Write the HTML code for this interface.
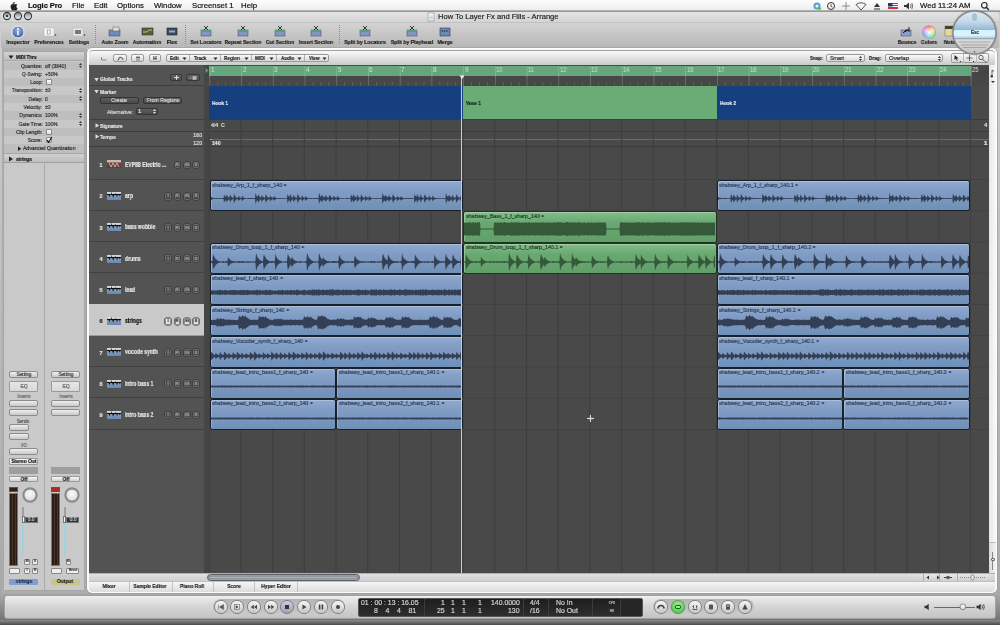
<!DOCTYPE html><html><head><meta charset="utf-8"><style>
*{margin:0;padding:0;box-sizing:border-box}
html,body{width:1000px;height:625px;overflow:hidden;background:#5e5e5e;font-family:"Liberation Sans",sans-serif}
.a{position:absolute}
.t{position:absolute;white-space:nowrap;line-height:1;-webkit-font-smoothing:antialiased;will-change:transform;-webkit-text-stroke-width:.18px}
.btn{position:absolute;border:1px solid #8a8a8a;border-radius:2px;background:linear-gradient(#f6f6f6,#d4d4d4)}
.dbtn{position:absolute;border:1px solid #2e2e2e;border-radius:2px;background:linear-gradient(#5c5c5c,#4a4a4a)}
</style></head><body>
<div class="a" style="left:0px;top:11px;width:1000px;height:614px;background:linear-gradient(#cfcfcf,#a8a8a8 95%,#6a6a6a);"></div>
<div class="a" style="left:0px;top:620px;width:1000px;height:5px;background:linear-gradient(#8a8a8a,#4a4a4a);"></div>
<div class="a" style="left:0px;top:0px;width:1000px;height:11px;background:linear-gradient(#fdfdfd,#ececec);"></div>
<div class="a" style="left:0px;top:10px;width:1000px;height:2px;background:linear-gradient(#bdbdbd,#8a8a8a);"></div>
<svg class="a" style="left:9px;top:1px;" width="10" height="10" viewBox="0 0 10 10"><path d="M5.2 2.6c.4-.5.7-1.1.6-1.7-.6 0-1.2.4-1.6.8-.3.4-.6 1-.5 1.6.6 0 1.1-.3 1.5-.7zM7.4 5.4c0-1.1.9-1.6.9-1.7-.5-.7-1.3-.8-1.5-.8-.6-.1-1.2.4-1.6.4-.3 0-.8-.3-1.4-.3-.7 0-1.4.4-1.8 1.1-.8 1.3-.2 3.3.5 4.4.4.5.8 1.1 1.4 1.1.5 0 .8-.4 1.4-.4s.8.4 1.4.3c.6 0 .9-.5 1.3-1.1.4-.6.5-1.100.6-1.200-.1 0-1.200-.5-1.200-1.800z" fill="#222"/></svg>
<div class="t" style="left:28px;top:1.95px;font-size:7.6px;color:#111;font-weight:bold;transform-origin:0 50%;letter-spacing:-0.1px">Logic Pro</div>
<div class="t" style="left:72px;top:1.86px;font-size:7.8px;color:#111;font-weight:normal;transform-origin:0 50%;">File</div>
<div class="t" style="left:94px;top:1.86px;font-size:7.8px;color:#111;font-weight:normal;transform-origin:0 50%;">Edit</div>
<div class="t" style="left:117px;top:1.86px;font-size:7.8px;color:#111;font-weight:normal;transform-origin:0 50%;">Options</div>
<div class="t" style="left:154px;top:1.86px;font-size:7.8px;color:#111;font-weight:normal;transform-origin:0 50%;">Window</div>
<div class="t" style="left:192px;top:1.86px;font-size:7.8px;color:#111;font-weight:normal;transform-origin:0 50%;">Screenset 1</div>
<div class="t" style="left:241px;top:1.86px;font-size:7.8px;color:#111;font-weight:normal;transform-origin:0 50%;">Help</div>
<div class="t" style="left:920px;top:1.86px;font-size:7.8px;color:#111;font-weight:normal;transform-origin:0 50%;">Wed 11:24 AM</div>
<svg class="a" style="left:812px;top:1px;" width="10" height="10" viewBox="0 0 10 10"><circle cx="5" cy="5" r="3.6" fill="#5aa0d8"/><circle cx="5" cy="5" r="1.5" fill="#dff"/><circle cx="7.5" cy="7.5" r="1.6" fill="#4c4"/></svg>
<svg class="a" style="left:826px;top:1px;" width="10" height="10" viewBox="0 0 10 10"><circle cx="5" cy="5" r="3.5" fill="none" stroke="#333" stroke-width="1"/><path d="M5 3v2.2l1.4 1" stroke="#333" stroke-width=".8" fill="none"/></svg>
<svg class="a" style="left:841px;top:1px;" width="10" height="10" viewBox="0 0 10 10"><path d="M1 5h8M5 1v8" stroke="#777" stroke-width=".8"/></svg>
<svg class="a" style="left:855px;top:1px;" width="12" height="10" viewBox="0 0 12 10"><path d="M1 3.5q5-3.5 10 0L6 9z" fill="none" stroke="#444" stroke-width=".9"/></svg>
<svg class="a" style="left:873px;top:1px;" width="8" height="10" viewBox="0 0 8 10"><path d="M1 6l3-4 3 4z M1 7.5h6v1H1z" fill="#333"/></svg>
<svg class="a" style="left:888px;top:2px;" width="10" height="8" viewBox="0 0 10 8"><rect x="0" y="1" width="10" height="6" fill="#c33"/><rect x="0" y="2" width="10" height="1" fill="#fff"/><rect x="0" y="4" width="10" height="1" fill="#fff"/><rect x="0" y="1" width="4.5" height="3.5" fill="#336"/></svg>
<svg class="a" style="left:903px;top:1px;" width="10" height="10" viewBox="0 0 10 10"><path d="M1 4h2l3-2.5v7L3 6H1z" fill="#333"/><path d="M7.5 3q1.3 2 0 4M8.8 2q2 3 0 6" stroke="#333" stroke-width=".7" fill="none"/></svg>
<svg class="a" style="left:980px;top:1px;" width="10" height="10" viewBox="0 0 10 10"><circle cx="4.3" cy="4.3" r="2.8" fill="none" stroke="#222" stroke-width="1.1"/><path d="M6.3 6.3l2.6 2.6" stroke="#222" stroke-width="1.4"/></svg>
<div class="a" style="left:1px;top:12px;width:998px;height:36px;background:linear-gradient(#e4e4e4 0%,#d6d6d6 25%,#c2c2c2 70%,#b6b6b6 100%);border-radius:4px 4px 0 0;"></div>
<div class="a" style="left:1px;top:22px;width:998px;height:1px;background:#b9b9b9;opacity:.7"></div>
<svg class="a" style="left:2.2px;top:11.4px;" width="10" height="10" viewBox="0 0 10 10"><defs><linearGradient id="tl" x1="0" y1="0" x2="0" y2="1"><stop offset="0" stop-color="#7a7e86"/><stop offset=".45" stop-color="#b4bcc6"/><stop offset="1" stop-color="#f4f8fc"/></linearGradient></defs><circle cx="5" cy="5" r="3.6" fill="url(#tl)" stroke="#3c3c3c" stroke-width="1.1"/><circle cx="5" cy="5" r="1.1" fill="#1a1a1a"/></svg>
<svg class="a" style="left:12.5px;top:11.4px;" width="10" height="10" viewBox="0 0 10 10"><defs><linearGradient id="tl" x1="0" y1="0" x2="0" y2="1"><stop offset="0" stop-color="#7a7e86"/><stop offset=".45" stop-color="#b4bcc6"/><stop offset="1" stop-color="#f4f8fc"/></linearGradient></defs><circle cx="5" cy="5" r="3.6" fill="url(#tl)" stroke="#3c3c3c" stroke-width="1.1"/></svg>
<svg class="a" style="left:23.0px;top:11.4px;" width="10" height="10" viewBox="0 0 10 10"><defs><linearGradient id="tl" x1="0" y1="0" x2="0" y2="1"><stop offset="0" stop-color="#7a7e86"/><stop offset=".45" stop-color="#b4bcc6"/><stop offset="1" stop-color="#f4f8fc"/></linearGradient></defs><circle cx="5" cy="5" r="3.6" fill="url(#tl)" stroke="#3c3c3c" stroke-width="1.1"/></svg>
<svg class="a" style="left:427px;top:12px;" width="8" height="10" viewBox="0 0 8 10"><rect x="1" y="1" width="6" height="8" fill="#fafafa" stroke="#888" stroke-width=".6"/><path d="M2 4h4M2 5.5h4M2 7h4" stroke="#999" stroke-width=".5"/></svg>
<div class="t" style="left:438px;top:13.15px;font-size:7.6px;color:#222;font-weight:normal;transform-origin:0 50%;">How To Layer Fx and Fills - Arrange</div>
<div class="t" style="left:-82px;width:200px;text-align:center;top:39.22px;font-size:6.2px;color:#1a1a1a;font-weight:bold;transform-origin:50% 50%;transform:scaleX(0.83);">Inspector</div>
<div class="t" style="left:-51px;width:200px;text-align:center;top:39.22px;font-size:6.2px;color:#1a1a1a;font-weight:bold;transform-origin:50% 50%;transform:scaleX(0.83);">Preferences</div>
<div class="t" style="left:-21.5px;width:200px;text-align:center;top:39.22px;font-size:6.2px;color:#1a1a1a;font-weight:bold;transform-origin:50% 50%;transform:scaleX(0.83);">Settings</div>
<div class="t" style="left:14.5px;width:200px;text-align:center;top:39.22px;font-size:6.2px;color:#1a1a1a;font-weight:bold;transform-origin:50% 50%;transform:scaleX(0.83);">Auto Zoom</div>
<div class="t" style="left:47px;width:200px;text-align:center;top:39.22px;font-size:6.2px;color:#1a1a1a;font-weight:bold;transform-origin:50% 50%;transform:scaleX(0.83);">Automation</div>
<div class="t" style="left:72px;width:200px;text-align:center;top:39.22px;font-size:6.2px;color:#1a1a1a;font-weight:bold;transform-origin:50% 50%;transform:scaleX(0.83);">Flex</div>
<div class="t" style="left:105.5px;width:200px;text-align:center;top:39.22px;font-size:6.2px;color:#1a1a1a;font-weight:bold;transform-origin:50% 50%;transform:scaleX(0.83);">Set Locators</div>
<div class="t" style="left:143px;width:200px;text-align:center;top:39.22px;font-size:6.2px;color:#1a1a1a;font-weight:bold;transform-origin:50% 50%;transform:scaleX(0.83);">Repeat Section</div>
<div class="t" style="left:179.5px;width:200px;text-align:center;top:39.22px;font-size:6.2px;color:#1a1a1a;font-weight:bold;transform-origin:50% 50%;transform:scaleX(0.83);">Cut Section</div>
<div class="t" style="left:215.5px;width:200px;text-align:center;top:39.22px;font-size:6.2px;color:#1a1a1a;font-weight:bold;transform-origin:50% 50%;transform:scaleX(0.83);">Insert Section</div>
<div class="t" style="left:265px;width:200px;text-align:center;top:39.22px;font-size:6.2px;color:#1a1a1a;font-weight:bold;transform-origin:50% 50%;transform:scaleX(0.83);">Split by Locators</div>
<div class="t" style="left:311.5px;width:200px;text-align:center;top:39.22px;font-size:6.2px;color:#1a1a1a;font-weight:bold;transform-origin:50% 50%;transform:scaleX(0.83);">Split by Playhead</div>
<div class="t" style="left:345px;width:200px;text-align:center;top:39.22px;font-size:6.2px;color:#1a1a1a;font-weight:bold;transform-origin:50% 50%;transform:scaleX(0.83);">Merge</div>
<div class="t" style="left:806.5px;width:200px;text-align:center;top:39.22px;font-size:6.2px;color:#1a1a1a;font-weight:bold;transform-origin:50% 50%;transform:scaleX(0.83);">Bounce</div>
<div class="t" style="left:828.5px;width:200px;text-align:center;top:39.22px;font-size:6.2px;color:#1a1a1a;font-weight:bold;transform-origin:50% 50%;transform:scaleX(0.83);">Colors</div>
<div class="t" style="left:851px;width:200px;text-align:center;top:39.22px;font-size:6.2px;color:#1a1a1a;font-weight:bold;transform-origin:50% 50%;transform:scaleX(0.83);">Notes</div>
<div class="a" style="left:95px;top:25px;width:1px;height:19px;background:repeating-linear-gradient(#8a8a8a 0 1px,transparent 1px 2px);"></div>
<div class="a" style="left:184.5px;top:25px;width:1px;height:19px;background:repeating-linear-gradient(#8a8a8a 0 1px,transparent 1px 2px);"></div>
<div class="a" style="left:338.5px;top:25px;width:1px;height:19px;background:repeating-linear-gradient(#8a8a8a 0 1px,transparent 1px 2px);"></div>
<svg class="a" style="left:11px;top:25px;" width="14" height="14" viewBox="0 0 14 14"><defs><radialGradient id="ib" cx=".5" cy=".35" r=".65"><stop offset="0" stop-color="#9ab6e6"/><stop offset="1" stop-color="#3a5aa0"/></radialGradient></defs><circle cx="7" cy="7" r="6" fill="url(#ib)" stroke="#eef" stroke-width="1"/><rect x="6.3" y="5.8" width="1.4" height="4.5" fill="#fff"/><circle cx="7" cy="4" r=".9" fill="#fff"/></svg>
<svg class="a" style="left:43px;top:27px;" width="14" height="10" viewBox="0 0 14 10"><rect x="1" y="1" width="10" height="8" fill="#f4f4f4" stroke="#bbb" stroke-width=".6"/><rect x="4.5" y="3" width="3" height="4" fill="none" stroke="#888" stroke-width=".6"/><circle cx="12.5" cy="8" r=".8" fill="#333"/></svg>
<svg class="a" style="left:72px;top:27px;" width="14" height="10" viewBox="0 0 14 10"><rect x="1" y="1" width="10" height="8" fill="#e8e8e8" stroke="#bbb" stroke-width=".6"/><rect x="3" y="3" width="6" height="4" fill="#777"/><circle cx="12.5" cy="8" r=".8" fill="#333"/></svg>
<svg class="a" style="left:108px;top:26px;" width="14" height="11" viewBox="0 0 14 11"><rect x="1" y="4" width="11" height="6" fill="#6a8ac0" stroke="#445" stroke-width=".5"/><rect x="5" y="1" width="6" height="4" fill="#ddd" stroke="#666" stroke-width=".5"/></svg>
<svg class="a" style="left:141px;top:27px;" width="13" height="9" viewBox="0 0 13 9"><rect x="1" y="1" width="11" height="7" fill="#58603a" stroke="#333" stroke-width=".6"/><path d="M2 5h4l2-2h3" stroke="#cde070" stroke-width=".8" fill="none"/></svg>
<svg class="a" style="left:166px;top:27px;" width="12" height="9" viewBox="0 0 12 9"><rect x="1" y="1" width="10" height="7" fill="#3c4a64" stroke="#222" stroke-width=".6"/><rect x="3" y="3.5" width="6" height="2" fill="#9ab"/></svg>
<svg class="a" style="left:199.5px;top:25px;" width="12" height="12" viewBox="0 0 12 12"><rect x="1" y="5" width="10" height="6" fill="#7d98c4" stroke="#445" stroke-width=".5"/><rect x="1" y="5" width="10" height="2" fill="#5aa070"/><path d="M4 1l4 4M8 1L4 5" stroke="#223" stroke-width=".9"/></svg>
<svg class="a" style="left:237px;top:25px;" width="12" height="12" viewBox="0 0 12 12"><rect x="1" y="5" width="10" height="6" fill="#7d98c4" stroke="#445" stroke-width=".5"/><rect x="1" y="5" width="10" height="2" fill="#5aa070"/><path d="M4 1l4 4M8 1L4 5" stroke="#223" stroke-width=".9"/></svg>
<svg class="a" style="left:273.5px;top:25px;" width="12" height="12" viewBox="0 0 12 12"><rect x="1" y="5" width="10" height="6" fill="#7d98c4" stroke="#445" stroke-width=".5"/><rect x="1" y="5" width="10" height="2" fill="#5aa070"/><path d="M4 1l4 4M8 1L4 5" stroke="#223" stroke-width=".9"/></svg>
<svg class="a" style="left:309.5px;top:25px;" width="12" height="12" viewBox="0 0 12 12"><rect x="1" y="5" width="10" height="6" fill="#7d98c4" stroke="#445" stroke-width=".5"/><rect x="1" y="5" width="10" height="2" fill="#5aa070"/><path d="M4 1l4 4M8 1L4 5" stroke="#223" stroke-width=".9"/></svg>
<svg class="a" style="left:359px;top:25px;" width="12" height="12" viewBox="0 0 12 12"><rect x="1" y="5" width="10" height="6" fill="#7d98c4" stroke="#445" stroke-width=".5"/><rect x="1" y="5" width="10" height="2" fill="#5aa070"/><path d="M4 1l4 4M8 1L4 5" stroke="#223" stroke-width=".9"/></svg>
<svg class="a" style="left:405.5px;top:25px;" width="12" height="12" viewBox="0 0 12 12"><rect x="1" y="5" width="10" height="6" fill="#7d98c4" stroke="#445" stroke-width=".5"/><rect x="1" y="5" width="10" height="2" fill="#5aa070"/><path d="M4 1l4 4M8 1L4 5" stroke="#223" stroke-width=".9"/></svg>
<svg class="a" style="left:439px;top:26px;" width="12" height="11" viewBox="0 0 12 11"><rect x="1" y="2" width="10" height="8" fill="#6a8ab8" stroke="#334" stroke-width=".6"/><path d="M2.5 5h7" stroke="#112" stroke-width="1.2" stroke-dasharray="1.4 .9"/></svg>
<svg class="a" style="left:900px;top:25px;" width="13" height="12" viewBox="0 0 13 12"><rect x="1" y="5" width="10" height="6" fill="#8aa0c8" stroke="#445" stroke-width=".5"/><path d="M3 8l3-3h3M9 2v5" stroke="#223" stroke-width="1"/></svg>
<div class="a" style="left:922.5px;top:25.5px;width:12px;height:12px;border-radius:50%;background:radial-gradient(circle,#fff 0,rgba(255,255,255,.6) 30%,rgba(255,255,255,0) 70%),conic-gradient(#f66,#fd6,#8e8,#6de,#89f,#e8e,#f66);box-shadow:0 0 0 .8px #999;"></div>
<svg class="a" style="left:944px;top:25px;" width="12" height="12" viewBox="0 0 12 12"><rect x="1" y="1" width="10" height="10" fill="#e8d890" stroke="#777" stroke-width=".6"/><rect x="1" y="1" width="10" height="3" fill="#443"/></svg>
<div class="a" style="left:2px;top:48px;width:85px;height:545px;background:#aeaeae;"></div>
<div class="a" style="left:3px;top:51px;width:82px;height:540px;background:#c8c8c8;border:1px solid #a6a6a6;border-radius:3px;"></div>
<div class="a" style="left:4px;top:52px;width:80px;height:9px;background:linear-gradient(#d4d4d4,#bdbdbd);border-bottom:1px solid #a8a8a8;"></div>
<svg class="a" style="left:8px;top:53.5px;" width="6" height="6" viewBox="0 0 6 6"><path d="M0.5 1.5h5L3 5z" fill="#222"/></svg>
<div class="t" style="left:15.5px;top:53.72px;font-size:6px;color:#111;font-weight:bold;transform-origin:0 50%;transform:scaleX(0.74);">MIDI Thru</div>
<div class="a" style="left:4px;top:61.6px;width:80px;height:8.3px;background:#bebebe;"></div>
<div class="t" style="right:957.7px;top:63.67px;font-size:5.9px;color:#2a2a2a;font-weight:normal;text-align:right;transform-origin:100% 50%;transform:scaleX(0.84);">Quantize:</div>
<div class="t" style="left:45px;top:63.67px;font-size:5.9px;color:#2a2a2a;font-weight:normal;transform-origin:0 50%;transform:scaleX(0.84);">off (3840)</div>
<svg class="a" style="left:78px;top:62.2px;" width="5" height="7" viewBox="0 0 5 7"><path d="M1 3l1.5-2L4 3zM1 4l1.5 2L4 4z" fill="#333"/></svg>
<div class="t" style="right:957.7px;top:71.94px;font-size:5.9px;color:#2a2a2a;font-weight:normal;text-align:right;transform-origin:100% 50%;transform:scaleX(0.84);">Q-Swing:</div>
<div class="t" style="left:45px;top:71.94px;font-size:5.9px;color:#2a2a2a;font-weight:normal;transform-origin:0 50%;transform:scaleX(0.84);">+50%</div>
<div class="a" style="left:4px;top:78.14000000000001px;width:80px;height:8.3px;background:#bebebe;"></div>
<div class="t" style="right:957.7px;top:80.21px;font-size:5.9px;color:#2a2a2a;font-weight:normal;text-align:right;transform-origin:100% 50%;transform:scaleX(0.84);">Loop:</div>
<div class="a" style="left:45.5px;top:79.24000000000001px;width:6px;height:6px;background:linear-gradient(#fff,#ddd);border:1px solid #888;border-radius:1px;"></div>
<div class="t" style="right:957.7px;top:88.48px;font-size:5.9px;color:#2a2a2a;font-weight:normal;text-align:right;transform-origin:100% 50%;transform:scaleX(0.84);">Transposition:</div>
<div class="t" style="left:45px;top:88.48px;font-size:5.9px;color:#2a2a2a;font-weight:normal;transform-origin:0 50%;transform:scaleX(0.84);">±0</div>
<svg class="a" style="left:78px;top:87.01px;" width="5" height="7" viewBox="0 0 5 7"><path d="M1 3l1.5-2L4 3zM1 4l1.5 2L4 4z" fill="#333"/></svg>
<div class="a" style="left:4px;top:94.68px;width:80px;height:8.3px;background:#bebebe;"></div>
<div class="t" style="right:957.7px;top:96.75px;font-size:5.9px;color:#2a2a2a;font-weight:normal;text-align:right;transform-origin:100% 50%;transform:scaleX(0.84);">Delay:</div>
<div class="t" style="left:45px;top:96.75px;font-size:5.9px;color:#2a2a2a;font-weight:normal;transform-origin:0 50%;transform:scaleX(0.84);">0</div>
<svg class="a" style="left:78px;top:95.28px;" width="5" height="7" viewBox="0 0 5 7"><path d="M1 3l1.5-2L4 3zM1 4l1.5 2L4 4z" fill="#333"/></svg>
<div class="t" style="right:957.7px;top:105.02px;font-size:5.9px;color:#2a2a2a;font-weight:normal;text-align:right;transform-origin:100% 50%;transform:scaleX(0.84);">Velocity:</div>
<div class="t" style="left:45px;top:105.02px;font-size:5.9px;color:#2a2a2a;font-weight:normal;transform-origin:0 50%;transform:scaleX(0.84);">±0</div>
<div class="a" style="left:4px;top:111.22px;width:80px;height:8.3px;background:#bebebe;"></div>
<div class="t" style="right:957.7px;top:113.29px;font-size:5.9px;color:#2a2a2a;font-weight:normal;text-align:right;transform-origin:100% 50%;transform:scaleX(0.84);">Dynamics:</div>
<div class="t" style="left:45px;top:113.29px;font-size:5.9px;color:#2a2a2a;font-weight:normal;transform-origin:0 50%;transform:scaleX(0.84);">100%</div>
<svg class="a" style="left:78px;top:111.82px;" width="5" height="7" viewBox="0 0 5 7"><path d="M1 3l1.5-2L4 3zM1 4l1.5 2L4 4z" fill="#333"/></svg>
<div class="t" style="right:957.7px;top:121.56px;font-size:5.9px;color:#2a2a2a;font-weight:normal;text-align:right;transform-origin:100% 50%;transform:scaleX(0.84);">Gate Time:</div>
<div class="t" style="left:45px;top:121.56px;font-size:5.9px;color:#2a2a2a;font-weight:normal;transform-origin:0 50%;transform:scaleX(0.84);">100%</div>
<svg class="a" style="left:78px;top:120.09px;" width="5" height="7" viewBox="0 0 5 7"><path d="M1 3l1.5-2L4 3zM1 4l1.5 2L4 4z" fill="#333"/></svg>
<div class="a" style="left:4px;top:127.76000000000002px;width:80px;height:8.3px;background:#bebebe;"></div>
<div class="t" style="right:957.7px;top:129.83px;font-size:5.9px;color:#2a2a2a;font-weight:normal;text-align:right;transform-origin:100% 50%;transform:scaleX(0.84);">Clip Length:</div>
<div class="a" style="left:45.5px;top:128.86px;width:6px;height:6px;background:linear-gradient(#fff,#ddd);border:1px solid #888;border-radius:1px;"></div>
<div class="t" style="right:957.7px;top:138.10px;font-size:5.9px;color:#2a2a2a;font-weight:normal;text-align:right;transform-origin:100% 50%;transform:scaleX(0.84);">Score:</div>
<div class="a" style="left:45.5px;top:137.13px;width:6px;height:6px;background:linear-gradient(#fff,#ddd);border:1px solid #888;border-radius:1px;"></div>
<svg class="a" style="left:45px;top:135.63px;" width="8" height="8" viewBox="0 0 8 8"><path d="M2 4.2l1.6 2L6.8 1" stroke="#111" stroke-width="1.1" fill="none"/></svg>
<div class="a" style="left:4px;top:144.29999999999998px;width:80px;height:8.3px;background:#bebebe;"></div>
<svg class="a" style="left:16.5px;top:146.2px;" width="5" height="6" viewBox="0 0 5 6"><path d="M1 0.5v4.6l3.3-2.3z" fill="#222"/></svg>
<div class="t" style="left:23px;top:146.37px;font-size:5.9px;color:#222;font-weight:normal;transform-origin:0 50%;transform:scaleX(0.86);">Advanced Quantization</div>
<div class="a" style="left:4px;top:153px;width:80px;height:1px;background:#a8a8a8;"></div>
<div class="a" style="left:4px;top:154px;width:80px;height:9px;background:linear-gradient(#d0d0d0,#bebebe);border-bottom:1px solid #a0a0a0;"></div>
<svg class="a" style="left:8px;top:155.5px;" width="6" height="6" viewBox="0 0 6 6"><path d="M1 0.5v5l4-2.5z" fill="#222"/></svg>
<div class="t" style="left:15.5px;top:156.32px;font-size:6px;color:#111;font-weight:bold;transform-origin:0 50%;transform:scaleX(0.8);">strings</div>
<div class="a" style="left:4px;top:164px;width:80px;height:426px;background:#c9c9c9;"></div>
<div class="a" style="left:44px;top:164px;width:1px;height:426px;background:#a9a9a9;"></div>
<div class="a" style="left:9.4px;top:370.6px;width:29px;height:7.6px;background:linear-gradient(#f0f0f0,#c8c8c8);border:1px solid #8c8c8c;border-radius:2px;"></div>
<div class="t" style="left:-76px;width:200px;text-align:center;top:371.71px;font-size:5.6px;color:#333;font-weight:normal;transform-origin:50% 50%;transform:scaleX(0.85);">Setting</div>
<div class="a" style="left:9.4px;top:381px;width:29px;height:11px;background:linear-gradient(#e6e6e6,#d8d8d8);border:1px solid #9a9a9a;border-radius:1px;"></div>
<div class="t" style="left:-76px;width:200px;text-align:center;top:383.91px;font-size:5.6px;color:#555;font-weight:normal;transform-origin:50% 50%;transform:scaleX(0.85);">EQ</div>
<div class="t" style="left:-76px;width:200px;text-align:center;top:393.70px;font-size:5.2px;color:#666;font-weight:normal;transform-origin:50% 50%;transform:scaleX(0.85);">Inserts</div>
<div class="a" style="left:9.4px;top:400px;width:29px;height:6.5px;background:linear-gradient(#eee,#c8c8c8);border:1px solid #8c8c8c;border-radius:2px;"></div>
<div class="a" style="left:9.4px;top:409px;width:29px;height:6.5px;background:linear-gradient(#eee,#c8c8c8);border:1px solid #8c8c8c;border-radius:2px;"></div>
<div class="a" style="left:9.4px;top:467px;width:29px;height:7px;background:#9e9e9e;"></div>
<div class="a" style="left:9.4px;top:475.8px;width:29px;height:6.5px;background:linear-gradient(#fafafa,#d0d0d0);border:1px solid #999;border-radius:1px;"></div>
<div class="t" style="left:-76px;width:200px;text-align:center;top:476.51px;font-size:5.6px;color:#111;font-weight:bold;transform-origin:50% 50%;transform:scaleX(0.85);">Off</div>
<div class="a" style="left:9.4px;top:487px;width:9px;height:5px;background:#3a1a14;border:1px solid #555;"></div>
<div class="a" style="left:9.4px;top:493px;width:9px;height:72.5px;background:repeating-linear-gradient(90deg,#2a1c16 0 2px,#4a3428 2px 3px);border:1px solid #777;"></div>
<svg class="a" style="left:22px;top:486.5px;" width="16" height="16" viewBox="0 0 16 16"><defs><radialGradient id="pk" cx=".5" cy=".4" r=".6"><stop offset="0" stop-color="#fafafa"/><stop offset="1" stop-color="#d8d8d8"/></radialGradient></defs><circle cx="8" cy="8" r="6.6" fill="url(#pk)" stroke="#8a8a8a" stroke-width="2.1"/></svg>
<div class="a" style="left:22.3px;top:507px;width:2.2px;height:16px;background:#a0a0a0;"></div>
<div class="a" style="left:22.3px;top:522px;width:2.2px;height:34px;background:#9cd4e4;"></div>
<div class="a" style="left:21.5px;top:515.5px;width:3px;height:7px;background:#f4f4f4;border:1px solid #777;"></div>
<div class="a" style="left:24.5px;top:516.5px;width:13px;height:6px;background:#2e3438;border:1px solid #777;"></div>
<div class="t" style="left:-69px;width:200px;text-align:center;top:517.30px;font-size:5.2px;color:#d0d0d0;font-weight:normal;transform-origin:50% 50%;transform:scaleX(0.9);">0.0</div>
<div class="a" style="left:24px;top:559px;width:5.5px;height:6px;background:#eee;border:1px solid #888;border-radius:1px;"></div>
<div class="t" style="left:-73.2px;width:200px;text-align:center;top:560.18px;font-size:3.8px;color:#333;font-weight:normal;transform-origin:50% 50%;">M</div>
<div class="a" style="left:9.4px;top:568px;width:11px;height:6px;background:#eee;border:1px solid #888;border-radius:1px;"></div>
<div class="a" style="left:50.9px;top:370.6px;width:29px;height:7.6px;background:linear-gradient(#f0f0f0,#c8c8c8);border:1px solid #8c8c8c;border-radius:2px;"></div>
<div class="t" style="left:-34.5px;width:200px;text-align:center;top:371.71px;font-size:5.6px;color:#333;font-weight:normal;transform-origin:50% 50%;transform:scaleX(0.85);">Setting</div>
<div class="a" style="left:50.9px;top:381px;width:29px;height:11px;background:linear-gradient(#e6e6e6,#d8d8d8);border:1px solid #9a9a9a;border-radius:1px;"></div>
<div class="t" style="left:-34.5px;width:200px;text-align:center;top:383.91px;font-size:5.6px;color:#555;font-weight:normal;transform-origin:50% 50%;transform:scaleX(0.85);">EQ</div>
<div class="t" style="left:-34.5px;width:200px;text-align:center;top:393.70px;font-size:5.2px;color:#666;font-weight:normal;transform-origin:50% 50%;transform:scaleX(0.85);">Inserts</div>
<div class="a" style="left:50.9px;top:400px;width:29px;height:6.5px;background:linear-gradient(#eee,#c8c8c8);border:1px solid #8c8c8c;border-radius:2px;"></div>
<div class="a" style="left:50.9px;top:409px;width:29px;height:6.5px;background:linear-gradient(#eee,#c8c8c8);border:1px solid #8c8c8c;border-radius:2px;"></div>
<div class="a" style="left:50.9px;top:467px;width:29px;height:7px;background:#9e9e9e;"></div>
<div class="a" style="left:50.9px;top:475.8px;width:29px;height:6.5px;background:linear-gradient(#fafafa,#d0d0d0);border:1px solid #999;border-radius:1px;"></div>
<div class="t" style="left:-34.5px;width:200px;text-align:center;top:476.51px;font-size:5.6px;color:#111;font-weight:bold;transform-origin:50% 50%;transform:scaleX(0.85);">Off</div>
<div class="a" style="left:50.9px;top:487px;width:9px;height:5px;background:#b02a20;border:1px solid #555;"></div>
<div class="a" style="left:50.9px;top:493px;width:9px;height:72.5px;background:repeating-linear-gradient(90deg,#2a1c16 0 2px,#4a3428 2px 3px);border:1px solid #777;"></div>
<svg class="a" style="left:63.5px;top:486.5px;" width="16" height="16" viewBox="0 0 16 16"><defs><radialGradient id="pk" cx=".5" cy=".4" r=".6"><stop offset="0" stop-color="#fafafa"/><stop offset="1" stop-color="#d8d8d8"/></radialGradient></defs><circle cx="8" cy="8" r="6.6" fill="url(#pk)" stroke="#8a8a8a" stroke-width="2.1"/></svg>
<div class="a" style="left:63.8px;top:507px;width:2.2px;height:16px;background:#a0a0a0;"></div>
<div class="a" style="left:63.8px;top:522px;width:2.2px;height:34px;background:#9cd4e4;"></div>
<div class="a" style="left:63.0px;top:515.5px;width:3px;height:7px;background:#f4f4f4;border:1px solid #777;"></div>
<div class="a" style="left:66.0px;top:516.5px;width:13px;height:6px;background:#2e3438;border:1px solid #777;"></div>
<div class="t" style="left:-27.5px;width:200px;text-align:center;top:517.30px;font-size:5.2px;color:#d0d0d0;font-weight:normal;transform-origin:50% 50%;transform:scaleX(0.9);">0.0</div>
<div class="a" style="left:65.5px;top:559px;width:5.5px;height:6px;background:#eee;border:1px solid #888;border-radius:1px;"></div>
<div class="t" style="left:-31.700000000000003px;width:200px;text-align:center;top:560.18px;font-size:3.8px;color:#333;font-weight:normal;transform-origin:50% 50%;">M</div>
<div class="a" style="left:50.9px;top:568px;width:11px;height:6px;background:#eee;border:1px solid #888;border-radius:1px;"></div>
<div class="a" style="left:9.4px;top:424px;width:20px;height:7px;background:linear-gradient(#eee,#c8c8c8);border:1px solid #8c8c8c;border-radius:2px;"></div>
<div class="a" style="left:9.4px;top:433px;width:20px;height:7px;background:linear-gradient(#eee,#c8c8c8);border:1px solid #8c8c8c;border-radius:2px;"></div>
<div class="t" style="left:-77px;width:200px;text-align:center;top:418.50px;font-size:5.2px;color:#555;font-weight:normal;transform-origin:50% 50%;transform:scaleX(0.85);">Sends</div>
<div class="t" style="left:-76px;width:200px;text-align:center;top:442.50px;font-size:5.2px;color:#666;font-weight:normal;transform-origin:50% 50%;transform:scaleX(0.85);">I/O</div>
<div class="a" style="left:9.4px;top:448px;width:29px;height:7px;background:linear-gradient(#eee,#c8c8c8);border:1px solid #8c8c8c;border-radius:2px;"></div>
<div class="a" style="left:9.4px;top:458px;width:29px;height:7px;background:linear-gradient(#fafafa,#dedede);border:1px solid #999;border-radius:1px;"></div>
<div class="t" style="left:-76px;width:200px;text-align:center;top:458.82px;font-size:5.8px;color:#111;font-weight:bold;transform-origin:50% 50%;transform:scaleX(0.85);">Stereo Out</div>
<div class="a" style="left:32px;top:559px;width:5.5px;height:6px;background:#eee;border:1px solid #888;border-radius:1px;"></div>
<div class="t" style="left:-65.2px;width:200px;text-align:center;top:560.18px;font-size:3.8px;color:#333;font-weight:normal;transform-origin:50% 50%;">S</div>
<div class="a" style="left:24px;top:568px;width:5.5px;height:6px;background:#eee;border:1px solid #888;border-radius:1px;"></div>
<div class="a" style="left:32px;top:568px;width:5.5px;height:6px;background:#eee;border:1px solid #888;border-radius:1px;"></div>
<div class="t" style="left:-73.2px;width:200px;text-align:center;top:569.18px;font-size:3.8px;color:#333;font-weight:normal;transform-origin:50% 50%;">I</div>
<div class="t" style="left:-65.2px;width:200px;text-align:center;top:569.18px;font-size:3.8px;color:#333;font-weight:normal;transform-origin:50% 50%;">R</div>
<div class="a" style="left:66px;top:568px;width:13px;height:6px;background:#eee;border:1px solid #888;border-radius:1px;"></div>
<div class="t" style="left:-27.5px;width:200px;text-align:center;top:569.18px;font-size:3.8px;color:#333;font-weight:normal;transform-origin:50% 50%;">Bnce</div>
<div class="a" style="left:9.4px;top:578.5px;width:29px;height:6px;background:#7ea0cc;border-radius:1px;"></div>
<div class="t" style="left:-76px;width:200px;text-align:center;top:578.82px;font-size:5.8px;color:#1a2a4a;font-weight:bold;transform-origin:50% 50%;transform:scaleX(0.85);">strings</div>
<div class="a" style="left:50.9px;top:578.5px;width:29px;height:6px;background:#c6c68a;border-radius:1px;"></div>
<div class="t" style="left:-34.599999999999994px;width:200px;text-align:center;top:578.82px;font-size:5.8px;color:#222;font-weight:bold;transform-origin:50% 50%;transform:scaleX(0.85);">Output</div>
<div class="a" style="left:87px;top:48px;width:910px;height:545px;background:#fbfbfb;border-radius:5px;box-shadow:0 0 0 .6px #9a9a9a;"></div>
<div class="a" style="left:89px;top:50.2px;width:906px;height:14.8px;background:linear-gradient(#fafafa,#ececec 30%,#cacaca);border-top:.8px solid #a0a0a0;border-radius:4px 4px 0 0;"></div>
<div class="a" style="left:98px;top:54.3px;width:11px;height:7.5px;background:linear-gradient(#fafafa,#d6d6d6);border:1px solid #9a9a9a;border-radius:2px;border-color:transparent;background:none;"></div>
<div class="a" style="left:113px;top:54.3px;width:14px;height:7.5px;background:linear-gradient(#fafafa,#d6d6d6);border:1px solid #9a9a9a;border-radius:2px;"></div>
<div class="a" style="left:131px;top:54.3px;width:13px;height:7.5px;background:linear-gradient(#fafafa,#d6d6d6);border:1px solid #9a9a9a;border-radius:2px;"></div>
<div class="a" style="left:148.5px;top:54.3px;width:12.0px;height:7.5px;background:linear-gradient(#fafafa,#d6d6d6);border:1px solid #9a9a9a;border-radius:2px;"></div>
<svg class="a" style="left:100px;top:54.5px;" width="8" height="7" viewBox="0 0 8 7"><path d="M1.5 2v3h5" stroke="#666" stroke-width=".7" fill="none"/></svg>
<svg class="a" style="left:116px;top:54.5px;" width="8" height="7" viewBox="0 0 8 7"><path d="M1.5 5.5l2-2M3 4.5a1.3 1.3 0 1 1 2-2l.8.8M4.5 3a1.3 1.3 0 1 1 2 2" stroke="#333" stroke-width=".7" fill="none"/></svg>
<svg class="a" style="left:134px;top:54.5px;" width="8" height="7" viewBox="0 0 8 7"><path d="M3 1v5M5 1v5M2 2.5h4" stroke="#333" stroke-width=".6"/></svg>
<div class="t" style="left:54.5px;width:200px;text-align:center;top:55.22px;font-size:6px;color:#222;font-weight:bold;transform-origin:50% 50%;transform:scaleX(0.8);">H</div>
<div class="a" style="left:165.5px;top:54.3px;width:163px;height:7.5px;background:linear-gradient(#fafafa,#d6d6d6);border:1px solid #9a9a9a;border-radius:2px;"></div>
<div class="t" style="left:170.0px;top:55.22px;font-size:6px;color:#222;font-weight:bold;transform-origin:0 50%;transform:scaleX(0.78);">Edit</div>
<svg class="a" style="left:182px;top:55.5px;" width="5" height="5" viewBox="0 0 5 5"><path d="M.5 1.5h4L2.5 4z" fill="#222"/></svg>
<div class="a" style="left:189px;top:54.8px;width:1px;height:6.5px;background:#b0b0b0;"></div>
<div class="t" style="left:193.5px;top:55.22px;font-size:6px;color:#222;font-weight:bold;transform-origin:0 50%;transform:scaleX(0.78);">Track</div>
<svg class="a" style="left:212.5px;top:55.5px;" width="5" height="5" viewBox="0 0 5 5"><path d="M.5 1.5h4L2.5 4z" fill="#222"/></svg>
<div class="a" style="left:219.5px;top:54.8px;width:1px;height:6.5px;background:#b0b0b0;"></div>
<div class="t" style="left:224.0px;top:55.22px;font-size:6px;color:#222;font-weight:bold;transform-origin:0 50%;transform:scaleX(0.78);">Region</div>
<svg class="a" style="left:243.5px;top:55.5px;" width="5" height="5" viewBox="0 0 5 5"><path d="M.5 1.5h4L2.5 4z" fill="#222"/></svg>
<div class="a" style="left:250.5px;top:54.8px;width:1px;height:6.5px;background:#b0b0b0;"></div>
<div class="t" style="left:255.0px;top:55.22px;font-size:6px;color:#222;font-weight:bold;transform-origin:0 50%;transform:scaleX(0.78);">MIDI</div>
<svg class="a" style="left:269px;top:55.5px;" width="5" height="5" viewBox="0 0 5 5"><path d="M.5 1.5h4L2.5 4z" fill="#222"/></svg>
<div class="a" style="left:276px;top:54.8px;width:1px;height:6.5px;background:#b0b0b0;"></div>
<div class="t" style="left:280.5px;top:55.22px;font-size:6px;color:#222;font-weight:bold;transform-origin:0 50%;transform:scaleX(0.78);">Audio</div>
<svg class="a" style="left:297px;top:55.5px;" width="5" height="5" viewBox="0 0 5 5"><path d="M.5 1.5h4L2.5 4z" fill="#222"/></svg>
<div class="a" style="left:304px;top:54.8px;width:1px;height:6.5px;background:#b0b0b0;"></div>
<div class="t" style="left:308.5px;top:55.22px;font-size:6px;color:#222;font-weight:bold;transform-origin:0 50%;transform:scaleX(0.78);">View</div>
<svg class="a" style="left:321.5px;top:55.5px;" width="5" height="5" viewBox="0 0 5 5"><path d="M.5 1.5h4L2.5 4z" fill="#222"/></svg>
<div class="t" style="left:810px;top:55.22px;font-size:6px;color:#222;font-weight:bold;transform-origin:0 50%;transform:scaleX(0.78);">Snap:</div>
<div class="a" style="left:826px;top:54.3px;width:38.6px;height:7.5px;background:linear-gradient(#fafafa,#dadada);border:1px solid #9a9a9a;border-radius:2px;"></div>
<div class="t" style="left:830px;top:55.22px;font-size:6px;color:#222;font-weight:normal;transform-origin:0 50%;transform:scaleX(0.88);">Smart</div>
<svg class="a" style="left:858px;top:54.8px;" width="5" height="7" viewBox="0 0 5 7"><path d="M1 3l1.5-2L4 3zM1 4l1.5 2L4 4z" fill="#333"/></svg>
<div class="t" style="left:869px;top:55.22px;font-size:6px;color:#222;font-weight:bold;transform-origin:0 50%;transform:scaleX(0.78);">Drag:</div>
<div class="a" style="left:884.5px;top:54.3px;width:58px;height:7.5px;background:linear-gradient(#fafafa,#dadada);border:1px solid #9a9a9a;border-radius:2px;"></div>
<div class="t" style="left:888.5px;top:55.22px;font-size:6px;color:#222;font-weight:normal;transform-origin:0 50%;transform:scaleX(0.95);">Overlap</div>
<svg class="a" style="left:937px;top:54.8px;" width="5" height="7" viewBox="0 0 5 7"><path d="M1 3l1.5-2L4 3zM1 4l1.5 2L4 4z" fill="#333"/></svg>
<div class="a" style="left:950.5px;top:53px;width:38px;height:10px;background:linear-gradient(#fafafa,#d8d8d8);border:1px solid #9a9a9a;border-radius:2px;"></div>
<div class="a" style="left:963px;top:53.5px;width:1px;height:9px;background:#bbb"></div>
<div class="a" style="left:975.5px;top:53.5px;width:1px;height:9px;background:#bbb"></div>
<svg class="a" style="left:952px;top:54px;" width="10" height="9" viewBox="0 0 10 9"><path d="M2.5 1l4 3.3-1.8.2 1 2.2-.8.3-1-2.2-1.4 1.2z" fill="#222"/><circle cx="8.5" cy="7.5" r=".6" fill="#222"/></svg>
<svg class="a" style="left:965px;top:54px;" width="10" height="9" viewBox="0 0 10 9"><path d="M4.5 1v6M1.5 4h6" stroke="#444" stroke-width=".8"/><circle cx="8.5" cy="7.5" r=".6" fill="#222"/></svg>
<svg class="a" style="left:977px;top:54px;" width="10" height="9" viewBox="0 0 10 9"><circle cx="4" cy="3.5" r="2.2" fill="none" stroke="#444" stroke-width=".8"/><path d="M5.6 5.2l2 2" stroke="#444" stroke-width="1"/><circle cx="8.8" cy="7.8" r=".6" fill="#222"/></svg>
<div class="a" style="left:89px;top:65px;width:900px;height:508px;background:#494949;"></div>
<div class="a" style="left:89px;top:65px;width:114.5px;height:508px;background:#535353;"></div>
<div class="a" style="left:203.5px;top:65px;width:5.5px;height:508px;background:#454545;"></div>
<div class="a" style="left:89px;top:85.3px;width:114.5px;height:0.8px;background:#3e3e3e;"></div>
<svg class="a" style="left:93.8px;top:76.6px;" width="5" height="5" viewBox="0 0 5 5"><path d="M.3 1h4.4L2.5 4.6z" fill="#ddd"/></svg>
<div class="t" style="left:100px;top:76.42px;font-size:6.2px;color:#e6e6e6;font-weight:bold;transform-origin:0 50%;transform:scaleX(0.8);">Global Tracks</div>
<div class="a" style="left:169.6px;top:74px;width:12.4px;height:6.8px;background:linear-gradient(#626262,#4e4e4e);border:1px solid #383838;border-radius:2px;"></div>
<svg class="a" style="left:172.5px;top:74px;" width="7" height="7" viewBox="0 0 7 7"><rect x="3" y="1.2" width="1.1" height="4.6" fill="#e0e0e0"/><rect x="1.2" y="3" width="4.6" height="1.1" fill="#e0e0e0"/></svg>
<div class="a" style="left:186px;top:74px;width:13.5px;height:6.8px;background:linear-gradient(#626262,#4e4e4e);border:1px solid #383838;border-radius:2px;"></div>
<svg class="a" style="left:189px;top:74.5px;" width="8" height="6" viewBox="0 0 8 6"><path d="M.5 3h2" stroke="#ccc" stroke-width=".8"/><rect x="3.5" y="1.2" width="4" height="3.6" fill="#bbb"/></svg>
<svg class="a" style="left:93.8px;top:88.8px;" width="5" height="5" viewBox="0 0 5 5"><path d="M.3 1h4.4L2.5 4.6z" fill="#ddd"/></svg>
<div class="t" style="left:100px;top:88.62px;font-size:6.2px;color:#e6e6e6;font-weight:bold;transform-origin:0 50%;transform:scaleX(0.8);">Marker</div>
<div class="a" style="left:99.5px;top:96.5px;width:39px;height:7px;background:linear-gradient(#5e5e5e,#4a4a4a);border:1px solid #333;border-radius:2px;"></div>
<div class="t" style="left:19px;width:200px;text-align:center;top:97.22px;font-size:6px;color:#dadada;font-weight:normal;transform-origin:50% 50%;transform:scaleX(0.87);">Create</div>
<div class="a" style="left:143px;top:96.5px;width:39px;height:7px;background:linear-gradient(#5e5e5e,#4a4a4a);border:1px solid #333;border-radius:2px;"></div>
<div class="t" style="left:62.5px;width:200px;text-align:center;top:97.22px;font-size:6px;color:#dadada;font-weight:normal;transform-origin:50% 50%;transform:scaleX(0.87);">From Regions</div>
<div class="t" style="right:867px;top:108.52px;font-size:6px;color:#dadada;font-weight:normal;text-align:right;transform-origin:100% 50%;transform:scaleX(0.87);">Alternative:</div>
<div class="a" style="left:135.5px;top:107.5px;width:22px;height:7px;background:linear-gradient(#5e5e5e,#4a4a4a);border:1px solid #333;border-radius:2px;"></div>
<div class="t" style="left:138px;top:108.32px;font-size:6px;color:#ddd;font-weight:normal;transform-origin:0 50%;">1</div>
<svg class="a" style="left:151.5px;top:108px;" width="5" height="7" viewBox="0 0 5 7"><path d="M1 3l1.5-2L4 3zM1 4l1.5 2L4 4z" fill="#ddd"/></svg>
<div class="a" style="left:89px;top:119px;width:114.5px;height:0.8px;background:#3e3e3e;"></div>
<svg class="a" style="left:94.5px;top:122.6px;" width="5" height="5" viewBox="0 0 5 5"><path d="M.5 .3v4.4L4.2 2.5z" fill="#ddd"/></svg>
<div class="t" style="left:100px;top:122.62px;font-size:6.2px;color:#e6e6e6;font-weight:bold;transform-origin:0 50%;transform:scaleX(0.8);">Signature</div>
<div class="a" style="left:89px;top:131px;width:114.5px;height:0.8px;background:#3e3e3e;"></div>
<svg class="a" style="left:94.5px;top:134.4px;" width="5" height="5" viewBox="0 0 5 5"><path d="M.5 .3v4.4L4.2 2.5z" fill="#ddd"/></svg>
<div class="t" style="left:100px;top:134.42px;font-size:6.2px;color:#e6e6e6;font-weight:bold;transform-origin:0 50%;transform:scaleX(0.8);">Tempo</div>
<div class="t" style="right:798px;top:132.12px;font-size:6px;color:#e0e0e0;font-weight:normal;text-align:right;transform-origin:100% 50%;transform:scaleX(0.87);">160</div>
<div class="t" style="right:798px;top:139.92px;font-size:6px;color:#e0e0e0;font-weight:normal;text-align:right;transform-origin:100% 50%;transform:scaleX(0.87);">120</div>
<div class="a" style="left:89px;top:145.5px;width:114.5px;height:0.8px;background:#3e3e3e;"></div>
<div class="a" style="left:209px;top:65.5px;width:762px;height:10.5px;background:#66a67e;"></div>
<div class="a" style="left:203.5px;top:65.5px;width:5.5px;height:10.5px;background:#3c4a40;"></div>
<svg class="a" style="left:204.5px;top:67px;" width="4" height="7" viewBox="0 0 4 7"><path d="M.5 .8v5.4l3-2.7z" fill="#7e8a82"/></svg>
<div class="a" style="left:971px;top:65.5px;width:18px;height:10.5px;background:#454545;"></div>
<div class="a" style="left:203.5px;top:76px;width:785.5px;height:10px;background:#474747;"></div>
<svg class="a" style="left:203.5px;top:76px;" width="786" height="10" viewBox="0 0 786 10"><rect x="5.50" y="0" width=".7" height="10" fill="#767676"/><rect x="13.43" y="6.5" width=".7" height="2.2" fill="#7a7a7a"/><rect x="21.36" y="6.5" width=".7" height="2.2" fill="#7a7a7a"/><rect x="29.29" y="6.5" width=".7" height="2.2" fill="#7a7a7a"/><rect x="37.22" y="0" width=".7" height="10" fill="#767676"/><rect x="45.15" y="6.5" width=".7" height="2.2" fill="#7a7a7a"/><rect x="53.08" y="6.5" width=".7" height="2.2" fill="#7a7a7a"/><rect x="61.01" y="6.5" width=".7" height="2.2" fill="#7a7a7a"/><rect x="68.94" y="0" width=".7" height="10" fill="#767676"/><rect x="76.87" y="6.5" width=".7" height="2.2" fill="#7a7a7a"/><rect x="84.80" y="6.5" width=".7" height="2.2" fill="#7a7a7a"/><rect x="92.73" y="6.5" width=".7" height="2.2" fill="#7a7a7a"/><rect x="100.66" y="0" width=".7" height="10" fill="#767676"/><rect x="108.59" y="6.5" width=".7" height="2.2" fill="#7a7a7a"/><rect x="116.52" y="6.5" width=".7" height="2.2" fill="#7a7a7a"/><rect x="124.45" y="6.5" width=".7" height="2.2" fill="#7a7a7a"/><rect x="132.38" y="0" width=".7" height="10" fill="#767676"/><rect x="140.31" y="6.5" width=".7" height="2.2" fill="#7a7a7a"/><rect x="148.24" y="6.5" width=".7" height="2.2" fill="#7a7a7a"/><rect x="156.17" y="6.5" width=".7" height="2.2" fill="#7a7a7a"/><rect x="164.10" y="0" width=".7" height="10" fill="#767676"/><rect x="172.03" y="6.5" width=".7" height="2.2" fill="#7a7a7a"/><rect x="179.96" y="6.5" width=".7" height="2.2" fill="#7a7a7a"/><rect x="187.89" y="6.5" width=".7" height="2.2" fill="#7a7a7a"/><rect x="195.82" y="0" width=".7" height="10" fill="#767676"/><rect x="203.75" y="6.5" width=".7" height="2.2" fill="#7a7a7a"/><rect x="211.68" y="6.5" width=".7" height="2.2" fill="#7a7a7a"/><rect x="219.61" y="6.5" width=".7" height="2.2" fill="#7a7a7a"/><rect x="227.54" y="0" width=".7" height="10" fill="#767676"/><rect x="235.47" y="6.5" width=".7" height="2.2" fill="#7a7a7a"/><rect x="243.40" y="6.5" width=".7" height="2.2" fill="#7a7a7a"/><rect x="251.33" y="6.5" width=".7" height="2.2" fill="#7a7a7a"/><rect x="259.26" y="0" width=".7" height="10" fill="#767676"/><rect x="267.19" y="6.5" width=".7" height="2.2" fill="#7a7a7a"/><rect x="275.12" y="6.5" width=".7" height="2.2" fill="#7a7a7a"/><rect x="283.05" y="6.5" width=".7" height="2.2" fill="#7a7a7a"/><rect x="290.98" y="0" width=".7" height="10" fill="#767676"/><rect x="298.91" y="6.5" width=".7" height="2.2" fill="#7a7a7a"/><rect x="306.84" y="6.5" width=".7" height="2.2" fill="#7a7a7a"/><rect x="314.77" y="6.5" width=".7" height="2.2" fill="#7a7a7a"/><rect x="322.70" y="0" width=".7" height="10" fill="#767676"/><rect x="330.63" y="6.5" width=".7" height="2.2" fill="#7a7a7a"/><rect x="338.56" y="6.5" width=".7" height="2.2" fill="#7a7a7a"/><rect x="346.49" y="6.5" width=".7" height="2.2" fill="#7a7a7a"/><rect x="354.42" y="0" width=".7" height="10" fill="#767676"/><rect x="362.35" y="6.5" width=".7" height="2.2" fill="#7a7a7a"/><rect x="370.28" y="6.5" width=".7" height="2.2" fill="#7a7a7a"/><rect x="378.21" y="6.5" width=".7" height="2.2" fill="#7a7a7a"/><rect x="386.14" y="0" width=".7" height="10" fill="#767676"/><rect x="394.07" y="6.5" width=".7" height="2.2" fill="#7a7a7a"/><rect x="402.00" y="6.5" width=".7" height="2.2" fill="#7a7a7a"/><rect x="409.93" y="6.5" width=".7" height="2.2" fill="#7a7a7a"/><rect x="417.86" y="0" width=".7" height="10" fill="#767676"/><rect x="425.79" y="6.5" width=".7" height="2.2" fill="#7a7a7a"/><rect x="433.72" y="6.5" width=".7" height="2.2" fill="#7a7a7a"/><rect x="441.65" y="6.5" width=".7" height="2.2" fill="#7a7a7a"/><rect x="449.58" y="0" width=".7" height="10" fill="#767676"/><rect x="457.51" y="6.5" width=".7" height="2.2" fill="#7a7a7a"/><rect x="465.44" y="6.5" width=".7" height="2.2" fill="#7a7a7a"/><rect x="473.37" y="6.5" width=".7" height="2.2" fill="#7a7a7a"/><rect x="481.30" y="0" width=".7" height="10" fill="#767676"/><rect x="489.23" y="6.5" width=".7" height="2.2" fill="#7a7a7a"/><rect x="497.16" y="6.5" width=".7" height="2.2" fill="#7a7a7a"/><rect x="505.09" y="6.5" width=".7" height="2.2" fill="#7a7a7a"/><rect x="513.02" y="0" width=".7" height="10" fill="#767676"/><rect x="520.95" y="6.5" width=".7" height="2.2" fill="#7a7a7a"/><rect x="528.88" y="6.5" width=".7" height="2.2" fill="#7a7a7a"/><rect x="536.81" y="6.5" width=".7" height="2.2" fill="#7a7a7a"/><rect x="544.74" y="0" width=".7" height="10" fill="#767676"/><rect x="552.67" y="6.5" width=".7" height="2.2" fill="#7a7a7a"/><rect x="560.60" y="6.5" width=".7" height="2.2" fill="#7a7a7a"/><rect x="568.53" y="6.5" width=".7" height="2.2" fill="#7a7a7a"/><rect x="576.46" y="0" width=".7" height="10" fill="#767676"/><rect x="584.39" y="6.5" width=".7" height="2.2" fill="#7a7a7a"/><rect x="592.32" y="6.5" width=".7" height="2.2" fill="#7a7a7a"/><rect x="600.25" y="6.5" width=".7" height="2.2" fill="#7a7a7a"/><rect x="608.18" y="0" width=".7" height="10" fill="#767676"/><rect x="616.11" y="6.5" width=".7" height="2.2" fill="#7a7a7a"/><rect x="624.04" y="6.5" width=".7" height="2.2" fill="#7a7a7a"/><rect x="631.97" y="6.5" width=".7" height="2.2" fill="#7a7a7a"/><rect x="639.90" y="0" width=".7" height="10" fill="#767676"/><rect x="647.83" y="6.5" width=".7" height="2.2" fill="#7a7a7a"/><rect x="655.76" y="6.5" width=".7" height="2.2" fill="#7a7a7a"/><rect x="663.69" y="6.5" width=".7" height="2.2" fill="#7a7a7a"/><rect x="671.62" y="0" width=".7" height="10" fill="#767676"/><rect x="679.55" y="6.5" width=".7" height="2.2" fill="#7a7a7a"/><rect x="687.48" y="6.5" width=".7" height="2.2" fill="#7a7a7a"/><rect x="695.41" y="6.5" width=".7" height="2.2" fill="#7a7a7a"/><rect x="703.34" y="0" width=".7" height="10" fill="#767676"/><rect x="711.27" y="6.5" width=".7" height="2.2" fill="#7a7a7a"/><rect x="719.20" y="6.5" width=".7" height="2.2" fill="#7a7a7a"/><rect x="727.13" y="6.5" width=".7" height="2.2" fill="#7a7a7a"/><rect x="735.06" y="0" width=".7" height="10" fill="#767676"/><rect x="742.99" y="6.5" width=".7" height="2.2" fill="#7a7a7a"/><rect x="750.92" y="6.5" width=".7" height="2.2" fill="#7a7a7a"/><rect x="758.85" y="6.5" width=".7" height="2.2" fill="#7a7a7a"/><rect x="766.78" y="0" width=".7" height="10" fill="#767676"/></svg>
<svg class="a" style="left:203.5px;top:65.5px;" width="786" height="11" viewBox="0 0 786 11"><rect x="5.50" y="0" width=".7" height="10.5" fill="#86bc98"/><rect x="37.22" y="0" width=".7" height="10.5" fill="#86bc98"/><rect x="68.94" y="0" width=".7" height="10.5" fill="#86bc98"/><rect x="100.66" y="0" width=".7" height="10.5" fill="#86bc98"/><rect x="132.38" y="0" width=".7" height="10.5" fill="#86bc98"/><rect x="164.10" y="0" width=".7" height="10.5" fill="#86bc98"/><rect x="195.82" y="0" width=".7" height="10.5" fill="#86bc98"/><rect x="227.54" y="0" width=".7" height="10.5" fill="#86bc98"/><rect x="259.26" y="0" width=".7" height="10.5" fill="#86bc98"/><rect x="290.98" y="0" width=".7" height="10.5" fill="#86bc98"/><rect x="322.70" y="0" width=".7" height="10.5" fill="#86bc98"/><rect x="354.42" y="0" width=".7" height="10.5" fill="#86bc98"/><rect x="386.14" y="0" width=".7" height="10.5" fill="#86bc98"/><rect x="417.86" y="0" width=".7" height="10.5" fill="#86bc98"/><rect x="449.58" y="0" width=".7" height="10.5" fill="#86bc98"/><rect x="481.30" y="0" width=".7" height="10.5" fill="#86bc98"/><rect x="513.02" y="0" width=".7" height="10.5" fill="#86bc98"/><rect x="544.74" y="0" width=".7" height="10.5" fill="#86bc98"/><rect x="576.46" y="0" width=".7" height="10.5" fill="#86bc98"/><rect x="608.18" y="0" width=".7" height="10.5" fill="#86bc98"/><rect x="639.90" y="0" width=".7" height="10.5" fill="#86bc98"/><rect x="671.62" y="0" width=".7" height="10.5" fill="#86bc98"/><rect x="703.34" y="0" width=".7" height="10.5" fill="#86bc98"/><rect x="735.06" y="0" width=".7" height="10.5" fill="#86bc98"/><rect x="766.78" y="0" width=".7" height="10.5" fill="#86bc98"/></svg>
<div class="t" style="left:210.8px;top:66.73px;font-size:6.4px;color:#c8e8d0;font-weight:normal;transform-origin:0 50%;transform:scaleX(0.9);-webkit-text-stroke-width:0">1</div>
<div class="t" style="left:242.52px;top:66.73px;font-size:6.4px;color:#c8e8d0;font-weight:normal;transform-origin:0 50%;transform:scaleX(0.9);-webkit-text-stroke-width:0">2</div>
<div class="t" style="left:274.24px;top:66.73px;font-size:6.4px;color:#c8e8d0;font-weight:normal;transform-origin:0 50%;transform:scaleX(0.9);-webkit-text-stroke-width:0">3</div>
<div class="t" style="left:305.96px;top:66.73px;font-size:6.4px;color:#c8e8d0;font-weight:normal;transform-origin:0 50%;transform:scaleX(0.9);-webkit-text-stroke-width:0">4</div>
<div class="t" style="left:337.68px;top:66.73px;font-size:6.4px;color:#c8e8d0;font-weight:normal;transform-origin:0 50%;transform:scaleX(0.9);-webkit-text-stroke-width:0">5</div>
<div class="t" style="left:369.40000000000003px;top:66.73px;font-size:6.4px;color:#c8e8d0;font-weight:normal;transform-origin:0 50%;transform:scaleX(0.9);-webkit-text-stroke-width:0">6</div>
<div class="t" style="left:401.12px;top:66.73px;font-size:6.4px;color:#c8e8d0;font-weight:normal;transform-origin:0 50%;transform:scaleX(0.9);-webkit-text-stroke-width:0">7</div>
<div class="t" style="left:432.84px;top:66.73px;font-size:6.4px;color:#c8e8d0;font-weight:normal;transform-origin:0 50%;transform:scaleX(0.9);-webkit-text-stroke-width:0">8</div>
<div class="t" style="left:464.56px;top:66.73px;font-size:6.4px;color:#c8e8d0;font-weight:normal;transform-origin:0 50%;transform:scaleX(0.9);-webkit-text-stroke-width:0">9</div>
<div class="t" style="left:496.28000000000003px;top:66.73px;font-size:6.4px;color:#c8e8d0;font-weight:normal;transform-origin:0 50%;transform:scaleX(0.9);-webkit-text-stroke-width:0">10</div>
<div class="t" style="left:528.0px;top:66.73px;font-size:6.4px;color:#c8e8d0;font-weight:normal;transform-origin:0 50%;transform:scaleX(0.9);-webkit-text-stroke-width:0">11</div>
<div class="t" style="left:559.7199999999999px;top:66.73px;font-size:6.4px;color:#c8e8d0;font-weight:normal;transform-origin:0 50%;transform:scaleX(0.9);-webkit-text-stroke-width:0">12</div>
<div class="t" style="left:591.4399999999999px;top:66.73px;font-size:6.4px;color:#c8e8d0;font-weight:normal;transform-origin:0 50%;transform:scaleX(0.9);-webkit-text-stroke-width:0">13</div>
<div class="t" style="left:623.16px;top:66.73px;font-size:6.4px;color:#c8e8d0;font-weight:normal;transform-origin:0 50%;transform:scaleX(0.9);-webkit-text-stroke-width:0">14</div>
<div class="t" style="left:654.8799999999999px;top:66.73px;font-size:6.4px;color:#c8e8d0;font-weight:normal;transform-origin:0 50%;transform:scaleX(0.9);-webkit-text-stroke-width:0">15</div>
<div class="t" style="left:686.5999999999999px;top:66.73px;font-size:6.4px;color:#c8e8d0;font-weight:normal;transform-origin:0 50%;transform:scaleX(0.9);-webkit-text-stroke-width:0">16</div>
<div class="t" style="left:718.3199999999999px;top:66.73px;font-size:6.4px;color:#c8e8d0;font-weight:normal;transform-origin:0 50%;transform:scaleX(0.9);-webkit-text-stroke-width:0">17</div>
<div class="t" style="left:750.04px;top:66.73px;font-size:6.4px;color:#c8e8d0;font-weight:normal;transform-origin:0 50%;transform:scaleX(0.9);-webkit-text-stroke-width:0">18</div>
<div class="t" style="left:781.76px;top:66.73px;font-size:6.4px;color:#c8e8d0;font-weight:normal;transform-origin:0 50%;transform:scaleX(0.9);-webkit-text-stroke-width:0">19</div>
<div class="t" style="left:813.4799999999999px;top:66.73px;font-size:6.4px;color:#c8e8d0;font-weight:normal;transform-origin:0 50%;transform:scaleX(0.9);-webkit-text-stroke-width:0">20</div>
<div class="t" style="left:845.1999999999999px;top:66.73px;font-size:6.4px;color:#c8e8d0;font-weight:normal;transform-origin:0 50%;transform:scaleX(0.9);-webkit-text-stroke-width:0">21</div>
<div class="t" style="left:876.92px;top:66.73px;font-size:6.4px;color:#c8e8d0;font-weight:normal;transform-origin:0 50%;transform:scaleX(0.9);-webkit-text-stroke-width:0">22</div>
<div class="t" style="left:908.6399999999999px;top:66.73px;font-size:6.4px;color:#c8e8d0;font-weight:normal;transform-origin:0 50%;transform:scaleX(0.9);-webkit-text-stroke-width:0">23</div>
<div class="t" style="left:940.3599999999999px;top:66.73px;font-size:6.4px;color:#c8e8d0;font-weight:normal;transform-origin:0 50%;transform:scaleX(0.9);-webkit-text-stroke-width:0">24</div>
<div class="t" style="left:972.0799999999999px;top:66.73px;font-size:6.4px;color:#e0e0e0;font-weight:normal;transform-origin:0 50%;transform:scaleX(0.9);-webkit-text-stroke-width:0">25</div>
<div class="a" style="left:209px;top:86px;width:254px;height:33px;background:#163f80;"></div>
<div class="a" style="left:463px;top:86px;width:254px;height:33px;background:#6aac76;"></div>
<div class="a" style="left:717px;top:86px;width:254px;height:33px;background:#163f80;"></div>
<div class="t" style="left:212px;top:99.72px;font-size:6px;color:#e8eef8;font-weight:bold;transform-origin:0 50%;transform:scaleX(0.8);">Hook 1</div>
<div class="t" style="left:466px;top:99.72px;font-size:6px;color:#102010;font-weight:bold;transform-origin:0 50%;transform:scaleX(0.8);">Vese 1</div>
<div class="t" style="left:720px;top:99.72px;font-size:6px;color:#e8eef8;font-weight:bold;transform-origin:0 50%;transform:scaleX(0.8);">Hook 2</div>
<div class="a" style="left:209px;top:119px;width:780px;height:1px;background:#3c3c3c;"></div>
<div class="t" style="left:211px;top:122.22px;font-size:6px;color:#d8d8d8;font-weight:bold;transform-origin:0 50%;transform:scaleX(0.85);">4/4&nbsp;&nbsp;C</div>
<div class="t" style="right:13px;top:122.22px;font-size:6px;color:#d8d8d8;font-weight:bold;text-align:right;transform-origin:100% 50%;">4</div>
<div class="a" style="left:209px;top:131px;width:780px;height:0.8px;background:#3c3c3c;"></div>
<div class="a" style="left:209px;top:139.2px;width:780px;height:0.9px;background:#5a6e92;"></div>
<div class="a" style="left:209px;top:138.7px;width:3px;height:1.8px;background:#7fa0e0;"></div>
<div class="t" style="left:212px;top:139.92px;font-size:6px;color:#f0f0f0;font-weight:bold;transform-origin:0 50%;transform:scaleX(0.85);">140</div>
<div class="t" style="right:13px;top:139.92px;font-size:6px;color:#f0f0f0;font-weight:bold;text-align:right;transform-origin:100% 50%;">1</div>
<div class="a" style="left:209px;top:145.5px;width:780px;height:0.8px;background:#3c3c3c;"></div>
<svg class="a" style="left:209px;top:120px;" width="780" height="453" viewBox="0 0 780 453"><rect x="-0.30" y="0" width="1" height="453" fill="#3e3e3e"/><rect x="31.42" y="0" width="1" height="453" fill="#3e3e3e"/><rect x="63.14" y="0" width="1" height="453" fill="#3e3e3e"/><rect x="94.86" y="0" width="1" height="453" fill="#3e3e3e"/><rect x="126.58" y="0" width="1" height="453" fill="#3e3e3e"/><rect x="158.30" y="0" width="1" height="453" fill="#3e3e3e"/><rect x="190.02" y="0" width="1" height="453" fill="#3e3e3e"/><rect x="221.74" y="0" width="1" height="453" fill="#3e3e3e"/><rect x="253.46" y="0" width="1" height="453" fill="#3e3e3e"/><rect x="285.18" y="0" width="1" height="453" fill="#3e3e3e"/><rect x="316.90" y="0" width="1" height="453" fill="#3e3e3e"/><rect x="348.62" y="0" width="1" height="453" fill="#3e3e3e"/><rect x="380.34" y="0" width="1" height="453" fill="#3e3e3e"/><rect x="412.06" y="0" width="1" height="453" fill="#3e3e3e"/><rect x="443.78" y="0" width="1" height="453" fill="#3e3e3e"/><rect x="475.50" y="0" width="1" height="453" fill="#3e3e3e"/><rect x="507.22" y="0" width="1" height="453" fill="#3e3e3e"/><rect x="538.94" y="0" width="1" height="453" fill="#3e3e3e"/><rect x="570.66" y="0" width="1" height="453" fill="#3e3e3e"/><rect x="602.38" y="0" width="1" height="453" fill="#3e3e3e"/><rect x="634.10" y="0" width="1" height="453" fill="#3e3e3e"/><rect x="665.82" y="0" width="1" height="453" fill="#3e3e3e"/><rect x="697.54" y="0" width="1" height="453" fill="#3e3e3e"/><rect x="729.26" y="0" width="1" height="453" fill="#3e3e3e"/><rect x="760.98" y="0" width="1" height="453" fill="#3e3e3e"/></svg>
<div class="a" style="left:89px;top:178.64999999999998px;width:114.5px;height:0.8px;background:#404040;"></div>
<div class="t" style="left:0.7999999999999972px;width:200px;text-align:center;top:162.02px;font-size:6.2px;color:#e8e8e8;font-weight:bold;transform-origin:50% 50%;transform:scaleX(0.85);">1</div>
<svg class="a" style="left:106.8px;top:160.39999999999998px;" width="14" height="8" viewBox="0 0 14 8"><rect x="0" y="0" width="14" height="8" fill="#6a3a34"/><rect x="0" y="0" width="14" height="2.5" fill="#c8b8b0"/><path d="M2 3l2 4 2-4 2 4 2-4 2 4" stroke="#f0e0d8" stroke-width=".7" fill="none"/></svg>
<div class="t" style="left:125px;top:161.98px;font-size:6.5px;color:#e8e8e8;font-weight:bold;transform-origin:0 50%;transform:scaleX(0.78);">EVP88 Electric ...</div>
<div class="a" style="left:174.5px;top:161.49999999999997px;width:5.8px;height:6.8px;background:linear-gradient(#4e4e4e,#464646);border:1px solid #6c6c6c;border-radius:1.5px;box-shadow:0 0 0 .6px #333;"></div>
<div class="t" style="left:77.4px;width:200px;text-align:center;top:163.19px;font-size:4.4px;color:#9c9c9c;font-weight:bold;transform-origin:50% 50%;">R</div>
<div class="a" style="left:184.2px;top:161.49999999999997px;width:5.8px;height:6.8px;background:linear-gradient(#4e4e4e,#464646);border:1px solid #6c6c6c;border-radius:1.5px;box-shadow:0 0 0 .6px #333;"></div>
<div class="t" style="left:87.1px;width:200px;text-align:center;top:163.19px;font-size:4.4px;color:#9c9c9c;font-weight:bold;transform-origin:50% 50%;">M</div>
<div class="a" style="left:193.3px;top:161.49999999999997px;width:5.8px;height:6.8px;background:linear-gradient(#4e4e4e,#464646);border:1px solid #6c6c6c;border-radius:1.5px;box-shadow:0 0 0 .6px #333;"></div>
<div class="t" style="left:96.20000000000002px;width:200px;text-align:center;top:163.19px;font-size:4.4px;color:#9c9c9c;font-weight:bold;transform-origin:50% 50%;">S</div>
<div class="a" style="left:89px;top:209.89999999999998px;width:114.5px;height:0.8px;background:#404040;"></div>
<div class="t" style="left:0.7999999999999972px;width:200px;text-align:center;top:193.27px;font-size:6.2px;color:#e8e8e8;font-weight:bold;transform-origin:50% 50%;transform:scaleX(0.85);">2</div>
<svg class="a" style="left:106.8px;top:191.04999999999998px;" width="14" height="9" viewBox="0 0 14 9"><defs><linearGradient id="ti" x1="0" y1="0" x2="0" y2="1"><stop offset="0" stop-color="#d8dde2"/><stop offset=".4" stop-color="#aab8c8"/><stop offset=".55" stop-color="#7a98bc"/><stop offset="1" stop-color="#6a88ae"/></linearGradient></defs><rect x="0" y="1" width="14" height="8" fill="url(#ti)"/><path d="M0 3.6h14" stroke="#101010" stroke-width="1.2"/><path d="M1.5 3.2l1 3 1-3M5 3.2l1.2 3.5 1.2-3.5M9 3.2l1 3 1-3M12 3.2l.8 2.4.8-2.4M4 3.5l.5-3 .5 3M8 3.5l.4-2 .4 2" fill="#101010"/></svg>
<div class="t" style="left:125px;top:193.23px;font-size:6.5px;color:#e8e8e8;font-weight:bold;transform-origin:0 50%;transform:scaleX(0.78);">arp</div>
<div class="a" style="left:165px;top:192.74999999999997px;width:5.8px;height:6.8px;background:linear-gradient(#4e4e4e,#464646);border:1px solid #6c6c6c;border-radius:1.5px;box-shadow:0 0 0 .6px #333;"></div>
<div class="t" style="left:67.9px;width:200px;text-align:center;top:194.44px;font-size:4.4px;color:#9c9c9c;font-weight:bold;transform-origin:50% 50%;">I</div>
<div class="a" style="left:174.5px;top:192.74999999999997px;width:5.8px;height:6.8px;background:linear-gradient(#4e4e4e,#464646);border:1px solid #6c6c6c;border-radius:1.5px;box-shadow:0 0 0 .6px #333;"></div>
<div class="t" style="left:77.4px;width:200px;text-align:center;top:194.44px;font-size:4.4px;color:#9c9c9c;font-weight:bold;transform-origin:50% 50%;">R</div>
<div class="a" style="left:184.2px;top:192.74999999999997px;width:5.8px;height:6.8px;background:linear-gradient(#4e4e4e,#464646);border:1px solid #6c6c6c;border-radius:1.5px;box-shadow:0 0 0 .6px #333;"></div>
<div class="t" style="left:87.1px;width:200px;text-align:center;top:194.44px;font-size:4.4px;color:#9c9c9c;font-weight:bold;transform-origin:50% 50%;">M</div>
<div class="a" style="left:193.3px;top:192.74999999999997px;width:5.8px;height:6.8px;background:linear-gradient(#4e4e4e,#464646);border:1px solid #6c6c6c;border-radius:1.5px;box-shadow:0 0 0 .6px #333;"></div>
<div class="t" style="left:96.20000000000002px;width:200px;text-align:center;top:194.44px;font-size:4.4px;color:#9c9c9c;font-weight:bold;transform-origin:50% 50%;">S</div>
<div class="a" style="left:89px;top:241.14999999999998px;width:114.5px;height:0.8px;background:#404040;"></div>
<div class="t" style="left:0.7999999999999972px;width:200px;text-align:center;top:224.52px;font-size:6.2px;color:#e8e8e8;font-weight:bold;transform-origin:50% 50%;transform:scaleX(0.85);">3</div>
<svg class="a" style="left:106.8px;top:222.29999999999998px;" width="14" height="9" viewBox="0 0 14 9"><defs><linearGradient id="ti" x1="0" y1="0" x2="0" y2="1"><stop offset="0" stop-color="#d8dde2"/><stop offset=".4" stop-color="#aab8c8"/><stop offset=".55" stop-color="#7a98bc"/><stop offset="1" stop-color="#6a88ae"/></linearGradient></defs><rect x="0" y="1" width="14" height="8" fill="url(#ti)"/><path d="M0 3.6h14" stroke="#101010" stroke-width="1.2"/><path d="M1.5 3.2l1 3 1-3M5 3.2l1.2 3.5 1.2-3.5M9 3.2l1 3 1-3M12 3.2l.8 2.4.8-2.4M4 3.5l.5-3 .5 3M8 3.5l.4-2 .4 2" fill="#101010"/></svg>
<div class="t" style="left:125px;top:224.48px;font-size:6.5px;color:#e8e8e8;font-weight:bold;transform-origin:0 50%;transform:scaleX(0.78);">bass wobble</div>
<div class="a" style="left:165px;top:223.99999999999997px;width:5.8px;height:6.8px;background:linear-gradient(#4e4e4e,#464646);border:1px solid #6c6c6c;border-radius:1.5px;box-shadow:0 0 0 .6px #333;"></div>
<div class="t" style="left:67.9px;width:200px;text-align:center;top:225.69px;font-size:4.4px;color:#9c9c9c;font-weight:bold;transform-origin:50% 50%;">I</div>
<div class="a" style="left:174.5px;top:223.99999999999997px;width:5.8px;height:6.8px;background:linear-gradient(#4e4e4e,#464646);border:1px solid #6c6c6c;border-radius:1.5px;box-shadow:0 0 0 .6px #333;"></div>
<div class="t" style="left:77.4px;width:200px;text-align:center;top:225.69px;font-size:4.4px;color:#9c9c9c;font-weight:bold;transform-origin:50% 50%;">R</div>
<div class="a" style="left:184.2px;top:223.99999999999997px;width:5.8px;height:6.8px;background:linear-gradient(#4e4e4e,#464646);border:1px solid #6c6c6c;border-radius:1.5px;box-shadow:0 0 0 .6px #333;"></div>
<div class="t" style="left:87.1px;width:200px;text-align:center;top:225.69px;font-size:4.4px;color:#9c9c9c;font-weight:bold;transform-origin:50% 50%;">M</div>
<div class="a" style="left:193.3px;top:223.99999999999997px;width:5.8px;height:6.8px;background:linear-gradient(#4e4e4e,#464646);border:1px solid #6c6c6c;border-radius:1.5px;box-shadow:0 0 0 .6px #333;"></div>
<div class="t" style="left:96.20000000000002px;width:200px;text-align:center;top:225.69px;font-size:4.4px;color:#9c9c9c;font-weight:bold;transform-origin:50% 50%;">S</div>
<div class="a" style="left:89px;top:272.4px;width:114.5px;height:0.8px;background:#404040;"></div>
<div class="t" style="left:0.7999999999999972px;width:200px;text-align:center;top:255.77px;font-size:6.2px;color:#e8e8e8;font-weight:bold;transform-origin:50% 50%;transform:scaleX(0.85);">4</div>
<svg class="a" style="left:106.8px;top:253.55px;" width="14" height="9" viewBox="0 0 14 9"><defs><linearGradient id="ti" x1="0" y1="0" x2="0" y2="1"><stop offset="0" stop-color="#d8dde2"/><stop offset=".4" stop-color="#aab8c8"/><stop offset=".55" stop-color="#7a98bc"/><stop offset="1" stop-color="#6a88ae"/></linearGradient></defs><rect x="0" y="1" width="14" height="8" fill="url(#ti)"/><path d="M0 3.6h14" stroke="#101010" stroke-width="1.2"/><path d="M1.5 3.2l1 3 1-3M5 3.2l1.2 3.5 1.2-3.5M9 3.2l1 3 1-3M12 3.2l.8 2.4.8-2.4M4 3.5l.5-3 .5 3M8 3.5l.4-2 .4 2" fill="#101010"/></svg>
<div class="t" style="left:125px;top:255.73px;font-size:6.5px;color:#e8e8e8;font-weight:bold;transform-origin:0 50%;transform:scaleX(0.78);">drums</div>
<div class="a" style="left:165px;top:255.25px;width:5.8px;height:6.8px;background:linear-gradient(#4e4e4e,#464646);border:1px solid #6c6c6c;border-radius:1.5px;box-shadow:0 0 0 .6px #333;"></div>
<div class="t" style="left:67.9px;width:200px;text-align:center;top:256.94px;font-size:4.4px;color:#9c9c9c;font-weight:bold;transform-origin:50% 50%;">I</div>
<div class="a" style="left:174.5px;top:255.25px;width:5.8px;height:6.8px;background:linear-gradient(#4e4e4e,#464646);border:1px solid #6c6c6c;border-radius:1.5px;box-shadow:0 0 0 .6px #333;"></div>
<div class="t" style="left:77.4px;width:200px;text-align:center;top:256.94px;font-size:4.4px;color:#9c9c9c;font-weight:bold;transform-origin:50% 50%;">R</div>
<div class="a" style="left:184.2px;top:255.25px;width:5.8px;height:6.8px;background:linear-gradient(#4e4e4e,#464646);border:1px solid #6c6c6c;border-radius:1.5px;box-shadow:0 0 0 .6px #333;"></div>
<div class="t" style="left:87.1px;width:200px;text-align:center;top:256.94px;font-size:4.4px;color:#9c9c9c;font-weight:bold;transform-origin:50% 50%;">M</div>
<div class="a" style="left:193.3px;top:255.25px;width:5.8px;height:6.8px;background:linear-gradient(#4e4e4e,#464646);border:1px solid #6c6c6c;border-radius:1.5px;box-shadow:0 0 0 .6px #333;"></div>
<div class="t" style="left:96.20000000000002px;width:200px;text-align:center;top:256.94px;font-size:4.4px;color:#9c9c9c;font-weight:bold;transform-origin:50% 50%;">S</div>
<div class="a" style="left:89px;top:303.65px;width:114.5px;height:0.8px;background:#404040;"></div>
<div class="t" style="left:0.7999999999999972px;width:200px;text-align:center;top:287.02px;font-size:6.2px;color:#e8e8e8;font-weight:bold;transform-origin:50% 50%;transform:scaleX(0.85);">5</div>
<svg class="a" style="left:106.8px;top:284.8px;" width="14" height="9" viewBox="0 0 14 9"><defs><linearGradient id="ti" x1="0" y1="0" x2="0" y2="1"><stop offset="0" stop-color="#d8dde2"/><stop offset=".4" stop-color="#aab8c8"/><stop offset=".55" stop-color="#7a98bc"/><stop offset="1" stop-color="#6a88ae"/></linearGradient></defs><rect x="0" y="1" width="14" height="8" fill="url(#ti)"/><path d="M0 3.6h14" stroke="#101010" stroke-width="1.2"/><path d="M1.5 3.2l1 3 1-3M5 3.2l1.2 3.5 1.2-3.5M9 3.2l1 3 1-3M12 3.2l.8 2.4.8-2.4M4 3.5l.5-3 .5 3M8 3.5l.4-2 .4 2" fill="#101010"/></svg>
<div class="t" style="left:125px;top:286.98px;font-size:6.5px;color:#e8e8e8;font-weight:bold;transform-origin:0 50%;transform:scaleX(0.78);">lead</div>
<div class="a" style="left:165px;top:286.5px;width:5.8px;height:6.8px;background:linear-gradient(#4e4e4e,#464646);border:1px solid #6c6c6c;border-radius:1.5px;box-shadow:0 0 0 .6px #333;"></div>
<div class="t" style="left:67.9px;width:200px;text-align:center;top:288.19px;font-size:4.4px;color:#9c9c9c;font-weight:bold;transform-origin:50% 50%;">I</div>
<div class="a" style="left:174.5px;top:286.5px;width:5.8px;height:6.8px;background:linear-gradient(#4e4e4e,#464646);border:1px solid #6c6c6c;border-radius:1.5px;box-shadow:0 0 0 .6px #333;"></div>
<div class="t" style="left:77.4px;width:200px;text-align:center;top:288.19px;font-size:4.4px;color:#9c9c9c;font-weight:bold;transform-origin:50% 50%;">R</div>
<div class="a" style="left:184.2px;top:286.5px;width:5.8px;height:6.8px;background:linear-gradient(#4e4e4e,#464646);border:1px solid #6c6c6c;border-radius:1.5px;box-shadow:0 0 0 .6px #333;"></div>
<div class="t" style="left:87.1px;width:200px;text-align:center;top:288.19px;font-size:4.4px;color:#9c9c9c;font-weight:bold;transform-origin:50% 50%;">M</div>
<div class="a" style="left:193.3px;top:286.5px;width:5.8px;height:6.8px;background:linear-gradient(#4e4e4e,#464646);border:1px solid #6c6c6c;border-radius:1.5px;box-shadow:0 0 0 .6px #333;"></div>
<div class="t" style="left:96.20000000000002px;width:200px;text-align:center;top:288.19px;font-size:4.4px;color:#9c9c9c;font-weight:bold;transform-origin:50% 50%;">S</div>
<div class="a" style="left:89px;top:304.45px;width:114.5px;height:31.25px;background:#c9c9c9;"></div>
<div class="a" style="left:89px;top:334.9px;width:114.5px;height:0.8px;background:#9a9a9a;"></div>
<div class="t" style="left:0.7999999999999972px;width:200px;text-align:center;top:318.27px;font-size:6.2px;color:#111;font-weight:bold;transform-origin:50% 50%;transform:scaleX(0.85);">6</div>
<svg class="a" style="left:106.8px;top:316.05px;" width="14" height="9" viewBox="0 0 14 9"><defs><linearGradient id="ti" x1="0" y1="0" x2="0" y2="1"><stop offset="0" stop-color="#d8dde2"/><stop offset=".4" stop-color="#aab8c8"/><stop offset=".55" stop-color="#7a98bc"/><stop offset="1" stop-color="#6a88ae"/></linearGradient></defs><rect x="0" y="1" width="14" height="8" fill="url(#ti)"/><path d="M0 3.6h14" stroke="#101010" stroke-width="1.2"/><path d="M1.5 3.2l1 3 1-3M5 3.2l1.2 3.5 1.2-3.5M9 3.2l1 3 1-3M12 3.2l.8 2.4.8-2.4M4 3.5l.5-3 .5 3M8 3.5l.4-2 .4 2" fill="#101010"/></svg>
<div class="t" style="left:125px;top:318.23px;font-size:6.5px;color:#111;font-weight:bold;transform-origin:0 50%;transform:scaleX(0.78);">strings</div>
<div class="a" style="left:165px;top:317.75px;width:5.8px;height:6.8px;background:linear-gradient(#fafafa,#d8d8d8);border:1px solid #8a8a8a;border-radius:1.5px;box-shadow:0 0 0 .6px #333;"></div>
<div class="t" style="left:67.9px;width:200px;text-align:center;top:319.44px;font-size:4.4px;color:#333;font-weight:bold;transform-origin:50% 50%;">I</div>
<div class="a" style="left:174.5px;top:317.75px;width:5.8px;height:6.8px;background:linear-gradient(#fafafa,#d8d8d8);border:1px solid #8a8a8a;border-radius:1.5px;box-shadow:0 0 0 .6px #333;"></div>
<div class="t" style="left:77.4px;width:200px;text-align:center;top:319.44px;font-size:4.4px;color:#333;font-weight:bold;transform-origin:50% 50%;">R</div>
<div class="a" style="left:184.2px;top:317.75px;width:5.8px;height:6.8px;background:linear-gradient(#fafafa,#d8d8d8);border:1px solid #8a8a8a;border-radius:1.5px;box-shadow:0 0 0 .6px #333;"></div>
<div class="t" style="left:87.1px;width:200px;text-align:center;top:319.44px;font-size:4.4px;color:#333;font-weight:bold;transform-origin:50% 50%;">M</div>
<div class="a" style="left:193.3px;top:317.75px;width:5.8px;height:6.8px;background:linear-gradient(#fafafa,#d8d8d8);border:1px solid #8a8a8a;border-radius:1.5px;box-shadow:0 0 0 .6px #333;"></div>
<div class="t" style="left:96.20000000000002px;width:200px;text-align:center;top:319.44px;font-size:4.4px;color:#333;font-weight:bold;transform-origin:50% 50%;">S</div>
<div class="a" style="left:89px;top:366.15px;width:114.5px;height:0.8px;background:#404040;"></div>
<div class="t" style="left:0.7999999999999972px;width:200px;text-align:center;top:349.52px;font-size:6.2px;color:#e8e8e8;font-weight:bold;transform-origin:50% 50%;transform:scaleX(0.85);">7</div>
<svg class="a" style="left:106.8px;top:347.3px;" width="14" height="9" viewBox="0 0 14 9"><defs><linearGradient id="ti" x1="0" y1="0" x2="0" y2="1"><stop offset="0" stop-color="#d8dde2"/><stop offset=".4" stop-color="#aab8c8"/><stop offset=".55" stop-color="#7a98bc"/><stop offset="1" stop-color="#6a88ae"/></linearGradient></defs><rect x="0" y="1" width="14" height="8" fill="url(#ti)"/><path d="M0 3.6h14" stroke="#101010" stroke-width="1.2"/><path d="M1.5 3.2l1 3 1-3M5 3.2l1.2 3.5 1.2-3.5M9 3.2l1 3 1-3M12 3.2l.8 2.4.8-2.4M4 3.5l.5-3 .5 3M8 3.5l.4-2 .4 2" fill="#101010"/></svg>
<div class="t" style="left:125px;top:349.48px;font-size:6.5px;color:#e8e8e8;font-weight:bold;transform-origin:0 50%;transform:scaleX(0.78);">vocode synth</div>
<div class="a" style="left:165px;top:349.0px;width:5.8px;height:6.8px;background:linear-gradient(#4e4e4e,#464646);border:1px solid #6c6c6c;border-radius:1.5px;box-shadow:0 0 0 .6px #333;"></div>
<div class="t" style="left:67.9px;width:200px;text-align:center;top:350.69px;font-size:4.4px;color:#9c9c9c;font-weight:bold;transform-origin:50% 50%;">I</div>
<div class="a" style="left:174.5px;top:349.0px;width:5.8px;height:6.8px;background:linear-gradient(#4e4e4e,#464646);border:1px solid #6c6c6c;border-radius:1.5px;box-shadow:0 0 0 .6px #333;"></div>
<div class="t" style="left:77.4px;width:200px;text-align:center;top:350.69px;font-size:4.4px;color:#9c9c9c;font-weight:bold;transform-origin:50% 50%;">R</div>
<div class="a" style="left:184.2px;top:349.0px;width:5.8px;height:6.8px;background:linear-gradient(#4e4e4e,#464646);border:1px solid #6c6c6c;border-radius:1.5px;box-shadow:0 0 0 .6px #333;"></div>
<div class="t" style="left:87.1px;width:200px;text-align:center;top:350.69px;font-size:4.4px;color:#9c9c9c;font-weight:bold;transform-origin:50% 50%;">M</div>
<div class="a" style="left:193.3px;top:349.0px;width:5.8px;height:6.8px;background:linear-gradient(#4e4e4e,#464646);border:1px solid #6c6c6c;border-radius:1.5px;box-shadow:0 0 0 .6px #333;"></div>
<div class="t" style="left:96.20000000000002px;width:200px;text-align:center;top:350.69px;font-size:4.4px;color:#9c9c9c;font-weight:bold;transform-origin:50% 50%;">S</div>
<div class="a" style="left:89px;top:397.4px;width:114.5px;height:0.8px;background:#404040;"></div>
<div class="t" style="left:0.7999999999999972px;width:200px;text-align:center;top:380.77px;font-size:6.2px;color:#e8e8e8;font-weight:bold;transform-origin:50% 50%;transform:scaleX(0.85);">8</div>
<svg class="a" style="left:106.8px;top:378.55px;" width="14" height="9" viewBox="0 0 14 9"><defs><linearGradient id="ti" x1="0" y1="0" x2="0" y2="1"><stop offset="0" stop-color="#d8dde2"/><stop offset=".4" stop-color="#aab8c8"/><stop offset=".55" stop-color="#7a98bc"/><stop offset="1" stop-color="#6a88ae"/></linearGradient></defs><rect x="0" y="1" width="14" height="8" fill="url(#ti)"/><path d="M0 3.6h14" stroke="#101010" stroke-width="1.2"/><path d="M1.5 3.2l1 3 1-3M5 3.2l1.2 3.5 1.2-3.5M9 3.2l1 3 1-3M12 3.2l.8 2.4.8-2.4M4 3.5l.5-3 .5 3M8 3.5l.4-2 .4 2" fill="#101010"/></svg>
<div class="t" style="left:125px;top:380.73px;font-size:6.5px;color:#e8e8e8;font-weight:bold;transform-origin:0 50%;transform:scaleX(0.78);">intro bass 1</div>
<div class="a" style="left:165px;top:380.25px;width:5.8px;height:6.8px;background:linear-gradient(#4e4e4e,#464646);border:1px solid #6c6c6c;border-radius:1.5px;box-shadow:0 0 0 .6px #333;"></div>
<div class="t" style="left:67.9px;width:200px;text-align:center;top:381.94px;font-size:4.4px;color:#9c9c9c;font-weight:bold;transform-origin:50% 50%;">I</div>
<div class="a" style="left:174.5px;top:380.25px;width:5.8px;height:6.8px;background:linear-gradient(#4e4e4e,#464646);border:1px solid #6c6c6c;border-radius:1.5px;box-shadow:0 0 0 .6px #333;"></div>
<div class="t" style="left:77.4px;width:200px;text-align:center;top:381.94px;font-size:4.4px;color:#9c9c9c;font-weight:bold;transform-origin:50% 50%;">R</div>
<div class="a" style="left:184.2px;top:380.25px;width:5.8px;height:6.8px;background:linear-gradient(#4e4e4e,#464646);border:1px solid #6c6c6c;border-radius:1.5px;box-shadow:0 0 0 .6px #333;"></div>
<div class="t" style="left:87.1px;width:200px;text-align:center;top:381.94px;font-size:4.4px;color:#9c9c9c;font-weight:bold;transform-origin:50% 50%;">M</div>
<div class="a" style="left:193.3px;top:380.25px;width:5.8px;height:6.8px;background:linear-gradient(#4e4e4e,#464646);border:1px solid #6c6c6c;border-radius:1.5px;box-shadow:0 0 0 .6px #333;"></div>
<div class="t" style="left:96.20000000000002px;width:200px;text-align:center;top:381.94px;font-size:4.4px;color:#9c9c9c;font-weight:bold;transform-origin:50% 50%;">S</div>
<div class="a" style="left:89px;top:428.65px;width:114.5px;height:0.8px;background:#404040;"></div>
<div class="t" style="left:0.7999999999999972px;width:200px;text-align:center;top:412.02px;font-size:6.2px;color:#e8e8e8;font-weight:bold;transform-origin:50% 50%;transform:scaleX(0.85);">9</div>
<svg class="a" style="left:106.8px;top:409.8px;" width="14" height="9" viewBox="0 0 14 9"><defs><linearGradient id="ti" x1="0" y1="0" x2="0" y2="1"><stop offset="0" stop-color="#d8dde2"/><stop offset=".4" stop-color="#aab8c8"/><stop offset=".55" stop-color="#7a98bc"/><stop offset="1" stop-color="#6a88ae"/></linearGradient></defs><rect x="0" y="1" width="14" height="8" fill="url(#ti)"/><path d="M0 3.6h14" stroke="#101010" stroke-width="1.2"/><path d="M1.5 3.2l1 3 1-3M5 3.2l1.2 3.5 1.2-3.5M9 3.2l1 3 1-3M12 3.2l.8 2.4.8-2.4M4 3.5l.5-3 .5 3M8 3.5l.4-2 .4 2" fill="#101010"/></svg>
<div class="t" style="left:125px;top:411.98px;font-size:6.5px;color:#e8e8e8;font-weight:bold;transform-origin:0 50%;transform:scaleX(0.78);">intro bass 2</div>
<div class="a" style="left:165px;top:411.5px;width:5.8px;height:6.8px;background:linear-gradient(#4e4e4e,#464646);border:1px solid #6c6c6c;border-radius:1.5px;box-shadow:0 0 0 .6px #333;"></div>
<div class="t" style="left:67.9px;width:200px;text-align:center;top:413.19px;font-size:4.4px;color:#9c9c9c;font-weight:bold;transform-origin:50% 50%;">I</div>
<div class="a" style="left:174.5px;top:411.5px;width:5.8px;height:6.8px;background:linear-gradient(#4e4e4e,#464646);border:1px solid #6c6c6c;border-radius:1.5px;box-shadow:0 0 0 .6px #333;"></div>
<div class="t" style="left:77.4px;width:200px;text-align:center;top:413.19px;font-size:4.4px;color:#9c9c9c;font-weight:bold;transform-origin:50% 50%;">R</div>
<div class="a" style="left:184.2px;top:411.5px;width:5.8px;height:6.8px;background:linear-gradient(#4e4e4e,#464646);border:1px solid #6c6c6c;border-radius:1.5px;box-shadow:0 0 0 .6px #333;"></div>
<div class="t" style="left:87.1px;width:200px;text-align:center;top:413.19px;font-size:4.4px;color:#9c9c9c;font-weight:bold;transform-origin:50% 50%;">M</div>
<div class="a" style="left:193.3px;top:411.5px;width:5.8px;height:6.8px;background:linear-gradient(#4e4e4e,#464646);border:1px solid #6c6c6c;border-radius:1.5px;box-shadow:0 0 0 .6px #333;"></div>
<div class="t" style="left:96.20000000000002px;width:200px;text-align:center;top:413.19px;font-size:4.4px;color:#9c9c9c;font-weight:bold;transform-origin:50% 50%;">S</div>
<svg class="a" style="left:209px;top:148px;" width="780" height="290" viewBox="0 0 780 290"><rect x="0" y="31.05" width="780" height=".8" fill="#404040"/><rect x="0" y="62.30" width="780" height=".8" fill="#404040"/><rect x="0" y="93.55" width="780" height=".8" fill="#404040"/><rect x="0" y="124.80" width="780" height=".8" fill="#404040"/><rect x="0" y="156.05" width="780" height=".8" fill="#404040"/><rect x="0" y="187.30" width="780" height=".8" fill="#404040"/><rect x="0" y="218.55" width="780" height=".8" fill="#404040"/><rect x="0" y="249.80" width="780" height=".8" fill="#404040"/><rect x="0" y="281.05" width="780" height=".8" fill="#404040"/></svg>
<div class="a" style="left:209.5px;top:180.04999999999998px;width:253.26px;height:31.45px;background:linear-gradient(#90aad0,#809cc4 35%,#7090b8);border:1px solid #18202c;border-radius:2.5px;box-shadow:inset 1px 1px 0 rgba(255,255,255,.25);"></div>
<div class="t" style="left:212.3px;top:181.65px;font-size:6px;color:#2e3c54;transform:scaleX(.88);transform-origin:0 0">shabwey_Arp_1_f_sharp_140 <span style="font-size:5px">&#9901;</span></div>
<svg class="a" style="left:210.5px;top:192.45px;" width="251.26" height="13" viewBox="0 0 251.26 13"><g fill="#323f54"><polygon points="0.0,4.91 0.5,5.07 1.0,5.48 1.5,5.85 2.0,5.99 2.5,6.11 3.0,6.08 3.5,6.07 4.0,6.15 4.5,6.16 5.0,6.06 5.5,6.11 6.0,6.07 6.5,6.16 7.0,6.11 7.5,6.08 8.0,6.13 8.5,6.05 9.0,6.06 9.5,6.16 10.0,6.16 10.5,6.10 11.0,6.05 11.5,6.12 12.0,6.13 12.5,6.11 13.0,2.42 13.5,3.32 14.0,4.02 14.5,4.66 15.0,5.25 15.5,2.30 16.0,3.44 16.5,4.09 17.0,4.83 17.5,5.37 18.0,5.45 18.5,5.79 19.0,2.36 19.5,3.85 20.0,4.07 20.5,4.78 21.0,5.48 21.5,5.71 22.0,5.85 22.5,5.65 23.0,1.06 23.5,3.04 24.0,3.67 24.5,4.51 25.0,5.19 25.5,5.46 26.0,5.68 26.5,5.90 27.0,5.46 27.5,3.49 28.0,4.64 28.5,5.04 29.0,5.25 29.5,5.68 30.0,5.94 30.5,6.02 31.0,3.49 31.5,4.32 32.0,5.03 32.5,5.41 33.0,5.68 33.5,5.86 34.0,6.06 34.5,6.11 35.0,6.10 35.5,6.16 36.0,6.15 36.5,6.08 37.0,6.05 37.5,6.09 38.0,6.11 38.5,6.14 39.0,6.10 39.5,6.05 40.0,6.07 40.5,6.10 41.0,6.06 41.5,6.13 42.0,6.10 42.5,6.05 43.0,6.09 43.5,6.11 44.0,6.13 44.5,0.91 45.0,1.94 45.5,3.97 46.0,4.17 46.5,4.78 47.0,3.55 47.5,2.34 48.0,3.40 48.5,4.41 49.0,4.95 49.5,5.41 50.0,5.79 50.5,3.93 51.0,3.03 51.5,4.22 52.0,4.67 52.5,5.17 53.0,5.56 53.5,5.82 54.0,5.97 54.5,3.58 55.0,2.23 55.5,3.51 56.0,4.59 56.5,5.01 57.0,5.42 57.5,5.61 58.0,5.80 58.5,6.00 59.0,3.95 59.5,3.76 60.0,4.79 60.5,5.02 61.0,5.47 61.5,5.87 62.0,6.05 62.5,5.07 63.0,3.89 63.5,4.85 64.0,5.34 64.5,5.51 65.0,5.83 65.5,6.05 66.0,6.14 66.5,6.10 67.0,6.14 67.5,6.13 68.0,6.08 68.5,6.11 69.0,6.12 69.5,6.10 70.0,6.16 70.5,6.11 71.0,6.11 71.5,6.14 72.0,6.15 72.5,6.06 73.0,6.10 73.5,6.13 74.0,6.09 74.5,6.07 75.0,6.16 75.5,6.16 76.0,6.14 76.5,1.49 77.0,3.39 77.5,3.83 78.0,4.56 78.5,5.13 79.0,2.31 79.5,2.72 80.0,3.86 80.5,4.71 81.0,5.30 81.5,5.51 82.0,5.82 82.5,2.43 83.0,3.74 83.5,4.29 84.0,5.14 84.5,5.42 85.0,5.55 85.5,5.82 86.0,5.74 86.5,1.17 87.0,3.15 87.5,3.59 88.0,4.47 88.5,5.15 89.0,5.56 89.5,5.86 90.0,5.90 90.5,5.59 91.0,3.29 91.5,4.07 92.0,4.90 92.5,5.46 93.0,5.57 93.5,5.80 94.0,6.00 94.5,3.65 95.0,4.49 95.5,5.04 96.0,5.48 96.5,5.64 97.0,5.92 97.5,6.10 98.0,6.15 98.5,6.08 99.0,6.13 99.5,6.10 100.0,6.12 100.5,6.06 101.0,6.06 101.5,6.16 102.0,6.14 102.5,6.12 103.0,6.05 103.5,6.07 104.0,6.12 104.5,6.13 105.0,6.08 105.5,6.06 106.0,6.05 106.5,6.12 107.0,6.06 107.5,6.08 108.0,1.01 108.5,1.91 109.0,3.77 109.5,4.20 110.0,5.11 110.5,4.10 111.0,2.15 111.5,3.89 112.0,4.26 112.5,4.93 113.0,5.28 113.5,5.71 114.0,4.28 114.5,3.30 115.0,3.75 115.5,4.62 116.0,4.99 116.5,5.42 117.0,5.86 117.5,5.97 118.0,4.00 118.5,2.91 119.0,3.84 119.5,4.06 120.0,4.75 120.5,5.20 121.0,5.67 121.5,5.84 122.0,6.00 122.5,4.24 123.0,3.94 123.5,4.81 124.0,5.32 124.5,5.58 125.0,5.70 125.5,5.96 126.0,4.64 126.5,4.10 127.0,4.83 127.5,5.09 128.0,5.46 128.5,5.90 129.0,5.97 129.5,6.15 130.0,6.15 130.5,6.06 131.0,6.15 131.5,6.13 132.0,6.05 132.5,6.11 133.0,6.15 133.5,6.14 134.0,6.13 134.5,6.07 135.0,6.15 135.5,6.06 136.0,6.12 136.5,6.05 137.0,6.06 137.5,6.13 138.0,6.13 138.5,6.10 139.0,6.15 139.5,6.08 140.0,2.41 140.5,3.53 141.0,3.63 141.5,4.76 142.0,5.11 142.5,2.02 143.0,3.35 143.5,4.37 144.0,4.51 144.5,5.02 145.0,5.42 145.5,5.88 146.0,2.84 146.5,3.49 147.0,4.08 147.5,4.92 148.0,5.30 148.5,5.63 149.0,5.93 149.5,5.68 150.0,1.93 150.5,3.22 151.0,4.22 151.5,4.73 152.0,4.92 152.5,5.50 153.0,5.73 153.5,5.94 154.0,5.33 154.5,3.65 155.0,4.47 155.5,5.00 156.0,5.41 156.5,5.57 157.0,5.81 157.5,6.05 158.0,3.79 158.5,4.39 159.0,4.94 159.5,5.36 160.0,5.74 160.5,5.99 161.0,6.10 161.5,6.15 162.0,6.10 162.5,6.15 163.0,6.15 163.5,6.09 164.0,6.13 164.5,6.07 165.0,6.10 165.5,6.06 166.0,6.14 166.5,6.10 167.0,6.07 167.5,6.15 168.0,6.05 168.5,6.14 169.0,6.07 169.5,6.05 170.0,6.07 170.5,6.12 171.0,6.15 171.5,0.96 172.0,1.98 172.5,3.72 173.0,4.10 173.5,5.08 174.0,3.53 174.5,3.13 175.0,3.80 175.5,4.18 176.0,4.84 176.5,5.26 177.0,5.60 177.5,4.01 178.0,2.91 178.5,4.24 179.0,4.71 179.5,5.30 180.0,5.46 180.5,5.75 181.0,6.01 181.5,4.03 182.0,1.82 182.5,3.21 183.0,4.26 183.5,4.86 184.0,5.20 184.5,5.64 185.0,5.88 185.5,6.06 186.0,4.32 186.5,4.33 187.0,4.58 187.5,5.19 188.0,5.50 188.5,5.87 189.0,5.99 189.5,5.01 190.0,4.33 190.5,4.84 191.0,5.08 191.5,5.58 192.0,5.82 192.5,5.97 193.0,6.13 193.5,6.16 194.0,6.10 194.5,6.10 195.0,6.08 195.5,6.11 196.0,6.08 196.5,6.08 197.0,6.13 197.5,6.10 198.0,6.10 198.5,6.13 199.0,6.11 199.5,6.10 200.0,6.06 200.5,6.05 201.0,6.13 201.5,6.09 202.0,6.15 202.5,6.15 203.0,6.10 203.5,1.28 204.0,3.39 204.5,3.78 205.0,4.45 205.5,5.22 206.0,1.70 206.5,2.84 207.0,4.15 207.5,4.62 208.0,5.11 208.5,5.52 209.0,5.73 209.5,2.07 210.0,3.20 210.5,4.33 211.0,5.09 211.5,5.44 212.0,5.73 212.5,5.88 213.0,5.63 213.5,2.28 214.0,2.78 214.5,3.75 215.0,4.69 215.5,5.11 216.0,5.58 216.5,5.71 217.0,6.03 217.5,5.31 218.0,3.30 218.5,4.27 219.0,5.03 219.5,5.21 220.0,5.55 220.5,5.95 221.0,5.99 221.5,3.38 222.0,4.32 222.5,4.89 223.0,5.40 223.5,5.59 224.0,5.82 224.5,6.08 225.0,6.07 225.5,6.11 226.0,6.14 226.5,6.12 227.0,6.14 227.5,6.06 228.0,6.05 228.5,6.15 229.0,6.09 229.5,6.11 230.0,6.15 230.5,6.13 231.0,6.13 231.5,6.07 232.0,6.16 232.5,6.14 233.0,6.11 233.5,6.16 234.0,6.09 234.5,6.09 235.0,0.46 235.5,2.81 236.0,3.73 236.5,4.32 237.0,5.02 237.5,3.78 238.0,2.89 238.5,3.50 239.0,4.24 239.5,4.84 240.0,5.23 240.5,5.67 241.0,4.18 241.5,2.75 242.0,3.82 242.5,4.64 243.0,5.21 243.5,5.58 244.0,5.87 244.5,5.93 245.0,3.99 245.5,2.07 246.0,3.44 246.5,3.99 247.0,4.76 247.5,5.16 248.0,5.72 248.5,5.87 249.0,6.03 249.5,4.28 250.0,3.98 250.5,4.74 251.0,5.14 251.0,7.86 250.5,8.26 250.0,9.02 249.5,8.72 249.0,6.97 248.5,7.13 248.0,7.28 247.5,7.84 247.0,8.24 246.5,9.01 246.0,9.56 245.5,10.93 245.0,9.01 244.5,7.07 244.0,7.13 243.5,7.42 243.0,7.79 242.5,8.36 242.0,9.18 241.5,10.25 241.0,8.82 240.5,7.33 240.0,7.77 239.5,8.16 239.0,8.76 238.5,9.50 238.0,10.11 237.5,9.22 237.0,7.98 236.5,8.68 236.0,9.27 235.5,10.19 235.0,12.54 234.5,6.91 234.0,6.91 233.5,6.84 233.0,6.89 232.5,6.86 232.0,6.84 231.5,6.93 231.0,6.87 230.5,6.87 230.0,6.85 229.5,6.89 229.0,6.91 228.5,6.85 228.0,6.95 227.5,6.94 227.0,6.86 226.5,6.88 226.0,6.86 225.5,6.89 225.0,6.93 224.5,6.92 224.0,7.18 223.5,7.41 223.0,7.60 222.5,8.11 222.0,8.68 221.5,9.62 221.0,7.01 220.5,7.05 220.0,7.45 219.5,7.79 219.0,7.97 218.5,8.73 218.0,9.70 217.5,7.69 217.0,6.97 216.5,7.29 216.0,7.42 215.5,7.89 215.0,8.31 214.5,9.25 214.0,10.22 213.5,10.72 213.0,7.37 212.5,7.12 212.0,7.27 211.5,7.56 211.0,7.91 210.5,8.67 210.0,9.80 209.5,10.93 209.0,7.27 208.5,7.48 208.0,7.89 207.5,8.38 207.0,8.85 206.5,10.16 206.0,11.30 205.5,7.78 205.0,8.55 204.5,9.22 204.0,9.61 203.5,11.72 203.0,6.90 202.5,6.85 202.0,6.85 201.5,6.91 201.0,6.87 200.5,6.95 200.0,6.94 199.5,6.90 199.0,6.89 198.5,6.87 198.0,6.90 197.5,6.90 197.0,6.87 196.5,6.92 196.0,6.92 195.5,6.89 195.0,6.92 194.5,6.90 194.0,6.90 193.5,6.84 193.0,6.87 192.5,7.03 192.0,7.18 191.5,7.42 191.0,7.92 190.5,8.16 190.0,8.67 189.5,7.99 189.0,7.01 188.5,7.13 188.0,7.50 187.5,7.81 187.0,8.42 186.5,8.67 186.0,8.68 185.5,6.94 185.0,7.12 184.5,7.36 184.0,7.80 183.5,8.14 183.0,8.74 182.5,9.79 182.0,11.18 181.5,8.97 181.0,6.99 180.5,7.25 180.0,7.54 179.5,7.70 179.0,8.29 178.5,8.76 178.0,10.09 177.5,8.99 177.0,7.40 176.5,7.74 176.0,8.16 175.5,8.82 175.0,9.20 174.5,9.87 174.0,9.47 173.5,7.92 173.0,8.90 172.5,9.28 172.0,11.02 171.5,12.04 171.0,6.85 170.5,6.88 170.0,6.93 169.5,6.95 169.0,6.93 168.5,6.86 168.0,6.95 167.5,6.85 167.0,6.93 166.5,6.90 166.0,6.86 165.5,6.94 165.0,6.90 164.5,6.93 164.0,6.87 163.5,6.91 163.0,6.85 162.5,6.85 162.0,6.90 161.5,6.85 161.0,6.90 160.5,7.01 160.0,7.26 159.5,7.64 159.0,8.06 158.5,8.61 158.0,9.21 157.5,6.95 157.0,7.19 156.5,7.43 156.0,7.59 155.5,8.00 155.0,8.53 154.5,9.35 154.0,7.67 153.5,7.06 153.0,7.27 152.5,7.50 152.0,8.08 151.5,8.27 151.0,8.78 150.5,9.78 150.0,11.07 149.5,7.32 149.0,7.07 148.5,7.37 148.0,7.70 147.5,8.08 147.0,8.92 146.5,9.51 146.0,10.16 145.5,7.12 145.0,7.58 144.5,7.98 144.0,8.49 143.5,8.63 143.0,9.65 142.5,10.98 142.0,7.89 141.5,8.24 141.0,9.37 140.5,9.47 140.0,10.59 139.5,6.92 139.0,6.85 138.5,6.90 138.0,6.87 137.5,6.87 137.0,6.94 136.5,6.95 136.0,6.88 135.5,6.94 135.0,6.85 134.5,6.93 134.0,6.87 133.5,6.86 133.0,6.85 132.5,6.89 132.0,6.95 131.5,6.87 131.0,6.85 130.5,6.94 130.0,6.85 129.5,6.85 129.0,7.03 128.5,7.10 128.0,7.54 127.5,7.91 127.0,8.17 126.5,8.90 126.0,8.36 125.5,7.04 125.0,7.30 124.5,7.42 124.0,7.68 123.5,8.19 123.0,9.06 122.5,8.76 122.0,7.00 121.5,7.16 121.0,7.33 120.5,7.80 120.0,8.25 119.5,8.94 119.0,9.16 118.5,10.09 118.0,9.00 117.5,7.03 117.0,7.14 116.5,7.58 116.0,8.01 115.5,8.38 115.0,9.25 114.5,9.70 114.0,8.72 113.5,7.29 113.0,7.72 112.5,8.07 112.0,8.74 111.5,9.11 111.0,10.85 110.5,8.90 110.0,7.89 109.5,8.80 109.0,9.23 108.5,11.09 108.0,11.99 107.5,6.92 107.0,6.94 106.5,6.88 106.0,6.95 105.5,6.94 105.0,6.92 104.5,6.87 104.0,6.88 103.5,6.93 103.0,6.95 102.5,6.88 102.0,6.86 101.5,6.84 101.0,6.94 100.5,6.94 100.0,6.88 99.5,6.90 99.0,6.87 98.5,6.92 98.0,6.85 97.5,6.90 97.0,7.08 96.5,7.36 96.0,7.52 95.5,7.96 95.0,8.51 94.5,9.35 94.0,7.00 93.5,7.20 93.0,7.43 92.5,7.54 92.0,8.10 91.5,8.93 91.0,9.71 90.5,7.41 90.0,7.10 89.5,7.14 89.0,7.44 88.5,7.85 88.0,8.53 87.5,9.41 87.0,9.85 86.5,11.83 86.0,7.26 85.5,7.18 85.0,7.45 84.5,7.58 84.0,7.86 83.5,8.71 83.0,9.26 82.5,10.57 82.0,7.18 81.5,7.49 81.0,7.70 80.5,8.29 80.0,9.14 79.5,10.28 79.0,10.69 78.5,7.87 78.0,8.44 77.5,9.17 77.0,9.61 76.5,11.51 76.0,6.86 75.5,6.84 75.0,6.84 74.5,6.93 74.0,6.91 73.5,6.87 73.0,6.90 72.5,6.94 72.0,6.85 71.5,6.86 71.0,6.89 70.5,6.89 70.0,6.84 69.5,6.90 69.0,6.88 68.5,6.89 68.0,6.92 67.5,6.87 67.0,6.86 66.5,6.90 66.0,6.86 65.5,6.95 65.0,7.17 64.5,7.49 64.0,7.66 63.5,8.15 63.0,9.11 62.5,7.93 62.0,6.95 61.5,7.13 61.0,7.53 60.5,7.98 60.0,8.21 59.5,9.24 59.0,9.05 58.5,7.00 58.0,7.20 57.5,7.39 57.0,7.58 56.5,7.99 56.0,8.41 55.5,9.49 55.0,10.77 54.5,9.42 54.0,7.03 53.5,7.18 53.0,7.44 52.5,7.83 52.0,8.33 51.5,8.78 51.0,9.97 50.5,9.07 50.0,7.21 49.5,7.59 49.0,8.05 48.5,8.59 48.0,9.60 47.5,10.66 47.0,9.45 46.5,8.22 46.0,8.83 45.5,9.03 45.0,11.06 44.5,12.09 44.0,6.87 43.5,6.89 43.0,6.91 42.5,6.95 42.0,6.90 41.5,6.87 41.0,6.94 40.5,6.90 40.0,6.93 39.5,6.95 39.0,6.90 38.5,6.86 38.0,6.89 37.5,6.91 37.0,6.95 36.5,6.92 36.0,6.85 35.5,6.84 35.0,6.90 34.5,6.89 34.0,6.94 33.5,7.14 33.0,7.32 32.5,7.59 32.0,7.97 31.5,8.68 31.0,9.51 30.5,6.98 30.0,7.06 29.5,7.32 29.0,7.75 28.5,7.96 28.0,8.36 27.5,9.51 27.0,7.54 26.5,7.10 26.0,7.32 25.5,7.54 25.0,7.81 24.5,8.49 24.0,9.33 23.5,9.96 23.0,11.94 22.5,7.35 22.0,7.15 21.5,7.29 21.0,7.52 20.5,8.22 20.0,8.93 19.5,9.15 19.0,10.64 18.5,7.21 18.0,7.55 17.5,7.63 17.0,8.17 16.5,8.91 16.0,9.56 15.5,10.70 15.0,7.75 14.5,8.34 14.0,8.98 13.5,9.68 13.0,10.58 12.5,6.89 12.0,6.87 11.5,6.88 11.0,6.95 10.5,6.90 10.0,6.84 9.5,6.84 9.0,6.94 8.5,6.95 8.0,6.87 7.5,6.92 7.0,6.89 6.5,6.84 6.0,6.93 5.5,6.89 5.0,6.94 4.5,6.84 4.0,6.85 3.5,6.93 3.0,6.92 2.5,6.89 2.0,7.01 1.5,7.15 1.0,7.52 0.5,7.93 0.0,8.09"/></g></svg>
<div class="a" style="left:716.52px;top:180.04999999999998px;width:253.76px;height:31.45px;background:linear-gradient(#90aad0,#809cc4 35%,#7090b8);border:1px solid #18202c;border-radius:2.5px;box-shadow:inset 1px 1px 0 rgba(255,255,255,.25);"></div>
<div class="t" style="left:719.3199999999999px;top:181.65px;font-size:6px;color:#2e3c54;transform:scaleX(.88);transform-origin:0 0">shabwey_Arp_1_f_sharp_140.1 <span style="font-size:5px">&#9901;</span></div>
<svg class="a" style="left:717.52px;top:192.45px;" width="251.76" height="13" viewBox="0 0 251.76 13"><g fill="#323f54"><polygon points="0.0,4.49 0.5,5.03 1.0,5.67 1.5,5.89 2.0,5.94 2.5,6.08 3.0,6.08 3.5,6.12 4.0,6.09 4.5,6.09 5.0,6.09 5.5,6.14 6.0,6.11 6.5,6.11 7.0,6.08 7.5,6.05 8.0,6.05 8.5,6.10 9.0,6.11 9.5,6.13 10.0,6.15 10.5,6.16 11.0,6.11 11.5,6.12 12.0,6.12 12.5,6.06 13.0,1.75 13.5,2.99 14.0,4.17 14.5,4.90 15.0,5.22 15.5,2.42 16.0,3.16 16.5,3.72 17.0,4.63 17.5,5.31 18.0,5.44 18.5,5.74 19.0,2.25 19.5,3.25 20.0,4.21 20.5,4.81 21.0,5.41 21.5,5.55 22.0,5.81 22.5,5.77 23.0,1.31 23.5,2.75 24.0,3.94 24.5,4.59 25.0,5.12 25.5,5.36 26.0,5.76 26.5,5.91 27.0,5.50 27.5,3.24 28.0,4.10 28.5,4.94 29.0,5.33 29.5,5.56 30.0,5.84 30.5,6.03 31.0,3.88 31.5,4.52 32.0,4.89 32.5,5.49 33.0,5.59 33.5,5.94 34.0,6.01 34.5,6.12 35.0,6.05 35.5,6.08 36.0,6.10 36.5,6.10 37.0,6.08 37.5,6.09 38.0,6.12 38.5,6.14 39.0,6.10 39.5,6.05 40.0,6.09 40.5,6.15 41.0,6.07 41.5,6.08 42.0,6.06 42.5,6.14 43.0,6.07 43.5,6.15 44.0,6.08 44.5,1.34 45.0,2.78 45.5,3.23 46.0,4.58 46.5,4.91 47.0,3.58 47.5,2.89 48.0,3.89 48.5,4.19 49.0,5.01 49.5,5.32 50.0,5.79 50.5,4.27 51.0,3.41 51.5,3.89 52.0,4.89 52.5,4.99 53.0,5.66 53.5,5.74 54.0,6.05 54.5,3.88 55.0,1.99 55.5,3.77 56.0,4.49 56.5,4.79 57.0,5.35 57.5,5.75 58.0,5.78 58.5,6.08 59.0,4.46 59.5,4.10 60.0,4.60 60.5,5.06 61.0,5.62 61.5,5.81 62.0,6.04 62.5,4.87 63.0,3.88 63.5,4.60 64.0,5.05 64.5,5.48 65.0,5.73 65.5,5.96 66.0,6.10 66.5,6.13 67.0,6.08 67.5,6.12 68.0,6.15 68.5,6.11 69.0,6.06 69.5,6.14 70.0,6.09 70.5,6.11 71.0,6.10 71.5,6.14 72.0,6.05 72.5,6.13 73.0,6.09 73.5,6.11 74.0,6.16 74.5,6.10 75.0,6.14 75.5,6.15 76.0,6.15 76.5,2.24 77.0,3.45 77.5,3.88 78.0,4.65 78.5,4.96 79.0,1.39 79.5,2.70 80.0,4.25 80.5,4.75 81.0,5.29 81.5,5.52 82.0,5.78 82.5,2.18 83.0,3.41 83.5,4.52 84.0,4.98 84.5,5.35 85.0,5.78 85.5,5.97 86.0,5.72 86.5,2.20 87.0,2.74 87.5,4.10 88.0,4.82 88.5,5.24 89.0,5.56 89.5,5.82 90.0,5.95 90.5,5.47 91.0,3.72 91.5,4.26 92.0,5.06 92.5,5.22 93.0,5.55 93.5,5.84 94.0,6.04 94.5,3.65 95.0,4.37 95.5,5.17 96.0,5.41 96.5,5.68 97.0,5.96 97.5,6.11 98.0,6.07 98.5,6.12 99.0,6.10 99.5,6.05 100.0,6.09 100.5,6.13 101.0,6.05 101.5,6.12 102.0,6.16 102.5,6.08 103.0,6.15 103.5,6.12 104.0,6.06 104.5,6.08 105.0,6.16 105.5,6.11 106.0,6.11 106.5,6.10 107.0,6.14 107.5,6.09 108.0,1.66 108.5,2.72 109.0,3.66 109.5,4.07 110.0,5.11 110.5,3.65 111.0,2.95 111.5,3.59 112.0,4.48 112.5,4.99 113.0,5.30 113.5,5.71 114.0,4.43 114.5,3.46 115.0,4.31 115.5,4.49 116.0,5.11 116.5,5.40 117.0,5.75 117.5,6.05 118.0,3.55 118.5,2.04 119.0,3.28 119.5,4.29 120.0,4.95 120.5,5.33 121.0,5.56 121.5,5.91 122.0,6.03 122.5,4.17 123.0,3.66 123.5,4.50 124.0,4.99 124.5,5.42 125.0,5.82 125.5,6.01 126.0,4.85 126.5,4.23 127.0,4.76 127.5,5.13 128.0,5.43 128.5,5.79 129.0,5.94 129.5,6.15 130.0,6.12 130.5,6.05 131.0,6.14 131.5,6.11 132.0,6.15 132.5,6.15 133.0,6.06 133.5,6.05 134.0,6.09 134.5,6.14 135.0,6.13 135.5,6.13 136.0,6.08 136.5,6.08 137.0,6.11 137.5,6.10 138.0,6.15 138.5,6.10 139.0,6.05 139.5,6.07 140.0,2.33 140.5,3.03 141.0,3.82 141.5,4.78 142.0,5.00 142.5,2.00 143.0,2.98 143.5,4.13 144.0,4.47 144.5,5.09 145.0,5.53 145.5,5.87 146.0,2.59 146.5,3.98 147.0,4.31 147.5,4.77 148.0,5.46 148.5,5.66 149.0,5.89 149.5,5.72 150.0,1.37 150.5,2.52 151.0,3.76 151.5,4.62 152.0,4.93 152.5,5.54 153.0,5.71 153.5,5.93 154.0,5.38 154.5,3.27 155.0,4.52 155.5,4.87 156.0,5.38 156.5,5.62 157.0,5.80 157.5,6.01 158.0,4.05 158.5,4.44 159.0,4.89 159.5,5.26 160.0,5.65 160.5,5.85 161.0,6.12 161.5,6.05 162.0,6.08 162.5,6.09 163.0,6.06 163.5,6.06 164.0,6.15 164.5,6.07 165.0,6.07 165.5,6.14 166.0,6.07 166.5,6.09 167.0,6.14 167.5,6.07 168.0,6.14 168.5,6.09 169.0,6.11 169.5,6.13 170.0,6.09 170.5,6.11 171.0,6.14 171.5,0.25 172.0,2.96 172.5,3.97 173.0,4.35 173.5,4.77 174.0,3.73 174.5,2.32 175.0,3.66 175.5,4.31 176.0,5.05 176.5,5.46 177.0,5.68 177.5,4.49 178.0,3.50 178.5,3.83 179.0,4.85 179.5,5.07 180.0,5.45 180.5,5.81 181.0,5.95 181.5,3.45 182.0,1.93 182.5,3.79 183.0,4.50 183.5,4.94 184.0,5.33 184.5,5.68 185.0,5.95 185.5,6.03 186.0,3.84 186.5,4.08 187.0,4.64 187.5,5.20 188.0,5.53 188.5,5.70 189.0,6.00 189.5,4.77 190.0,4.08 190.5,4.70 191.0,5.04 191.5,5.66 192.0,5.74 192.5,6.02 193.0,6.09 193.5,6.07 194.0,6.08 194.5,6.11 195.0,6.06 195.5,6.15 196.0,6.09 196.5,6.11 197.0,6.10 197.5,6.06 198.0,6.07 198.5,6.09 199.0,6.12 199.5,6.13 200.0,6.11 200.5,6.13 201.0,6.13 201.5,6.05 202.0,6.15 202.5,6.07 203.0,6.12 203.5,1.97 204.0,3.23 204.5,4.28 205.0,4.68 205.5,5.28 206.0,2.03 206.5,3.37 207.0,3.79 207.5,4.50 208.0,5.22 208.5,5.51 209.0,5.72 209.5,2.72 210.0,3.92 210.5,4.53 211.0,5.08 211.5,5.30 212.0,5.70 212.5,5.91 213.0,5.63 213.5,2.03 214.0,2.65 214.5,3.81 215.0,4.66 215.5,4.99 216.0,5.53 216.5,5.68 217.0,5.89 217.5,5.46 218.0,3.40 218.5,4.07 219.0,4.82 219.5,5.27 220.0,5.57 220.5,5.81 221.0,5.99 221.5,3.27 222.0,4.54 222.5,4.92 223.0,5.33 223.5,5.72 224.0,5.92 224.5,6.10 225.0,6.05 225.5,6.12 226.0,6.10 226.5,6.06 227.0,6.14 227.5,6.05 228.0,6.14 228.5,6.16 229.0,6.12 229.5,6.12 230.0,6.05 230.5,6.06 231.0,6.07 231.5,6.11 232.0,6.10 232.5,6.13 233.0,6.06 233.5,6.11 234.0,6.13 234.5,6.09 235.0,1.54 235.5,2.68 236.0,3.19 236.5,4.59 237.0,5.08 237.5,4.07 238.0,2.89 238.5,3.72 239.0,4.57 239.5,5.04 240.0,5.47 240.5,5.74 241.0,4.10 241.5,3.25 242.0,4.10 242.5,4.54 243.0,5.33 243.5,5.62 244.0,5.71 244.5,5.99 245.0,3.46 245.5,2.80 246.0,3.45 246.5,4.07 247.0,4.96 247.5,5.22 248.0,5.61 248.5,5.88 249.0,5.97 249.5,4.23 250.0,4.01 250.5,4.60 251.0,5.23 251.5,5.42 251.5,7.58 251.0,7.77 250.5,8.40 250.0,8.99 249.5,8.77 249.0,7.03 248.5,7.12 248.0,7.39 247.5,7.78 247.0,8.04 246.5,8.93 246.0,9.55 245.5,10.20 245.0,9.54 244.5,7.01 244.0,7.29 243.5,7.38 243.0,7.67 242.5,8.46 242.0,8.90 241.5,9.75 241.0,8.90 240.5,7.26 240.0,7.53 239.5,7.96 239.0,8.43 238.5,9.28 238.0,10.11 237.5,8.93 237.0,7.92 236.5,8.41 236.0,9.81 235.5,10.32 235.0,11.46 234.5,6.91 234.0,6.87 233.5,6.89 233.0,6.94 232.5,6.87 232.0,6.90 231.5,6.89 231.0,6.93 230.5,6.94 230.0,6.95 229.5,6.88 229.0,6.88 228.5,6.84 228.0,6.86 227.5,6.95 227.0,6.86 226.5,6.94 226.0,6.90 225.5,6.88 225.0,6.95 224.5,6.90 224.0,7.08 223.5,7.28 223.0,7.67 222.5,8.08 222.0,8.46 221.5,9.73 221.0,7.01 220.5,7.19 220.0,7.43 219.5,7.73 219.0,8.18 218.5,8.93 218.0,9.60 217.5,7.54 217.0,7.11 216.5,7.32 216.0,7.47 215.5,8.01 215.0,8.34 214.5,9.19 214.0,10.35 213.5,10.97 213.0,7.37 212.5,7.09 212.0,7.30 211.5,7.70 211.0,7.92 210.5,8.47 210.0,9.08 209.5,10.28 209.0,7.28 208.5,7.49 208.0,7.78 207.5,8.50 207.0,9.21 206.5,9.63 206.0,10.97 205.5,7.72 205.0,8.32 204.5,8.72 204.0,9.77 203.5,11.03 203.0,6.88 202.5,6.93 202.0,6.85 201.5,6.95 201.0,6.87 200.5,6.87 200.0,6.89 199.5,6.87 199.0,6.88 198.5,6.91 198.0,6.93 197.5,6.94 197.0,6.90 196.5,6.89 196.0,6.91 195.5,6.85 195.0,6.94 194.5,6.89 194.0,6.92 193.5,6.93 193.0,6.91 192.5,6.98 192.0,7.26 191.5,7.34 191.0,7.96 190.5,8.30 190.0,8.92 189.5,8.23 189.0,7.00 188.5,7.30 188.0,7.47 187.5,7.80 187.0,8.36 186.5,8.92 186.0,9.16 185.5,6.97 185.0,7.05 184.5,7.32 184.0,7.67 183.5,8.06 183.0,8.50 182.5,9.21 182.0,11.07 181.5,9.55 181.0,7.05 180.5,7.19 180.0,7.55 179.5,7.93 179.0,8.15 178.5,9.17 178.0,9.50 177.5,8.51 177.0,7.32 176.5,7.54 176.0,7.95 175.5,8.69 175.0,9.34 174.5,10.68 174.0,9.27 173.5,8.23 173.0,8.65 172.5,9.03 172.0,10.04 171.5,12.75 171.0,6.86 170.5,6.89 170.0,6.91 169.5,6.87 169.0,6.89 168.5,6.91 168.0,6.86 167.5,6.93 167.0,6.86 166.5,6.91 166.0,6.93 165.5,6.86 165.0,6.93 164.5,6.93 164.0,6.85 163.5,6.94 163.0,6.94 162.5,6.91 162.0,6.92 161.5,6.95 161.0,6.88 160.5,7.15 160.0,7.35 159.5,7.74 159.0,8.11 158.5,8.56 158.0,8.95 157.5,6.99 157.0,7.20 156.5,7.38 156.0,7.62 155.5,8.13 155.0,8.48 154.5,9.73 154.0,7.62 153.5,7.07 153.0,7.29 152.5,7.46 152.0,8.07 151.5,8.38 151.0,9.24 150.5,10.48 150.0,11.63 149.5,7.28 149.0,7.11 148.5,7.34 148.0,7.54 147.5,8.23 147.0,8.69 146.5,9.02 146.0,10.41 145.5,7.13 145.0,7.47 144.5,7.91 144.0,8.53 143.5,8.87 143.0,10.02 142.5,11.00 142.0,8.00 141.5,8.22 141.0,9.18 140.5,9.97 140.0,10.67 139.5,6.93 139.0,6.95 138.5,6.90 138.0,6.85 137.5,6.90 137.0,6.89 136.5,6.92 136.0,6.92 135.5,6.87 135.0,6.87 134.5,6.86 134.0,6.91 133.5,6.95 133.0,6.94 132.5,6.85 132.0,6.85 131.5,6.89 131.0,6.86 130.5,6.95 130.0,6.88 129.5,6.85 129.0,7.06 128.5,7.21 128.0,7.57 127.5,7.87 127.0,8.24 126.5,8.77 126.0,8.15 125.5,6.99 125.0,7.18 124.5,7.58 124.0,8.01 123.5,8.50 123.0,9.34 122.5,8.83 122.0,6.97 121.5,7.09 121.0,7.44 120.5,7.67 120.0,8.05 119.5,8.71 119.0,9.72 118.5,10.96 118.0,9.45 117.5,6.95 117.0,7.25 116.5,7.60 116.0,7.89 115.5,8.51 115.0,8.69 114.5,9.54 114.0,8.57 113.5,7.29 113.0,7.70 112.5,8.01 112.0,8.52 111.5,9.41 111.0,10.05 110.5,9.35 110.0,7.89 109.5,8.93 109.0,9.34 108.5,10.28 108.0,11.34 107.5,6.91 107.0,6.86 106.5,6.90 106.0,6.89 105.5,6.89 105.0,6.84 104.5,6.92 104.0,6.94 103.5,6.88 103.0,6.85 102.5,6.92 102.0,6.84 101.5,6.88 101.0,6.95 100.5,6.87 100.0,6.91 99.5,6.95 99.0,6.90 98.5,6.88 98.0,6.93 97.5,6.89 97.0,7.04 96.5,7.32 96.0,7.59 95.5,7.83 95.0,8.63 94.5,9.35 94.0,6.96 93.5,7.16 93.0,7.45 92.5,7.78 92.0,7.94 91.5,8.74 91.0,9.28 90.5,7.53 90.0,7.05 89.5,7.18 89.0,7.44 88.5,7.76 88.0,8.18 87.5,8.90 87.0,10.26 86.5,10.80 86.0,7.28 85.5,7.03 85.0,7.22 84.5,7.65 84.0,8.02 83.5,8.48 83.0,9.59 82.5,10.82 82.0,7.22 81.5,7.48 81.0,7.71 80.5,8.25 80.0,8.75 79.5,10.30 79.0,11.61 78.5,8.04 78.0,8.35 77.5,9.12 77.0,9.55 76.5,10.76 76.0,6.85 75.5,6.85 75.0,6.86 74.5,6.90 74.0,6.84 73.5,6.89 73.0,6.91 72.5,6.87 72.0,6.95 71.5,6.86 71.0,6.90 70.5,6.89 70.0,6.91 69.5,6.86 69.0,6.94 68.5,6.89 68.0,6.85 67.5,6.88 67.0,6.92 66.5,6.87 66.0,6.90 65.5,7.04 65.0,7.27 64.5,7.52 64.0,7.95 63.5,8.40 63.0,9.12 62.5,8.13 62.0,6.96 61.5,7.19 61.0,7.38 60.5,7.94 60.0,8.40 59.5,8.90 59.0,8.54 58.5,6.92 58.0,7.22 57.5,7.25 57.0,7.65 56.5,8.21 56.0,8.51 55.5,9.23 55.0,11.01 54.5,9.12 54.0,6.95 53.5,7.26 53.0,7.34 52.5,8.01 52.0,8.11 51.5,9.11 51.0,9.59 50.5,8.73 50.0,7.21 49.5,7.68 49.0,7.99 48.5,8.81 48.0,9.11 47.5,10.11 47.0,9.42 46.5,8.09 46.0,8.42 45.5,9.77 45.0,10.22 44.5,11.66 44.0,6.92 43.5,6.85 43.0,6.93 42.5,6.86 42.0,6.94 41.5,6.92 41.0,6.93 40.5,6.85 40.0,6.91 39.5,6.95 39.0,6.90 38.5,6.86 38.0,6.88 37.5,6.91 37.0,6.92 36.5,6.90 36.0,6.90 35.5,6.92 35.0,6.95 34.5,6.88 34.0,6.99 33.5,7.06 33.0,7.41 32.5,7.51 32.0,8.11 31.5,8.48 31.0,9.12 30.5,6.97 30.0,7.16 29.5,7.44 29.0,7.67 28.5,8.06 28.0,8.90 27.5,9.76 27.0,7.50 26.5,7.09 26.0,7.24 25.5,7.64 25.0,7.88 24.5,8.41 24.0,9.06 23.5,10.25 23.0,11.69 22.5,7.23 22.0,7.19 21.5,7.45 21.0,7.59 20.5,8.19 20.0,8.79 19.5,9.75 19.0,10.75 18.5,7.26 18.0,7.56 17.5,7.69 17.0,8.37 16.5,9.28 16.0,9.84 15.5,10.58 15.0,7.78 14.5,8.10 14.0,8.83 13.5,10.01 13.0,11.25 12.5,6.94 12.0,6.88 11.5,6.88 11.0,6.89 10.5,6.84 10.0,6.85 9.5,6.87 9.0,6.89 8.5,6.90 8.0,6.95 7.5,6.95 7.0,6.92 6.5,6.89 6.0,6.89 5.5,6.86 5.0,6.91 4.5,6.91 4.0,6.91 3.5,6.88 3.0,6.92 2.5,6.92 2.0,7.06 1.5,7.11 1.0,7.33 0.5,7.97 0.0,8.51"/></g></svg>
<div class="a" style="left:463.26px;top:211.29999999999998px;width:253.26px;height:31.45px;background:linear-gradient(#82be8a,#6aa872 35%,#60a068);border:1px solid #1e3422;border-radius:2.5px;box-shadow:inset 1px 1px 0 rgba(255,255,255,.25);"></div>
<div class="t" style="left:466.06px;top:212.90px;font-size:6px;color:#1e3a22;transform:scaleX(.88);transform-origin:0 0">shabwey_Bass_1_f_sharp_140 <span style="font-size:5px">&#9901;</span></div>
<svg class="a" style="left:464.26px;top:221.89999999999998px;" width="251.26" height="14" viewBox="0 0 251.26 14"><g fill="#345a3a"><polygon points="0.0,0.80 0.5,0.48 1.0,0.66 1.5,0.42 2.0,0.39 2.5,0.98 3.0,1.04 3.5,0.17 4.0,0.78 4.5,0.80 5.0,0.00 5.5,0.56 6.0,0.17 6.5,0.55 7.0,0.38 7.5,0.89 8.0,0.38 8.5,0.14 9.0,0.50 9.5,0.27 10.0,0.35 10.5,0.98 11.0,0.25 11.5,0.43 12.0,0.73 12.5,1.02 13.0,0.14 13.5,0.55 14.0,0.30 14.5,0.13 15.0,0.30 15.5,0.08 16.0,0.64 16.5,6.58 17.0,6.58 17.5,6.58 18.0,6.58 18.5,6.58 19.0,6.58 19.5,6.58 20.0,6.58 20.5,6.58 21.0,6.58 21.5,6.58 22.0,6.58 22.5,6.58 23.0,6.58 23.5,6.58 24.0,6.58 24.5,6.58 25.0,6.58 25.5,6.58 26.0,6.58 26.5,6.58 27.0,6.58 27.5,6.58 28.0,6.58 28.5,6.58 29.0,6.58 29.5,6.58 30.0,0.30 30.5,0.83 31.0,0.18 31.5,0.45 32.0,0.75 32.5,0.98 33.0,0.15 33.5,0.01 34.0,0.96 34.5,0.21 35.0,0.62 35.5,0.89 36.0,0.74 36.5,0.24 37.0,0.13 37.5,1.00 38.0,0.40 38.5,1.00 39.0,0.30 39.5,0.70 40.0,0.13 40.5,0.02 41.0,0.52 41.5,0.00 42.0,0.72 42.5,0.97 43.0,0.42 43.5,1.02 44.0,0.84 44.5,0.62 45.0,0.41 45.5,0.89 46.0,1.01 46.5,0.14 47.0,0.72 47.5,0.04 48.0,0.11 48.5,0.65 49.0,0.57 49.5,0.50 50.0,0.37 50.5,0.42 51.0,0.46 51.5,0.40 52.0,0.06 52.5,0.52 53.0,0.60 53.5,0.29 54.0,0.80 54.5,0.73 55.0,0.02 55.5,0.50 56.0,0.47 56.5,1.04 57.0,0.61 57.5,0.44 58.0,1.03 58.5,0.40 59.0,0.39 59.5,0.99 60.0,0.39 60.5,0.56 61.0,0.34 61.5,0.68 62.0,0.31 62.5,0.28 63.0,1.03 63.5,0.99 64.0,0.34 64.5,0.04 65.0,0.79 65.5,0.57 66.0,0.43 66.5,0.71 67.0,0.67 67.5,0.72 68.0,0.66 68.5,0.42 69.0,0.73 69.5,0.65 70.0,0.24 70.5,1.02 71.0,0.45 71.5,0.28 72.0,0.72 72.5,0.82 73.0,0.21 73.5,0.80 74.0,0.85 74.5,0.59 75.0,0.32 75.5,0.94 76.0,0.71 76.5,0.70 77.0,0.17 77.5,0.59 78.0,0.15 78.5,0.87 79.0,0.70 79.5,0.37 80.0,0.12 80.5,0.58 81.0,0.81 81.5,0.92 82.0,0.49 82.5,0.85 83.0,0.20 83.5,0.17 84.0,0.86 84.5,0.76 85.0,0.20 85.5,0.38 86.0,0.20 86.5,0.69 87.0,0.91 87.5,0.74 88.0,0.22 88.5,0.77 89.0,0.69 89.5,0.61 90.0,0.61 90.5,0.62 91.0,0.08 91.5,0.89 92.0,1.05 92.5,0.06 93.0,0.13 93.5,0.01 94.0,0.59 94.5,0.05 95.0,0.08 95.5,0.82 96.0,0.27 96.5,0.17 97.0,0.35 97.5,0.51 98.0,0.75 98.5,0.69 99.0,0.81 99.5,0.98 100.0,0.43 100.5,0.75 101.0,0.20 101.5,1.00 102.0,0.10 102.5,0.32 103.0,0.08 103.5,0.11 104.0,0.11 104.5,0.44 105.0,1.04 105.5,0.27 106.0,0.87 106.5,0.74 107.0,0.35 107.5,0.50 108.0,0.62 108.5,0.06 109.0,0.41 109.5,0.69 110.0,0.78 110.5,0.15 111.0,0.55 111.5,0.23 112.0,0.68 112.5,0.84 113.0,0.49 113.5,0.19 114.0,0.87 114.5,0.22 115.0,0.08 115.5,0.20 116.0,0.19 116.5,1.04 117.0,0.39 117.5,0.14 118.0,1.00 118.5,0.77 119.0,0.77 119.5,0.50 120.0,0.61 120.5,0.55 121.0,0.23 121.5,1.05 122.0,0.99 122.5,0.92 123.0,0.92 123.5,0.98 124.0,0.03 124.5,0.15 125.0,0.96 125.5,0.52 126.0,0.72 126.5,0.72 127.0,0.68 127.5,0.37 128.0,0.43 128.5,0.67 129.0,0.85 129.5,0.70 130.0,0.92 130.5,0.47 131.0,0.30 131.5,0.65 132.0,0.97 132.5,0.86 133.0,0.66 133.5,0.42 134.0,0.23 134.5,0.65 135.0,0.21 135.5,0.40 136.0,0.60 136.5,0.66 137.0,0.53 137.5,0.31 138.0,0.61 138.5,0.32 139.0,0.57 139.5,0.79 140.0,0.49 140.5,0.32 141.0,0.97 141.5,0.60 142.0,0.60 142.5,6.58 143.0,6.58 143.5,6.58 144.0,6.58 144.5,6.58 145.0,6.58 145.5,6.58 146.0,6.58 146.5,6.58 147.0,6.58 147.5,6.58 148.0,6.58 148.5,6.58 149.0,6.58 149.5,6.58 150.0,6.58 150.5,6.58 151.0,6.58 151.5,6.58 152.0,6.58 152.5,6.58 153.0,6.58 153.5,6.58 154.0,6.58 154.5,6.58 155.0,6.58 155.5,6.58 156.0,0.92 156.5,0.16 157.0,0.34 157.5,0.17 158.0,0.05 158.5,0.44 159.0,0.21 159.5,1.01 160.0,0.24 160.5,0.51 161.0,0.30 161.5,0.94 162.0,0.26 162.5,0.07 163.0,0.99 163.5,0.71 164.0,0.46 164.5,0.18 165.0,0.80 165.5,0.86 166.0,0.79 166.5,0.40 167.0,0.26 167.5,0.64 168.0,0.66 168.5,0.63 169.0,0.68 169.5,0.61 170.0,0.96 170.5,0.52 171.0,0.03 171.5,0.62 172.0,0.27 172.5,0.88 173.0,0.32 173.5,0.26 174.0,0.34 174.5,0.51 175.0,0.54 175.5,0.37 176.0,0.11 176.5,0.89 177.0,0.95 177.5,0.26 178.0,0.09 178.5,0.51 179.0,0.58 179.5,0.30 180.0,0.85 180.5,0.77 181.0,0.84 181.5,0.44 182.0,0.72 182.5,0.81 183.0,0.32 183.5,0.05 184.0,0.74 184.5,0.31 185.0,0.62 185.5,0.15 186.0,0.44 186.5,0.77 187.0,0.82 187.5,1.03 188.0,0.55 188.5,0.65 189.0,0.87 189.5,0.67 190.0,0.71 190.5,0.24 191.0,0.90 191.5,0.01 192.0,0.55 192.5,0.42 193.0,0.56 193.5,0.17 194.0,0.19 194.5,0.47 195.0,0.54 195.5,0.29 196.0,0.15 196.5,0.63 197.0,0.28 197.5,0.04 198.0,0.56 198.5,0.81 199.0,0.80 199.5,0.30 200.0,0.34 200.5,0.04 201.0,0.15 201.5,0.80 202.0,0.85 202.5,0.78 203.0,0.85 203.5,0.31 204.0,0.15 204.5,0.11 205.0,0.78 205.5,0.14 206.0,0.72 206.5,0.61 207.0,0.28 207.5,0.96 208.0,0.95 208.5,0.17 209.0,0.74 209.5,0.68 210.0,0.44 210.5,0.34 211.0,1.04 211.5,0.70 212.0,0.59 212.5,0.54 213.0,0.83 213.5,0.44 214.0,0.05 214.5,0.64 215.0,0.48 215.5,0.92 216.0,0.76 216.5,0.35 217.0,0.93 217.5,0.12 218.0,0.10 218.5,0.95 219.0,0.06 219.5,0.66 220.0,0.24 220.5,0.25 221.0,0.74 221.5,0.34 222.0,0.36 222.5,0.20 223.0,0.77 223.5,0.26 224.0,0.04 224.5,0.34 225.0,0.49 225.5,0.93 226.0,0.53 226.5,0.68 227.0,0.30 227.5,0.34 228.0,0.46 228.5,0.86 229.0,0.37 229.5,0.39 230.0,0.86 230.5,0.12 231.0,0.36 231.5,0.92 232.0,0.07 232.5,0.90 233.0,0.70 233.5,0.29 234.0,0.42 234.5,0.47 235.0,0.37 235.5,0.57 236.0,0.72 236.5,0.86 237.0,0.98 237.5,0.30 238.0,0.26 238.5,0.48 239.0,0.27 239.5,0.67 240.0,0.77 240.5,0.65 241.0,0.13 241.5,1.01 242.0,0.52 242.5,0.79 243.0,0.24 243.5,0.68 244.0,0.70 244.5,0.63 245.0,0.48 245.5,0.24 246.0,0.68 246.5,0.16 247.0,0.93 247.5,0.77 248.0,0.95 248.5,0.93 249.0,0.23 249.5,0.29 250.0,0.86 250.5,0.85 251.0,0.61 251.0,13.39 250.5,13.15 250.0,13.14 249.5,13.71 249.0,13.77 248.5,13.07 248.0,13.05 247.5,13.23 247.0,13.07 246.5,13.84 246.0,13.32 245.5,13.76 245.0,13.52 244.5,13.37 244.0,13.30 243.5,13.32 243.0,13.76 242.5,13.21 242.0,13.48 241.5,12.99 241.0,13.87 240.5,13.35 240.0,13.23 239.5,13.33 239.0,13.73 238.5,13.52 238.0,13.74 237.5,13.70 237.0,13.02 236.5,13.14 236.0,13.28 235.5,13.43 235.0,13.63 234.5,13.53 234.0,13.58 233.5,13.71 233.0,13.30 232.5,13.10 232.0,13.93 231.5,13.08 231.0,13.64 230.5,13.88 230.0,13.14 229.5,13.61 229.0,13.63 228.5,13.14 228.0,13.54 227.5,13.66 227.0,13.70 226.5,13.32 226.0,13.47 225.5,13.07 225.0,13.51 224.5,13.66 224.0,13.96 223.5,13.74 223.0,13.23 222.5,13.80 222.0,13.64 221.5,13.66 221.0,13.26 220.5,13.75 220.0,13.76 219.5,13.34 219.0,13.94 218.5,13.05 218.0,13.90 217.5,13.88 217.0,13.07 216.5,13.65 216.0,13.24 215.5,13.08 215.0,13.52 214.5,13.36 214.0,13.95 213.5,13.56 213.0,13.17 212.5,13.46 212.0,13.41 211.5,13.30 211.0,12.96 210.5,13.66 210.0,13.56 209.5,13.32 209.0,13.26 208.5,13.83 208.0,13.05 207.5,13.04 207.0,13.72 206.5,13.39 206.0,13.28 205.5,13.86 205.0,13.22 204.5,13.89 204.0,13.85 203.5,13.69 203.0,13.15 202.5,13.22 202.0,13.15 201.5,13.20 201.0,13.85 200.5,13.96 200.0,13.66 199.5,13.70 199.0,13.20 198.5,13.19 198.0,13.44 197.5,13.96 197.0,13.72 196.5,13.37 196.0,13.85 195.5,13.71 195.0,13.46 194.5,13.53 194.0,13.81 193.5,13.83 193.0,13.44 192.5,13.58 192.0,13.45 191.5,13.99 191.0,13.10 190.5,13.76 190.0,13.29 189.5,13.33 189.0,13.13 188.5,13.35 188.0,13.45 187.5,12.97 187.0,13.18 186.5,13.23 186.0,13.56 185.5,13.85 185.0,13.38 184.5,13.69 184.0,13.26 183.5,13.95 183.0,13.68 182.5,13.19 182.0,13.28 181.5,13.56 181.0,13.16 180.5,13.23 180.0,13.15 179.5,13.70 179.0,13.42 178.5,13.49 178.0,13.91 177.5,13.74 177.0,13.05 176.5,13.11 176.0,13.89 175.5,13.63 175.0,13.46 174.5,13.49 174.0,13.66 173.5,13.74 173.0,13.68 172.5,13.12 172.0,13.73 171.5,13.38 171.0,13.97 170.5,13.48 170.0,13.04 169.5,13.39 169.0,13.32 168.5,13.37 168.0,13.34 167.5,13.36 167.0,13.74 166.5,13.60 166.0,13.21 165.5,13.14 165.0,13.20 164.5,13.82 164.0,13.54 163.5,13.29 163.0,13.01 162.5,13.93 162.0,13.74 161.5,13.06 161.0,13.70 160.5,13.49 160.0,13.76 159.5,12.99 159.0,13.79 158.5,13.56 158.0,13.95 157.5,13.83 157.0,13.66 156.5,13.84 156.0,13.08 155.5,7.42 155.0,7.42 154.5,7.42 154.0,7.42 153.5,7.42 153.0,7.42 152.5,7.42 152.0,7.42 151.5,7.42 151.0,7.42 150.5,7.42 150.0,7.42 149.5,7.42 149.0,7.42 148.5,7.42 148.0,7.42 147.5,7.42 147.0,7.42 146.5,7.42 146.0,7.42 145.5,7.42 145.0,7.42 144.5,7.42 144.0,7.42 143.5,7.42 143.0,7.42 142.5,7.42 142.0,13.40 141.5,13.40 141.0,13.03 140.5,13.68 140.0,13.51 139.5,13.21 139.0,13.43 138.5,13.68 138.0,13.39 137.5,13.69 137.0,13.47 136.5,13.34 136.0,13.40 135.5,13.60 135.0,13.79 134.5,13.35 134.0,13.77 133.5,13.58 133.0,13.34 132.5,13.14 132.0,13.03 131.5,13.35 131.0,13.70 130.5,13.53 130.0,13.08 129.5,13.30 129.0,13.15 128.5,13.33 128.0,13.57 127.5,13.63 127.0,13.32 126.5,13.28 126.0,13.28 125.5,13.48 125.0,13.04 124.5,13.85 124.0,13.97 123.5,13.02 123.0,13.08 122.5,13.08 122.0,13.01 121.5,12.95 121.0,13.77 120.5,13.45 120.0,13.39 119.5,13.50 119.0,13.23 118.5,13.23 118.0,13.00 117.5,13.86 117.0,13.61 116.5,12.96 116.0,13.81 115.5,13.80 115.0,13.92 114.5,13.78 114.0,13.13 113.5,13.81 113.0,13.51 112.5,13.16 112.0,13.32 111.5,13.77 111.0,13.45 110.5,13.85 110.0,13.22 109.5,13.31 109.0,13.59 108.5,13.94 108.0,13.38 107.5,13.50 107.0,13.65 106.5,13.26 106.0,13.13 105.5,13.73 105.0,12.96 104.5,13.56 104.0,13.89 103.5,13.89 103.0,13.92 102.5,13.68 102.0,13.90 101.5,13.00 101.0,13.80 100.5,13.25 100.0,13.57 99.5,13.02 99.0,13.19 98.5,13.31 98.0,13.25 97.5,13.49 97.0,13.65 96.5,13.83 96.0,13.73 95.5,13.18 95.0,13.92 94.5,13.95 94.0,13.41 93.5,13.99 93.0,13.87 92.5,13.94 92.0,12.95 91.5,13.11 91.0,13.92 90.5,13.38 90.0,13.39 89.5,13.39 89.0,13.31 88.5,13.23 88.0,13.78 87.5,13.26 87.0,13.09 86.5,13.31 86.0,13.80 85.5,13.62 85.0,13.80 84.5,13.24 84.0,13.14 83.5,13.83 83.0,13.80 82.5,13.15 82.0,13.51 81.5,13.08 81.0,13.19 80.5,13.42 80.0,13.88 79.5,13.63 79.0,13.30 78.5,13.13 78.0,13.85 77.5,13.41 77.0,13.83 76.5,13.30 76.0,13.29 75.5,13.06 75.0,13.68 74.5,13.41 74.0,13.15 73.5,13.20 73.0,13.79 72.5,13.18 72.0,13.28 71.5,13.72 71.0,13.55 70.5,12.98 70.0,13.76 69.5,13.35 69.0,13.27 68.5,13.58 68.0,13.34 67.5,13.28 67.0,13.33 66.5,13.29 66.0,13.57 65.5,13.43 65.0,13.21 64.5,13.96 64.0,13.66 63.5,13.01 63.0,12.97 62.5,13.72 62.0,13.69 61.5,13.32 61.0,13.66 60.5,13.44 60.0,13.61 59.5,13.01 59.0,13.61 58.5,13.60 58.0,12.97 57.5,13.56 57.0,13.39 56.5,12.96 56.0,13.53 55.5,13.50 55.0,13.98 54.5,13.27 54.0,13.20 53.5,13.71 53.0,13.40 52.5,13.48 52.0,13.94 51.5,13.60 51.0,13.54 50.5,13.58 50.0,13.63 49.5,13.50 49.0,13.43 48.5,13.35 48.0,13.89 47.5,13.96 47.0,13.28 46.5,13.86 46.0,12.99 45.5,13.11 45.0,13.59 44.5,13.38 44.0,13.16 43.5,12.98 43.0,13.58 42.5,13.03 42.0,13.28 41.5,14.00 41.0,13.48 40.5,13.98 40.0,13.87 39.5,13.30 39.0,13.70 38.5,13.00 38.0,13.60 37.5,13.00 37.0,13.87 36.5,13.76 36.0,13.26 35.5,13.11 35.0,13.38 34.5,13.79 34.0,13.04 33.5,13.99 33.0,13.85 32.5,13.02 32.0,13.25 31.5,13.55 31.0,13.82 30.5,13.17 30.0,13.70 29.5,7.42 29.0,7.42 28.5,7.42 28.0,7.42 27.5,7.42 27.0,7.42 26.5,7.42 26.0,7.42 25.5,7.42 25.0,7.42 24.5,7.42 24.0,7.42 23.5,7.42 23.0,7.42 22.5,7.42 22.0,7.42 21.5,7.42 21.0,7.42 20.5,7.42 20.0,7.42 19.5,7.42 19.0,7.42 18.5,7.42 18.0,7.42 17.5,7.42 17.0,7.42 16.5,7.42 16.0,13.36 15.5,13.92 15.0,13.70 14.5,13.87 14.0,13.70 13.5,13.45 13.0,13.86 12.5,12.98 12.0,13.27 11.5,13.57 11.0,13.75 10.5,13.02 10.0,13.65 9.5,13.73 9.0,13.50 8.5,13.86 8.0,13.62 7.5,13.11 7.0,13.62 6.5,13.45 6.0,13.83 5.5,13.44 5.0,14.00 4.5,13.20 4.0,13.22 3.5,13.83 3.0,12.96 2.5,13.02 2.0,13.61 1.5,13.58 1.0,13.34 0.5,13.52 0.0,13.20"/></g></svg>
<div class="a" style="left:209.5px;top:242.54999999999998px;width:253.26px;height:31.45px;background:linear-gradient(#90aad0,#809cc4 35%,#7090b8);border:1px solid #18202c;border-radius:2.5px;box-shadow:inset 1px 1px 0 rgba(255,255,255,.25);"></div>
<div class="t" style="left:212.3px;top:244.15px;font-size:6px;color:#2e3c54;transform:scaleX(.88);transform-origin:0 0">shabwey_Drum_loop_1_f_sharp_140 <span style="font-size:5px">&#9901;</span></div>
<svg class="a" style="left:210.5px;top:252.34999999999997px;" width="251.26" height="20" viewBox="0 0 251.26 20"><g fill="#323f54"><polygon points="0.0,9.18 0.5,9.17 1.0,9.12 1.5,8.48 2.0,1.98 2.5,3.30 3.0,4.69 3.5,4.74 4.0,5.77 4.5,6.95 5.0,7.23 5.5,7.60 6.0,8.33 6.5,8.43 7.0,8.84 7.5,9.06 8.0,9.08 8.5,9.33 9.0,9.41 9.5,9.49 10.0,9.56 10.5,9.56 11.0,9.14 11.5,9.60 12.0,9.07 12.5,9.09 13.0,9.13 13.5,9.58 14.0,9.16 14.5,9.57 15.0,9.05 15.5,9.09 16.0,9.59 16.5,9.15 17.0,4.92 17.5,6.07 18.0,6.66 18.5,7.10 19.0,7.47 19.5,7.91 20.0,8.51 20.5,8.63 21.0,8.83 21.5,9.06 22.0,9.16 22.5,9.17 23.0,9.01 23.5,9.20 24.0,9.17 24.5,9.56 25.0,9.18 25.5,9.56 26.0,9.19 26.5,9.17 27.0,9.59 27.5,9.10 28.0,9.00 28.5,9.09 29.0,9.56 29.5,9.55 30.0,9.12 30.5,9.12 31.0,9.02 31.5,9.55 32.0,9.15 32.5,9.16 33.0,9.03 33.5,9.19 34.0,9.54 34.5,9.56 35.0,9.53 35.5,9.53 36.0,9.18 36.5,9.03 37.0,9.51 37.5,9.07 38.0,9.54 38.5,9.55 39.0,9.53 39.5,9.02 40.0,9.59 40.5,9.50 41.0,9.60 41.5,9.59 42.0,9.53 42.5,9.17 43.0,9.54 43.5,9.51 44.0,9.20 44.5,8.66 45.0,1.77 45.5,2.11 46.0,3.80 46.5,5.28 47.0,5.99 47.5,6.35 48.0,7.14 48.5,7.90 49.0,8.07 49.5,8.37 50.0,8.72 50.5,8.91 51.0,9.03 51.5,9.33 52.0,9.41 52.5,4.25 53.0,2.00 53.5,3.98 54.0,4.39 54.5,5.48 55.0,5.99 55.5,7.23 56.0,7.64 56.5,7.76 57.0,8.16 57.5,8.46 58.0,8.92 58.5,9.07 59.0,9.13 59.5,9.41 60.0,9.09 60.5,9.06 61.0,9.18 61.5,9.03 62.0,9.05 62.5,9.54 63.0,9.54 63.5,9.02 64.0,7.05 64.5,1.57 65.0,3.41 65.5,5.12 66.0,5.76 66.5,6.68 67.0,7.26 67.5,7.72 68.0,8.03 68.5,8.38 69.0,8.74 69.5,8.75 70.0,9.03 70.5,9.14 71.0,9.20 71.5,9.43 72.0,9.52 72.5,9.58 73.0,9.55 73.5,9.51 74.0,9.50 74.5,9.07 75.0,9.53 75.5,9.52 76.0,9.01 76.5,3.87 77.0,1.62 77.5,3.78 78.0,4.39 78.5,5.10 79.0,6.37 79.5,7.08 80.0,7.74 80.5,5.46 81.0,5.25 81.5,5.80 82.0,7.09 82.5,7.13 83.0,7.65 83.5,8.30 84.0,8.62 84.5,8.68 85.0,8.94 85.5,9.15 86.0,9.01 86.5,9.04 87.0,9.53 87.5,9.57 88.0,9.58 88.5,9.19 89.0,9.18 89.5,9.00 90.0,9.02 90.5,9.53 91.0,9.50 91.5,9.53 92.0,9.53 92.5,9.54 93.0,9.58 93.5,9.55 94.0,9.17 94.5,9.57 95.0,9.06 95.5,8.56 96.0,1.15 96.5,1.95 97.0,3.25 97.5,5.33 98.0,5.53 98.5,6.52 99.0,7.02 99.5,7.49 100.0,7.98 100.5,8.25 101.0,8.58 101.5,8.89 102.0,9.08 102.5,9.29 103.0,9.34 103.5,9.55 104.0,9.57 104.5,9.53 105.0,9.02 105.5,9.57 106.0,9.51 106.5,9.51 107.0,9.53 107.5,8.49 108.0,1.29 108.5,2.22 109.0,3.81 109.5,5.23 110.0,6.23 110.5,6.25 111.0,7.40 111.5,7.49 112.0,5.20 112.5,5.42 113.0,6.72 113.5,7.28 114.0,7.70 114.5,7.76 115.0,8.18 115.5,8.63 116.0,8.96 116.5,8.94 117.0,9.15 117.5,9.06 118.0,9.44 118.5,9.17 119.0,9.02 119.5,9.57 120.0,9.56 120.5,9.52 121.0,9.08 121.5,9.10 122.0,9.15 122.5,9.02 123.0,9.05 123.5,9.00 124.0,9.18 124.5,9.01 125.0,9.51 125.5,9.18 126.0,9.11 126.5,9.58 127.0,9.03 127.5,8.67 128.0,2.69 128.5,3.52 129.0,4.72 129.5,5.76 130.0,6.47 130.5,7.43 131.0,7.82 131.5,7.93 132.0,8.50 132.5,8.82 133.0,8.84 133.5,9.10 134.0,9.35 134.5,9.38 135.0,9.48 135.5,9.16 136.0,9.10 136.5,9.55 137.0,9.05 137.5,9.52 138.0,9.17 138.5,9.15 139.0,9.58 139.5,9.57 140.0,9.06 140.5,9.58 141.0,9.00 141.5,9.19 142.0,9.03 142.5,9.51 143.0,9.19 143.5,4.97 144.0,4.10 144.5,4.75 145.0,5.68 145.5,6.77 146.0,6.87 146.5,7.76 147.0,7.95 147.5,8.34 148.0,8.61 148.5,8.83 149.0,9.04 149.5,9.31 150.0,9.04 150.5,9.19 151.0,9.14 151.5,9.14 152.0,9.58 152.5,9.06 153.0,9.50 153.5,9.57 154.0,9.09 154.5,9.56 155.0,9.58 155.5,9.18 156.0,9.54 156.5,9.59 157.0,9.54 157.5,9.04 158.0,9.59 158.5,9.52 159.0,9.55 159.5,9.19 160.0,9.03 160.5,9.11 161.0,9.06 161.5,9.51 162.0,9.12 162.5,9.09 163.0,9.52 163.5,9.11 164.0,9.12 164.5,9.57 165.0,9.50 165.5,9.58 166.0,9.51 166.5,9.60 167.0,9.14 167.5,9.56 168.0,9.07 168.5,9.54 169.0,9.55 169.5,9.59 170.0,9.17 170.5,9.05 171.0,9.13 171.5,3.88 172.0,1.73 172.5,2.71 173.0,4.22 173.5,5.57 174.0,6.40 174.5,6.92 175.0,7.61 175.5,8.07 176.0,8.22 176.5,8.55 177.0,2.45 177.5,3.04 178.0,3.93 178.5,5.62 179.0,6.40 179.5,7.03 180.0,7.45 180.5,7.95 181.0,8.33 181.5,8.47 182.0,8.73 182.5,9.11 183.0,9.28 183.5,9.03 184.0,9.07 184.5,9.58 185.0,9.01 185.5,9.15 186.0,9.05 186.5,9.18 187.0,9.59 187.5,9.20 188.0,9.56 188.5,9.54 189.0,9.57 189.5,9.06 190.0,9.13 190.5,8.63 191.0,1.11 191.5,2.97 192.0,4.99 192.5,5.74 193.0,6.43 193.5,6.93 194.0,7.30 194.5,7.98 195.0,8.11 195.5,8.43 196.0,8.71 196.5,8.92 197.0,9.16 197.5,9.06 198.0,9.44 198.5,9.50 199.0,9.13 199.5,9.02 200.0,9.53 200.5,9.16 201.0,9.02 201.5,9.12 202.0,9.03 202.5,9.03 203.0,9.06 203.5,8.66 204.0,2.30 204.5,3.53 205.0,4.22 205.5,5.29 206.0,6.02 206.5,6.58 207.0,7.31 207.5,7.89 208.0,8.15 208.5,8.49 209.0,8.88 209.5,9.09 210.0,9.25 210.5,9.01 211.0,9.48 211.5,9.04 212.0,9.58 212.5,9.52 213.0,9.57 213.5,9.19 214.0,9.06 214.5,9.58 215.0,9.59 215.5,9.58 216.0,9.16 216.5,9.58 217.0,9.10 217.5,9.09 218.0,9.53 218.5,9.57 219.0,9.59 219.5,9.18 220.0,9.57 220.5,9.51 221.0,9.16 221.5,9.10 222.0,9.19 222.5,9.54 223.0,8.71 223.5,2.28 224.0,4.15 224.5,4.64 225.0,6.28 225.5,6.70 226.0,7.23 226.5,7.80 227.0,8.23 227.5,8.53 228.0,8.75 228.5,8.86 229.0,9.01 229.5,9.34 230.0,9.35 230.5,9.49 231.0,9.09 231.5,9.54 232.0,9.02 232.5,9.59 233.0,9.18 233.5,9.18 234.0,9.57 234.5,3.64 235.0,1.43 235.5,3.72 236.0,5.14 236.5,5.40 237.0,6.29 237.5,7.04 238.0,7.64 238.5,7.70 239.0,8.18 239.5,8.73 240.0,8.77 240.5,9.03 241.0,9.17 241.5,4.58 242.0,2.86 242.5,3.50 243.0,4.81 243.5,5.96 244.0,6.94 244.5,7.09 245.0,7.51 245.5,8.13 246.0,8.59 246.5,8.71 247.0,8.92 247.5,9.10 248.0,9.12 248.5,9.14 249.0,9.52 249.5,8.81 250.0,3.12 250.5,4.14 251.0,5.60 251.0,14.40 250.5,15.86 250.0,16.88 249.5,11.19 249.0,10.48 248.5,10.86 248.0,10.88 247.5,10.90 247.0,11.08 246.5,11.29 246.0,11.41 245.5,11.87 245.0,12.49 244.5,12.91 244.0,13.06 243.5,14.04 243.0,15.19 242.5,16.50 242.0,17.14 241.5,15.42 241.0,10.83 240.5,10.97 240.0,11.23 239.5,11.27 239.0,11.82 238.5,12.30 238.0,12.36 237.5,12.96 237.0,13.71 236.5,14.60 236.0,14.86 235.5,16.28 235.0,18.57 234.5,16.36 234.0,10.43 233.5,10.82 233.0,10.82 232.5,10.41 232.0,10.98 231.5,10.46 231.0,10.91 230.5,10.51 230.0,10.65 229.5,10.66 229.0,10.99 228.5,11.14 228.0,11.25 227.5,11.47 227.0,11.77 226.5,12.20 226.0,12.77 225.5,13.30 225.0,13.72 224.5,15.36 224.0,15.85 223.5,17.72 223.0,11.29 222.5,10.46 222.0,10.81 221.5,10.90 221.0,10.84 220.5,10.49 220.0,10.43 219.5,10.82 219.0,10.41 218.5,10.43 218.0,10.47 217.5,10.91 217.0,10.90 216.5,10.42 216.0,10.84 215.5,10.42 215.0,10.41 214.5,10.42 214.0,10.94 213.5,10.81 213.0,10.43 212.5,10.48 212.0,10.42 211.5,10.96 211.0,10.52 210.5,10.99 210.0,10.75 209.5,10.91 209.0,11.12 208.5,11.51 208.0,11.85 207.5,12.11 207.0,12.69 206.5,13.42 206.0,13.98 205.5,14.71 205.0,15.78 204.5,16.47 204.0,17.70 203.5,11.34 203.0,10.94 202.5,10.97 202.0,10.97 201.5,10.88 201.0,10.98 200.5,10.84 200.0,10.47 199.5,10.98 199.0,10.87 198.5,10.50 198.0,10.56 197.5,10.94 197.0,10.84 196.5,11.08 196.0,11.29 195.5,11.57 195.0,11.89 194.5,12.02 194.0,12.70 193.5,13.07 193.0,13.57 192.5,14.26 192.0,15.01 191.5,17.03 191.0,18.89 190.5,11.37 190.0,10.87 189.5,10.94 189.0,10.43 188.5,10.46 188.0,10.44 187.5,10.80 187.0,10.41 186.5,10.82 186.0,10.95 185.5,10.85 185.0,10.99 184.5,10.42 184.0,10.93 183.5,10.97 183.0,10.72 182.5,10.89 182.0,11.27 181.5,11.53 181.0,11.67 180.5,12.05 180.0,12.55 179.5,12.97 179.0,13.60 178.5,14.38 178.0,16.07 177.5,16.96 177.0,17.55 176.5,11.45 176.0,11.78 175.5,11.93 175.0,12.39 174.5,13.08 174.0,13.60 173.5,14.43 173.0,15.78 172.5,17.29 172.0,18.27 171.5,16.12 171.0,10.87 170.5,10.95 170.0,10.83 169.5,10.41 169.0,10.45 168.5,10.46 168.0,10.93 167.5,10.44 167.0,10.86 166.5,10.40 166.0,10.49 165.5,10.42 165.0,10.50 164.5,10.43 164.0,10.88 163.5,10.89 163.0,10.48 162.5,10.91 162.0,10.88 161.5,10.49 161.0,10.94 160.5,10.89 160.0,10.97 159.5,10.81 159.0,10.45 158.5,10.48 158.0,10.41 157.5,10.96 157.0,10.46 156.5,10.41 156.0,10.46 155.5,10.82 155.0,10.42 154.5,10.44 154.0,10.91 153.5,10.43 153.0,10.50 152.5,10.94 152.0,10.42 151.5,10.86 151.0,10.86 150.5,10.81 150.0,10.96 149.5,10.69 149.0,10.96 148.5,11.17 148.0,11.39 147.5,11.66 147.0,12.05 146.5,12.24 146.0,13.13 145.5,13.23 145.0,14.32 144.5,15.25 144.0,15.90 143.5,15.03 143.0,10.81 142.5,10.49 142.0,10.97 141.5,10.81 141.0,11.00 140.5,10.42 140.0,10.94 139.5,10.43 139.0,10.42 138.5,10.85 138.0,10.83 137.5,10.48 137.0,10.95 136.5,10.45 136.0,10.90 135.5,10.84 135.0,10.52 134.5,10.62 134.0,10.65 133.5,10.90 133.0,11.16 132.5,11.18 132.0,11.50 131.5,12.07 131.0,12.18 130.5,12.57 130.0,13.53 129.5,14.24 129.0,15.28 128.5,16.48 128.0,17.31 127.5,11.33 127.0,10.97 126.5,10.42 126.0,10.89 125.5,10.82 125.0,10.49 124.5,10.99 124.0,10.82 123.5,11.00 123.0,10.95 122.5,10.98 122.0,10.85 121.5,10.90 121.0,10.92 120.5,10.48 120.0,10.44 119.5,10.43 119.0,10.98 118.5,10.83 118.0,10.56 117.5,10.94 117.0,10.85 116.5,11.06 116.0,11.04 115.5,11.37 115.0,11.82 114.5,12.24 114.0,12.30 113.5,12.72 113.0,13.28 112.5,14.58 112.0,14.80 111.5,12.51 111.0,12.60 110.5,13.75 110.0,13.77 109.5,14.77 109.0,16.19 108.5,17.78 108.0,18.71 107.5,11.51 107.0,10.47 106.5,10.49 106.0,10.49 105.5,10.43 105.0,10.98 104.5,10.47 104.0,10.43 103.5,10.45 103.0,10.66 102.5,10.71 102.0,10.92 101.5,11.11 101.0,11.42 100.5,11.75 100.0,12.02 99.5,12.51 99.0,12.98 98.5,13.48 98.0,14.47 97.5,14.67 97.0,16.75 96.5,18.05 96.0,18.85 95.5,11.44 95.0,10.94 94.5,10.43 94.0,10.83 93.5,10.45 93.0,10.42 92.5,10.46 92.0,10.47 91.5,10.47 91.0,10.50 90.5,10.47 90.0,10.98 89.5,11.00 89.0,10.82 88.5,10.81 88.0,10.42 87.5,10.43 87.0,10.47 86.5,10.96 86.0,10.99 85.5,10.85 85.0,11.06 84.5,11.32 84.0,11.38 83.5,11.70 83.0,12.35 82.5,12.87 82.0,12.91 81.5,14.20 81.0,14.75 80.5,14.54 80.0,12.26 79.5,12.92 79.0,13.63 78.5,14.90 78.0,15.61 77.5,16.22 77.0,18.38 76.5,16.13 76.0,10.99 75.5,10.48 75.0,10.47 74.5,10.93 74.0,10.50 73.5,10.49 73.0,10.45 72.5,10.42 72.0,10.48 71.5,10.57 71.0,10.80 70.5,10.86 70.0,10.97 69.5,11.25 69.0,11.26 68.5,11.62 68.0,11.97 67.5,12.28 67.0,12.74 66.5,13.32 66.0,14.24 65.5,14.88 65.0,16.59 64.5,18.43 64.0,12.95 63.5,10.98 63.0,10.46 62.5,10.46 62.0,10.95 61.5,10.97 61.0,10.82 60.5,10.94 60.0,10.91 59.5,10.59 59.0,10.87 58.5,10.93 58.0,11.08 57.5,11.54 57.0,11.84 56.5,12.24 56.0,12.36 55.5,12.77 55.0,14.01 54.5,14.52 54.0,15.61 53.5,16.02 53.0,18.00 52.5,15.75 52.0,10.59 51.5,10.67 51.0,10.97 50.5,11.09 50.0,11.28 49.5,11.63 49.0,11.93 48.5,12.10 48.0,12.86 47.5,13.65 47.0,14.01 46.5,14.72 46.0,16.20 45.5,17.89 45.0,18.23 44.5,11.34 44.0,10.80 43.5,10.49 43.0,10.46 42.5,10.83 42.0,10.47 41.5,10.41 41.0,10.40 40.5,10.50 40.0,10.41 39.5,10.98 39.0,10.47 38.5,10.45 38.0,10.46 37.5,10.93 37.0,10.49 36.5,10.97 36.0,10.82 35.5,10.47 35.0,10.47 34.5,10.44 34.0,10.46 33.5,10.81 33.0,10.97 32.5,10.84 32.0,10.85 31.5,10.45 31.0,10.98 30.5,10.88 30.0,10.88 29.5,10.45 29.0,10.44 28.5,10.91 28.0,11.00 27.5,10.90 27.0,10.41 26.5,10.83 26.0,10.81 25.5,10.44 25.0,10.82 24.5,10.44 24.0,10.83 23.5,10.80 23.0,10.99 22.5,10.83 22.0,10.84 21.5,10.94 21.0,11.17 20.5,11.37 20.0,11.49 19.5,12.09 19.0,12.53 18.5,12.90 18.0,13.34 17.5,13.93 17.0,15.08 16.5,10.85 16.0,10.41 15.5,10.91 15.0,10.95 14.5,10.43 14.0,10.84 13.5,10.42 13.0,10.87 12.5,10.91 12.0,10.93 11.5,10.40 11.0,10.86 10.5,10.44 10.0,10.44 9.5,10.51 9.0,10.59 8.5,10.67 8.0,10.92 7.5,10.94 7.0,11.16 6.5,11.57 6.0,11.67 5.5,12.40 5.0,12.77 4.5,13.05 4.0,14.23 3.5,15.26 3.0,15.31 2.5,16.70 2.0,18.02 1.5,11.52 1.0,10.88 0.5,10.83 0.0,10.82"/></g></svg>
<div class="a" style="left:463.26px;top:242.54999999999998px;width:253.26px;height:31.45px;background:linear-gradient(#82be8a,#6aa872 35%,#60a068);border:1px solid #1e3422;border-radius:2.5px;box-shadow:inset 1px 1px 0 rgba(255,255,255,.25);"></div>
<div class="t" style="left:466.06px;top:244.15px;font-size:6px;color:#1e3a22;transform:scaleX(.88);transform-origin:0 0">shabwey_Drum_loop_1_f_sharp_140.1 <span style="font-size:5px">&#9901;</span></div>
<svg class="a" style="left:464.26px;top:252.34999999999997px;" width="251.26" height="20" viewBox="0 0 251.26 20"><g fill="#345a3a"><polygon points="0.0,9.53 0.5,9.51 1.0,9.51 1.5,8.59 2.0,1.17 2.5,3.55 3.0,4.51 3.5,5.12 4.0,6.29 4.5,6.43 5.0,7.51 5.5,7.95 6.0,8.32 6.5,8.36 7.0,8.83 7.5,8.88 8.0,9.01 8.5,9.27 9.0,9.01 9.5,9.47 10.0,9.57 10.5,9.17 11.0,9.19 11.5,9.08 12.0,9.06 12.5,9.14 13.0,9.55 13.5,9.10 14.0,9.59 14.5,9.60 15.0,9.52 15.5,9.04 16.0,9.08 16.5,9.19 17.0,4.55 17.5,5.68 18.0,6.30 18.5,7.31 19.0,7.57 19.5,8.00 20.0,8.31 20.5,8.58 21.0,8.97 21.5,9.04 22.0,9.02 22.5,9.43 23.0,9.16 23.5,9.17 24.0,9.50 24.5,9.19 25.0,9.55 25.5,9.15 26.0,9.52 26.5,9.12 27.0,9.02 27.5,9.10 28.0,9.59 28.5,9.51 29.0,9.52 29.5,9.11 30.0,9.03 30.5,9.11 31.0,9.51 31.5,9.55 32.0,9.05 32.5,9.14 33.0,9.17 33.5,9.00 34.0,9.54 34.5,9.13 35.0,9.15 35.5,9.51 36.0,9.04 36.5,9.53 37.0,9.52 37.5,9.06 38.0,9.10 38.5,9.53 39.0,9.01 39.5,9.54 40.0,9.09 40.5,9.07 41.0,9.04 41.5,9.52 42.0,9.07 42.5,9.52 43.0,9.03 43.5,9.53 44.0,9.50 44.5,8.49 45.0,0.33 45.5,2.61 46.0,3.57 46.5,5.31 47.0,5.75 47.5,6.62 48.0,6.99 48.5,7.54 49.0,8.21 49.5,8.35 50.0,8.63 50.5,9.03 51.0,9.15 51.5,9.17 52.0,9.16 52.5,4.62 53.0,2.19 53.5,3.25 54.0,4.05 54.5,5.59 55.0,6.36 55.5,6.71 56.0,7.73 56.5,8.10 57.0,8.34 57.5,8.43 58.0,8.85 58.5,9.00 59.0,9.17 59.5,9.33 60.0,9.40 60.5,9.56 61.0,9.60 61.5,9.09 62.0,9.59 62.5,9.51 63.0,9.11 63.5,9.14 64.0,7.37 64.5,1.49 65.0,3.91 65.5,4.70 66.0,5.80 66.5,6.39 67.0,7.04 67.5,7.48 68.0,8.06 68.5,8.20 69.0,8.61 69.5,8.75 70.0,9.11 70.5,9.17 71.0,9.39 71.5,9.48 72.0,9.54 72.5,9.59 73.0,9.57 73.5,9.57 74.0,9.09 74.5,9.13 75.0,9.54 75.5,9.15 76.0,9.02 76.5,3.94 77.0,1.48 77.5,3.27 78.0,4.38 78.5,5.08 79.0,6.37 79.5,7.14 80.0,7.29 80.5,5.16 81.0,5.44 81.5,5.94 82.0,7.10 82.5,7.37 83.0,7.94 83.5,8.20 84.0,8.68 84.5,8.71 85.0,8.97 85.5,9.06 86.0,9.25 86.5,9.50 87.0,9.57 87.5,9.50 88.0,9.59 88.5,9.02 89.0,9.08 89.5,9.17 90.0,9.60 90.5,9.12 91.0,9.19 91.5,9.53 92.0,9.59 92.5,9.14 93.0,9.55 93.5,9.56 94.0,9.06 94.5,9.07 95.0,9.51 95.5,8.46 96.0,0.90 96.5,2.16 97.0,4.37 97.5,5.09 98.0,6.13 98.5,6.44 99.0,7.06 99.5,7.85 100.0,8.18 100.5,8.41 101.0,8.60 101.5,8.86 102.0,9.17 102.5,9.23 103.0,9.18 103.5,9.48 104.0,9.59 104.5,9.56 105.0,9.13 105.5,9.57 106.0,9.17 106.5,9.54 107.0,9.56 107.5,8.49 108.0,0.85 108.5,2.75 109.0,4.51 109.5,5.46 110.0,5.85 110.5,6.94 111.0,6.92 111.5,7.69 112.0,5.08 112.5,5.88 113.0,6.42 113.5,7.20 114.0,7.62 114.5,8.03 115.0,8.30 115.5,8.46 116.0,8.73 116.5,9.01 117.0,9.01 117.5,9.07 118.0,9.07 118.5,9.58 119.0,9.20 119.5,9.18 120.0,9.01 120.5,9.14 121.0,9.14 121.5,9.53 122.0,9.15 122.5,9.51 123.0,9.56 123.5,9.60 124.0,9.04 124.5,9.19 125.0,9.50 125.5,9.56 126.0,9.19 126.5,9.55 127.0,9.59 127.5,8.92 128.0,3.50 128.5,4.18 129.0,5.59 129.5,5.53 130.0,6.66 130.5,7.23 131.0,7.82 131.5,8.11 132.0,8.42 132.5,8.81 133.0,8.94 133.5,9.09 134.0,9.07 134.5,9.35 135.0,9.11 135.5,9.58 136.0,9.14 136.5,9.05 137.0,9.57 137.5,9.18 138.0,9.18 138.5,9.08 139.0,9.19 139.5,9.60 140.0,9.14 140.5,9.18 141.0,9.14 141.5,9.54 142.0,9.53 142.5,9.54 143.0,9.04 143.5,4.71 144.0,3.30 144.5,4.34 145.0,5.99 145.5,6.66 146.0,6.91 146.5,7.79 147.0,7.95 147.5,8.50 148.0,8.67 148.5,8.75 149.0,9.12 149.5,9.13 150.0,9.20 150.5,9.44 151.0,9.59 151.5,9.58 152.0,9.56 152.5,9.52 153.0,9.14 153.5,9.55 154.0,9.11 154.5,9.51 155.0,9.50 155.5,9.59 156.0,9.56 156.5,9.00 157.0,9.08 157.5,9.02 158.0,9.16 158.5,9.16 159.0,9.56 159.5,9.58 160.0,9.15 160.5,9.52 161.0,9.54 161.5,9.17 162.0,9.55 162.5,9.17 163.0,9.06 163.5,9.58 164.0,9.57 164.5,9.51 165.0,9.52 165.5,9.20 166.0,9.54 166.5,9.12 167.0,9.19 167.5,9.12 168.0,9.06 168.5,9.00 169.0,9.51 169.5,9.53 170.0,9.52 170.5,9.08 171.0,9.55 171.5,4.56 172.0,2.24 172.5,3.00 173.0,4.78 173.5,5.72 174.0,6.64 174.5,6.82 175.0,7.25 175.5,7.76 176.0,8.24 176.5,8.57 177.0,2.37 177.5,3.25 178.0,5.10 178.5,5.78 179.0,5.91 179.5,6.83 180.0,7.67 180.5,7.87 181.0,8.31 181.5,8.66 182.0,8.88 182.5,8.94 183.0,9.07 183.5,9.38 184.0,9.09 184.5,9.51 185.0,9.56 185.5,9.09 186.0,9.57 186.5,9.08 187.0,9.58 187.5,9.18 188.0,9.54 188.5,9.16 189.0,9.54 189.5,9.53 190.0,9.10 190.5,8.51 191.0,1.27 191.5,2.68 192.0,4.25 192.5,5.47 193.0,6.50 193.5,7.18 194.0,7.38 194.5,7.77 195.0,8.14 195.5,8.50 196.0,8.70 196.5,8.92 197.0,9.18 197.5,9.16 198.0,9.11 198.5,9.52 199.0,9.12 199.5,9.56 200.0,9.08 200.5,9.06 201.0,9.01 201.5,9.59 202.0,9.53 202.5,9.18 203.0,9.13 203.5,8.52 204.0,2.28 204.5,3.02 205.0,4.39 205.5,5.62 206.0,6.23 206.5,6.96 207.0,7.35 207.5,8.00 208.0,8.27 208.5,8.55 209.0,8.70 209.5,9.05 210.0,9.28 210.5,9.36 211.0,9.15 211.5,9.12 212.0,9.59 212.5,9.01 213.0,9.11 213.5,9.14 214.0,9.53 214.5,9.59 215.0,9.04 215.5,9.08 216.0,9.54 216.5,9.60 217.0,9.05 217.5,9.03 218.0,9.51 218.5,9.00 219.0,9.51 219.5,9.04 220.0,9.01 220.5,9.58 221.0,9.15 221.5,9.14 222.0,9.59 222.5,9.11 223.0,8.83 223.5,2.18 224.0,4.70 224.5,4.60 225.0,6.28 225.5,6.35 226.0,7.53 226.5,7.76 227.0,8.02 227.5,8.36 228.0,8.72 228.5,8.90 229.0,9.18 229.5,9.30 230.0,9.10 230.5,9.46 231.0,9.09 231.5,9.09 232.0,9.59 232.5,9.06 233.0,9.05 233.5,9.10 234.0,9.52 234.5,4.00 235.0,2.18 235.5,4.09 236.0,4.60 236.5,5.07 237.0,6.26 237.5,6.64 238.0,7.20 238.5,8.07 239.0,8.44 239.5,8.50 240.0,8.86 240.5,9.08 241.0,9.14 241.5,4.78 242.0,2.68 242.5,4.11 243.0,5.54 243.5,6.27 244.0,6.83 244.5,7.07 245.0,7.84 245.5,8.07 246.0,8.41 246.5,8.79 247.0,8.96 247.5,9.19 248.0,9.19 248.5,9.40 249.0,9.19 249.5,8.80 250.0,3.54 250.5,4.56 251.0,4.98 251.0,15.02 250.5,15.44 250.0,16.46 249.5,11.20 249.0,10.81 248.5,10.60 248.0,10.81 247.5,10.81 247.0,11.04 246.5,11.21 246.0,11.59 245.5,11.93 245.0,12.16 244.5,12.93 244.0,13.17 243.5,13.73 243.0,14.46 242.5,15.89 242.0,17.32 241.5,15.22 241.0,10.86 240.5,10.92 240.0,11.14 239.5,11.50 239.0,11.56 238.5,11.93 238.0,12.80 237.5,13.36 237.0,13.74 236.5,14.93 236.0,15.40 235.5,15.91 235.0,17.82 234.5,16.00 234.0,10.48 233.5,10.90 233.0,10.95 232.5,10.94 232.0,10.41 231.5,10.91 231.0,10.91 230.5,10.54 230.0,10.90 229.5,10.70 229.0,10.82 228.5,11.10 228.0,11.28 227.5,11.64 227.0,11.98 226.5,12.24 226.0,12.47 225.5,13.65 225.0,13.72 224.5,15.40 224.0,15.30 223.5,17.82 223.0,11.17 222.5,10.89 222.0,10.41 221.5,10.86 221.0,10.85 220.5,10.42 220.0,10.99 219.5,10.96 219.0,10.49 218.5,11.00 218.0,10.49 217.5,10.97 217.0,10.95 216.5,10.40 216.0,10.46 215.5,10.92 215.0,10.96 214.5,10.41 214.0,10.47 213.5,10.86 213.0,10.89 212.5,10.99 212.0,10.41 211.5,10.88 211.0,10.85 210.5,10.64 210.0,10.72 209.5,10.95 209.0,11.30 208.5,11.45 208.0,11.73 207.5,12.00 207.0,12.65 206.5,13.04 206.0,13.77 205.5,14.38 205.0,15.61 204.5,16.98 204.0,17.72 203.5,11.48 203.0,10.87 202.5,10.82 202.0,10.47 201.5,10.41 201.0,10.99 200.5,10.94 200.0,10.92 199.5,10.44 199.0,10.88 198.5,10.48 198.0,10.89 197.5,10.84 197.0,10.82 196.5,11.08 196.0,11.30 195.5,11.50 195.0,11.86 194.5,12.23 194.0,12.62 193.5,12.82 193.0,13.50 192.5,14.53 192.0,15.75 191.5,17.32 191.0,18.73 190.5,11.49 190.0,10.90 189.5,10.47 189.0,10.46 188.5,10.84 188.0,10.46 187.5,10.82 187.0,10.42 186.5,10.92 186.0,10.43 185.5,10.91 185.0,10.44 184.5,10.49 184.0,10.91 183.5,10.62 183.0,10.93 182.5,11.06 182.0,11.12 181.5,11.34 181.0,11.69 180.5,12.13 180.0,12.33 179.5,13.17 179.0,14.09 178.5,14.22 178.0,14.90 177.5,16.75 177.0,17.63 176.5,11.43 176.0,11.76 175.5,12.24 175.0,12.75 174.5,13.18 174.0,13.36 173.5,14.28 173.0,15.22 172.5,17.00 172.0,17.76 171.5,15.44 171.0,10.45 170.5,10.92 170.0,10.48 169.5,10.47 169.0,10.49 168.5,11.00 168.0,10.94 167.5,10.88 167.0,10.81 166.5,10.88 166.0,10.46 165.5,10.80 165.0,10.48 164.5,10.49 164.0,10.43 163.5,10.42 163.0,10.94 162.5,10.83 162.0,10.45 161.5,10.83 161.0,10.46 160.5,10.48 160.0,10.85 159.5,10.42 159.0,10.44 158.5,10.84 158.0,10.84 157.5,10.98 157.0,10.92 156.5,11.00 156.0,10.44 155.5,10.41 155.0,10.50 154.5,10.49 154.0,10.89 153.5,10.45 153.0,10.86 152.5,10.48 152.0,10.44 151.5,10.42 151.0,10.41 150.5,10.56 150.0,10.80 149.5,10.87 149.0,10.88 148.5,11.25 148.0,11.33 147.5,11.50 147.0,12.05 146.5,12.21 146.0,13.09 145.5,13.34 145.0,14.01 144.5,15.66 144.0,16.70 143.5,15.29 143.0,10.96 142.5,10.46 142.0,10.47 141.5,10.46 141.0,10.86 140.5,10.82 140.0,10.86 139.5,10.40 139.0,10.81 138.5,10.92 138.0,10.82 137.5,10.82 137.0,10.43 136.5,10.95 136.0,10.86 135.5,10.42 135.0,10.89 134.5,10.65 134.0,10.93 133.5,10.91 133.0,11.06 132.5,11.19 132.0,11.58 131.5,11.89 131.0,12.18 130.5,12.77 130.0,13.34 129.5,14.47 129.0,14.41 128.5,15.82 128.0,16.50 127.5,11.08 127.0,10.41 126.5,10.45 126.0,10.81 125.5,10.44 125.0,10.50 124.5,10.81 124.0,10.96 123.5,10.40 123.0,10.44 122.5,10.49 122.0,10.85 121.5,10.47 121.0,10.86 120.5,10.86 120.0,10.99 119.5,10.82 119.0,10.80 118.5,10.42 118.0,10.93 117.5,10.93 117.0,10.99 116.5,10.99 116.0,11.27 115.5,11.54 115.0,11.70 114.5,11.97 114.0,12.38 113.5,12.80 113.0,13.58 112.5,14.12 112.0,14.92 111.5,12.31 111.0,13.08 110.5,13.06 110.0,14.15 109.5,14.54 109.0,15.49 108.5,17.25 108.0,19.15 107.5,11.51 107.0,10.44 106.5,10.46 106.0,10.83 105.5,10.43 105.0,10.87 104.5,10.44 104.0,10.41 103.5,10.52 103.0,10.82 102.5,10.77 102.0,10.83 101.5,11.14 101.0,11.40 100.5,11.59 100.0,11.82 99.5,12.15 99.0,12.94 98.5,13.56 98.0,13.87 97.5,14.91 97.0,15.63 96.5,17.84 96.0,19.10 95.5,11.54 95.0,10.49 94.5,10.93 94.0,10.94 93.5,10.44 93.0,10.45 92.5,10.86 92.0,10.41 91.5,10.47 91.0,10.81 90.5,10.88 90.0,10.40 89.5,10.83 89.0,10.92 88.5,10.98 88.0,10.41 87.5,10.50 87.0,10.43 86.5,10.50 86.0,10.75 85.5,10.94 85.0,11.03 84.5,11.29 84.0,11.32 83.5,11.80 83.0,12.06 82.5,12.63 82.0,12.90 81.5,14.06 81.0,14.56 80.5,14.84 80.0,12.71 79.5,12.86 79.0,13.63 78.5,14.92 78.0,15.62 77.5,16.73 77.0,18.52 76.5,16.06 76.0,10.98 75.5,10.85 75.0,10.46 74.5,10.87 74.0,10.91 73.5,10.43 73.0,10.43 72.5,10.41 72.0,10.46 71.5,10.52 71.0,10.61 70.5,10.83 70.0,10.89 69.5,11.25 69.0,11.39 68.5,11.80 68.0,11.94 67.5,12.52 67.0,12.96 66.5,13.61 66.0,14.20 65.5,15.30 65.0,16.09 64.5,18.51 64.0,12.63 63.5,10.86 63.0,10.89 62.5,10.49 62.0,10.41 61.5,10.91 61.0,10.40 60.5,10.44 60.0,10.60 59.5,10.67 59.0,10.83 58.5,11.00 58.0,11.15 57.5,11.57 57.0,11.66 56.5,11.90 56.0,12.27 55.5,13.29 55.0,13.64 54.5,14.41 54.0,15.95 53.5,16.75 53.0,17.81 52.5,15.38 52.0,10.84 51.5,10.83 51.0,10.85 50.5,10.97 50.0,11.37 49.5,11.65 49.0,11.79 48.5,12.46 48.0,13.01 47.5,13.38 47.0,14.25 46.5,14.69 46.0,16.43 45.5,17.39 45.0,19.67 44.5,11.51 44.0,10.50 43.5,10.47 43.0,10.97 42.5,10.48 42.0,10.93 41.5,10.48 41.0,10.96 40.5,10.93 40.0,10.91 39.5,10.46 39.0,10.99 38.5,10.47 38.0,10.90 37.5,10.94 37.0,10.48 36.5,10.47 36.0,10.96 35.5,10.49 35.0,10.85 34.5,10.87 34.0,10.46 33.5,11.00 33.0,10.83 32.5,10.86 32.0,10.95 31.5,10.45 31.0,10.49 30.5,10.89 30.0,10.97 29.5,10.89 29.0,10.48 28.5,10.49 28.0,10.41 27.5,10.90 27.0,10.98 26.5,10.88 26.0,10.48 25.5,10.85 25.0,10.45 24.5,10.81 24.0,10.50 23.5,10.83 23.0,10.84 22.5,10.57 22.0,10.98 21.5,10.96 21.0,11.03 20.5,11.42 20.0,11.69 19.5,12.00 19.0,12.43 18.5,12.69 18.0,13.70 17.5,14.32 17.0,15.45 16.5,10.81 16.0,10.92 15.5,10.96 15.0,10.48 14.5,10.40 14.0,10.41 13.5,10.90 13.0,10.45 12.5,10.86 12.0,10.94 11.5,10.92 11.0,10.81 10.5,10.83 10.0,10.43 9.5,10.53 9.0,10.99 8.5,10.73 8.0,10.99 7.5,11.12 7.0,11.17 6.5,11.64 6.0,11.68 5.5,12.05 5.0,12.49 4.5,13.57 4.0,13.71 3.5,14.88 3.0,15.49 2.5,16.45 2.0,18.83 1.5,11.41 1.0,10.49 0.5,10.49 0.0,10.47"/></g></svg>
<div class="a" style="left:716.52px;top:242.54999999999998px;width:253.76px;height:31.45px;background:linear-gradient(#90aad0,#809cc4 35%,#7090b8);border:1px solid #18202c;border-radius:2.5px;box-shadow:inset 1px 1px 0 rgba(255,255,255,.25);"></div>
<div class="t" style="left:719.3199999999999px;top:244.15px;font-size:6px;color:#2e3c54;transform:scaleX(.88);transform-origin:0 0">shabwey_Drum_loop_1_f_sharp_140.2 <span style="font-size:5px">&#9901;</span></div>
<svg class="a" style="left:717.52px;top:252.34999999999997px;" width="251.76" height="20" viewBox="0 0 251.76 20"><g fill="#323f54"><polygon points="0.0,9.52 0.5,9.15 1.0,9.07 1.5,8.49 2.0,0.94 2.5,2.47 3.0,4.29 3.5,5.00 4.0,5.99 4.5,6.90 5.0,7.19 5.5,7.86 6.0,8.04 6.5,8.50 7.0,8.83 7.5,9.02 8.0,9.13 8.5,9.07 9.0,9.01 9.5,9.52 10.0,9.53 10.5,9.50 11.0,9.13 11.5,9.57 12.0,9.59 12.5,9.55 13.0,9.07 13.5,9.16 14.0,9.17 14.5,9.03 15.0,9.60 15.5,9.60 16.0,9.02 16.5,9.21 17.0,5.17 17.5,5.46 18.0,6.69 18.5,7.28 19.0,7.84 19.5,7.94 20.0,8.30 20.5,8.62 21.0,8.93 21.5,9.06 22.0,9.18 22.5,9.43 23.0,9.04 23.5,9.20 24.0,9.08 24.5,9.15 25.0,9.01 25.5,9.12 26.0,9.54 26.5,9.11 27.0,9.17 27.5,9.14 28.0,9.57 28.5,9.50 29.0,9.56 29.5,9.57 30.0,9.10 30.5,9.51 31.0,9.20 31.5,9.19 32.0,9.05 32.5,9.06 33.0,9.01 33.5,9.59 34.0,9.01 34.5,9.56 35.0,9.52 35.5,9.11 36.0,9.13 36.5,9.07 37.0,9.59 37.5,9.59 38.0,9.07 38.5,9.02 39.0,9.53 39.5,9.03 40.0,9.08 40.5,9.51 41.0,9.55 41.5,9.52 42.0,9.01 42.5,9.56 43.0,9.56 43.5,9.06 44.0,9.04 44.5,8.57 45.0,1.83 45.5,2.94 46.0,3.97 46.5,5.47 47.0,5.54 47.5,6.53 48.0,7.37 48.5,7.89 49.0,7.95 49.5,8.33 50.0,8.81 50.5,9.01 51.0,9.11 51.5,9.18 52.0,9.10 52.5,3.97 53.0,2.37 53.5,3.28 54.0,4.88 54.5,5.43 55.0,6.35 55.5,7.06 56.0,7.43 56.5,7.88 57.0,8.35 57.5,8.60 58.0,8.70 58.5,9.00 59.0,9.18 59.5,9.36 60.0,9.40 60.5,9.07 61.0,9.19 61.5,9.05 62.0,9.06 62.5,9.13 63.0,9.09 63.5,9.58 64.0,7.05 64.5,2.26 65.0,3.05 65.5,4.50 66.0,6.00 66.5,6.75 67.0,6.85 67.5,7.42 68.0,8.07 68.5,8.44 69.0,8.53 69.5,8.93 70.0,9.11 70.5,9.18 71.0,9.33 71.5,9.44 72.0,9.08 72.5,9.13 73.0,9.01 73.5,9.02 74.0,9.56 74.5,9.59 75.0,9.20 75.5,9.20 76.0,9.59 76.5,4.30 77.0,2.12 77.5,2.68 78.0,4.43 78.5,5.37 79.0,6.47 79.5,6.67 80.0,7.50 80.5,5.42 81.0,5.05 81.5,6.50 82.0,6.87 82.5,7.38 83.0,7.71 83.5,8.10 84.0,8.65 84.5,8.70 85.0,9.04 85.5,9.17 86.0,9.03 86.5,9.20 87.0,9.18 87.5,9.52 88.0,9.59 88.5,9.17 89.0,9.52 89.5,9.50 90.0,9.52 90.5,9.13 91.0,9.52 91.5,9.51 92.0,9.52 92.5,9.17 93.0,9.08 93.5,9.58 94.0,9.59 94.5,9.52 95.0,9.00 95.5,8.63 96.0,1.68 96.5,1.89 97.0,4.30 97.5,4.54 98.0,5.87 98.5,6.47 99.0,6.97 99.5,7.54 100.0,8.01 100.5,8.49 101.0,8.57 101.5,8.80 102.0,9.19 102.5,9.06 103.0,9.08 103.5,9.03 104.0,9.03 104.5,9.07 105.0,9.12 105.5,9.09 106.0,9.59 106.5,9.20 107.0,9.50 107.5,8.51 108.0,1.76 108.5,2.09 109.0,3.38 109.5,5.22 110.0,5.97 110.5,6.27 111.0,6.86 111.5,7.89 112.0,4.41 112.5,6.04 113.0,6.33 113.5,7.19 114.0,7.77 114.5,8.03 115.0,8.46 115.5,8.53 116.0,8.91 116.5,9.02 117.0,9.02 117.5,9.16 118.0,9.02 118.5,9.12 119.0,9.56 119.5,9.59 120.0,9.08 120.5,9.54 121.0,9.07 121.5,9.55 122.0,9.52 122.5,9.15 123.0,9.57 123.5,9.13 124.0,9.55 124.5,9.58 125.0,9.07 125.5,9.07 126.0,9.59 126.5,9.11 127.0,9.58 127.5,8.93 128.0,3.11 128.5,3.94 129.0,4.86 129.5,6.15 130.0,6.50 130.5,7.41 131.0,7.96 131.5,7.97 132.0,8.36 132.5,8.62 133.0,9.04 133.5,9.20 134.0,9.12 134.5,9.19 135.0,9.16 135.5,9.18 136.0,9.16 136.5,9.12 137.0,9.54 137.5,9.14 138.0,9.58 138.5,9.18 139.0,9.59 139.5,9.13 140.0,9.54 140.5,9.54 141.0,9.02 141.5,9.56 142.0,9.08 142.5,9.07 143.0,9.56 143.5,5.46 144.0,3.76 144.5,4.46 145.0,5.24 145.5,6.33 146.0,6.97 146.5,7.76 147.0,8.13 147.5,8.26 148.0,8.68 148.5,8.74 149.0,8.98 149.5,9.23 150.0,9.34 150.5,9.42 151.0,9.56 151.5,9.02 152.0,9.19 152.5,9.59 153.0,9.07 153.5,9.55 154.0,9.54 154.5,9.52 155.0,9.04 155.5,9.01 156.0,9.56 156.5,9.03 157.0,9.20 157.5,9.60 158.0,9.19 158.5,9.54 159.0,9.01 159.5,9.16 160.0,9.59 160.5,9.16 161.0,9.56 161.5,9.13 162.0,9.05 162.5,9.57 163.0,9.04 163.5,9.55 164.0,9.00 164.5,9.51 165.0,9.54 165.5,9.02 166.0,9.59 166.5,9.06 167.0,9.58 167.5,9.59 168.0,9.55 168.5,9.07 169.0,9.05 169.5,9.60 170.0,9.09 170.5,9.08 171.0,9.18 171.5,4.38 172.0,2.14 172.5,3.16 173.0,4.54 173.5,5.13 174.0,5.96 174.5,6.82 175.0,7.36 175.5,8.01 176.0,8.46 176.5,8.68 177.0,2.02 177.5,3.09 178.0,4.21 178.5,5.59 179.0,6.43 179.5,6.58 180.0,7.36 180.5,7.89 181.0,8.45 181.5,8.55 182.0,8.94 182.5,9.07 183.0,9.13 183.5,9.12 184.0,9.17 184.5,9.00 185.0,9.57 185.5,9.59 186.0,9.59 186.5,9.54 187.0,9.54 187.5,9.58 188.0,9.58 188.5,9.00 189.0,9.13 189.5,9.16 190.0,9.52 190.5,8.63 191.0,2.69 191.5,2.79 192.0,4.46 192.5,5.79 193.0,6.37 193.5,6.71 194.0,7.66 194.5,7.91 195.0,8.14 195.5,8.61 196.0,8.81 196.5,8.93 197.0,9.23 197.5,9.35 198.0,9.44 198.5,9.03 199.0,9.01 199.5,9.10 200.0,9.10 200.5,9.08 201.0,9.59 201.5,9.02 202.0,9.06 202.5,9.52 203.0,9.07 203.5,8.79 204.0,1.21 204.5,3.01 205.0,4.35 205.5,5.79 206.0,6.11 206.5,6.57 207.0,7.65 207.5,7.69 208.0,8.11 208.5,8.48 209.0,8.74 209.5,8.97 210.0,9.14 210.5,9.37 211.0,9.50 211.5,9.07 212.0,9.00 212.5,9.14 213.0,9.07 213.5,9.00 214.0,9.08 214.5,9.57 215.0,9.10 215.5,9.52 216.0,9.53 216.5,9.02 217.0,9.20 217.5,9.60 218.0,9.16 218.5,9.57 219.0,9.51 219.5,9.18 220.0,9.07 220.5,9.57 221.0,9.59 221.5,9.13 222.0,9.52 222.5,9.51 223.0,8.77 223.5,3.52 224.0,3.51 224.5,5.13 225.0,5.71 225.5,6.50 226.0,6.97 226.5,7.98 227.0,8.21 227.5,8.52 228.0,8.87 228.5,8.98 229.0,9.06 229.5,9.13 230.0,9.14 230.5,9.55 231.0,9.55 231.5,9.13 232.0,9.58 232.5,9.15 233.0,9.20 233.5,9.52 234.0,9.11 234.5,4.59 235.0,1.56 235.5,3.75 236.0,4.82 236.5,5.94 237.0,6.03 237.5,7.20 238.0,7.45 238.5,7.97 239.0,8.15 239.5,8.66 240.0,8.73 240.5,9.06 241.0,9.17 241.5,4.23 242.0,2.41 242.5,4.52 243.0,5.44 243.5,6.18 244.0,7.02 244.5,7.09 245.0,7.48 245.5,8.01 246.0,8.30 246.5,8.77 247.0,8.95 247.5,9.21 248.0,9.36 248.5,9.37 249.0,9.19 249.5,8.91 250.0,3.25 250.5,4.07 251.0,4.57 251.5,5.95 251.5,14.05 251.0,15.43 250.5,15.93 250.0,16.75 249.5,11.09 249.0,10.81 248.5,10.63 248.0,10.64 247.5,10.79 247.0,11.05 246.5,11.23 246.0,11.70 245.5,11.99 245.0,12.52 244.5,12.91 244.0,12.98 243.5,13.82 243.0,14.56 242.5,15.48 242.0,17.59 241.5,15.77 241.0,10.83 240.5,10.94 240.0,11.27 239.5,11.34 239.0,11.85 238.5,12.03 238.0,12.55 237.5,12.80 237.0,13.97 236.5,14.06 236.0,15.18 235.5,16.25 235.0,18.44 234.5,15.41 234.0,10.89 233.5,10.48 233.0,10.80 232.5,10.85 232.0,10.42 231.5,10.87 231.0,10.45 230.5,10.45 230.0,10.86 229.5,10.87 229.0,10.94 228.5,11.02 228.0,11.13 227.5,11.48 227.0,11.79 226.5,12.02 226.0,13.03 225.5,13.50 225.0,14.29 224.5,14.87 224.0,16.49 223.5,16.48 223.0,11.23 222.5,10.49 222.0,10.48 221.5,10.87 221.0,10.41 220.5,10.43 220.0,10.93 219.5,10.82 219.0,10.49 218.5,10.43 218.0,10.84 217.5,10.40 217.0,10.80 216.5,10.98 216.0,10.47 215.5,10.48 215.0,10.90 214.5,10.43 214.0,10.92 213.5,11.00 213.0,10.93 212.5,10.86 212.0,11.00 211.5,10.93 211.0,10.50 210.5,10.63 210.0,10.86 209.5,11.03 209.0,11.26 208.5,11.52 208.0,11.89 207.5,12.31 207.0,12.35 206.5,13.43 206.0,13.89 205.5,14.21 205.0,15.65 204.5,16.99 204.0,18.79 203.5,11.21 203.0,10.93 202.5,10.48 202.0,10.94 201.5,10.98 201.0,10.41 200.5,10.92 200.0,10.90 199.5,10.90 199.0,10.99 198.5,10.97 198.0,10.56 197.5,10.65 197.0,10.77 196.5,11.07 196.0,11.19 195.5,11.39 195.0,11.86 194.5,12.09 194.0,12.34 193.5,13.29 193.0,13.63 192.5,14.21 192.0,15.54 191.5,17.21 191.0,17.31 190.5,11.37 190.0,10.48 189.5,10.84 189.0,10.87 188.5,11.00 188.0,10.42 187.5,10.42 187.0,10.46 186.5,10.46 186.0,10.41 185.5,10.41 185.0,10.43 184.5,11.00 184.0,10.83 183.5,10.88 183.0,10.87 182.5,10.93 182.0,11.06 181.5,11.45 181.0,11.55 180.5,12.11 180.0,12.64 179.5,13.42 179.0,13.57 178.5,14.41 178.0,15.79 177.5,16.91 177.0,17.98 176.5,11.32 176.0,11.54 175.5,11.99 175.0,12.64 174.5,13.18 174.0,14.04 173.5,14.87 173.0,15.46 172.5,16.84 172.0,17.86 171.5,15.62 171.0,10.82 170.5,10.92 170.0,10.91 169.5,10.40 169.0,10.95 168.5,10.93 168.0,10.45 167.5,10.41 167.0,10.42 166.5,10.94 166.0,10.41 165.5,10.98 165.0,10.46 164.5,10.49 164.0,11.00 163.5,10.45 163.0,10.96 162.5,10.43 162.0,10.95 161.5,10.87 161.0,10.44 160.5,10.84 160.0,10.41 159.5,10.84 159.0,10.99 158.5,10.46 158.0,10.81 157.5,10.40 157.0,10.80 156.5,10.97 156.0,10.44 155.5,10.99 155.0,10.96 154.5,10.48 154.0,10.46 153.5,10.45 153.0,10.93 152.5,10.41 152.0,10.81 151.5,10.98 151.0,10.44 150.5,10.58 150.0,10.66 149.5,10.77 149.0,11.02 148.5,11.26 148.0,11.32 147.5,11.74 147.0,11.87 146.5,12.24 146.0,13.03 145.5,13.67 145.0,14.76 144.5,15.54 144.0,16.24 143.5,14.54 143.0,10.44 142.5,10.93 142.0,10.92 141.5,10.44 141.0,10.98 140.5,10.46 140.0,10.46 139.5,10.87 139.0,10.41 138.5,10.82 138.0,10.42 137.5,10.86 137.0,10.46 136.5,10.88 136.0,10.84 135.5,10.82 135.0,10.84 134.5,10.81 134.0,10.88 133.5,10.80 133.0,10.96 132.5,11.38 132.0,11.64 131.5,12.03 131.0,12.04 130.5,12.59 130.0,13.50 129.5,13.85 129.0,15.14 128.5,16.06 128.0,16.89 127.5,11.07 127.0,10.42 126.5,10.89 126.0,10.41 125.5,10.93 125.0,10.93 124.5,10.42 124.0,10.45 123.5,10.87 123.0,10.43 122.5,10.85 122.0,10.48 121.5,10.45 121.0,10.93 120.5,10.46 120.0,10.92 119.5,10.41 119.0,10.44 118.5,10.88 118.0,10.98 117.5,10.84 117.0,10.98 116.5,10.98 116.0,11.09 115.5,11.47 115.0,11.54 114.5,11.97 114.0,12.23 113.5,12.81 113.0,13.67 112.5,13.96 112.0,15.59 111.5,12.11 111.0,13.14 110.5,13.73 110.0,14.03 109.5,14.78 109.0,16.62 108.5,17.91 108.0,18.24 107.5,11.49 107.0,10.50 106.5,10.80 106.0,10.41 105.5,10.91 105.0,10.88 104.5,10.93 104.0,10.97 103.5,10.97 103.0,10.92 102.5,10.94 102.0,10.81 101.5,11.20 101.0,11.43 100.5,11.51 100.0,11.99 99.5,12.46 99.0,13.03 98.5,13.53 98.0,14.13 97.5,15.46 97.0,15.70 96.5,18.11 96.0,18.32 95.5,11.37 95.0,11.00 94.5,10.48 94.0,10.41 93.5,10.42 93.0,10.92 92.5,10.83 92.0,10.48 91.5,10.49 91.0,10.48 90.5,10.87 90.0,10.48 89.5,10.50 89.0,10.48 88.5,10.83 88.0,10.41 87.5,10.48 87.0,10.82 86.5,10.80 86.0,10.97 85.5,10.83 85.0,10.96 84.5,11.30 84.0,11.35 83.5,11.90 83.0,12.29 82.5,12.62 82.0,13.13 81.5,13.50 81.0,14.95 80.5,14.58 80.0,12.50 79.5,13.33 79.0,13.53 78.5,14.63 78.0,15.57 77.5,17.32 77.0,17.88 76.5,15.70 76.0,10.41 75.5,10.80 75.0,10.80 74.5,10.41 74.0,10.44 73.5,10.98 73.0,10.99 72.5,10.87 72.0,10.92 71.5,10.56 71.0,10.67 70.5,10.82 70.0,10.89 69.5,11.07 69.0,11.47 68.5,11.56 68.0,11.93 67.5,12.58 67.0,13.15 66.5,13.25 66.0,14.00 65.5,15.50 65.0,16.95 64.5,17.74 64.0,12.95 63.5,10.42 63.0,10.91 62.5,10.87 62.0,10.94 61.5,10.95 61.0,10.81 60.5,10.93 60.0,10.60 59.5,10.64 59.0,10.82 58.5,11.00 58.0,11.30 57.5,11.40 57.0,11.65 56.5,12.12 56.0,12.57 55.5,12.94 55.0,13.65 54.5,14.57 54.0,15.12 53.5,16.72 53.0,17.63 52.5,16.03 52.0,10.90 51.5,10.82 51.0,10.89 50.5,10.99 50.0,11.19 49.5,11.67 49.0,12.05 48.5,12.11 48.0,12.63 47.5,13.47 47.0,14.46 46.5,14.53 46.0,16.03 45.5,17.06 45.0,18.17 44.5,11.43 44.0,10.96 43.5,10.94 43.0,10.44 42.5,10.44 42.0,10.99 41.5,10.48 41.0,10.45 40.5,10.49 40.0,10.92 39.5,10.97 39.0,10.47 38.5,10.98 38.0,10.93 37.5,10.41 37.0,10.41 36.5,10.93 36.0,10.87 35.5,10.89 35.0,10.48 34.5,10.44 34.0,10.99 33.5,10.41 33.0,10.99 32.5,10.94 32.0,10.95 31.5,10.81 31.0,10.80 30.5,10.49 30.0,10.90 29.5,10.43 29.0,10.44 28.5,10.50 28.0,10.43 27.5,10.86 27.0,10.83 26.5,10.89 26.0,10.46 25.5,10.88 25.0,10.99 24.5,10.85 24.0,10.92 23.5,10.80 23.0,10.96 22.5,10.57 22.0,10.82 21.5,10.94 21.0,11.07 20.5,11.38 20.0,11.70 19.5,12.06 19.0,12.16 18.5,12.72 18.0,13.31 17.5,14.54 17.0,14.83 16.5,10.79 16.0,10.98 15.5,10.40 15.0,10.40 14.5,10.97 14.0,10.83 13.5,10.84 13.0,10.93 12.5,10.45 12.0,10.41 11.5,10.43 11.0,10.87 10.5,10.50 10.0,10.47 9.5,10.48 9.0,10.99 8.5,10.93 8.0,10.87 7.5,10.98 7.0,11.17 6.5,11.50 6.0,11.96 5.5,12.14 5.0,12.81 4.5,13.10 4.0,14.01 3.5,15.00 3.0,15.71 2.5,17.53 2.0,19.06 1.5,11.51 1.0,10.93 0.5,10.85 0.0,10.48"/></g></svg>
<div class="a" style="left:209.5px;top:273.8px;width:253.26px;height:31.45px;background:linear-gradient(#90aad0,#809cc4 35%,#7090b8);border:1px solid #18202c;border-radius:2.5px;box-shadow:inset 1px 1px 0 rgba(255,255,255,.25);"></div>
<div class="t" style="left:212.3px;top:275.40px;font-size:6px;color:#2e3c54;transform:scaleX(.88);transform-origin:0 0">shabwey_lead_f_sharp_140 <span style="font-size:5px">&#9901;</span></div>
<svg class="a" style="left:210.5px;top:286.6px;" width="251.26" height="11" viewBox="0 0 251.26 11"><g fill="#323f54"><polygon points="0.0,3.38 0.5,3.57 1.0,3.02 1.5,3.66 2.0,3.15 2.5,3.34 3.0,3.68 3.5,3.18 4.0,3.70 4.5,3.26 5.0,3.66 5.5,3.64 6.0,3.27 6.5,2.83 7.0,3.60 7.5,3.49 8.0,3.05 8.5,2.70 9.0,3.11 9.5,3.30 10.0,2.67 10.5,3.69 11.0,2.80 11.5,3.42 12.0,3.58 12.5,3.61 13.0,3.40 13.5,2.84 14.0,3.54 14.5,3.10 15.0,3.04 15.5,3.33 16.0,3.14 16.5,3.67 17.0,3.67 17.5,3.51 18.0,2.99 18.5,3.27 19.0,3.39 19.5,3.10 20.0,3.24 20.5,3.41 21.0,2.87 21.5,2.97 22.0,3.47 22.5,3.11 23.0,3.16 23.5,2.78 24.0,2.94 24.5,3.42 25.0,2.66 25.5,3.61 26.0,3.28 26.5,2.91 27.0,3.57 27.5,3.20 28.0,3.70 28.5,3.00 29.0,2.90 29.5,3.11 30.0,2.78 30.5,3.39 31.0,2.98 31.5,3.09 32.0,3.10 32.5,3.24 33.0,2.82 33.5,2.70 34.0,3.22 34.5,3.01 35.0,3.67 35.5,2.97 36.0,3.03 36.5,2.65 37.0,2.84 37.5,3.43 38.0,3.32 38.5,3.00 39.0,3.72 39.5,3.23 40.0,3.56 40.5,3.61 41.0,3.68 41.5,2.89 42.0,3.60 42.5,3.47 43.0,3.31 43.5,2.78 44.0,3.65 44.5,3.25 45.0,3.14 45.5,2.77 46.0,2.84 46.5,2.79 47.0,3.43 47.5,3.28 48.0,3.35 48.5,2.77 49.0,2.69 49.5,3.57 50.0,3.55 50.5,3.48 51.0,3.48 51.5,3.21 52.0,3.09 52.5,3.45 53.0,3.74 53.5,3.28 54.0,3.33 54.5,3.12 55.0,2.69 55.5,2.98 56.0,3.17 56.5,3.06 57.0,3.00 57.5,3.68 58.0,2.75 58.5,2.88 59.0,2.78 59.5,2.86 60.0,3.31 60.5,3.30 61.0,3.63 61.5,3.04 62.0,3.67 62.5,3.67 63.0,3.51 63.5,3.56 64.0,3.37 64.5,3.68 65.0,3.74 65.5,3.57 66.0,3.63 66.5,3.34 67.0,3.71 67.5,2.78 68.0,3.06 68.5,3.58 69.0,3.46 69.5,3.36 70.0,3.34 70.5,3.60 71.0,2.81 71.5,2.65 72.0,3.23 72.5,3.21 73.0,3.65 73.5,3.63 74.0,3.36 74.5,3.45 75.0,2.83 75.5,3.56 76.0,3.71 76.5,2.69 77.0,3.16 77.5,3.58 78.0,3.14 78.5,3.71 79.0,3.16 79.5,2.66 80.0,2.79 80.5,2.97 81.0,3.45 81.5,3.34 82.0,3.56 82.5,2.89 83.0,3.15 83.5,2.88 84.0,3.38 84.5,3.49 85.0,2.85 85.5,2.66 86.0,2.80 86.5,2.85 87.0,2.84 87.5,2.93 88.0,3.49 88.5,3.17 89.0,3.35 89.5,3.71 90.0,3.71 90.5,3.43 91.0,3.45 91.5,2.98 92.0,2.69 92.5,3.25 93.0,2.71 93.5,2.65 94.0,2.69 94.5,3.34 95.0,3.50 95.5,3.49 96.0,3.52 96.5,3.52 97.0,3.05 97.5,2.75 98.0,2.82 98.5,3.21 99.0,3.02 99.5,2.86 100.0,3.65 100.5,3.01 101.0,2.09 101.5,2.52 102.0,2.89 102.5,2.71 103.0,2.34 103.5,2.52 104.0,2.80 104.5,3.48 105.0,2.08 105.5,2.90 106.0,2.12 106.5,2.90 107.0,3.58 107.5,2.14 108.0,2.39 108.5,2.54 109.0,2.66 109.5,3.22 110.0,2.99 110.5,3.11 111.0,2.85 111.5,2.97 112.0,2.35 112.5,2.52 113.0,2.75 113.5,3.15 114.0,3.10 114.5,3.08 115.0,3.16 115.5,2.48 116.0,2.95 116.5,2.48 117.0,3.16 117.5,3.24 118.0,2.47 118.5,2.50 119.0,2.37 119.5,2.65 120.0,2.61 120.5,2.80 121.0,2.44 121.5,2.25 122.0,2.49 122.5,2.35 123.0,2.70 123.5,3.24 124.0,3.46 124.5,3.11 125.0,2.14 125.5,2.98 126.0,2.90 126.5,1.97 127.0,2.71 127.5,2.90 128.0,1.96 128.5,3.21 129.0,2.89 129.5,3.26 130.0,2.93 130.5,2.77 131.0,3.45 131.5,2.63 132.0,2.86 132.5,2.07 133.0,3.41 133.5,3.05 134.0,3.34 134.5,2.52 135.0,2.63 135.5,2.82 136.0,2.53 136.5,3.59 137.0,2.63 137.5,2.89 138.0,2.38 138.5,2.94 139.0,2.95 139.5,2.96 140.0,2.37 140.5,3.34 141.0,2.96 141.5,3.49 142.0,3.52 142.5,3.15 143.0,2.67 143.5,3.04 144.0,3.34 144.5,3.45 145.0,2.48 145.5,3.14 146.0,2.62 146.5,2.48 147.0,2.51 147.5,2.89 148.0,2.17 148.5,2.68 149.0,2.44 149.5,3.01 150.0,3.57 150.5,3.05 151.0,3.32 151.5,2.95 152.0,2.23 152.5,3.23 153.0,3.04 153.5,3.20 154.0,2.66 154.5,2.22 155.0,2.67 155.5,3.11 156.0,3.42 156.5,2.80 157.0,3.10 157.5,3.52 158.0,3.31 158.5,3.68 159.0,3.21 159.5,2.66 160.0,2.37 160.5,2.23 161.0,3.04 161.5,2.53 162.0,2.41 162.5,3.00 163.0,2.24 163.5,2.26 164.0,3.15 164.5,2.50 165.0,2.17 165.5,2.36 166.0,2.42 166.5,3.46 167.0,3.30 167.5,2.94 168.0,2.61 168.5,2.49 169.0,3.20 169.5,2.25 170.0,2.75 170.5,2.96 171.0,2.72 171.5,3.44 172.0,2.77 172.5,2.12 173.0,2.88 173.5,2.65 174.0,2.39 174.5,2.97 175.0,3.37 175.5,2.67 176.0,3.11 176.5,3.45 177.0,2.43 177.5,2.76 178.0,2.79 178.5,3.13 179.0,2.59 179.5,1.89 180.0,3.34 180.5,2.04 181.0,3.02 181.5,2.73 182.0,3.03 182.5,3.15 183.0,2.58 183.5,2.42 184.0,2.18 184.5,2.74 185.0,3.18 185.5,3.33 186.0,3.00 186.5,3.30 187.0,2.70 187.5,3.12 188.0,2.72 188.5,2.13 189.0,2.51 189.5,3.01 190.0,2.16 190.5,2.99 191.0,3.40 191.5,2.94 192.0,2.65 192.5,3.25 193.0,3.02 193.5,2.54 194.0,2.10 194.5,2.29 195.0,2.25 195.5,2.91 196.0,2.56 196.5,2.38 197.0,3.38 197.5,2.62 198.0,2.94 198.5,2.80 199.0,2.45 199.5,2.77 200.0,2.80 200.5,3.42 201.0,2.76 201.5,3.01 202.0,1.92 202.5,3.13 203.0,3.45 203.5,3.29 204.0,3.26 204.5,2.38 205.0,2.57 205.5,2.85 206.0,3.05 206.5,3.44 207.0,2.57 207.5,2.67 208.0,2.61 208.5,3.24 209.0,2.93 209.5,1.99 210.0,2.76 210.5,3.12 211.0,2.36 211.5,3.09 212.0,2.54 212.5,2.13 213.0,2.47 213.5,3.49 214.0,2.60 214.5,2.11 215.0,2.40 215.5,2.78 216.0,3.05 216.5,2.73 217.0,2.78 217.5,3.39 218.0,2.46 218.5,3.56 219.0,2.68 219.5,3.13 220.0,3.07 220.5,3.03 221.0,2.15 221.5,2.38 222.0,3.28 222.5,2.10 223.0,3.38 223.5,2.64 224.0,3.07 224.5,2.24 225.0,3.46 225.5,3.02 226.0,2.83 226.5,2.25 227.0,3.02 227.5,2.42 228.0,2.65 228.5,2.87 229.0,2.63 229.5,3.04 230.0,3.15 230.5,2.23 231.0,3.25 231.5,2.70 232.0,3.54 232.5,3.35 233.0,2.02 233.5,2.11 234.0,2.44 234.5,2.76 235.0,2.89 235.5,2.70 236.0,3.06 236.5,3.55 237.0,3.14 237.5,2.59 238.0,2.51 238.5,2.67 239.0,2.48 239.5,3.30 240.0,2.57 240.5,3.23 241.0,2.73 241.5,2.62 242.0,2.86 242.5,3.65 243.0,2.52 243.5,2.18 244.0,3.14 244.5,2.18 245.0,2.86 245.5,3.16 246.0,3.11 246.5,2.21 247.0,2.68 247.5,3.09 248.0,1.90 248.5,3.11 249.0,2.86 249.5,2.57 250.0,2.25 250.5,2.20 251.0,2.80 251.0,8.20 250.5,8.80 250.0,8.75 249.5,8.43 249.0,8.14 248.5,7.89 248.0,9.10 247.5,7.91 247.0,8.32 246.5,8.79 246.0,7.89 245.5,7.84 245.0,8.14 244.5,8.82 244.0,7.86 243.5,8.82 243.0,8.48 242.5,7.35 242.0,8.14 241.5,8.38 241.0,8.27 240.5,7.77 240.0,8.43 239.5,7.70 239.0,8.52 238.5,8.33 238.0,8.49 237.5,8.41 237.0,7.86 236.5,7.45 236.0,7.94 235.5,8.30 235.0,8.11 234.5,8.24 234.0,8.56 233.5,8.89 233.0,8.98 232.5,7.65 232.0,7.46 231.5,8.30 231.0,7.75 230.5,8.77 230.0,7.85 229.5,7.96 229.0,8.37 228.5,8.13 228.0,8.35 227.5,8.58 227.0,7.98 226.5,8.75 226.0,8.17 225.5,7.98 225.0,7.54 224.5,8.76 224.0,7.93 223.5,8.36 223.0,7.62 222.5,8.90 222.0,7.72 221.5,8.62 221.0,8.85 220.5,7.97 220.0,7.93 219.5,7.87 219.0,8.32 218.5,7.44 218.0,8.54 217.5,7.61 217.0,8.22 216.5,8.27 216.0,7.95 215.5,8.22 215.0,8.60 214.5,8.89 214.0,8.40 213.5,7.51 213.0,8.53 212.5,8.87 212.0,8.46 211.5,7.91 211.0,8.64 210.5,7.88 210.0,8.24 209.5,9.01 209.0,8.07 208.5,7.76 208.0,8.39 207.5,8.33 207.0,8.43 206.5,7.56 206.0,7.95 205.5,8.15 205.0,8.43 204.5,8.62 204.0,7.74 203.5,7.71 203.0,7.55 202.5,7.87 202.0,9.08 201.5,7.99 201.0,8.24 200.5,7.58 200.0,8.20 199.5,8.23 199.0,8.55 198.5,8.20 198.0,8.06 197.5,8.38 197.0,7.62 196.5,8.62 196.0,8.44 195.5,8.09 195.0,8.75 194.5,8.71 194.0,8.90 193.5,8.46 193.0,7.98 192.5,7.75 192.0,8.35 191.5,8.06 191.0,7.60 190.5,8.01 190.0,8.84 189.5,7.99 189.0,8.49 188.5,8.87 188.0,8.28 187.5,7.88 187.0,8.30 186.5,7.70 186.0,8.00 185.5,7.67 185.0,7.82 184.5,8.26 184.0,8.82 183.5,8.58 183.0,8.42 182.5,7.85 182.0,7.97 181.5,8.27 181.0,7.98 180.5,8.96 180.0,7.66 179.5,9.11 179.0,8.41 178.5,7.87 178.0,8.21 177.5,8.24 177.0,8.57 176.5,7.55 176.0,7.89 175.5,8.33 175.0,7.63 174.5,8.03 174.0,8.61 173.5,8.35 173.0,8.12 172.5,8.88 172.0,8.23 171.5,7.56 171.0,8.28 170.5,8.04 170.0,8.25 169.5,8.75 169.0,7.80 168.5,8.51 168.0,8.39 167.5,8.06 167.0,7.70 166.5,7.54 166.0,8.58 165.5,8.64 165.0,8.83 164.5,8.50 164.0,7.85 163.5,8.74 163.0,8.76 162.5,8.00 162.0,8.59 161.5,8.47 161.0,7.96 160.5,8.77 160.0,8.63 159.5,8.34 159.0,7.79 158.5,7.32 158.0,7.69 157.5,7.48 157.0,7.90 156.5,8.20 156.0,7.58 155.5,7.89 155.0,8.33 154.5,8.78 154.0,8.34 153.5,7.80 153.0,7.96 152.5,7.77 152.0,8.77 151.5,8.05 151.0,7.68 150.5,7.95 150.0,7.43 149.5,7.99 149.0,8.56 148.5,8.32 148.0,8.83 147.5,8.11 147.0,8.49 146.5,8.52 146.0,8.38 145.5,7.86 145.0,8.52 144.5,7.55 144.0,7.66 143.5,7.96 143.0,8.33 142.5,7.85 142.0,7.48 141.5,7.51 141.0,8.04 140.5,7.66 140.0,8.63 139.5,8.04 139.0,8.05 138.5,8.06 138.0,8.62 137.5,8.11 137.0,8.37 136.5,7.41 136.0,8.47 135.5,8.18 135.0,8.37 134.5,8.48 134.0,7.66 133.5,7.95 133.0,7.59 132.5,8.93 132.0,8.14 131.5,8.37 131.0,7.55 130.5,8.23 130.0,8.07 129.5,7.74 129.0,8.11 128.5,7.79 128.0,9.04 127.5,8.10 127.0,8.29 126.5,9.03 126.0,8.10 125.5,8.02 125.0,8.86 124.5,7.89 124.0,7.54 123.5,7.76 123.0,8.30 122.5,8.65 122.0,8.51 121.5,8.75 121.0,8.56 120.5,8.20 120.0,8.39 119.5,8.35 119.0,8.63 118.5,8.50 118.0,8.53 117.5,7.76 117.0,7.84 116.5,8.52 116.0,8.05 115.5,8.52 115.0,7.84 114.5,7.92 114.0,7.90 113.5,7.85 113.0,8.25 112.5,8.48 112.0,8.65 111.5,8.03 111.0,8.15 110.5,7.89 110.0,8.01 109.5,7.78 109.0,8.34 108.5,8.46 108.0,8.61 107.5,8.86 107.0,7.42 106.5,8.10 106.0,8.88 105.5,8.10 105.0,8.92 104.5,7.52 104.0,8.20 103.5,8.48 103.0,8.66 102.5,8.29 102.0,8.11 101.5,8.48 101.0,8.91 100.5,7.99 100.0,7.35 99.5,8.14 99.0,7.98 98.5,7.79 98.0,8.18 97.5,8.25 97.0,7.95 96.5,7.48 96.0,7.48 95.5,7.51 95.0,7.50 94.5,7.66 94.0,8.31 93.5,8.35 93.0,8.29 92.5,7.75 92.0,8.31 91.5,8.02 91.0,7.55 90.5,7.57 90.0,7.29 89.5,7.29 89.0,7.65 88.5,7.83 88.0,7.51 87.5,8.07 87.0,8.16 86.5,8.15 86.0,8.20 85.5,8.34 85.0,8.15 84.5,7.51 84.0,7.62 83.5,8.12 83.0,7.85 82.5,8.11 82.0,7.44 81.5,7.66 81.0,7.55 80.5,8.03 80.0,8.21 79.5,8.34 79.0,7.84 78.5,7.29 78.0,7.86 77.5,7.42 77.0,7.84 76.5,8.31 76.0,7.29 75.5,7.44 75.0,8.17 74.5,7.55 74.0,7.64 73.5,7.37 73.0,7.35 72.5,7.79 72.0,7.77 71.5,8.35 71.0,8.19 70.5,7.40 70.0,7.66 69.5,7.64 69.0,7.54 68.5,7.42 68.0,7.94 67.5,8.22 67.0,7.29 66.5,7.66 66.0,7.37 65.5,7.43 65.0,7.26 64.5,7.32 64.0,7.63 63.5,7.44 63.0,7.49 62.5,7.33 62.0,7.33 61.5,7.96 61.0,7.37 60.5,7.70 60.0,7.69 59.5,8.14 59.0,8.22 58.5,8.12 58.0,8.25 57.5,7.32 57.0,8.00 56.5,7.94 56.0,7.83 55.5,8.02 55.0,8.31 54.5,7.88 54.0,7.67 53.5,7.72 53.0,7.26 52.5,7.55 52.0,7.91 51.5,7.79 51.0,7.52 50.5,7.52 50.0,7.45 49.5,7.43 49.0,8.31 48.5,8.23 48.0,7.65 47.5,7.72 47.0,7.57 46.5,8.21 46.0,8.16 45.5,8.23 45.0,7.86 44.5,7.75 44.0,7.35 43.5,8.22 43.0,7.69 42.5,7.53 42.0,7.40 41.5,8.11 41.0,7.32 40.5,7.39 40.0,7.44 39.5,7.77 39.0,7.28 38.5,8.00 38.0,7.68 37.5,7.57 37.0,8.16 36.5,8.35 36.0,7.97 35.5,8.03 35.0,7.33 34.5,7.99 34.0,7.78 33.5,8.30 33.0,8.18 32.5,7.76 32.0,7.90 31.5,7.91 31.0,8.02 30.5,7.61 30.0,8.22 29.5,7.89 29.0,8.10 28.5,8.00 28.0,7.30 27.5,7.80 27.0,7.43 26.5,8.09 26.0,7.72 25.5,7.39 25.0,8.34 24.5,7.58 24.0,8.06 23.5,8.22 23.0,7.84 22.5,7.89 22.0,7.53 21.5,8.03 21.0,8.13 20.5,7.59 20.0,7.76 19.5,7.90 19.0,7.61 18.5,7.73 18.0,8.01 17.5,7.49 17.0,7.33 16.5,7.33 16.0,7.86 15.5,7.67 15.0,7.96 14.5,7.90 14.0,7.46 13.5,8.16 13.0,7.60 12.5,7.39 12.0,7.42 11.5,7.58 11.0,8.20 10.5,7.31 10.0,8.33 9.5,7.70 9.0,7.89 8.5,8.30 8.0,7.95 7.5,7.51 7.0,7.40 6.5,8.17 6.0,7.73 5.5,7.36 5.0,7.34 4.5,7.74 4.0,7.30 3.5,7.82 3.0,7.32 2.5,7.66 2.0,7.85 1.5,7.34 1.0,7.98 0.5,7.43 0.0,7.62"/></g></svg>
<div class="a" style="left:716.52px;top:273.8px;width:253.76px;height:31.45px;background:linear-gradient(#90aad0,#809cc4 35%,#7090b8);border:1px solid #18202c;border-radius:2.5px;box-shadow:inset 1px 1px 0 rgba(255,255,255,.25);"></div>
<div class="t" style="left:719.3199999999999px;top:275.40px;font-size:6px;color:#2e3c54;transform:scaleX(.88);transform-origin:0 0">shabwey_lead_f_sharp_140.1 <span style="font-size:5px">&#9901;</span></div>
<svg class="a" style="left:717.52px;top:286.6px;" width="251.76" height="11" viewBox="0 0 251.76 11"><g fill="#323f54"><polygon points="0.0,3.49 0.5,2.68 1.0,3.60 1.5,2.96 2.0,3.65 2.5,3.47 3.0,2.64 3.5,3.51 4.0,3.03 4.5,3.23 5.0,3.24 5.5,3.20 6.0,3.53 6.5,2.83 7.0,3.64 7.5,3.48 8.0,3.72 8.5,3.45 9.0,3.29 9.5,2.75 10.0,3.32 10.5,3.61 11.0,3.46 11.5,2.65 12.0,3.67 12.5,3.06 13.0,3.33 13.5,3.01 14.0,3.37 14.5,2.98 15.0,3.19 15.5,3.03 16.0,2.75 16.5,3.10 17.0,3.58 17.5,3.67 18.0,2.70 18.5,3.20 19.0,3.53 19.5,2.70 20.0,3.10 20.5,2.94 21.0,2.77 21.5,3.43 22.0,3.35 22.5,2.77 23.0,3.59 23.5,2.90 24.0,3.63 24.5,2.98 25.0,2.97 25.5,2.70 26.0,2.81 26.5,3.19 27.0,3.52 27.5,3.57 28.0,3.16 28.5,3.18 29.0,3.66 29.5,2.75 30.0,3.18 30.5,2.97 31.0,3.50 31.5,3.47 32.0,3.73 32.5,3.36 33.0,3.45 33.5,3.27 34.0,3.33 34.5,2.82 35.0,2.76 35.5,3.55 36.0,3.30 36.5,3.56 37.0,3.01 37.5,2.67 38.0,3.52 38.5,2.90 39.0,3.41 39.5,3.73 40.0,2.90 40.5,3.36 41.0,3.55 41.5,3.26 42.0,3.49 42.5,3.29 43.0,3.25 43.5,3.28 44.0,3.09 44.5,3.42 45.0,3.64 45.5,3.65 46.0,3.62 46.5,3.17 47.0,3.34 47.5,2.85 48.0,3.18 48.5,2.96 49.0,2.66 49.5,3.67 50.0,3.72 50.5,3.59 51.0,3.32 51.5,3.11 52.0,2.92 52.5,3.35 53.0,2.68 53.5,3.74 54.0,2.82 54.5,3.51 55.0,2.78 55.5,3.70 56.0,2.68 56.5,2.90 57.0,2.65 57.5,3.10 58.0,3.54 58.5,2.67 59.0,3.25 59.5,3.65 60.0,3.07 60.5,3.19 61.0,3.22 61.5,3.57 62.0,3.61 62.5,3.10 63.0,3.24 63.5,3.60 64.0,3.26 64.5,2.94 65.0,2.95 65.5,3.22 66.0,3.31 66.5,3.34 67.0,3.49 67.5,3.52 68.0,3.25 68.5,3.62 69.0,2.94 69.5,2.96 70.0,3.07 70.5,3.72 71.0,3.34 71.5,3.26 72.0,3.64 72.5,2.68 73.0,2.91 73.5,3.19 74.0,2.96 74.5,3.52 75.0,3.49 75.5,3.16 76.0,2.92 76.5,3.03 77.0,3.73 77.5,3.07 78.0,2.74 78.5,2.92 79.0,2.72 79.5,2.66 80.0,3.49 80.5,3.41 81.0,3.14 81.5,2.67 82.0,3.33 82.5,2.70 83.0,2.80 83.5,3.17 84.0,3.05 84.5,2.69 85.0,2.88 85.5,3.41 86.0,2.81 86.5,3.52 87.0,3.33 87.5,2.69 88.0,2.81 88.5,3.40 89.0,3.42 89.5,3.07 90.0,2.81 90.5,2.99 91.0,2.71 91.5,2.94 92.0,2.84 92.5,3.07 93.0,3.34 93.5,3.27 94.0,3.20 94.5,3.16 95.0,2.82 95.5,3.44 96.0,3.66 96.5,2.93 97.0,3.44 97.5,3.28 98.0,3.61 98.5,2.83 99.0,3.44 99.5,3.42 100.0,2.86 100.5,3.19 101.0,2.70 101.5,2.99 102.0,2.03 102.5,2.71 103.0,2.35 103.5,2.52 104.0,2.23 104.5,2.77 105.0,2.06 105.5,2.08 106.0,3.09 106.5,2.91 107.0,2.51 107.5,1.98 108.0,3.14 108.5,2.25 109.0,3.36 109.5,2.02 110.0,2.72 110.5,2.16 111.0,2.45 111.5,3.14 112.0,3.08 112.5,3.07 113.0,2.66 113.5,3.35 114.0,2.96 114.5,2.80 115.0,3.25 115.5,2.93 116.0,3.58 116.5,2.52 117.0,2.37 117.5,2.65 118.0,2.54 118.5,2.35 119.0,1.87 119.5,3.32 120.0,3.15 120.5,2.85 121.0,2.28 121.5,2.72 122.0,2.23 122.5,1.99 123.0,2.17 123.5,2.90 124.0,2.38 124.5,2.84 125.0,3.11 125.5,2.41 126.0,2.23 126.5,2.47 127.0,3.07 127.5,2.22 128.0,2.93 128.5,3.28 129.0,2.55 129.5,2.78 130.0,2.94 130.5,2.92 131.0,3.06 131.5,2.80 132.0,2.75 132.5,2.59 133.0,2.61 133.5,2.54 134.0,2.36 134.5,2.16 135.0,3.08 135.5,3.18 136.0,3.05 136.5,2.54 137.0,3.02 137.5,3.00 138.0,2.50 138.5,3.51 139.0,3.04 139.5,2.87 140.0,2.38 140.5,2.27 141.0,2.88 141.5,2.58 142.0,2.43 142.5,2.64 143.0,2.74 143.5,2.50 144.0,2.85 144.5,2.85 145.0,2.87 145.5,2.82 146.0,2.90 146.5,2.99 147.0,2.73 147.5,2.83 148.0,2.61 148.5,3.58 149.0,2.77 149.5,2.59 150.0,2.32 150.5,2.58 151.0,3.06 151.5,2.67 152.0,2.53 152.5,2.93 153.0,3.21 153.5,2.40 154.0,2.14 154.5,2.39 155.0,3.46 155.5,2.17 156.0,2.72 156.5,2.54 157.0,2.89 157.5,3.50 158.0,3.27 158.5,2.79 159.0,2.73 159.5,3.02 160.0,2.74 160.5,2.94 161.0,2.81 161.5,2.31 162.0,2.14 162.5,2.61 163.0,2.85 163.5,3.36 164.0,2.45 164.5,2.24 165.0,1.98 165.5,2.55 166.0,3.04 166.5,2.36 167.0,3.36 167.5,2.90 168.0,2.92 168.5,2.52 169.0,3.08 169.5,2.53 170.0,2.99 170.5,2.06 171.0,2.67 171.5,3.29 172.0,2.25 172.5,2.75 173.0,2.75 173.5,1.96 174.0,2.90 174.5,2.20 175.0,2.88 175.5,2.73 176.0,2.97 176.5,2.41 177.0,2.97 177.5,2.98 178.0,3.05 178.5,2.99 179.0,3.16 179.5,2.35 180.0,1.89 180.5,2.83 181.0,2.18 181.5,2.59 182.0,2.56 182.5,2.85 183.0,2.86 183.5,2.73 184.0,2.85 184.5,2.60 185.0,2.13 185.5,2.33 186.0,2.68 186.5,3.41 187.0,2.13 187.5,2.91 188.0,2.49 188.5,2.69 189.0,2.54 189.5,2.62 190.0,2.81 190.5,2.60 191.0,2.81 191.5,3.46 192.0,3.45 192.5,2.74 193.0,2.60 193.5,2.87 194.0,3.26 194.5,2.70 195.0,2.73 195.5,3.06 196.0,3.46 196.5,2.74 197.0,2.93 197.5,3.61 198.0,2.97 198.5,2.60 199.0,2.44 199.5,2.66 200.0,3.18 200.5,3.51 201.0,3.02 201.5,2.57 202.0,2.61 202.5,2.69 203.0,1.95 203.5,2.68 204.0,2.72 204.5,2.02 205.0,3.23 205.5,2.24 206.0,2.57 206.5,2.67 207.0,3.34 207.5,2.40 208.0,3.02 208.5,3.29 209.0,2.92 209.5,2.68 210.0,1.91 210.5,3.02 211.0,2.61 211.5,2.67 212.0,2.12 212.5,2.93 213.0,2.53 213.5,2.37 214.0,3.67 214.5,2.86 215.0,2.91 215.5,2.61 216.0,2.31 216.5,3.28 217.0,1.95 217.5,2.31 218.0,2.91 218.5,3.12 219.0,3.28 219.5,3.36 220.0,1.89 220.5,2.34 221.0,2.77 221.5,2.25 222.0,2.06 222.5,2.80 223.0,3.49 223.5,2.39 224.0,2.39 224.5,3.30 225.0,2.27 225.5,3.14 226.0,2.32 226.5,3.37 227.0,2.39 227.5,2.56 228.0,2.67 228.5,3.21 229.0,2.08 229.5,2.18 230.0,2.60 230.5,2.39 231.0,2.06 231.5,3.50 232.0,2.67 232.5,3.24 233.0,2.17 233.5,2.16 234.0,2.53 234.5,2.23 235.0,3.08 235.5,3.41 236.0,2.61 236.5,3.19 237.0,2.95 237.5,3.00 238.0,2.29 238.5,2.38 239.0,2.58 239.5,3.32 240.0,2.65 240.5,2.88 241.0,2.22 241.5,2.16 242.0,2.34 242.5,2.80 243.0,3.17 243.5,2.96 244.0,2.60 244.5,3.09 245.0,3.16 245.5,2.35 246.0,2.44 246.5,2.95 247.0,2.75 247.5,3.12 248.0,2.89 248.5,2.39 249.0,3.39 249.5,3.13 250.0,2.95 250.5,2.65 251.0,2.73 251.5,3.14 251.5,7.86 251.0,8.27 250.5,8.35 250.0,8.05 249.5,7.87 249.0,7.61 248.5,8.61 248.0,8.11 247.5,7.88 247.0,8.25 246.5,8.05 246.0,8.56 245.5,8.65 245.0,7.84 244.5,7.91 244.0,8.40 243.5,8.04 243.0,7.83 242.5,8.20 242.0,8.66 241.5,8.84 241.0,8.78 240.5,8.12 240.0,8.35 239.5,7.68 239.0,8.42 238.5,8.62 238.0,8.71 237.5,8.00 237.0,8.05 236.5,7.81 236.0,8.39 235.5,7.59 235.0,7.92 234.5,8.77 234.0,8.47 233.5,8.84 233.0,8.83 232.5,7.76 232.0,8.33 231.5,7.50 231.0,8.94 230.5,8.61 230.0,8.40 229.5,8.82 229.0,8.92 228.5,7.79 228.0,8.33 227.5,8.44 227.0,8.61 226.5,7.63 226.0,8.68 225.5,7.86 225.0,8.73 224.5,7.70 224.0,8.61 223.5,8.61 223.0,7.51 222.5,8.20 222.0,8.94 221.5,8.75 221.0,8.23 220.5,8.66 220.0,9.11 219.5,7.64 219.0,7.72 218.5,7.88 218.0,8.09 217.5,8.69 217.0,9.05 216.5,7.72 216.0,8.69 215.5,8.39 215.0,8.09 214.5,8.14 214.0,7.33 213.5,8.63 213.0,8.47 212.5,8.07 212.0,8.88 211.5,8.33 211.0,8.39 210.5,7.98 210.0,9.09 209.5,8.32 209.0,8.08 208.5,7.71 208.0,7.98 207.5,8.60 207.0,7.66 206.5,8.33 206.0,8.43 205.5,8.76 205.0,7.77 204.5,8.98 204.0,8.28 203.5,8.32 203.0,9.05 202.5,8.31 202.0,8.39 201.5,8.43 201.0,7.98 200.5,7.49 200.0,7.82 199.5,8.34 199.0,8.56 198.5,8.40 198.0,8.03 197.5,7.39 197.0,8.07 196.5,8.26 196.0,7.54 195.5,7.94 195.0,8.27 194.5,8.30 194.0,7.74 193.5,8.13 193.0,8.40 192.5,8.26 192.0,7.55 191.5,7.54 191.0,8.19 190.5,8.40 190.0,8.19 189.5,8.38 189.0,8.46 188.5,8.31 188.0,8.51 187.5,8.09 187.0,8.87 186.5,7.59 186.0,8.32 185.5,8.67 185.0,8.87 184.5,8.40 184.0,8.15 183.5,8.27 183.0,8.14 182.5,8.15 182.0,8.44 181.5,8.41 181.0,8.82 180.5,8.17 180.0,9.11 179.5,8.65 179.0,7.84 178.5,8.01 178.0,7.95 177.5,8.02 177.0,8.03 176.5,8.59 176.0,8.03 175.5,8.27 175.0,8.12 174.5,8.80 174.0,8.10 173.5,9.04 173.0,8.25 172.5,8.25 172.0,8.75 171.5,7.71 171.0,8.33 170.5,8.94 170.0,8.01 169.5,8.47 169.0,7.92 168.5,8.48 168.0,8.08 167.5,8.10 167.0,7.64 166.5,8.64 166.0,7.96 165.5,8.45 165.0,9.02 164.5,8.76 164.0,8.55 163.5,7.64 163.0,8.15 162.5,8.39 162.0,8.86 161.5,8.69 161.0,8.19 160.5,8.06 160.0,8.26 159.5,7.98 159.0,8.27 158.5,8.21 158.0,7.73 157.5,7.50 157.0,8.11 156.5,8.46 156.0,8.28 155.5,8.83 155.0,7.54 154.5,8.61 154.0,8.86 153.5,8.60 153.0,7.79 152.5,8.07 152.0,8.47 151.5,8.33 151.0,7.94 150.5,8.42 150.0,8.68 149.5,8.41 149.0,8.23 148.5,7.42 148.0,8.39 147.5,8.17 147.0,8.27 146.5,8.01 146.0,8.10 145.5,8.18 145.0,8.13 144.5,8.15 144.0,8.15 143.5,8.50 143.0,8.26 142.5,8.36 142.0,8.57 141.5,8.42 141.0,8.12 140.5,8.73 140.0,8.62 139.5,8.13 139.0,7.96 138.5,7.49 138.0,8.50 137.5,8.00 137.0,7.98 136.5,8.46 136.0,7.95 135.5,7.82 135.0,7.92 134.5,8.84 134.0,8.64 133.5,8.46 133.0,8.39 132.5,8.41 132.0,8.25 131.5,8.20 131.0,7.94 130.5,8.08 130.0,8.06 129.5,8.22 129.0,8.45 128.5,7.72 128.0,8.07 127.5,8.78 127.0,7.93 126.5,8.53 126.0,8.77 125.5,8.59 125.0,7.89 124.5,8.16 124.0,8.62 123.5,8.10 123.0,8.83 122.5,9.01 122.0,8.77 121.5,8.28 121.0,8.72 120.5,8.15 120.0,7.85 119.5,7.68 119.0,9.13 118.5,8.65 118.0,8.46 117.5,8.35 117.0,8.63 116.5,8.48 116.0,7.42 115.5,8.07 115.0,7.75 114.5,8.20 114.0,8.04 113.5,7.65 113.0,8.34 112.5,7.93 112.0,7.92 111.5,7.86 111.0,8.55 110.5,8.84 110.0,8.28 109.5,8.98 109.0,7.64 108.5,8.75 108.0,7.86 107.5,9.02 107.0,8.49 106.5,8.09 106.0,7.91 105.5,8.92 105.0,8.94 104.5,8.23 104.0,8.77 103.5,8.48 103.0,8.65 102.5,8.29 102.0,8.97 101.5,8.01 101.0,8.30 100.5,7.81 100.0,8.14 99.5,7.58 99.0,7.56 98.5,8.17 98.0,7.39 97.5,7.72 97.0,7.56 96.5,8.07 96.0,7.34 95.5,7.56 95.0,8.18 94.5,7.84 94.0,7.80 93.5,7.73 93.0,7.66 92.5,7.93 92.0,8.16 91.5,8.06 91.0,8.29 90.5,8.01 90.0,8.19 89.5,7.93 89.0,7.58 88.5,7.60 88.0,8.19 87.5,8.31 87.0,7.67 86.5,7.48 86.0,8.19 85.5,7.59 85.0,8.12 84.5,8.31 84.0,7.95 83.5,7.83 83.0,8.20 82.5,8.30 82.0,7.67 81.5,8.33 81.0,7.86 80.5,7.59 80.0,7.51 79.5,8.34 79.0,8.28 78.5,8.08 78.0,8.26 77.5,7.93 77.0,7.27 76.5,7.97 76.0,8.08 75.5,7.84 75.0,7.51 74.5,7.48 74.0,8.04 73.5,7.81 73.0,8.09 72.5,8.32 72.0,7.36 71.5,7.74 71.0,7.66 70.5,7.28 70.0,7.93 69.5,8.04 69.0,8.06 68.5,7.38 68.0,7.75 67.5,7.48 67.0,7.51 66.5,7.66 66.0,7.69 65.5,7.78 65.0,8.05 64.5,8.06 64.0,7.74 63.5,7.40 63.0,7.76 62.5,7.90 62.0,7.39 61.5,7.43 61.0,7.78 60.5,7.81 60.0,7.93 59.5,7.35 59.0,7.75 58.5,8.33 58.0,7.46 57.5,7.90 57.0,8.35 56.5,8.10 56.0,8.32 55.5,7.30 55.0,8.22 54.5,7.49 54.0,8.18 53.5,7.26 53.0,8.32 52.5,7.65 52.0,8.08 51.5,7.89 51.0,7.68 50.5,7.41 50.0,7.28 49.5,7.33 49.0,8.34 48.5,8.04 48.0,7.82 47.5,8.15 47.0,7.66 46.5,7.83 46.0,7.38 45.5,7.35 45.0,7.36 44.5,7.58 44.0,7.91 43.5,7.72 43.0,7.75 42.5,7.71 42.0,7.51 41.5,7.74 41.0,7.45 40.5,7.64 40.0,8.10 39.5,7.27 39.0,7.59 38.5,8.10 38.0,7.48 37.5,8.33 37.0,7.99 36.5,7.44 36.0,7.70 35.5,7.45 35.0,8.24 34.5,8.18 34.0,7.67 33.5,7.73 33.0,7.55 32.5,7.64 32.0,7.27 31.5,7.53 31.0,7.50 30.5,8.03 30.0,7.82 29.5,8.25 29.0,7.34 28.5,7.82 28.0,7.84 27.5,7.43 27.0,7.48 26.5,7.81 26.0,8.19 25.5,8.30 25.0,8.03 24.5,8.02 24.0,7.37 23.5,8.10 23.0,7.41 22.5,8.23 22.0,7.65 21.5,7.57 21.0,8.23 20.5,8.06 20.0,7.90 19.5,8.30 19.0,7.47 18.5,7.80 18.0,8.30 17.5,7.33 17.0,7.42 16.5,7.90 16.0,8.25 15.5,7.97 15.0,7.81 14.5,8.02 14.0,7.63 13.5,7.99 13.0,7.67 12.5,7.94 12.0,7.33 11.5,8.35 11.0,7.54 10.5,7.39 10.0,7.68 9.5,8.25 9.0,7.71 8.5,7.55 8.0,7.28 7.5,7.52 7.0,7.36 6.5,8.17 6.0,7.47 5.5,7.80 5.0,7.76 4.5,7.77 4.0,7.97 3.5,7.49 3.0,8.36 2.5,7.53 2.0,7.35 1.5,8.04 1.0,7.40 0.5,8.32 0.0,7.51"/></g></svg>
<div class="a" style="left:209.5px;top:305.05px;width:253.26px;height:31.45px;background:linear-gradient(#90aad0,#809cc4 35%,#7090b8);border:1px solid #18202c;border-radius:2.5px;box-shadow:inset 1px 1px 0 rgba(255,255,255,.25);"></div>
<div class="t" style="left:212.3px;top:306.65px;font-size:6px;color:#2e3c54;transform:scaleX(.88);transform-origin:0 0">shabwey_Strings_f_sharp_140 <span style="font-size:5px">&#9901;</span></div>
<svg class="a" style="left:210.5px;top:315.35px;" width="251.26" height="15" viewBox="0 0 251.26 15"><g fill="#323f54"><polygon points="0.0,4.83 0.5,5.11 1.0,5.01 1.5,5.14 2.0,4.73 2.5,4.70 3.0,4.53 3.5,5.03 4.0,5.09 4.5,4.75 5.0,4.77 5.5,4.40 6.0,3.37 6.5,3.36 7.0,3.54 7.5,4.17 8.0,4.40 8.5,3.67 9.0,3.79 9.5,3.20 10.0,3.68 10.5,3.76 11.0,3.86 11.5,4.08 12.0,3.63 12.5,3.65 13.0,4.03 13.5,4.42 14.0,4.40 14.5,4.56 15.0,4.75 15.5,4.45 16.0,4.84 16.5,4.39 17.0,4.78 17.5,4.72 18.0,4.40 18.5,4.56 19.0,4.70 19.5,4.99 20.0,4.37 20.5,5.13 21.0,4.83 21.5,5.14 22.0,4.67 22.5,4.40 23.0,5.08 23.5,5.00 24.0,5.09 24.5,5.07 25.0,5.02 25.5,5.21 26.0,5.21 26.5,4.82 27.0,5.14 27.5,2.93 28.0,1.01 28.5,0.80 29.0,1.56 29.5,1.96 30.0,1.74 30.5,2.04 31.0,0.77 31.5,0.24 32.0,0.84 32.5,0.80 33.0,2.01 33.5,1.72 34.0,0.22 34.5,0.73 35.0,2.03 35.5,2.05 36.0,2.71 36.5,2.92 37.0,3.05 37.5,3.84 38.0,4.20 38.5,4.46 39.0,4.24 39.5,4.74 40.0,4.74 40.5,5.03 41.0,5.04 41.5,4.44 42.0,4.84 42.5,4.67 43.0,5.14 43.5,4.59 44.0,4.81 44.5,4.41 45.0,5.21 45.5,4.89 46.0,4.55 46.5,4.75 47.0,4.92 47.5,3.19 48.0,1.04 48.5,1.17 49.0,1.81 49.5,2.04 50.0,2.30 50.5,1.77 51.0,1.69 51.5,1.68 52.0,1.46 52.5,1.67 53.0,2.54 53.5,2.78 54.0,1.37 54.5,1.56 55.0,1.98 55.5,2.97 56.0,3.04 56.5,3.30 57.0,3.41 57.5,3.76 58.0,4.40 58.5,4.37 59.0,4.75 59.5,4.98 60.0,4.56 60.5,5.17 61.0,4.42 61.5,5.24 62.0,5.06 62.5,4.53 63.0,4.49 63.5,4.58 64.0,3.48 64.5,3.72 65.0,4.33 65.5,4.21 66.0,4.61 66.5,4.07 67.0,4.07 67.5,3.60 68.0,4.00 68.5,4.22 69.0,4.29 69.5,4.36 70.0,3.47 70.5,3.81 71.0,4.52 71.5,4.41 72.0,4.83 72.5,4.43 73.0,4.70 73.5,4.65 74.0,4.69 74.5,5.16 75.0,4.56 75.5,4.81 76.0,4.56 76.5,4.95 77.0,4.70 77.5,5.23 78.0,4.52 78.5,4.67 79.0,4.43 79.5,4.54 80.0,4.56 80.5,4.47 81.0,5.08 81.5,4.91 82.0,5.25 82.5,4.53 83.0,5.22 83.5,4.46 84.0,4.90 84.5,4.37 85.0,4.64 85.5,5.04 86.0,5.03 86.5,4.96 87.0,4.79 87.5,4.64 88.0,4.57 88.5,4.38 89.0,4.64 89.5,4.89 90.0,4.92 90.5,4.75 91.0,4.56 91.5,4.66 92.0,4.84 92.5,3.13 93.0,1.69 93.5,1.15 94.0,1.66 94.5,2.77 95.0,2.29 95.5,2.24 96.0,2.07 96.5,1.53 97.0,1.00 97.5,1.94 98.0,2.68 98.5,2.77 99.0,1.76 99.5,1.37 100.0,2.47 100.5,2.47 101.0,2.71 101.5,3.19 102.0,3.86 102.5,4.01 103.0,4.05 103.5,4.74 104.0,4.81 104.5,4.64 105.0,5.12 105.5,4.43 106.0,4.68 106.5,3.04 107.0,0.78 107.5,0.82 108.0,1.16 108.5,1.81 109.0,1.54 109.5,1.57 110.0,0.63 110.5,0.92 111.0,0.16 111.5,0.63 112.0,1.37 112.5,1.88 113.0,0.46 113.5,1.33 114.0,2.06 114.5,1.85 115.0,2.27 115.5,3.28 116.0,3.37 116.5,3.90 117.0,3.85 117.5,4.18 118.0,4.46 118.5,4.35 119.0,5.00 119.5,4.68 120.0,4.65 120.5,5.12 121.0,4.66 121.5,4.67 122.0,4.72 122.5,4.40 123.0,4.80 123.5,4.58 124.0,4.45 124.5,4.69 125.0,5.13 125.5,4.61 126.0,3.65 126.5,3.21 127.0,3.53 127.5,4.37 128.0,4.33 128.5,4.23 129.0,3.80 129.5,3.60 130.0,3.10 130.5,3.47 131.0,4.05 131.5,4.42 132.0,3.21 132.5,3.66 133.0,3.93 133.5,4.48 134.0,4.60 134.5,4.56 135.0,4.54 135.5,4.81 136.0,4.89 136.5,5.09 137.0,4.54 137.5,4.77 138.0,5.21 138.5,4.57 139.0,4.72 139.5,4.41 140.0,4.35 140.5,4.85 141.0,4.43 141.5,4.41 142.0,4.94 142.5,3.60 143.0,1.19 143.5,1.81 144.0,2.15 144.5,2.78 145.0,2.65 145.5,2.37 146.0,1.91 146.5,2.08 147.0,1.81 147.5,2.04 148.0,2.23 148.5,2.50 149.0,1.45 149.5,1.64 150.0,2.66 150.5,3.11 151.0,3.41 151.5,3.61 152.0,4.16 152.5,3.95 153.0,4.32 153.5,4.61 154.0,4.77 154.5,4.38 155.0,4.87 155.5,4.45 156.0,4.81 156.5,4.20 157.0,2.61 157.5,2.53 158.0,3.47 158.5,3.52 159.0,3.58 159.5,3.09 160.0,2.59 160.5,2.87 161.0,2.79 161.5,2.72 162.0,3.11 162.5,3.42 163.0,2.98 163.5,2.96 164.0,3.45 164.5,3.47 165.0,4.22 165.5,4.26 166.0,4.75 166.5,4.83 167.0,4.92 167.5,4.82 168.0,4.52 168.5,5.05 169.0,5.14 169.5,4.39 170.0,4.60 170.5,4.62 171.0,4.86 171.5,5.02 172.0,5.02 172.5,4.57 173.0,5.14 173.5,4.41 174.0,4.40 174.5,3.83 175.0,2.22 175.5,2.29 176.0,2.61 176.5,3.24 177.0,3.34 177.5,2.80 178.0,2.50 178.5,2.05 179.0,2.17 179.5,2.42 180.0,3.10 180.5,3.37 181.0,1.51 181.5,2.42 182.0,3.16 182.5,3.28 183.0,3.77 183.5,3.75 184.0,3.97 184.5,4.53 185.0,4.83 185.5,4.38 186.0,4.70 186.5,4.81 187.0,4.69 187.5,4.95 188.0,4.40 188.5,4.39 189.0,4.91 189.5,4.44 190.0,5.07 190.5,3.83 191.0,1.93 191.5,1.43 192.0,2.04 192.5,2.61 193.0,2.82 193.5,2.63 194.0,2.17 194.5,1.58 195.0,1.32 195.5,2.40 196.0,2.23 196.5,2.58 197.0,2.02 197.5,1.69 198.0,2.72 198.5,2.70 199.0,3.55 199.5,3.48 200.0,4.17 200.5,3.95 201.0,4.71 201.5,4.53 202.0,4.97 202.5,4.66 203.0,4.82 203.5,5.22 204.0,4.66 204.5,4.91 205.0,4.47 205.5,5.24 206.0,5.11 206.5,5.11 207.0,4.56 207.5,4.53 208.0,5.21 208.5,4.45 209.0,4.61 209.5,4.92 210.0,5.15 210.5,4.40 211.0,5.04 211.5,4.51 212.0,4.80 212.5,5.15 213.0,4.51 213.5,4.78 214.0,5.10 214.5,4.94 215.0,5.18 215.5,4.70 216.0,4.40 216.5,4.72 217.0,5.14 217.5,4.61 218.0,4.49 218.5,3.03 219.0,1.64 219.5,1.70 220.0,1.74 220.5,2.80 221.0,2.66 221.5,1.89 222.0,1.29 222.5,0.90 223.0,1.82 223.5,1.67 224.0,2.65 224.5,2.89 225.0,0.88 225.5,1.92 226.0,2.31 226.5,2.63 227.0,2.84 227.5,3.07 228.0,3.76 228.5,4.07 229.0,4.28 229.5,4.53 230.0,4.51 230.5,4.76 231.0,4.63 231.5,5.10 232.0,5.06 232.5,3.86 233.0,1.83 233.5,1.98 234.0,2.48 234.5,2.68 235.0,2.89 235.5,2.57 236.0,2.25 236.5,2.06 237.0,2.21 237.5,2.03 238.0,3.20 238.5,3.28 239.0,1.69 239.5,2.27 240.0,2.57 240.5,3.01 241.0,3.69 241.5,3.62 242.0,3.86 242.5,4.16 243.0,4.64 243.5,4.89 244.0,4.65 244.5,4.87 245.0,4.98 245.5,5.07 246.0,4.55 246.5,4.51 247.0,4.64 247.5,4.15 248.0,2.63 248.5,3.00 249.0,3.42 249.5,3.76 250.0,3.51 250.5,3.34 251.0,3.31 251.0,11.69 250.5,11.66 250.0,11.49 249.5,11.24 249.0,11.58 248.5,12.00 248.0,12.37 247.5,10.85 247.0,10.36 246.5,10.49 246.0,10.45 245.5,9.93 245.0,10.02 244.5,10.13 244.0,10.35 243.5,10.11 243.0,10.36 242.5,10.84 242.0,11.14 241.5,11.38 241.0,11.31 240.5,11.99 240.0,12.43 239.5,12.73 239.0,13.31 238.5,11.72 238.0,11.80 237.5,12.97 237.0,12.79 236.5,12.94 236.0,12.75 235.5,12.43 235.0,12.11 234.5,12.32 234.0,12.52 233.5,13.02 233.0,13.17 232.5,11.14 232.0,9.94 231.5,9.90 231.0,10.37 230.5,10.24 230.0,10.49 229.5,10.47 229.0,10.72 228.5,10.93 228.0,11.24 227.5,11.93 227.0,12.16 226.5,12.37 226.0,12.69 225.5,13.08 225.0,14.12 224.5,12.11 224.0,12.35 223.5,13.33 223.0,13.18 222.5,14.10 222.0,13.71 221.5,13.11 221.0,12.34 220.5,12.20 220.0,13.26 219.5,13.30 219.0,13.36 218.5,11.97 218.0,10.51 217.5,10.39 217.0,9.86 216.5,10.28 216.0,10.60 215.5,10.30 215.0,9.82 214.5,10.06 214.0,9.90 213.5,10.22 213.0,10.49 212.5,9.85 212.0,10.20 211.5,10.49 211.0,9.96 210.5,10.60 210.0,9.85 209.5,10.08 209.0,10.39 208.5,10.55 208.0,9.79 207.5,10.47 207.0,10.44 206.5,9.89 206.0,9.89 205.5,9.76 205.0,10.53 204.5,10.09 204.0,10.34 203.5,9.78 203.0,10.18 202.5,10.34 202.0,10.03 201.5,10.47 201.0,10.29 200.5,11.05 200.0,10.83 199.5,11.52 199.0,11.45 198.5,12.30 198.0,12.28 197.5,13.31 197.0,12.98 196.5,12.42 196.0,12.77 195.5,12.60 195.0,13.68 194.5,13.42 194.0,12.83 193.5,12.37 193.0,12.18 192.5,12.39 192.0,12.96 191.5,13.57 191.0,13.07 190.5,11.17 190.0,9.93 189.5,10.56 189.0,10.09 188.5,10.61 188.0,10.60 187.5,10.05 187.0,10.31 186.5,10.19 186.0,10.30 185.5,10.62 185.0,10.17 184.5,10.47 184.0,11.03 183.5,11.25 183.0,11.23 182.5,11.72 182.0,11.84 181.5,12.58 181.0,13.49 180.5,11.63 180.0,11.90 179.5,12.58 179.0,12.83 178.5,12.95 178.0,12.50 177.5,12.20 177.0,11.66 176.5,11.76 176.0,12.39 175.5,12.71 175.0,12.78 174.5,11.17 174.0,10.60 173.5,10.59 173.0,9.86 172.5,10.43 172.0,9.98 171.5,9.98 171.0,10.14 170.5,10.38 170.0,10.40 169.5,10.61 169.0,9.86 168.5,9.95 168.0,10.48 167.5,10.18 167.0,10.08 166.5,10.17 166.0,10.25 165.5,10.74 165.0,10.78 164.5,11.53 164.0,11.55 163.5,12.04 163.0,12.02 162.5,11.58 162.0,11.89 161.5,12.28 161.0,12.21 160.5,12.13 160.0,12.41 159.5,11.91 159.0,11.42 158.5,11.48 158.0,11.53 157.5,12.47 157.0,12.39 156.5,10.80 156.0,10.19 155.5,10.55 155.0,10.13 154.5,10.62 154.0,10.23 153.5,10.39 153.0,10.68 152.5,11.05 152.0,10.84 151.5,11.39 151.0,11.59 150.5,11.89 150.0,12.34 149.5,13.36 149.0,13.55 148.5,12.50 148.0,12.77 147.5,12.96 147.0,13.19 146.5,12.92 146.0,13.09 145.5,12.63 145.0,12.35 144.5,12.22 144.0,12.85 143.5,13.19 143.0,13.81 142.5,11.40 142.0,10.06 141.5,10.59 141.0,10.57 140.5,10.15 140.0,10.65 139.5,10.59 139.0,10.28 138.5,10.43 138.0,9.79 137.5,10.23 137.0,10.46 136.5,9.91 136.0,10.11 135.5,10.19 135.0,10.46 134.5,10.44 134.0,10.40 133.5,10.52 133.0,11.07 132.5,11.34 132.0,11.79 131.5,10.58 131.0,10.95 130.5,11.53 130.0,11.90 129.5,11.40 129.0,11.20 128.5,10.77 128.0,10.67 127.5,10.63 127.0,11.47 126.5,11.79 126.0,11.35 125.5,10.39 125.0,9.87 124.5,10.31 124.0,10.55 123.5,10.42 123.0,10.20 122.5,10.60 122.0,10.28 121.5,10.33 121.0,10.34 120.5,9.88 120.0,10.35 119.5,10.32 119.0,10.00 118.5,10.65 118.0,10.54 117.5,10.82 117.0,11.15 116.5,11.10 116.0,11.63 115.5,11.72 115.0,12.73 114.5,13.15 114.0,12.94 113.5,13.67 113.0,14.54 112.5,13.12 112.0,13.63 111.5,14.37 111.0,14.84 110.5,14.08 110.0,14.37 109.5,13.43 109.0,13.46 108.5,13.19 108.0,13.84 107.5,14.18 107.0,14.22 106.5,11.96 106.0,10.32 105.5,10.57 105.0,9.88 104.5,10.36 104.0,10.19 103.5,10.26 103.0,10.95 102.5,10.99 102.0,11.14 101.5,11.81 101.0,12.29 100.5,12.53 100.0,12.53 99.5,13.63 99.0,13.24 98.5,12.23 98.0,12.32 97.5,13.06 97.0,14.00 96.5,13.47 96.0,12.93 95.5,12.76 95.0,12.71 94.5,12.23 94.0,13.34 93.5,13.85 93.0,13.31 92.5,11.87 92.0,10.16 91.5,10.34 91.0,10.44 90.5,10.25 90.0,10.08 89.5,10.11 89.0,10.36 88.5,10.62 88.0,10.43 87.5,10.36 87.0,10.21 86.5,10.04 86.0,9.97 85.5,9.96 85.0,10.36 84.5,10.63 84.0,10.10 83.5,10.54 83.0,9.78 82.5,10.47 82.0,9.75 81.5,10.09 81.0,9.92 80.5,10.53 80.0,10.44 79.5,10.46 79.0,10.57 78.5,10.33 78.0,10.48 77.5,9.77 77.0,10.30 76.5,10.05 76.0,10.44 75.5,10.19 75.0,10.44 74.5,9.84 74.0,10.31 73.5,10.35 73.0,10.30 72.5,10.57 72.0,10.17 71.5,10.59 71.0,10.48 70.5,11.19 70.0,11.53 69.5,10.64 69.0,10.71 68.5,10.78 68.0,11.00 67.5,11.40 67.0,10.93 66.5,10.93 66.0,10.39 65.5,10.79 65.0,10.67 64.5,11.28 64.0,11.52 63.5,10.42 63.0,10.51 62.5,10.47 62.0,9.94 61.5,9.76 61.0,10.58 60.5,9.83 60.0,10.44 59.5,10.02 59.0,10.25 58.5,10.63 58.0,10.60 57.5,11.24 57.0,11.59 56.5,11.70 56.0,11.96 55.5,12.03 55.0,13.02 54.5,13.44 54.0,13.63 53.5,12.22 53.0,12.46 52.5,13.33 52.0,13.54 51.5,13.32 51.0,13.31 50.5,13.23 50.0,12.70 49.5,12.96 49.0,13.19 48.5,13.83 48.0,13.96 47.5,11.81 47.0,10.08 46.5,10.25 46.0,10.45 45.5,10.11 45.0,9.79 44.5,10.59 44.0,10.19 43.5,10.41 43.0,9.86 42.5,10.33 42.0,10.16 41.5,10.56 41.0,9.96 40.5,9.97 40.0,10.26 39.5,10.26 39.0,10.76 38.5,10.54 38.0,10.80 37.5,11.16 37.0,11.95 36.5,12.08 36.0,12.29 35.5,12.95 35.0,12.97 34.5,14.27 34.0,14.78 33.5,13.28 33.0,12.99 32.5,14.20 32.0,14.16 31.5,14.76 31.0,14.23 30.5,12.96 30.0,13.26 29.5,13.04 29.0,13.44 28.5,14.20 28.0,13.99 27.5,12.07 27.0,9.86 26.5,10.18 26.0,9.79 25.5,9.79 25.0,9.98 24.5,9.93 24.0,9.91 23.5,10.00 23.0,9.92 22.5,10.60 22.0,10.33 21.5,9.86 21.0,10.17 20.5,9.87 20.0,10.63 19.5,10.01 19.0,10.30 18.5,10.44 18.0,10.60 17.5,10.28 17.0,10.22 16.5,10.61 16.0,10.16 15.5,10.55 15.0,10.25 14.5,10.44 14.0,10.60 13.5,10.58 13.0,10.97 12.5,11.35 12.0,11.37 11.5,10.92 11.0,11.14 10.5,11.24 10.0,11.32 9.5,11.80 9.0,11.21 8.5,11.33 8.0,10.60 7.5,10.83 7.0,11.46 6.5,11.64 6.0,11.63 5.5,10.60 5.0,10.23 4.5,10.25 4.0,9.91 3.5,9.97 3.0,10.47 2.5,10.30 2.0,10.27 1.5,9.86 1.0,9.99 0.5,9.89 0.0,10.17"/></g></svg>
<div class="a" style="left:716.52px;top:305.05px;width:253.76px;height:31.45px;background:linear-gradient(#90aad0,#809cc4 35%,#7090b8);border:1px solid #18202c;border-radius:2.5px;box-shadow:inset 1px 1px 0 rgba(255,255,255,.25);"></div>
<div class="t" style="left:719.3199999999999px;top:306.65px;font-size:6px;color:#2e3c54;transform:scaleX(.88);transform-origin:0 0">shabwey_Strings_f_sharp_140.1 <span style="font-size:5px">&#9901;</span></div>
<svg class="a" style="left:717.52px;top:315.35px;" width="251.76" height="15" viewBox="0 0 251.76 15"><g fill="#323f54"><polygon points="0.0,4.74 0.5,4.71 1.0,4.40 1.5,4.51 2.0,4.88 2.5,4.61 3.0,4.81 3.5,5.17 4.0,5.11 4.5,4.43 5.0,4.35 5.5,4.46 6.0,3.38 6.5,3.76 7.0,3.66 7.5,4.19 8.0,4.15 8.5,3.91 9.0,3.72 9.5,3.19 10.0,3.24 10.5,3.58 11.0,3.77 11.5,4.42 12.0,3.42 12.5,3.89 13.0,3.96 13.5,4.28 14.0,4.30 14.5,4.43 15.0,4.58 15.5,4.36 16.0,4.95 16.5,4.50 17.0,4.57 17.5,4.98 18.0,4.50 18.5,4.64 19.0,4.71 19.5,4.60 20.0,4.81 20.5,5.04 21.0,4.68 21.5,5.03 22.0,4.45 22.5,5.19 23.0,4.77 23.5,4.91 24.0,4.65 24.5,4.49 25.0,4.95 25.5,4.94 26.0,4.62 26.5,4.53 27.0,4.47 27.5,3.15 28.0,0.54 28.5,0.96 29.0,1.05 29.5,1.65 30.0,1.71 30.5,1.41 31.0,0.47 31.5,0.08 32.0,0.10 32.5,1.17 33.0,1.33 33.5,1.67 34.0,1.10 34.5,1.07 35.0,1.64 35.5,2.00 36.0,2.82 36.5,2.65 37.0,3.26 37.5,3.55 38.0,3.71 38.5,4.18 39.0,4.32 39.5,4.37 40.0,4.96 40.5,4.82 41.0,4.62 41.5,4.98 42.0,4.49 42.5,4.57 43.0,5.21 43.5,4.55 44.0,5.03 44.5,5.03 45.0,4.86 45.5,5.18 46.0,4.89 46.5,4.76 47.0,4.84 47.5,3.38 48.0,1.57 48.5,1.10 49.0,2.33 49.5,2.70 50.0,2.15 50.5,2.29 51.0,1.84 51.5,1.35 52.0,1.52 52.5,1.61 53.0,2.30 53.5,2.75 54.0,1.18 54.5,1.55 55.0,2.50 55.5,2.33 56.0,3.03 56.5,3.08 57.0,3.66 57.5,4.24 58.0,4.06 58.5,4.52 59.0,4.76 59.5,4.35 60.0,4.90 60.5,5.18 61.0,5.08 61.5,4.52 62.0,5.07 62.5,5.12 63.0,5.14 63.5,4.50 64.0,3.95 64.5,3.73 65.0,4.22 65.5,4.49 66.0,4.21 66.5,4.20 67.0,3.70 67.5,3.76 68.0,3.44 68.5,4.05 69.0,4.46 69.5,4.56 70.0,3.49 70.5,4.14 71.0,4.04 71.5,4.46 72.0,4.89 72.5,4.99 73.0,4.49 73.5,5.04 74.0,5.24 74.5,5.05 75.0,5.09 75.5,5.07 76.0,5.13 76.5,4.72 77.0,4.87 77.5,4.68 78.0,4.54 78.5,4.64 79.0,4.85 79.5,4.60 80.0,4.70 80.5,4.76 81.0,4.35 81.5,4.83 82.0,5.10 82.5,4.94 83.0,4.80 83.5,4.66 84.0,5.18 84.5,4.49 85.0,4.74 85.5,5.21 86.0,4.69 86.5,4.58 87.0,4.60 87.5,5.01 88.0,4.96 88.5,4.79 89.0,4.71 89.5,4.99 90.0,5.11 90.5,4.58 91.0,5.22 91.5,4.92 92.0,4.60 92.5,3.60 93.0,1.08 93.5,1.26 94.0,1.80 94.5,2.31 95.0,2.69 95.5,1.97 96.0,1.30 96.5,1.35 97.0,1.58 97.5,1.34 98.0,2.64 98.5,2.24 99.0,1.75 99.5,1.36 100.0,1.90 100.5,3.00 101.0,3.37 101.5,3.66 102.0,3.71 102.5,4.15 103.0,4.24 103.5,4.36 104.0,4.67 104.5,5.01 105.0,4.38 105.5,4.47 106.0,4.45 106.5,2.76 107.0,1.08 107.5,0.49 108.0,1.07 108.5,1.72 109.0,1.98 109.5,2.01 110.0,0.52 110.5,0.93 111.0,1.21 111.5,0.77 112.0,1.30 112.5,2.03 113.0,0.93 113.5,1.28 114.0,1.97 114.5,2.11 115.0,2.38 115.5,3.24 116.0,3.01 116.5,3.48 117.0,4.16 117.5,4.18 118.0,4.36 118.5,4.78 119.0,4.76 119.5,4.89 120.0,4.65 120.5,4.53 121.0,4.42 121.5,4.35 122.0,4.60 122.5,4.70 123.0,5.01 123.5,4.38 124.0,4.35 124.5,5.24 125.0,5.18 125.5,4.60 126.0,3.50 126.5,3.71 127.0,3.99 127.5,4.29 128.0,4.23 128.5,3.66 129.0,3.44 129.5,3.47 130.0,3.07 130.5,3.46 131.0,4.17 131.5,4.40 132.0,3.05 132.5,3.91 133.0,4.21 133.5,4.22 134.0,4.60 134.5,4.40 135.0,4.47 135.5,4.79 136.0,5.02 136.5,4.39 137.0,4.46 137.5,5.12 138.0,4.80 138.5,5.11 139.0,4.89 139.5,4.72 140.0,5.01 140.5,5.02 141.0,4.75 141.5,4.51 142.0,4.80 142.5,3.68 143.0,1.32 143.5,1.77 144.0,2.44 144.5,2.79 145.0,2.93 145.5,2.48 146.0,2.05 146.5,1.38 147.0,1.66 147.5,1.95 148.0,2.23 148.5,2.65 149.0,1.62 149.5,1.71 150.0,2.79 150.5,2.99 151.0,3.11 151.5,3.60 152.0,3.82 152.5,4.33 153.0,4.24 153.5,4.84 154.0,4.47 154.5,4.96 155.0,4.70 155.5,4.85 156.0,4.98 156.5,4.25 157.0,2.30 157.5,3.01 158.0,3.28 158.5,3.50 159.0,3.63 159.5,3.44 160.0,3.02 160.5,2.33 161.0,2.97 161.5,3.31 162.0,3.58 162.5,3.61 163.0,2.35 163.5,2.69 164.0,3.30 164.5,3.83 165.0,3.74 165.5,4.40 166.0,4.75 166.5,4.40 167.0,4.50 167.5,4.52 168.0,4.58 168.5,4.77 169.0,4.91 169.5,4.95 170.0,4.70 170.5,4.50 171.0,4.54 171.5,5.00 172.0,4.59 172.5,5.24 173.0,4.71 173.5,4.54 174.0,4.44 174.5,3.97 175.0,1.94 175.5,2.43 176.0,2.90 176.5,2.66 177.0,3.15 177.5,3.09 178.0,2.44 178.5,1.58 179.0,2.20 179.5,2.53 180.0,2.72 180.5,3.24 181.0,2.26 181.5,2.08 182.0,2.55 182.5,3.33 183.0,3.76 183.5,4.05 184.0,4.17 184.5,4.41 185.0,4.63 185.5,4.70 186.0,4.49 186.5,5.11 187.0,5.13 187.5,4.71 188.0,4.67 188.5,5.19 189.0,4.86 189.5,4.73 190.0,4.87 190.5,3.33 191.0,1.92 191.5,1.45 192.0,2.54 192.5,2.50 193.0,2.52 193.5,2.23 194.0,1.68 194.5,1.72 195.0,1.92 195.5,1.85 196.0,2.70 196.5,3.05 197.0,1.61 197.5,2.35 198.0,2.35 198.5,3.19 199.0,3.35 199.5,3.66 200.0,3.69 200.5,4.48 201.0,4.40 201.5,4.61 202.0,4.82 202.5,4.38 203.0,4.51 203.5,4.94 204.0,4.92 204.5,4.45 205.0,4.69 205.5,4.56 206.0,4.81 206.5,4.99 207.0,5.12 207.5,5.18 208.0,4.56 208.5,4.80 209.0,4.65 209.5,4.35 210.0,4.45 210.5,5.03 211.0,4.71 211.5,4.40 212.0,4.71 212.5,4.60 213.0,5.21 213.5,4.99 214.0,4.76 214.5,4.37 215.0,4.49 215.5,4.59 216.0,4.63 216.5,4.93 217.0,4.87 217.5,5.05 218.0,5.19 218.5,3.17 219.0,1.75 219.5,1.34 220.0,2.20 220.5,2.54 221.0,2.66 221.5,2.57 222.0,1.56 222.5,1.22 223.0,0.90 223.5,1.98 224.0,2.47 224.5,2.16 225.0,0.98 225.5,2.16 226.0,2.26 226.5,2.59 227.0,3.12 227.5,3.50 228.0,3.67 228.5,4.04 229.0,4.27 229.5,4.44 230.0,4.64 230.5,4.93 231.0,5.18 231.5,5.04 232.0,4.77 232.5,3.72 233.0,2.04 233.5,2.12 234.0,2.65 234.5,2.87 235.0,3.37 235.5,2.82 236.0,2.25 236.5,2.31 237.0,1.87 237.5,2.43 238.0,2.83 238.5,2.86 239.0,2.32 239.5,2.50 240.0,2.44 240.5,2.99 241.0,3.80 241.5,3.96 242.0,4.15 242.5,4.56 243.0,4.65 243.5,4.54 244.0,4.68 244.5,5.07 245.0,4.76 245.5,4.86 246.0,4.54 246.5,4.99 247.0,5.02 247.5,4.32 248.0,2.60 248.5,2.80 249.0,3.16 249.5,3.32 250.0,3.29 250.5,3.05 251.0,3.10 251.5,2.73 251.5,12.27 251.0,11.90 250.5,11.95 250.0,11.71 249.5,11.68 249.0,11.84 248.5,12.20 248.0,12.40 247.5,10.68 247.0,9.98 246.5,10.01 246.0,10.46 245.5,10.14 245.0,10.24 244.5,9.93 244.0,10.32 243.5,10.46 243.0,10.35 242.5,10.44 242.0,10.85 241.5,11.04 241.0,11.20 240.5,12.01 240.0,12.56 239.5,12.50 239.0,12.68 238.5,12.14 238.0,12.17 237.5,12.57 237.0,13.13 236.5,12.69 236.0,12.75 235.5,12.18 235.0,11.63 234.5,12.13 234.0,12.35 233.5,12.88 233.0,12.96 232.5,11.28 232.0,10.23 231.5,9.96 231.0,9.82 230.5,10.07 230.0,10.36 229.5,10.56 229.0,10.73 228.5,10.96 228.0,11.33 227.5,11.50 227.0,11.88 226.5,12.41 226.0,12.74 225.5,12.84 225.0,14.02 224.5,12.84 224.0,12.53 223.5,13.02 223.0,14.10 222.5,13.78 222.0,13.44 221.5,12.43 221.0,12.34 220.5,12.46 220.0,12.80 219.5,13.66 219.0,13.25 218.5,11.83 218.0,9.81 217.5,9.95 217.0,10.13 216.5,10.07 216.0,10.37 215.5,10.41 215.0,10.51 214.5,10.63 214.0,10.24 213.5,10.01 213.0,9.79 212.5,10.40 212.0,10.29 211.5,10.60 211.0,10.29 210.5,9.97 210.0,10.55 209.5,10.65 209.0,10.35 208.5,10.20 208.0,10.44 207.5,9.82 207.0,9.88 206.5,10.01 206.0,10.19 205.5,10.44 205.0,10.31 204.5,10.55 204.0,10.08 203.5,10.06 203.0,10.49 202.5,10.62 202.0,10.18 201.5,10.39 201.0,10.60 200.5,10.52 200.0,11.31 199.5,11.34 199.0,11.65 198.5,11.81 198.0,12.65 197.5,12.65 197.0,13.39 196.5,11.95 196.0,12.30 195.5,13.15 195.0,13.08 194.5,13.28 194.0,13.32 193.5,12.77 193.0,12.48 192.5,12.50 192.0,12.46 191.5,13.55 191.0,13.08 190.5,11.67 190.0,10.13 189.5,10.27 189.0,10.14 188.5,9.81 188.0,10.33 187.5,10.29 187.0,9.87 186.5,9.89 186.0,10.51 185.5,10.30 185.0,10.37 184.5,10.59 184.0,10.83 183.5,10.95 183.0,11.24 182.5,11.67 182.0,12.45 181.5,12.92 181.0,12.74 180.5,11.76 180.0,12.28 179.5,12.47 179.0,12.80 178.5,13.42 178.0,12.56 177.5,11.91 177.0,11.85 176.5,12.34 176.0,12.10 175.5,12.57 175.0,13.06 174.5,11.03 174.0,10.56 173.5,10.46 173.0,10.29 172.5,9.76 172.0,10.41 171.5,10.00 171.0,10.46 170.5,10.50 170.0,10.30 169.5,10.05 169.0,10.09 168.5,10.23 168.0,10.42 167.5,10.48 167.0,10.50 166.5,10.60 166.0,10.25 165.5,10.60 165.0,11.26 164.5,11.17 164.0,11.70 163.5,12.31 163.0,12.65 162.5,11.39 162.0,11.42 161.5,11.69 161.0,12.03 160.5,12.67 160.0,11.98 159.5,11.56 159.0,11.37 158.5,11.50 158.0,11.72 157.5,11.99 157.0,12.70 156.5,10.75 156.0,10.02 155.5,10.15 155.0,10.30 154.5,10.04 154.0,10.53 153.5,10.16 153.0,10.76 152.5,10.67 152.0,11.18 151.5,11.40 151.0,11.89 150.5,12.01 150.0,12.21 149.5,13.29 149.0,13.38 148.5,12.35 148.0,12.77 147.5,13.05 147.0,13.34 146.5,13.62 146.0,12.95 145.5,12.52 145.0,12.07 144.5,12.21 144.0,12.56 143.5,13.23 143.0,13.68 142.5,11.32 142.0,10.20 141.5,10.49 141.0,10.25 140.5,9.98 140.0,9.99 139.5,10.28 139.0,10.11 138.5,9.89 138.0,10.20 137.5,9.88 137.0,10.54 136.5,10.61 136.0,9.98 135.5,10.21 135.0,10.53 134.5,10.60 134.0,10.40 133.5,10.78 133.0,10.79 132.5,11.09 132.0,11.95 131.5,10.60 131.0,10.83 130.5,11.54 130.0,11.93 129.5,11.53 129.0,11.56 128.5,11.34 128.0,10.77 127.5,10.71 127.0,11.01 126.5,11.29 126.0,11.50 125.5,10.40 125.0,9.82 124.5,9.76 124.0,10.65 123.5,10.62 123.0,9.99 122.5,10.30 122.0,10.40 121.5,10.65 121.0,10.58 120.5,10.47 120.0,10.35 119.5,10.11 119.0,10.24 118.5,10.22 118.0,10.64 117.5,10.82 117.0,10.84 116.5,11.52 116.0,11.99 115.5,11.76 115.0,12.62 114.5,12.89 114.0,13.03 113.5,13.72 113.0,14.07 112.5,12.97 112.0,13.70 111.5,14.23 111.0,13.79 110.5,14.07 110.0,14.48 109.5,12.99 109.0,13.02 108.5,13.28 108.0,13.93 107.5,14.51 107.0,13.92 106.5,12.24 106.0,10.55 105.5,10.53 105.0,10.62 104.5,9.99 104.0,10.33 103.5,10.64 103.0,10.76 102.5,10.85 102.0,11.29 101.5,11.34 101.0,11.63 100.5,12.00 100.0,13.10 99.5,13.64 99.0,13.25 98.5,12.76 98.0,12.36 97.5,13.66 97.0,13.42 96.5,13.65 96.0,13.70 95.5,13.03 95.0,12.31 94.5,12.69 94.0,13.20 93.5,13.74 93.0,13.92 92.5,11.40 92.0,10.40 91.5,10.08 91.0,9.78 90.5,10.42 90.0,9.89 89.5,10.01 89.0,10.29 88.5,10.21 88.0,10.04 87.5,9.99 87.0,10.40 86.5,10.42 86.0,10.31 85.5,9.79 85.0,10.26 84.5,10.51 84.0,9.82 83.5,10.34 83.0,10.20 82.5,10.06 82.0,9.90 81.5,10.17 81.0,10.65 80.5,10.24 80.0,10.30 79.5,10.40 79.0,10.15 78.5,10.36 78.0,10.46 77.5,10.32 77.0,10.13 76.5,10.28 76.0,9.87 75.5,9.93 75.0,9.91 74.5,9.95 74.0,9.76 73.5,9.96 73.0,10.51 72.5,10.01 72.0,10.11 71.5,10.54 71.0,10.96 70.5,10.86 70.0,11.51 69.5,10.44 69.0,10.54 68.5,10.95 68.0,11.56 67.5,11.24 67.0,11.30 66.5,10.80 66.0,10.79 65.5,10.51 65.0,10.78 64.5,11.27 64.0,11.05 63.5,10.50 63.0,9.86 62.5,9.88 62.0,9.93 61.5,10.48 61.0,9.92 60.5,9.82 60.0,10.10 59.5,10.65 59.0,10.24 58.5,10.48 58.0,10.94 57.5,10.76 57.0,11.34 56.5,11.92 56.0,11.97 55.5,12.67 55.0,12.50 54.5,13.45 54.0,13.82 53.5,12.25 53.0,12.70 52.5,13.39 52.0,13.48 51.5,13.65 51.0,13.16 50.5,12.71 50.0,12.85 49.5,12.30 49.0,12.67 48.5,13.90 48.0,13.43 47.5,11.62 47.0,10.16 46.5,10.24 46.0,10.11 45.5,9.82 45.0,10.14 44.5,9.97 44.0,9.97 43.5,10.45 43.0,9.79 42.5,10.43 42.0,10.51 41.5,10.02 41.0,10.38 40.5,10.18 40.0,10.04 39.5,10.63 39.0,10.68 38.5,10.82 38.0,11.29 37.5,11.45 37.0,11.74 36.5,12.35 36.0,12.18 35.5,13.00 35.0,13.36 34.5,13.93 34.0,13.90 33.5,13.33 33.0,13.67 32.5,13.83 32.0,14.90 31.5,14.92 31.0,14.53 30.5,13.59 30.0,13.29 29.5,13.35 29.0,13.95 28.5,14.04 28.0,14.46 27.5,11.85 27.0,10.53 26.5,10.47 26.0,10.38 25.5,10.06 25.0,10.05 24.5,10.51 24.0,10.35 23.5,10.09 23.0,10.23 22.5,9.81 22.0,10.55 21.5,9.97 21.0,10.32 20.5,9.96 20.0,10.19 19.5,10.40 19.0,10.29 18.5,10.36 18.0,10.50 17.5,10.02 17.0,10.43 16.5,10.50 16.0,10.05 15.5,10.64 15.0,10.42 14.5,10.57 14.0,10.70 13.5,10.72 13.0,11.04 12.5,11.11 12.0,11.58 11.5,10.58 11.0,11.23 10.5,11.42 10.0,11.76 9.5,11.81 9.0,11.28 8.5,11.09 8.0,10.85 7.5,10.81 7.0,11.34 6.5,11.24 6.0,11.62 5.5,10.54 5.0,10.65 4.5,10.57 4.0,9.89 3.5,9.83 3.0,10.19 2.5,10.39 2.0,10.12 1.5,10.49 1.0,10.60 0.5,10.29 0.0,10.26"/></g></svg>
<div class="a" style="left:209.5px;top:336.3px;width:253.26px;height:31.45px;background:linear-gradient(#90aad0,#809cc4 35%,#7090b8);border:1px solid #18202c;border-radius:2.5px;box-shadow:inset 1px 1px 0 rgba(255,255,255,.25);"></div>
<div class="t" style="left:212.3px;top:337.90px;font-size:6px;color:#2e3c54;transform:scaleX(.88);transform-origin:0 0">shabwey_Vocoder_synth_f_sharp_140 <span style="font-size:5px">&#9901;</span></div>
<svg class="a" style="left:210.5px;top:350.5px;" width="251.26" height="10" viewBox="0 0 251.26 10"><g fill="#323f54"><polygon points="0.0,2.60 0.5,0.78 1.0,1.35 1.5,2.26 2.0,2.73 2.5,3.08 3.0,3.64 3.5,3.94 4.0,3.87 4.5,2.02 5.0,2.44 5.5,2.83 6.0,3.36 6.5,3.25 7.0,3.58 7.5,4.10 8.0,3.66 8.5,3.67 9.0,0.79 9.5,1.59 10.0,2.48 10.5,3.06 11.0,3.14 11.5,3.74 12.0,4.10 12.5,4.10 13.0,1.82 13.5,0.58 14.0,1.43 14.5,1.86 15.0,2.59 15.5,2.95 16.0,3.37 16.5,3.85 17.0,3.98 17.5,2.08 18.0,2.21 18.5,2.66 19.0,3.11 19.5,3.47 20.0,3.93 20.5,4.10 21.0,4.08 21.5,3.08 22.0,1.12 22.5,2.03 23.0,2.32 23.5,3.04 24.0,3.05 24.5,3.39 25.0,4.10 25.5,4.10 26.0,0.70 26.5,0.97 27.0,1.42 27.5,2.38 28.0,3.06 28.5,3.11 29.0,3.33 29.5,4.09 30.0,4.10 30.5,1.69 31.0,1.95 31.5,2.57 32.0,3.36 32.5,3.60 33.0,3.94 33.5,4.10 34.0,3.77 34.5,2.89 35.0,2.05 35.5,2.65 36.0,3.22 36.5,3.24 37.0,3.87 37.5,3.77 38.0,4.10 38.5,4.00 39.0,0.62 39.5,1.45 40.0,1.72 40.5,2.37 41.0,3.11 41.5,3.10 42.0,3.79 42.5,4.01 43.0,1.99 43.5,0.05 44.0,1.30 44.5,1.51 45.0,2.56 45.5,3.01 46.0,3.07 46.5,4.05 47.0,4.07 47.5,2.46 48.0,2.44 48.5,2.66 49.0,3.27 49.5,3.37 50.0,3.77 50.5,3.93 51.0,3.67 51.5,3.96 52.0,1.07 52.5,1.63 53.0,2.62 53.5,3.10 54.0,3.01 54.5,3.36 55.0,4.10 55.5,4.10 56.0,2.72 56.5,2.04 57.0,2.97 57.5,2.91 58.0,3.26 58.5,3.67 59.0,3.98 59.5,4.10 60.0,4.10 60.5,0.00 61.0,1.27 61.5,1.72 62.0,2.57 62.5,2.69 63.0,3.20 63.5,3.67 64.0,4.10 64.5,2.57 65.0,1.31 65.5,1.95 66.0,2.35 66.5,2.64 67.0,3.16 67.5,3.66 68.0,3.70 68.5,4.10 69.0,1.45 69.5,1.30 70.0,1.91 70.5,2.71 71.0,3.10 71.5,3.35 72.0,3.52 72.5,4.10 73.0,4.03 73.5,1.60 74.0,2.13 74.5,2.79 75.0,3.14 75.5,3.49 76.0,4.00 76.5,4.10 77.0,4.10 77.5,1.79 78.0,1.09 78.5,1.64 79.0,2.77 79.5,2.85 80.0,3.30 80.5,3.44 81.0,4.06 81.5,3.65 82.0,0.20 82.5,0.89 83.0,1.54 83.5,2.06 84.0,2.64 84.5,3.05 85.0,3.31 85.5,3.70 86.0,3.41 86.5,2.08 87.0,2.46 87.5,2.88 88.0,3.48 88.5,3.51 89.0,3.68 89.5,3.91 90.0,3.88 90.5,1.65 91.0,1.52 91.5,2.14 92.0,2.97 92.5,3.04 93.0,3.14 93.5,3.47 94.0,3.81 94.5,4.02 95.0,0.26 95.5,1.23 96.0,2.01 96.5,2.32 97.0,3.22 97.5,3.17 98.0,4.10 98.5,3.89 99.0,2.54 99.5,2.03 100.0,2.32 100.5,2.90 101.0,3.20 101.5,3.31 102.0,3.94 102.5,4.10 103.0,4.07 103.5,1.59 104.0,2.49 104.5,2.99 105.0,2.94 105.5,3.40 106.0,3.77 106.5,3.70 107.0,4.05 107.5,2.48 108.0,1.00 108.5,1.65 109.0,2.05 109.5,2.49 110.0,2.91 110.5,3.52 111.0,3.90 111.5,4.06 112.0,0.75 112.5,0.53 113.0,1.18 113.5,1.84 114.0,2.47 114.5,2.75 115.0,3.50 115.5,4.10 116.0,3.98 116.5,1.97 117.0,2.59 117.5,2.93 118.0,3.17 118.5,3.55 119.0,3.89 119.5,3.75 120.0,3.66 120.5,2.23 121.0,1.68 121.5,2.37 122.0,2.40 122.5,3.32 123.0,3.26 123.5,3.61 124.0,4.06 124.5,3.78 125.0,2.24 125.5,2.73 126.0,2.98 126.5,3.59 127.0,3.39 127.5,3.97 128.0,4.10 128.5,4.10 129.0,2.37 129.5,0.62 130.0,1.35 130.5,2.00 131.0,2.44 131.5,2.77 132.0,3.27 132.5,4.10 133.0,3.96 133.5,1.56 134.0,1.66 134.5,2.06 135.0,2.45 135.5,3.21 136.0,3.49 136.5,3.72 137.0,3.83 137.5,3.94 138.0,0.57 138.5,1.31 139.0,2.19 139.5,2.47 140.0,2.82 140.5,3.64 141.0,3.69 141.5,3.82 142.0,2.92 142.5,2.11 143.0,2.54 143.5,2.79 144.0,3.45 144.5,3.60 145.0,3.63 145.5,3.77 146.0,3.68 146.5,0.72 147.0,1.42 147.5,2.34 148.0,2.54 148.5,2.90 149.0,3.33 149.5,3.55 150.0,4.10 150.5,2.09 151.0,0.07 151.5,0.96 152.0,1.92 152.5,2.33 153.0,3.06 153.5,3.06 154.0,3.74 154.5,4.04 155.0,2.66 155.5,2.44 156.0,2.84 156.5,3.08 157.0,3.55 157.5,4.06 158.0,3.78 158.5,4.10 159.0,3.77 159.5,1.31 160.0,1.94 160.5,2.25 161.0,3.10 161.5,3.47 162.0,3.54 162.5,3.82 163.0,3.75 163.5,1.59 164.0,0.51 164.5,1.58 165.0,1.94 165.5,2.96 166.0,3.29 166.5,3.42 167.0,4.08 167.5,3.81 168.0,1.37 168.5,2.10 169.0,2.43 169.5,3.02 170.0,3.50 170.5,3.73 171.0,3.66 171.5,3.71 172.0,3.38 172.5,1.75 173.0,2.24 173.5,2.95 174.0,3.27 174.5,3.78 175.0,3.80 175.5,3.95 176.0,3.89 176.5,1.44 177.0,0.87 177.5,1.87 178.0,2.51 178.5,2.73 179.0,3.23 179.5,3.57 180.0,3.84 180.5,4.10 181.0,0.00 181.5,0.95 182.0,1.39 182.5,2.03 183.0,2.91 183.5,3.18 184.0,4.10 184.5,3.99 185.0,2.51 185.5,1.84 186.0,2.63 186.5,3.15 187.0,3.56 187.5,3.57 188.0,3.60 188.5,4.10 189.0,3.78 189.5,1.24 190.0,1.90 190.5,2.48 191.0,2.69 191.5,3.30 192.0,3.58 192.5,3.67 193.0,4.10 193.5,3.19 194.0,2.42 194.5,2.69 195.0,3.26 195.5,3.61 196.0,3.67 196.5,3.93 197.0,4.02 197.5,4.00 198.0,0.93 198.5,1.15 199.0,1.89 199.5,2.24 200.0,2.72 200.5,3.17 201.0,3.28 201.5,3.88 202.0,3.74 202.5,1.04 203.0,1.51 203.5,2.09 204.0,2.53 204.5,3.27 205.0,3.58 205.5,3.70 206.0,4.10 206.5,1.57 207.0,0.76 207.5,1.97 208.0,2.50 208.5,2.69 209.0,3.35 209.5,3.75 210.0,3.75 210.5,4.00 211.0,1.53 211.5,2.53 212.0,2.85 212.5,3.07 213.0,3.78 213.5,3.92 214.0,3.82 214.5,3.70 215.0,2.42 215.5,1.28 216.0,1.79 216.5,2.23 217.0,2.85 217.5,3.12 218.0,3.71 218.5,4.10 219.0,4.10 219.5,1.02 220.0,0.71 220.5,1.54 221.0,2.14 221.5,2.91 222.0,3.29 222.5,3.61 223.0,3.75 223.5,3.66 224.0,1.82 224.5,2.85 225.0,3.29 225.5,3.10 226.0,3.66 226.5,3.70 227.0,4.05 227.5,3.97 228.0,2.19 228.5,1.47 229.0,2.03 229.5,2.92 230.0,2.92 230.5,3.18 231.0,3.84 231.5,3.98 232.0,3.81 232.5,0.26 233.0,1.30 233.5,2.04 234.0,2.42 234.5,3.18 235.0,3.02 235.5,3.37 236.0,3.83 236.5,2.86 237.0,1.65 237.5,2.39 238.0,2.76 238.5,3.20 239.0,3.21 239.5,3.56 240.0,4.10 240.5,3.70 241.0,2.05 241.5,2.03 242.0,2.52 242.5,3.17 243.0,3.20 243.5,3.46 244.0,3.78 244.5,3.79 245.0,3.79 245.5,0.70 246.0,1.33 246.5,2.38 247.0,2.74 247.5,3.08 248.0,3.69 248.5,4.04 249.0,3.87 249.5,1.29 250.0,0.50 250.5,0.96 251.0,1.83 251.0,8.17 250.5,9.04 250.0,9.50 249.5,8.71 249.0,6.13 248.5,5.96 248.0,6.31 247.5,6.92 247.0,7.26 246.5,7.62 246.0,8.67 245.5,9.30 245.0,6.21 244.5,6.21 244.0,6.22 243.5,6.54 243.0,6.80 242.5,6.83 242.0,7.48 241.5,7.97 241.0,7.95 240.5,6.30 240.0,5.90 239.5,6.44 239.0,6.79 238.5,6.80 238.0,7.24 237.5,7.61 237.0,8.35 236.5,7.14 236.0,6.17 235.5,6.63 235.0,6.98 234.5,6.82 234.0,7.58 233.5,7.96 233.0,8.70 232.5,9.74 232.0,6.19 231.5,6.02 231.0,6.16 230.5,6.82 230.0,7.08 229.5,7.08 229.0,7.97 228.5,8.53 228.0,7.81 227.5,6.03 227.0,5.95 226.5,6.30 226.0,6.34 225.5,6.90 225.0,6.71 224.5,7.15 224.0,8.18 223.5,6.34 223.0,6.25 222.5,6.39 222.0,6.71 221.5,7.09 221.0,7.86 220.5,8.46 220.0,9.29 219.5,8.98 219.0,5.90 218.5,5.90 218.0,6.29 217.5,6.88 217.0,7.15 216.5,7.77 216.0,8.21 215.5,8.72 215.0,7.58 214.5,6.30 214.0,6.18 213.5,6.08 213.0,6.22 212.5,6.93 212.0,7.15 211.5,7.47 211.0,8.47 210.5,6.00 210.0,6.25 209.5,6.25 209.0,6.65 208.5,7.31 208.0,7.50 207.5,8.03 207.0,9.24 206.5,8.43 206.0,5.90 205.5,6.30 205.0,6.42 204.5,6.73 204.0,7.47 203.5,7.91 203.0,8.49 202.5,8.96 202.0,6.26 201.5,6.12 201.0,6.72 200.5,6.83 200.0,7.28 199.5,7.76 199.0,8.11 198.5,8.85 198.0,9.07 197.5,6.00 197.0,5.98 196.5,6.07 196.0,6.33 195.5,6.39 195.0,6.74 194.5,7.31 194.0,7.58 193.5,6.81 193.0,5.90 192.5,6.33 192.0,6.42 191.5,6.70 191.0,7.31 190.5,7.52 190.0,8.10 189.5,8.76 189.0,6.22 188.5,5.90 188.0,6.40 187.5,6.43 187.0,6.44 186.5,6.85 186.0,7.37 185.5,8.16 185.0,7.49 184.5,6.01 184.0,5.90 183.5,6.82 183.0,7.09 182.5,7.97 182.0,8.61 181.5,9.05 181.0,10.00 180.5,5.90 180.0,6.16 179.5,6.43 179.0,6.77 178.5,7.27 178.0,7.49 177.5,8.13 177.0,9.13 176.5,8.56 176.0,6.11 175.5,6.05 175.0,6.20 174.5,6.22 174.0,6.73 173.5,7.05 173.0,7.76 172.5,8.25 172.0,6.62 171.5,6.29 171.0,6.34 170.5,6.27 170.0,6.50 169.5,6.98 169.0,7.57 168.5,7.90 168.0,8.63 167.5,6.19 167.0,5.92 166.5,6.58 166.0,6.71 165.5,7.04 165.0,8.06 164.5,8.42 164.0,9.49 163.5,8.41 163.0,6.25 162.5,6.18 162.0,6.46 161.5,6.53 161.0,6.90 160.5,7.75 160.0,8.06 159.5,8.69 159.0,6.23 158.5,5.90 158.0,6.22 157.5,5.94 157.0,6.45 156.5,6.92 156.0,7.16 155.5,7.56 155.0,7.34 154.5,5.96 154.0,6.26 153.5,6.94 153.0,6.94 152.5,7.67 152.0,8.08 151.5,9.04 151.0,9.93 150.5,7.91 150.0,5.90 149.5,6.45 149.0,6.67 148.5,7.10 148.0,7.46 147.5,7.66 147.0,8.58 146.5,9.28 146.0,6.32 145.5,6.23 145.0,6.37 144.5,6.40 144.0,6.55 143.5,7.21 143.0,7.46 142.5,7.89 142.0,7.08 141.5,6.18 141.0,6.31 140.5,6.36 140.0,7.18 139.5,7.53 139.0,7.81 138.5,8.69 138.0,9.43 137.5,6.06 137.0,6.17 136.5,6.28 136.0,6.51 135.5,6.79 135.0,7.55 134.5,7.94 134.0,8.34 133.5,8.44 133.0,6.04 132.5,5.90 132.0,6.73 131.5,7.23 131.0,7.56 130.5,8.00 130.0,8.65 129.5,9.38 129.0,7.63 128.5,5.90 128.0,5.90 127.5,6.03 127.0,6.61 126.5,6.41 126.0,7.02 125.5,7.27 125.0,7.76 124.5,6.22 124.0,5.94 123.5,6.39 123.0,6.74 122.5,6.68 122.0,7.60 121.5,7.63 121.0,8.32 120.5,7.77 120.0,6.34 119.5,6.25 119.0,6.11 118.5,6.45 118.0,6.83 117.5,7.07 117.0,7.41 116.5,8.03 116.0,6.02 115.5,5.90 115.0,6.50 114.5,7.25 114.0,7.53 113.5,8.16 113.0,8.82 112.5,9.47 112.0,9.25 111.5,5.94 111.0,6.10 110.5,6.48 110.0,7.09 109.5,7.51 109.0,7.95 108.5,8.35 108.0,9.00 107.5,7.52 107.0,5.95 106.5,6.30 106.0,6.23 105.5,6.60 105.0,7.06 104.5,7.01 104.0,7.51 103.5,8.41 103.0,5.93 102.5,5.90 102.0,6.06 101.5,6.69 101.0,6.80 100.5,7.10 100.0,7.68 99.5,7.97 99.0,7.46 98.5,6.11 98.0,5.90 97.5,6.83 97.0,6.78 96.5,7.68 96.0,7.99 95.5,8.77 95.0,9.74 94.5,5.98 94.0,6.19 93.5,6.53 93.0,6.86 92.5,6.96 92.0,7.03 91.5,7.86 91.0,8.48 90.5,8.35 90.0,6.12 89.5,6.09 89.0,6.32 88.5,6.49 88.0,6.52 87.5,7.12 87.0,7.54 86.5,7.92 86.0,6.59 85.5,6.30 85.0,6.69 84.5,6.95 84.0,7.36 83.5,7.94 83.0,8.46 82.5,9.11 82.0,9.80 81.5,6.35 81.0,5.94 80.5,6.56 80.0,6.70 79.5,7.15 79.0,7.23 78.5,8.36 78.0,8.91 77.5,8.21 77.0,5.90 76.5,5.90 76.0,6.00 75.5,6.51 75.0,6.86 74.5,7.21 74.0,7.87 73.5,8.40 73.0,5.97 72.5,5.90 72.0,6.48 71.5,6.65 71.0,6.90 70.5,7.29 70.0,8.09 69.5,8.70 69.0,8.55 68.5,5.90 68.0,6.30 67.5,6.34 67.0,6.84 66.5,7.36 66.0,7.65 65.5,8.05 65.0,8.69 64.5,7.43 64.0,5.90 63.5,6.33 63.0,6.80 62.5,7.31 62.0,7.43 61.5,8.28 61.0,8.73 60.5,10.00 60.0,5.90 59.5,5.90 59.0,6.02 58.5,6.33 58.0,6.74 57.5,7.09 57.0,7.03 56.5,7.96 56.0,7.28 55.5,5.90 55.0,5.90 54.5,6.64 54.0,6.99 53.5,6.90 53.0,7.38 52.5,8.37 52.0,8.93 51.5,6.04 51.0,6.33 50.5,6.07 50.0,6.23 49.5,6.63 49.0,6.73 48.5,7.34 48.0,7.56 47.5,7.54 47.0,5.93 46.5,5.95 46.0,6.93 45.5,6.99 45.0,7.44 44.5,8.49 44.0,8.70 43.5,9.95 43.0,8.01 42.5,5.99 42.0,6.21 41.5,6.90 41.0,6.89 40.5,7.63 40.0,8.28 39.5,8.55 39.0,9.38 38.5,6.00 38.0,5.90 37.5,6.23 37.0,6.13 36.5,6.76 36.0,6.78 35.5,7.35 35.0,7.95 34.5,7.11 34.0,6.23 33.5,5.90 33.0,6.06 32.5,6.40 32.0,6.64 31.5,7.43 31.0,8.05 30.5,8.31 30.0,5.90 29.5,5.91 29.0,6.67 28.5,6.89 28.0,6.94 27.5,7.62 27.0,8.58 26.5,9.03 26.0,9.30 25.5,5.90 25.0,5.90 24.5,6.61 24.0,6.95 23.5,6.96 23.0,7.68 22.5,7.97 22.0,8.88 21.5,6.92 21.0,5.92 20.5,5.90 20.0,6.07 19.5,6.53 19.0,6.89 18.5,7.34 18.0,7.79 17.5,7.92 17.0,6.02 16.5,6.15 16.0,6.63 15.5,7.05 15.0,7.41 14.5,8.14 14.0,8.57 13.5,9.42 13.0,8.18 12.5,5.90 12.0,5.90 11.5,6.26 11.0,6.86 10.5,6.94 10.0,7.52 9.5,8.41 9.0,9.21 8.5,6.33 8.0,6.34 7.5,5.90 7.0,6.42 6.5,6.75 6.0,6.64 5.5,7.17 5.0,7.56 4.5,7.98 4.0,6.13 3.5,6.06 3.0,6.36 2.5,6.92 2.0,7.27 1.5,7.74 1.0,8.65 0.5,9.22 0.0,7.40"/></g></svg>
<div class="a" style="left:716.52px;top:336.3px;width:253.76px;height:31.45px;background:linear-gradient(#90aad0,#809cc4 35%,#7090b8);border:1px solid #18202c;border-radius:2.5px;box-shadow:inset 1px 1px 0 rgba(255,255,255,.25);"></div>
<div class="t" style="left:719.3199999999999px;top:337.90px;font-size:6px;color:#2e3c54;transform:scaleX(.88);transform-origin:0 0">shabwey_Vocoder_synth_f_sharp_140.1 <span style="font-size:5px">&#9901;</span></div>
<svg class="a" style="left:717.52px;top:350.5px;" width="251.76" height="10" viewBox="0 0 251.76 10"><g fill="#323f54"><polygon points="0.0,2.59 0.5,0.72 1.0,1.51 1.5,2.45 2.0,3.03 2.5,3.21 3.0,3.59 3.5,3.76 4.0,3.84 4.5,2.14 5.0,2.16 5.5,2.61 6.0,3.33 6.5,3.47 7.0,3.89 7.5,3.65 8.0,4.10 8.5,3.76 9.0,1.13 9.5,1.54 10.0,2.37 10.5,2.82 11.0,2.95 11.5,3.76 12.0,4.10 12.5,3.70 13.0,1.53 13.5,0.80 14.0,1.11 14.5,1.80 15.0,2.84 15.5,3.08 16.0,3.59 16.5,4.06 17.0,3.88 17.5,2.15 18.0,2.39 18.5,3.22 19.0,3.51 19.5,3.40 20.0,3.88 20.5,4.05 21.0,3.89 21.5,2.84 22.0,1.35 22.5,2.25 23.0,2.39 23.5,2.69 24.0,3.03 24.5,3.50 25.0,4.04 25.5,4.03 26.0,0.84 26.5,0.84 27.0,1.94 27.5,2.48 28.0,2.88 28.5,3.18 29.0,3.31 29.5,3.95 30.0,4.10 30.5,1.40 31.0,2.27 31.5,2.72 32.0,3.30 32.5,3.49 33.0,3.77 33.5,3.79 34.0,4.10 34.5,2.67 35.0,2.28 35.5,2.50 36.0,3.32 36.5,3.51 37.0,3.74 37.5,3.78 38.0,4.10 38.5,3.97 39.0,0.62 39.5,1.44 40.0,2.02 40.5,2.28 41.0,3.00 41.5,3.06 42.0,3.81 42.5,3.70 43.0,2.28 43.5,0.32 44.0,0.91 44.5,1.55 45.0,2.69 45.5,3.00 46.0,3.07 46.5,4.04 47.0,4.10 47.5,2.49 48.0,2.47 48.5,2.64 49.0,2.82 49.5,3.14 50.0,3.69 50.5,4.10 51.0,4.06 51.5,3.78 52.0,0.92 52.5,1.76 53.0,2.59 53.5,2.87 54.0,3.27 54.5,3.47 55.0,4.09 55.5,3.68 56.0,2.63 56.5,2.50 57.0,2.91 57.5,2.95 58.0,3.62 58.5,3.47 59.0,3.92 59.5,3.83 60.0,3.83 60.5,0.37 61.0,1.24 61.5,1.99 62.0,2.31 62.5,2.77 63.0,3.48 63.5,3.32 64.0,4.00 64.5,2.86 65.0,1.09 65.5,1.50 66.0,2.35 66.5,2.78 67.0,2.98 67.5,3.25 68.0,3.79 68.5,4.00 69.0,1.11 69.5,0.92 70.0,1.70 70.5,2.40 71.0,3.00 71.5,3.35 72.0,3.42 72.5,3.91 73.0,4.10 73.5,1.71 74.0,2.17 74.5,2.70 75.0,3.01 75.5,3.30 76.0,3.76 76.5,3.78 77.0,4.02 77.5,2.27 78.0,1.30 78.5,2.03 79.0,2.22 79.5,2.82 80.0,3.27 80.5,3.51 81.0,4.10 81.5,3.93 82.0,0.00 82.5,0.98 83.0,1.84 83.5,2.35 84.0,2.89 84.5,3.06 85.0,3.70 85.5,4.10 86.0,3.44 86.5,2.07 87.0,2.54 87.5,3.01 88.0,3.17 88.5,3.77 89.0,4.10 89.5,3.96 90.0,3.98 90.5,1.77 91.0,1.47 91.5,2.30 92.0,2.87 92.5,3.22 93.0,3.17 93.5,3.99 94.0,4.03 94.5,4.08 95.0,0.58 95.5,1.31 96.0,2.14 96.5,2.27 97.0,2.97 97.5,3.20 98.0,4.10 98.5,3.97 99.0,2.47 99.5,1.66 100.0,2.59 100.5,2.92 101.0,3.05 101.5,3.36 102.0,3.95 102.5,3.93 103.0,3.79 103.5,1.76 104.0,2.21 104.5,2.70 105.0,2.90 105.5,3.46 106.0,3.63 106.5,4.02 107.0,3.81 107.5,2.68 108.0,0.82 108.5,1.69 109.0,2.35 109.5,2.96 110.0,3.30 110.5,3.43 111.0,4.10 111.5,4.10 112.0,0.35 112.5,0.66 113.0,1.12 113.5,1.99 114.0,2.66 114.5,2.80 115.0,3.12 115.5,4.06 116.0,4.10 116.5,1.75 117.0,2.21 117.5,2.82 118.0,3.08 118.5,3.60 119.0,3.71 119.5,4.09 120.0,4.01 120.5,2.27 121.0,1.50 121.5,2.15 122.0,2.44 122.5,3.24 123.0,3.56 123.5,3.80 124.0,3.67 124.5,3.94 125.0,2.22 125.5,2.31 126.0,2.73 126.5,3.12 127.0,3.68 127.5,3.68 128.0,4.10 128.5,4.10 129.0,2.23 129.5,0.39 130.0,1.60 130.5,1.86 131.0,2.91 131.5,3.16 132.0,3.67 132.5,4.10 133.0,4.10 133.5,1.24 134.0,1.49 134.5,2.23 135.0,2.77 135.5,3.13 136.0,3.14 136.5,3.57 137.0,4.10 137.5,3.84 138.0,0.62 138.5,1.50 139.0,2.11 139.5,2.56 140.0,2.88 140.5,3.39 141.0,3.87 141.5,3.97 142.0,2.62 142.5,2.15 143.0,2.67 143.5,3.03 144.0,3.25 144.5,3.78 145.0,3.60 145.5,3.96 146.0,3.74 146.5,0.59 147.0,1.24 147.5,2.05 148.0,2.72 148.5,3.14 149.0,3.35 149.5,3.52 150.0,3.75 150.5,2.55 151.0,0.63 151.5,1.48 152.0,2.20 152.5,2.77 153.0,3.25 153.5,3.46 154.0,4.10 154.5,3.84 155.0,2.34 155.5,2.13 156.0,2.60 156.5,3.10 157.0,3.27 157.5,4.06 158.0,4.10 158.5,3.69 159.0,3.96 159.5,1.29 160.0,1.69 160.5,2.47 161.0,2.86 161.5,3.37 162.0,3.70 162.5,4.10 163.0,3.89 163.5,1.43 164.0,0.48 164.5,1.41 165.0,1.95 165.5,2.80 166.0,3.24 166.5,3.19 167.0,3.89 167.5,3.85 168.0,1.74 168.5,2.27 169.0,2.65 169.5,2.92 170.0,3.20 170.5,3.50 171.0,3.97 171.5,4.02 172.0,2.98 172.5,1.67 173.0,2.53 173.5,3.14 174.0,3.24 174.5,3.57 175.0,3.90 175.5,4.10 176.0,4.02 176.5,1.09 177.0,1.38 177.5,1.85 178.0,2.18 178.5,2.76 179.0,3.42 179.5,3.61 180.0,4.10 180.5,3.81 181.0,0.00 181.5,1.09 182.0,1.64 182.5,2.23 183.0,2.73 183.5,3.24 184.0,4.06 184.5,4.04 185.0,2.40 185.5,2.18 186.0,2.61 186.5,3.06 187.0,3.57 187.5,3.71 188.0,4.04 188.5,4.06 189.0,4.03 189.5,1.04 190.0,1.45 190.5,2.44 191.0,2.90 191.5,3.09 192.0,3.56 192.5,3.73 193.0,3.86 193.5,3.58 194.0,2.09 194.5,2.94 195.0,3.26 195.5,3.24 196.0,3.39 196.5,3.79 197.0,4.10 197.5,3.99 198.0,1.08 198.5,0.74 199.0,1.87 199.5,2.50 200.0,2.72 200.5,3.11 201.0,3.44 201.5,3.96 202.0,3.67 202.5,0.90 203.0,1.39 203.5,2.34 204.0,2.79 204.5,3.24 205.0,3.34 205.5,3.80 206.0,4.10 206.5,1.85 207.0,0.86 207.5,1.74 208.0,2.25 208.5,2.76 209.0,3.08 209.5,3.60 210.0,4.07 210.5,4.10 211.0,1.47 211.5,2.14 212.0,2.86 212.5,2.90 213.0,3.25 213.5,3.95 214.0,3.73 214.5,4.00 215.0,2.81 215.5,1.19 216.0,1.84 216.5,2.65 217.0,3.12 217.5,3.46 218.0,3.64 218.5,4.10 219.0,4.10 219.5,0.54 220.0,0.81 220.5,1.55 221.0,2.13 221.5,2.44 222.0,3.32 222.5,3.59 223.0,3.73 223.5,3.70 224.0,1.81 224.5,2.59 225.0,3.11 225.5,3.56 226.0,3.39 226.5,3.70 227.0,3.92 227.5,3.78 228.0,2.34 228.5,1.41 229.0,1.85 229.5,2.86 230.0,2.97 230.5,3.57 231.0,3.45 231.5,3.75 232.0,3.86 232.5,0.24 233.0,1.40 233.5,1.85 234.0,2.51 234.5,2.95 235.0,3.51 235.5,3.30 236.0,3.94 236.5,3.04 237.0,1.53 237.5,2.10 238.0,2.79 238.5,3.17 239.0,3.30 239.5,3.82 240.0,3.71 240.5,4.10 241.0,2.02 241.5,2.18 242.0,2.63 242.5,2.82 243.0,3.60 243.5,3.75 244.0,3.72 244.5,3.80 245.0,3.94 245.5,0.47 246.0,1.36 246.5,1.90 247.0,2.56 247.5,3.15 248.0,3.52 248.5,4.10 249.0,4.10 249.5,1.64 250.0,0.05 250.5,1.44 251.0,1.87 251.5,2.71 251.5,7.29 251.0,8.13 250.5,8.56 250.0,9.95 249.5,8.36 249.0,5.90 248.5,5.90 248.0,6.48 247.5,6.85 247.0,7.44 246.5,8.10 246.0,8.64 245.5,9.53 245.0,6.06 244.5,6.20 244.0,6.28 243.5,6.25 243.0,6.40 242.5,7.18 242.0,7.37 241.5,7.82 241.0,7.98 240.5,5.90 240.0,6.29 239.5,6.18 239.0,6.70 238.5,6.83 238.0,7.21 237.5,7.90 237.0,8.47 236.5,6.96 236.0,6.06 235.5,6.70 235.0,6.49 234.5,7.05 234.0,7.49 233.5,8.15 233.0,8.60 232.5,9.76 232.0,6.14 231.5,6.25 231.0,6.55 230.5,6.43 230.0,7.03 229.5,7.14 229.0,8.15 228.5,8.59 228.0,7.66 227.5,6.22 227.0,6.08 226.5,6.30 226.0,6.61 225.5,6.44 225.0,6.89 224.5,7.41 224.0,8.19 223.5,6.30 223.0,6.27 222.5,6.41 222.0,6.68 221.5,7.56 221.0,7.87 220.5,8.45 220.0,9.19 219.5,9.46 219.0,5.90 218.5,5.90 218.0,6.36 217.5,6.54 217.0,6.88 216.5,7.35 216.0,8.16 215.5,8.81 215.0,7.19 214.5,6.00 214.0,6.27 213.5,6.05 213.0,6.75 212.5,7.10 212.0,7.14 211.5,7.86 211.0,8.53 210.5,5.90 210.0,5.93 209.5,6.40 209.0,6.92 208.5,7.24 208.0,7.75 207.5,8.26 207.0,9.14 206.5,8.15 206.0,5.90 205.5,6.20 205.0,6.66 204.5,6.76 204.0,7.21 203.5,7.66 203.0,8.61 202.5,9.10 202.0,6.33 201.5,6.04 201.0,6.56 200.5,6.89 200.0,7.28 199.5,7.50 199.0,8.13 198.5,9.26 198.0,8.92 197.5,6.01 197.0,5.90 196.5,6.21 196.0,6.61 195.5,6.76 195.0,6.74 194.5,7.06 194.0,7.91 193.5,6.42 193.0,6.14 192.5,6.27 192.0,6.44 191.5,6.91 191.0,7.10 190.5,7.56 190.0,8.55 189.5,8.96 189.0,5.97 188.5,5.94 188.0,5.96 187.5,6.29 187.0,6.43 186.5,6.94 186.0,7.39 185.5,7.82 185.0,7.60 184.5,5.96 184.0,5.94 183.5,6.76 183.0,7.27 182.5,7.77 182.0,8.36 181.5,8.91 181.0,10.00 180.5,6.19 180.0,5.90 179.5,6.39 179.0,6.58 178.5,7.24 178.0,7.82 177.5,8.15 177.0,8.62 176.5,8.91 176.0,5.98 175.5,5.90 175.0,6.10 174.5,6.43 174.0,6.76 173.5,6.86 173.0,7.47 172.5,8.33 172.0,7.02 171.5,5.98 171.0,6.03 170.5,6.50 170.0,6.80 169.5,7.08 169.0,7.35 168.5,7.73 168.0,8.26 167.5,6.15 167.0,6.11 166.5,6.81 166.0,6.76 165.5,7.20 165.0,8.05 164.5,8.59 164.0,9.52 163.5,8.57 163.0,6.11 162.5,5.90 162.0,6.30 161.5,6.63 161.0,7.14 160.5,7.53 160.0,8.31 159.5,8.71 159.0,6.04 158.5,6.31 158.0,5.90 157.5,5.94 157.0,6.73 156.5,6.90 156.0,7.40 155.5,7.87 155.0,7.66 154.5,6.16 154.0,5.90 153.5,6.54 153.0,6.75 152.5,7.23 152.0,7.80 151.5,8.52 151.0,9.37 150.5,7.45 150.0,6.25 149.5,6.48 149.0,6.65 148.5,6.86 148.0,7.28 147.5,7.95 147.0,8.76 146.5,9.41 146.0,6.26 145.5,6.04 145.0,6.40 144.5,6.22 144.0,6.75 143.5,6.97 143.0,7.33 142.5,7.85 142.0,7.38 141.5,6.03 141.0,6.13 140.5,6.61 140.0,7.12 139.5,7.44 139.0,7.89 138.5,8.50 138.0,9.38 137.5,6.16 137.0,5.90 136.5,6.43 136.0,6.86 135.5,6.87 135.0,7.23 134.5,7.77 134.0,8.51 133.5,8.76 133.0,5.90 132.5,5.90 132.0,6.33 131.5,6.84 131.0,7.09 130.5,8.14 130.0,8.40 129.5,9.61 129.0,7.77 128.5,5.90 128.0,5.90 127.5,6.32 127.0,6.32 126.5,6.88 126.0,7.27 125.5,7.69 125.0,7.78 124.5,6.06 124.0,6.33 123.5,6.20 123.0,6.44 122.5,6.76 122.0,7.56 121.5,7.85 121.0,8.50 120.5,7.73 120.0,5.99 119.5,5.91 119.0,6.29 118.5,6.40 118.0,6.92 117.5,7.18 117.0,7.79 116.5,8.25 116.0,5.90 115.5,5.94 115.0,6.88 114.5,7.20 114.0,7.34 113.5,8.01 113.0,8.88 112.5,9.34 112.0,9.65 111.5,5.90 111.0,5.90 110.5,6.57 110.0,6.70 109.5,7.04 109.0,7.65 108.5,8.31 108.0,9.18 107.5,7.32 107.0,6.19 106.5,5.98 106.0,6.37 105.5,6.54 105.0,7.10 104.5,7.30 104.0,7.79 103.5,8.24 103.0,6.21 102.5,6.07 102.0,6.05 101.5,6.64 101.0,6.95 100.5,7.08 100.0,7.41 99.5,8.34 99.0,7.53 98.5,6.03 98.0,5.90 97.5,6.80 97.0,7.03 96.5,7.73 96.0,7.86 95.5,8.69 95.0,9.42 94.5,5.92 94.0,5.97 93.5,6.01 93.0,6.83 92.5,6.78 92.0,7.13 91.5,7.70 91.0,8.53 90.5,8.23 90.0,6.02 89.5,6.04 89.0,5.90 88.5,6.23 88.0,6.83 87.5,6.99 87.0,7.46 86.5,7.93 86.0,6.56 85.5,5.90 85.0,6.30 84.5,6.94 84.0,7.11 83.5,7.65 83.0,8.16 82.5,9.02 82.0,10.00 81.5,6.07 81.0,5.90 80.5,6.49 80.0,6.73 79.5,7.18 79.0,7.78 78.5,7.97 78.0,8.70 77.5,7.73 77.0,5.98 76.5,6.22 76.0,6.24 75.5,6.70 75.0,6.99 74.5,7.30 74.0,7.83 73.5,8.29 73.0,5.90 72.5,6.09 72.0,6.58 71.5,6.65 71.0,7.00 70.5,7.60 70.0,8.30 69.5,9.08 69.0,8.89 68.5,6.00 68.0,6.21 67.5,6.75 67.0,7.02 66.5,7.22 66.0,7.65 65.5,8.50 65.0,8.91 64.5,7.14 64.0,6.00 63.5,6.68 63.0,6.52 62.5,7.23 62.0,7.69 61.5,8.01 61.0,8.76 60.5,9.63 60.0,6.17 59.5,6.17 59.0,6.08 58.5,6.53 58.0,6.38 57.5,7.05 57.0,7.09 56.5,7.50 56.0,7.37 55.5,6.32 55.0,5.91 54.5,6.53 54.0,6.73 53.5,7.13 53.0,7.41 52.5,8.24 52.0,9.08 51.5,6.22 51.0,5.94 50.5,5.90 50.0,6.31 49.5,6.86 49.0,7.18 48.5,7.36 48.0,7.53 47.5,7.51 47.0,5.90 46.5,5.96 46.0,6.93 45.5,7.00 45.0,7.31 44.5,8.45 44.0,9.09 43.5,9.68 43.0,7.72 42.5,6.30 42.0,6.19 41.5,6.94 41.0,7.00 40.5,7.72 40.0,7.98 39.5,8.56 39.0,9.38 38.5,6.03 38.0,5.90 37.5,6.22 37.0,6.26 36.5,6.49 36.0,6.68 35.5,7.50 35.0,7.72 34.5,7.33 34.0,5.90 33.5,6.21 33.0,6.23 32.5,6.51 32.0,6.70 31.5,7.28 31.0,7.73 30.5,8.60 30.0,5.90 29.5,6.05 29.0,6.69 28.5,6.82 28.0,7.12 27.5,7.52 27.0,8.06 26.5,9.16 26.0,9.16 25.5,5.97 25.0,5.96 24.5,6.50 24.0,6.97 23.5,7.31 23.0,7.61 22.5,7.75 22.0,8.65 21.5,7.16 21.0,6.11 20.5,5.95 20.0,6.12 19.5,6.60 19.0,6.49 18.5,6.78 18.0,7.61 17.5,7.85 17.0,6.12 16.5,5.94 16.0,6.41 15.5,6.92 15.0,7.16 14.5,8.20 14.0,8.89 13.5,9.20 13.0,8.47 12.5,6.30 12.0,5.90 11.5,6.24 11.0,7.05 10.5,7.18 10.0,7.63 9.5,8.46 9.0,8.87 8.5,6.24 8.0,5.90 7.5,6.35 7.0,6.11 6.5,6.53 6.0,6.67 5.5,7.39 5.0,7.84 4.5,7.86 4.0,6.16 3.5,6.24 3.0,6.41 2.5,6.79 2.0,6.97 1.5,7.55 1.0,8.49 0.5,9.28 0.0,7.41"/></g></svg>
<div class="a" style="left:209.5px;top:367.55px;width:126.88px;height:31.45px;background:linear-gradient(#90aad0,#809cc4 35%,#7090b8);border:1px solid #18202c;border-radius:2.5px;box-shadow:inset 1px 1px 0 rgba(255,255,255,.25);"></div>
<div class="t" style="left:212.3px;top:369.15px;font-size:6px;color:#2e3c54;transform:scaleX(.88);transform-origin:0 0">shabwey_lead_intro_bass1_f_sharp_140 <span style="font-size:5px">&#9901;</span></div>
<svg class="a" style="left:210.5px;top:384.45px;" width="124.88" height="5" viewBox="0 0 124.88 5"><g fill="#323f54"><polygon points="0.0,1.65 0.5,1.49 1.0,1.49 1.5,1.43 2.0,1.68 2.5,1.66 3.0,1.69 3.5,1.67 4.0,1.47 4.5,1.70 5.0,1.55 5.5,1.67 6.0,1.64 6.5,1.59 7.0,1.44 7.5,1.52 8.0,1.74 8.5,1.65 9.0,1.69 9.5,1.42 10.0,1.45 10.5,1.45 11.0,1.44 11.5,1.47 12.0,1.39 12.5,1.45 13.0,1.65 13.5,1.43 14.0,1.57 14.5,1.47 15.0,1.54 15.5,1.59 16.0,1.61 16.5,1.59 17.0,1.63 17.5,1.71 18.0,1.44 18.5,1.45 19.0,1.38 19.5,1.49 20.0,1.54 20.5,1.47 21.0,1.70 21.5,1.50 22.0,1.58 22.5,1.68 23.0,1.67 23.5,1.55 24.0,1.66 24.5,1.58 25.0,1.52 25.5,1.60 26.0,1.70 26.5,1.57 27.0,1.66 27.5,1.66 28.0,1.68 28.5,1.61 29.0,1.72 29.5,1.51 30.0,1.39 30.5,1.60 31.0,1.48 31.5,1.40 32.0,1.73 32.5,1.70 33.0,1.45 33.5,1.44 34.0,1.51 34.5,1.69 35.0,1.59 35.5,1.42 36.0,1.42 36.5,1.45 37.0,1.67 37.5,1.43 38.0,1.61 38.5,1.48 39.0,1.70 39.5,1.39 40.0,1.52 40.5,1.48 41.0,1.67 41.5,1.52 42.0,1.53 42.5,1.53 43.0,1.62 43.5,1.48 44.0,1.62 44.5,1.64 45.0,1.69 45.5,1.49 46.0,1.71 46.5,1.67 47.0,1.72 47.5,1.51 48.0,1.54 48.5,1.55 49.0,1.74 49.5,1.59 50.0,1.62 50.5,1.72 51.0,1.75 51.5,1.38 52.0,1.70 52.5,1.64 53.0,1.65 53.5,1.53 54.0,1.72 54.5,1.57 55.0,1.61 55.5,1.44 56.0,1.75 56.5,1.62 57.0,1.56 57.5,1.39 58.0,1.56 58.5,1.57 59.0,1.50 59.5,1.64 60.0,1.74 60.5,1.56 61.0,1.41 61.5,1.47 62.0,1.65 62.5,1.49 63.0,1.43 63.5,1.65 64.0,1.53 64.5,1.62 65.0,1.66 65.5,1.64 66.0,1.67 66.5,1.62 67.0,1.74 67.5,1.60 68.0,1.72 68.5,1.47 69.0,1.53 69.5,1.75 70.0,1.46 70.5,1.68 71.0,1.57 71.5,1.54 72.0,1.63 72.5,1.64 73.0,1.59 73.5,1.70 74.0,1.43 74.5,1.71 75.0,1.44 75.5,1.67 76.0,1.64 76.5,1.60 77.0,1.74 77.5,1.70 78.0,1.61 78.5,1.58 79.0,1.42 79.5,1.38 80.0,1.73 80.5,1.55 81.0,1.70 81.5,1.45 82.0,1.63 82.5,1.42 83.0,1.55 83.5,1.70 84.0,1.75 84.5,1.66 85.0,1.42 85.5,1.69 86.0,1.57 86.5,1.61 87.0,1.62 87.5,1.45 88.0,1.67 88.5,1.48 89.0,1.50 89.5,1.40 90.0,1.56 90.5,1.40 91.0,1.58 91.5,1.54 92.0,1.52 92.5,1.44 93.0,1.41 93.5,1.71 94.0,1.70 94.5,1.55 95.0,1.45 95.5,1.55 96.0,1.64 96.5,1.39 97.0,1.64 97.5,1.72 98.0,1.73 98.5,1.74 99.0,1.48 99.5,1.71 100.0,1.48 100.5,1.43 101.0,1.38 101.5,1.45 102.0,1.59 102.5,1.52 103.0,1.44 103.5,1.48 104.0,1.64 104.5,1.46 105.0,1.71 105.5,1.63 106.0,1.38 106.5,1.57 107.0,1.65 107.5,1.46 108.0,1.58 108.5,1.75 109.0,1.74 109.5,1.65 110.0,1.63 110.5,1.40 111.0,1.66 111.5,1.43 112.0,1.43 112.5,1.59 113.0,1.38 113.5,1.46 114.0,1.57 114.5,1.65 115.0,1.58 115.5,1.41 116.0,1.55 116.5,1.68 117.0,1.61 117.5,1.57 118.0,1.68 118.5,1.54 119.0,1.74 119.5,1.44 120.0,1.68 120.5,1.71 121.0,1.53 121.5,1.63 122.0,1.42 122.5,1.56 123.0,1.55 123.5,1.44 124.0,1.67 124.5,1.47 124.5,3.53 124.0,3.33 123.5,3.56 123.0,3.45 122.5,3.44 122.0,3.58 121.5,3.37 121.0,3.47 120.5,3.29 120.0,3.32 119.5,3.56 119.0,3.26 118.5,3.46 118.0,3.32 117.5,3.43 117.0,3.39 116.5,3.32 116.0,3.45 115.5,3.59 115.0,3.42 114.5,3.35 114.0,3.43 113.5,3.54 113.0,3.62 112.5,3.41 112.0,3.57 111.5,3.57 111.0,3.34 110.5,3.60 110.0,3.37 109.5,3.35 109.0,3.26 108.5,3.25 108.0,3.42 107.5,3.54 107.0,3.35 106.5,3.43 106.0,3.62 105.5,3.37 105.0,3.29 104.5,3.54 104.0,3.36 103.5,3.52 103.0,3.56 102.5,3.48 102.0,3.41 101.5,3.55 101.0,3.62 100.5,3.57 100.0,3.52 99.5,3.29 99.0,3.52 98.5,3.26 98.0,3.27 97.5,3.28 97.0,3.36 96.5,3.61 96.0,3.36 95.5,3.45 95.0,3.55 94.5,3.45 94.0,3.30 93.5,3.29 93.0,3.59 92.5,3.56 92.0,3.48 91.5,3.46 91.0,3.42 90.5,3.60 90.0,3.44 89.5,3.60 89.0,3.50 88.5,3.52 88.0,3.33 87.5,3.55 87.0,3.38 86.5,3.39 86.0,3.43 85.5,3.31 85.0,3.58 84.5,3.34 84.0,3.25 83.5,3.30 83.0,3.45 82.5,3.58 82.0,3.37 81.5,3.55 81.0,3.30 80.5,3.45 80.0,3.27 79.5,3.62 79.0,3.58 78.5,3.42 78.0,3.39 77.5,3.30 77.0,3.26 76.5,3.40 76.0,3.36 75.5,3.33 75.0,3.56 74.5,3.29 74.0,3.57 73.5,3.30 73.0,3.41 72.5,3.36 72.0,3.37 71.5,3.46 71.0,3.43 70.5,3.32 70.0,3.54 69.5,3.25 69.0,3.47 68.5,3.53 68.0,3.28 67.5,3.40 67.0,3.26 66.5,3.38 66.0,3.33 65.5,3.36 65.0,3.34 64.5,3.38 64.0,3.47 63.5,3.35 63.0,3.57 62.5,3.51 62.0,3.35 61.5,3.53 61.0,3.59 60.5,3.44 60.0,3.26 59.5,3.36 59.0,3.50 58.5,3.43 58.0,3.44 57.5,3.61 57.0,3.44 56.5,3.38 56.0,3.25 55.5,3.56 55.0,3.39 54.5,3.43 54.0,3.28 53.5,3.47 53.0,3.35 52.5,3.36 52.0,3.30 51.5,3.62 51.0,3.25 50.5,3.28 50.0,3.38 49.5,3.41 49.0,3.26 48.5,3.45 48.0,3.46 47.5,3.49 47.0,3.28 46.5,3.33 46.0,3.29 45.5,3.51 45.0,3.31 44.5,3.36 44.0,3.38 43.5,3.52 43.0,3.38 42.5,3.47 42.0,3.47 41.5,3.48 41.0,3.33 40.5,3.52 40.0,3.48 39.5,3.61 39.0,3.30 38.5,3.52 38.0,3.39 37.5,3.57 37.0,3.33 36.5,3.55 36.0,3.58 35.5,3.58 35.0,3.41 34.5,3.31 34.0,3.49 33.5,3.56 33.0,3.55 32.5,3.30 32.0,3.27 31.5,3.60 31.0,3.52 30.5,3.40 30.0,3.61 29.5,3.49 29.0,3.28 28.5,3.39 28.0,3.32 27.5,3.34 27.0,3.34 26.5,3.43 26.0,3.30 25.5,3.40 25.0,3.48 24.5,3.42 24.0,3.34 23.5,3.45 23.0,3.33 22.5,3.32 22.0,3.42 21.5,3.50 21.0,3.30 20.5,3.53 20.0,3.46 19.5,3.51 19.0,3.62 18.5,3.55 18.0,3.56 17.5,3.29 17.0,3.37 16.5,3.41 16.0,3.39 15.5,3.41 15.0,3.46 14.5,3.53 14.0,3.43 13.5,3.57 13.0,3.35 12.5,3.55 12.0,3.61 11.5,3.53 11.0,3.56 10.5,3.55 10.0,3.55 9.5,3.58 9.0,3.31 8.5,3.35 8.0,3.26 7.5,3.48 7.0,3.56 6.5,3.41 6.0,3.36 5.5,3.33 5.0,3.45 4.5,3.30 4.0,3.53 3.5,3.33 3.0,3.31 2.5,3.34 2.0,3.32 1.5,3.57 1.0,3.51 0.5,3.51 0.0,3.35"/></g></svg>
<div class="a" style="left:336.38px;top:367.55px;width:126.38px;height:31.45px;background:linear-gradient(#90aad0,#809cc4 35%,#7090b8);border:1px solid #18202c;border-radius:2.5px;box-shadow:inset 1px 1px 0 rgba(255,255,255,.25);"></div>
<div class="t" style="left:339.18px;top:369.15px;font-size:6px;color:#2e3c54;transform:scaleX(.88);transform-origin:0 0">shabwey_lead_intro_bass1_f_sharp_140.1 <span style="font-size:5px">&#9901;</span></div>
<svg class="a" style="left:337.38px;top:384.45px;" width="124.38" height="5" viewBox="0 0 124.38 5"><g fill="#323f54"><polygon points="0.0,1.71 0.5,1.49 1.0,1.51 1.5,1.40 2.0,1.65 2.5,1.65 3.0,1.47 3.5,1.50 4.0,1.64 4.5,1.49 5.0,1.60 5.5,1.46 6.0,1.71 6.5,1.67 7.0,1.41 7.5,1.62 8.0,1.65 8.5,1.45 9.0,1.51 9.5,1.69 10.0,1.54 10.5,1.50 11.0,1.69 11.5,1.51 12.0,1.70 12.5,1.62 13.0,1.72 13.5,1.67 14.0,1.38 14.5,1.60 15.0,1.38 15.5,1.59 16.0,1.52 16.5,1.42 17.0,1.49 17.5,1.71 18.0,1.53 18.5,1.51 19.0,1.68 19.5,1.71 20.0,1.42 20.5,1.56 21.0,1.68 21.5,1.58 22.0,1.67 22.5,1.45 23.0,1.56 23.5,1.71 24.0,1.44 24.5,1.72 25.0,1.64 25.5,1.74 26.0,1.47 26.5,1.71 27.0,1.55 27.5,1.72 28.0,1.57 28.5,1.49 29.0,1.55 29.5,1.58 30.0,1.57 30.5,1.59 31.0,1.53 31.5,1.71 32.0,1.57 32.5,1.66 33.0,1.43 33.5,1.40 34.0,1.73 34.5,1.70 35.0,1.49 35.5,1.54 36.0,1.74 36.5,1.49 37.0,1.40 37.5,1.59 38.0,1.62 38.5,1.54 39.0,1.40 39.5,1.65 40.0,1.64 40.5,1.68 41.0,1.51 41.5,1.57 42.0,1.65 42.5,1.60 43.0,1.74 43.5,1.63 44.0,1.38 44.5,1.53 45.0,1.64 45.5,1.40 46.0,1.62 46.5,1.66 47.0,1.74 47.5,1.70 48.0,1.68 48.5,1.66 49.0,1.42 49.5,1.65 50.0,1.66 50.5,1.52 51.0,1.41 51.5,1.64 52.0,1.46 52.5,1.61 53.0,1.54 53.5,1.53 54.0,1.40 54.5,1.47 55.0,1.56 55.5,1.43 56.0,1.61 56.5,1.61 57.0,1.39 57.5,1.55 58.0,1.46 58.5,1.63 59.0,1.41 59.5,1.52 60.0,1.66 60.5,1.40 61.0,1.57 61.5,1.62 62.0,1.65 62.5,1.71 63.0,1.67 63.5,1.49 64.0,1.70 64.5,1.65 65.0,1.58 65.5,1.55 66.0,1.61 66.5,1.46 67.0,1.65 67.5,1.61 68.0,1.59 68.5,1.70 69.0,1.67 69.5,1.70 70.0,1.48 70.5,1.70 71.0,1.50 71.5,1.67 72.0,1.51 72.5,1.50 73.0,1.62 73.5,1.40 74.0,1.50 74.5,1.54 75.0,1.73 75.5,1.60 76.0,1.65 76.5,1.57 77.0,1.40 77.5,1.43 78.0,1.73 78.5,1.49 79.0,1.40 79.5,1.55 80.0,1.71 80.5,1.42 81.0,1.59 81.5,1.38 82.0,1.42 82.5,1.44 83.0,1.40 83.5,1.72 84.0,1.45 84.5,1.64 85.0,1.70 85.5,1.61 86.0,1.53 86.5,1.75 87.0,1.58 87.5,1.46 88.0,1.56 88.5,1.55 89.0,1.64 89.5,1.39 90.0,1.66 90.5,1.49 91.0,1.51 91.5,1.75 92.0,1.38 92.5,1.66 93.0,1.38 93.5,1.40 94.0,1.41 94.5,1.43 95.0,1.60 95.5,1.58 96.0,1.62 96.5,1.40 97.0,1.74 97.5,1.70 98.0,1.39 98.5,1.45 99.0,1.49 99.5,1.39 100.0,1.55 100.5,1.44 101.0,1.58 101.5,1.41 102.0,1.72 102.5,1.59 103.0,1.53 103.5,1.45 104.0,1.59 104.5,1.49 105.0,1.39 105.5,1.59 106.0,1.68 106.5,1.74 107.0,1.43 107.5,1.57 108.0,1.60 108.5,1.56 109.0,1.70 109.5,1.67 110.0,1.66 110.5,1.65 111.0,1.43 111.5,1.66 112.0,1.72 112.5,1.42 113.0,1.54 113.5,1.74 114.0,1.50 114.5,1.49 115.0,1.51 115.5,1.46 116.0,1.59 116.5,1.67 117.0,1.47 117.5,1.52 118.0,1.49 118.5,1.68 119.0,1.61 119.5,1.49 120.0,1.61 120.5,1.52 121.0,1.57 121.5,1.47 122.0,1.62 122.5,1.56 123.0,1.44 123.5,1.63 124.0,1.68 124.0,3.32 123.5,3.37 123.0,3.56 122.5,3.44 122.0,3.38 121.5,3.53 121.0,3.43 120.5,3.48 120.0,3.39 119.5,3.51 119.0,3.39 118.5,3.32 118.0,3.51 117.5,3.48 117.0,3.53 116.5,3.33 116.0,3.41 115.5,3.54 115.0,3.49 114.5,3.51 114.0,3.50 113.5,3.26 113.0,3.46 112.5,3.58 112.0,3.28 111.5,3.34 111.0,3.57 110.5,3.35 110.0,3.34 109.5,3.33 109.0,3.30 108.5,3.44 108.0,3.40 107.5,3.43 107.0,3.57 106.5,3.26 106.0,3.32 105.5,3.41 105.0,3.61 104.5,3.51 104.0,3.41 103.5,3.55 103.0,3.47 102.5,3.41 102.0,3.28 101.5,3.59 101.0,3.42 100.5,3.56 100.0,3.45 99.5,3.61 99.0,3.51 98.5,3.55 98.0,3.61 97.5,3.30 97.0,3.26 96.5,3.60 96.0,3.38 95.5,3.42 95.0,3.40 94.5,3.57 94.0,3.59 93.5,3.60 93.0,3.62 92.5,3.34 92.0,3.62 91.5,3.25 91.0,3.49 90.5,3.51 90.0,3.34 89.5,3.61 89.0,3.36 88.5,3.45 88.0,3.44 87.5,3.54 87.0,3.42 86.5,3.25 86.0,3.47 85.5,3.39 85.0,3.30 84.5,3.36 84.0,3.55 83.5,3.28 83.0,3.60 82.5,3.56 82.0,3.58 81.5,3.62 81.0,3.41 80.5,3.58 80.0,3.29 79.5,3.45 79.0,3.60 78.5,3.51 78.0,3.27 77.5,3.57 77.0,3.60 76.5,3.43 76.0,3.35 75.5,3.40 75.0,3.27 74.5,3.46 74.0,3.50 73.5,3.60 73.0,3.38 72.5,3.50 72.0,3.49 71.5,3.33 71.0,3.50 70.5,3.30 70.0,3.52 69.5,3.30 69.0,3.33 68.5,3.30 68.0,3.41 67.5,3.39 67.0,3.35 66.5,3.54 66.0,3.39 65.5,3.45 65.0,3.42 64.5,3.35 64.0,3.30 63.5,3.51 63.0,3.33 62.5,3.29 62.0,3.35 61.5,3.38 61.0,3.43 60.5,3.60 60.0,3.34 59.5,3.48 59.0,3.59 58.5,3.37 58.0,3.54 57.5,3.45 57.0,3.61 56.5,3.39 56.0,3.39 55.5,3.57 55.0,3.44 54.5,3.53 54.0,3.60 53.5,3.47 53.0,3.46 52.5,3.39 52.0,3.54 51.5,3.36 51.0,3.59 50.5,3.48 50.0,3.34 49.5,3.35 49.0,3.58 48.5,3.34 48.0,3.32 47.5,3.30 47.0,3.26 46.5,3.34 46.0,3.38 45.5,3.60 45.0,3.36 44.5,3.47 44.0,3.62 43.5,3.37 43.0,3.26 42.5,3.40 42.0,3.35 41.5,3.43 41.0,3.49 40.5,3.32 40.0,3.36 39.5,3.35 39.0,3.60 38.5,3.46 38.0,3.38 37.5,3.41 37.0,3.60 36.5,3.51 36.0,3.26 35.5,3.46 35.0,3.51 34.5,3.30 34.0,3.27 33.5,3.60 33.0,3.57 32.5,3.34 32.0,3.43 31.5,3.29 31.0,3.47 30.5,3.41 30.0,3.43 29.5,3.42 29.0,3.45 28.5,3.51 28.0,3.43 27.5,3.28 27.0,3.45 26.5,3.29 26.0,3.53 25.5,3.26 25.0,3.36 24.5,3.28 24.0,3.56 23.5,3.29 23.0,3.44 22.5,3.55 22.0,3.33 21.5,3.42 21.0,3.32 20.5,3.44 20.0,3.58 19.5,3.29 19.0,3.32 18.5,3.49 18.0,3.47 17.5,3.29 17.0,3.51 16.5,3.58 16.0,3.48 15.5,3.41 15.0,3.62 14.5,3.40 14.0,3.62 13.5,3.33 13.0,3.28 12.5,3.38 12.0,3.30 11.5,3.49 11.0,3.31 10.5,3.50 10.0,3.46 9.5,3.31 9.0,3.49 8.5,3.55 8.0,3.35 7.5,3.38 7.0,3.59 6.5,3.33 6.0,3.29 5.5,3.54 5.0,3.40 4.5,3.51 4.0,3.36 3.5,3.50 3.0,3.53 2.5,3.35 2.0,3.35 1.5,3.60 1.0,3.49 0.5,3.51 0.0,3.29"/></g></svg>
<div class="a" style="left:716.52px;top:367.55px;width:126.88px;height:31.45px;background:linear-gradient(#90aad0,#809cc4 35%,#7090b8);border:1px solid #18202c;border-radius:2.5px;box-shadow:inset 1px 1px 0 rgba(255,255,255,.25);"></div>
<div class="t" style="left:719.3199999999999px;top:369.15px;font-size:6px;color:#2e3c54;transform:scaleX(.88);transform-origin:0 0">shabwey_lead_intro_bass1_f_sharp_140.2 <span style="font-size:5px">&#9901;</span></div>
<svg class="a" style="left:717.52px;top:384.45px;" width="124.88" height="5" viewBox="0 0 124.88 5"><g fill="#323f54"><polygon points="0.0,1.39 0.5,1.75 1.0,1.47 1.5,1.69 2.0,1.38 2.5,1.74 3.0,1.42 3.5,1.49 4.0,1.43 4.5,1.38 5.0,1.66 5.5,1.62 6.0,1.48 6.5,1.64 7.0,1.65 7.5,1.66 8.0,1.43 8.5,1.42 9.0,1.45 9.5,1.67 10.0,1.40 10.5,1.56 11.0,1.66 11.5,1.58 12.0,1.59 12.5,1.72 13.0,1.54 13.5,1.62 14.0,1.54 14.5,1.40 15.0,1.51 15.5,1.60 16.0,1.43 16.5,1.38 17.0,1.57 17.5,1.40 18.0,1.74 18.5,1.70 19.0,1.69 19.5,1.40 20.0,1.49 20.5,1.48 21.0,1.64 21.5,1.56 22.0,1.42 22.5,1.71 23.0,1.71 23.5,1.73 24.0,1.57 24.5,1.43 25.0,1.54 25.5,1.60 26.0,1.56 26.5,1.68 27.0,1.39 27.5,1.62 28.0,1.66 28.5,1.63 29.0,1.44 29.5,1.63 30.0,1.41 30.5,1.62 31.0,1.58 31.5,1.72 32.0,1.41 32.5,1.45 33.0,1.57 33.5,1.71 34.0,1.57 34.5,1.61 35.0,1.43 35.5,1.40 36.0,1.47 36.5,1.64 37.0,1.73 37.5,1.41 38.0,1.40 38.5,1.69 39.0,1.56 39.5,1.57 40.0,1.38 40.5,1.73 41.0,1.73 41.5,1.43 42.0,1.54 42.5,1.58 43.0,1.46 43.5,1.53 44.0,1.49 44.5,1.65 45.0,1.72 45.5,1.75 46.0,1.63 46.5,1.51 47.0,1.61 47.5,1.62 48.0,1.52 48.5,1.49 49.0,1.53 49.5,1.63 50.0,1.44 50.5,1.45 51.0,1.41 51.5,1.42 52.0,1.74 52.5,1.50 53.0,1.62 53.5,1.60 54.0,1.56 54.5,1.70 55.0,1.66 55.5,1.38 56.0,1.63 56.5,1.41 57.0,1.49 57.5,1.63 58.0,1.63 58.5,1.52 59.0,1.49 59.5,1.62 60.0,1.73 60.5,1.69 61.0,1.43 61.5,1.48 62.0,1.71 62.5,1.44 63.0,1.53 63.5,1.62 64.0,1.41 64.5,1.70 65.0,1.71 65.5,1.62 66.0,1.47 66.5,1.54 67.0,1.57 67.5,1.41 68.0,1.60 68.5,1.45 69.0,1.75 69.5,1.46 70.0,1.69 70.5,1.50 71.0,1.44 71.5,1.50 72.0,1.53 72.5,1.54 73.0,1.47 73.5,1.61 74.0,1.66 74.5,1.54 75.0,1.55 75.5,1.71 76.0,1.55 76.5,1.57 77.0,1.69 77.5,1.48 78.0,1.46 78.5,1.62 79.0,1.43 79.5,1.38 80.0,1.50 80.5,1.60 81.0,1.65 81.5,1.70 82.0,1.65 82.5,1.38 83.0,1.73 83.5,1.41 84.0,1.49 84.5,1.46 85.0,1.71 85.5,1.51 86.0,1.67 86.5,1.50 87.0,1.45 87.5,1.48 88.0,1.55 88.5,1.42 89.0,1.66 89.5,1.69 90.0,1.43 90.5,1.73 91.0,1.59 91.5,1.59 92.0,1.42 92.5,1.61 93.0,1.54 93.5,1.56 94.0,1.57 94.5,1.57 95.0,1.57 95.5,1.53 96.0,1.59 96.5,1.59 97.0,1.40 97.5,1.38 98.0,1.66 98.5,1.39 99.0,1.74 99.5,1.63 100.0,1.41 100.5,1.69 101.0,1.50 101.5,1.38 102.0,1.52 102.5,1.58 103.0,1.74 103.5,1.58 104.0,1.58 104.5,1.45 105.0,1.60 105.5,1.45 106.0,1.60 106.5,1.51 107.0,1.47 107.5,1.69 108.0,1.39 108.5,1.58 109.0,1.57 109.5,1.39 110.0,1.54 110.5,1.56 111.0,1.67 111.5,1.67 112.0,1.46 112.5,1.56 113.0,1.50 113.5,1.49 114.0,1.49 114.5,1.63 115.0,1.43 115.5,1.58 116.0,1.68 116.5,1.42 117.0,1.41 117.5,1.70 118.0,1.42 118.5,1.49 119.0,1.65 119.5,1.53 120.0,1.40 120.5,1.69 121.0,1.50 121.5,1.66 122.0,1.69 122.5,1.39 123.0,1.38 123.5,1.50 124.0,1.45 124.5,1.60 124.5,3.40 124.0,3.55 123.5,3.50 123.0,3.62 122.5,3.61 122.0,3.31 121.5,3.34 121.0,3.50 120.5,3.31 120.0,3.60 119.5,3.47 119.0,3.35 118.5,3.51 118.0,3.58 117.5,3.30 117.0,3.59 116.5,3.58 116.0,3.32 115.5,3.42 115.0,3.57 114.5,3.37 114.0,3.51 113.5,3.51 113.0,3.50 112.5,3.44 112.0,3.54 111.5,3.33 111.0,3.33 110.5,3.44 110.0,3.46 109.5,3.61 109.0,3.43 108.5,3.42 108.0,3.61 107.5,3.31 107.0,3.53 106.5,3.49 106.0,3.40 105.5,3.55 105.0,3.40 104.5,3.55 104.0,3.42 103.5,3.42 103.0,3.26 102.5,3.42 102.0,3.48 101.5,3.62 101.0,3.50 100.5,3.31 100.0,3.59 99.5,3.37 99.0,3.26 98.5,3.61 98.0,3.34 97.5,3.62 97.0,3.60 96.5,3.41 96.0,3.41 95.5,3.47 95.0,3.43 94.5,3.43 94.0,3.43 93.5,3.44 93.0,3.46 92.5,3.39 92.0,3.58 91.5,3.41 91.0,3.41 90.5,3.27 90.0,3.57 89.5,3.31 89.0,3.34 88.5,3.58 88.0,3.45 87.5,3.52 87.0,3.55 86.5,3.50 86.0,3.33 85.5,3.49 85.0,3.29 84.5,3.54 84.0,3.51 83.5,3.59 83.0,3.27 82.5,3.62 82.0,3.35 81.5,3.30 81.0,3.35 80.5,3.40 80.0,3.50 79.5,3.62 79.0,3.57 78.5,3.38 78.0,3.54 77.5,3.52 77.0,3.31 76.5,3.43 76.0,3.45 75.5,3.29 75.0,3.45 74.5,3.46 74.0,3.34 73.5,3.39 73.0,3.53 72.5,3.46 72.0,3.47 71.5,3.50 71.0,3.56 70.5,3.50 70.0,3.31 69.5,3.54 69.0,3.25 68.5,3.55 68.0,3.40 67.5,3.59 67.0,3.43 66.5,3.46 66.0,3.53 65.5,3.38 65.0,3.29 64.5,3.30 64.0,3.59 63.5,3.38 63.0,3.47 62.5,3.56 62.0,3.29 61.5,3.52 61.0,3.57 60.5,3.31 60.0,3.27 59.5,3.38 59.0,3.51 58.5,3.48 58.0,3.37 57.5,3.37 57.0,3.51 56.5,3.59 56.0,3.37 55.5,3.62 55.0,3.34 54.5,3.30 54.0,3.44 53.5,3.40 53.0,3.38 52.5,3.50 52.0,3.26 51.5,3.58 51.0,3.59 50.5,3.55 50.0,3.56 49.5,3.37 49.0,3.47 48.5,3.51 48.0,3.48 47.5,3.38 47.0,3.39 46.5,3.49 46.0,3.37 45.5,3.25 45.0,3.28 44.5,3.35 44.0,3.51 43.5,3.47 43.0,3.54 42.5,3.42 42.0,3.46 41.5,3.57 41.0,3.27 40.5,3.27 40.0,3.62 39.5,3.43 39.0,3.44 38.5,3.31 38.0,3.60 37.5,3.59 37.0,3.27 36.5,3.36 36.0,3.53 35.5,3.60 35.0,3.57 34.5,3.39 34.0,3.43 33.5,3.29 33.0,3.43 32.5,3.55 32.0,3.59 31.5,3.28 31.0,3.42 30.5,3.38 30.0,3.59 29.5,3.37 29.0,3.56 28.5,3.37 28.0,3.34 27.5,3.38 27.0,3.61 26.5,3.32 26.0,3.44 25.5,3.40 25.0,3.46 24.5,3.57 24.0,3.43 23.5,3.27 23.0,3.29 22.5,3.29 22.0,3.58 21.5,3.44 21.0,3.36 20.5,3.52 20.0,3.51 19.5,3.60 19.0,3.31 18.5,3.30 18.0,3.26 17.5,3.60 17.0,3.43 16.5,3.62 16.0,3.57 15.5,3.40 15.0,3.49 14.5,3.60 14.0,3.46 13.5,3.38 13.0,3.46 12.5,3.28 12.0,3.41 11.5,3.42 11.0,3.34 10.5,3.44 10.0,3.60 9.5,3.33 9.0,3.55 8.5,3.58 8.0,3.57 7.5,3.34 7.0,3.35 6.5,3.36 6.0,3.52 5.5,3.38 5.0,3.34 4.5,3.62 4.0,3.57 3.5,3.51 3.0,3.58 2.5,3.26 2.0,3.62 1.5,3.31 1.0,3.53 0.5,3.25 0.0,3.61"/></g></svg>
<div class="a" style="left:843.4px;top:367.55px;width:126.88px;height:31.45px;background:linear-gradient(#90aad0,#809cc4 35%,#7090b8);border:1px solid #18202c;border-radius:2.5px;box-shadow:inset 1px 1px 0 rgba(255,255,255,.25);"></div>
<div class="t" style="left:846.1999999999999px;top:369.15px;font-size:6px;color:#2e3c54;transform:scaleX(.88);transform-origin:0 0">shabwey_lead_intro_bass1_f_sharp_140.3 <span style="font-size:5px">&#9901;</span></div>
<svg class="a" style="left:844.4px;top:384.45px;" width="124.88" height="5" viewBox="0 0 124.88 5"><g fill="#323f54"><polygon points="0.0,1.61 0.5,1.57 1.0,1.59 1.5,1.58 2.0,1.60 2.5,1.50 3.0,1.65 3.5,1.51 4.0,1.75 4.5,1.64 5.0,1.62 5.5,1.70 6.0,1.47 6.5,1.63 7.0,1.45 7.5,1.39 8.0,1.65 8.5,1.41 9.0,1.45 9.5,1.50 10.0,1.74 10.5,1.58 11.0,1.51 11.5,1.64 12.0,1.67 12.5,1.63 13.0,1.65 13.5,1.45 14.0,1.62 14.5,1.59 15.0,1.51 15.5,1.39 16.0,1.64 16.5,1.73 17.0,1.38 17.5,1.44 18.0,1.45 18.5,1.55 19.0,1.66 19.5,1.69 20.0,1.64 20.5,1.58 21.0,1.73 21.5,1.49 22.0,1.48 22.5,1.75 23.0,1.43 23.5,1.57 24.0,1.41 24.5,1.57 25.0,1.45 25.5,1.58 26.0,1.52 26.5,1.56 27.0,1.74 27.5,1.70 28.0,1.66 28.5,1.60 29.0,1.61 29.5,1.55 30.0,1.50 30.5,1.60 31.0,1.63 31.5,1.56 32.0,1.39 32.5,1.46 33.0,1.50 33.5,1.44 34.0,1.66 34.5,1.71 35.0,1.72 35.5,1.70 36.0,1.75 36.5,1.52 37.0,1.41 37.5,1.71 38.0,1.49 38.5,1.40 39.0,1.46 39.5,1.69 40.0,1.51 40.5,1.65 41.0,1.68 41.5,1.75 42.0,1.55 42.5,1.41 43.0,1.71 43.5,1.69 44.0,1.60 44.5,1.74 45.0,1.58 45.5,1.48 46.0,1.58 46.5,1.74 47.0,1.74 47.5,1.68 48.0,1.50 48.5,1.40 49.0,1.56 49.5,1.71 50.0,1.67 50.5,1.59 51.0,1.71 51.5,1.71 52.0,1.59 52.5,1.43 53.0,1.66 53.5,1.42 54.0,1.42 54.5,1.59 55.0,1.67 55.5,1.68 56.0,1.50 56.5,1.44 57.0,1.43 57.5,1.67 58.0,1.59 58.5,1.74 59.0,1.64 59.5,1.64 60.0,1.70 60.5,1.72 61.0,1.38 61.5,1.64 62.0,1.56 62.5,1.55 63.0,1.57 63.5,1.53 64.0,1.56 64.5,1.57 65.0,1.72 65.5,1.51 66.0,1.50 66.5,1.48 67.0,1.63 67.5,1.58 68.0,1.45 68.5,1.48 69.0,1.73 69.5,1.62 70.0,1.69 70.5,1.48 71.0,1.60 71.5,1.60 72.0,1.67 72.5,1.58 73.0,1.48 73.5,1.51 74.0,1.67 74.5,1.60 75.0,1.52 75.5,1.73 76.0,1.41 76.5,1.74 77.0,1.52 77.5,1.69 78.0,1.39 78.5,1.49 79.0,1.67 79.5,1.56 80.0,1.43 80.5,1.43 81.0,1.50 81.5,1.51 82.0,1.47 82.5,1.41 83.0,1.56 83.5,1.52 84.0,1.45 84.5,1.56 85.0,1.67 85.5,1.53 86.0,1.62 86.5,1.48 87.0,1.47 87.5,1.41 88.0,1.71 88.5,1.74 89.0,1.40 89.5,1.48 90.0,1.38 90.5,1.44 91.0,1.39 91.5,1.69 92.0,1.68 92.5,1.52 93.0,1.47 93.5,1.71 94.0,1.39 94.5,1.66 95.0,1.67 95.5,1.59 96.0,1.68 96.5,1.72 97.0,1.72 97.5,1.74 98.0,1.69 98.5,1.50 99.0,1.46 99.5,1.46 100.0,1.59 100.5,1.47 101.0,1.71 101.5,1.43 102.0,1.60 102.5,1.70 103.0,1.61 103.5,1.68 104.0,1.47 104.5,1.61 105.0,1.74 105.5,1.68 106.0,1.72 106.5,1.39 107.0,1.60 107.5,1.46 108.0,1.53 108.5,1.60 109.0,1.48 109.5,1.54 110.0,1.73 110.5,1.38 111.0,1.62 111.5,1.51 112.0,1.59 112.5,1.39 113.0,1.69 113.5,1.73 114.0,1.73 114.5,1.60 115.0,1.43 115.5,1.58 116.0,1.40 116.5,1.70 117.0,1.39 117.5,1.69 118.0,1.42 118.5,1.68 119.0,1.53 119.5,1.52 120.0,1.39 120.5,1.60 121.0,1.43 121.5,1.73 122.0,1.41 122.5,1.56 123.0,1.55 123.5,1.39 124.0,1.63 124.5,1.52 124.5,3.48 124.0,3.37 123.5,3.61 123.0,3.45 122.5,3.44 122.0,3.59 121.5,3.27 121.0,3.57 120.5,3.40 120.0,3.61 119.5,3.48 119.0,3.47 118.5,3.32 118.0,3.58 117.5,3.31 117.0,3.61 116.5,3.30 116.0,3.60 115.5,3.42 115.0,3.57 114.5,3.40 114.0,3.27 113.5,3.27 113.0,3.31 112.5,3.61 112.0,3.41 111.5,3.49 111.0,3.38 110.5,3.62 110.0,3.27 109.5,3.46 109.0,3.52 108.5,3.40 108.0,3.47 107.5,3.54 107.0,3.40 106.5,3.61 106.0,3.28 105.5,3.32 105.0,3.26 104.5,3.39 104.0,3.53 103.5,3.32 103.0,3.39 102.5,3.30 102.0,3.40 101.5,3.57 101.0,3.29 100.5,3.53 100.0,3.41 99.5,3.54 99.0,3.54 98.5,3.50 98.0,3.31 97.5,3.26 97.0,3.28 96.5,3.28 96.0,3.32 95.5,3.41 95.0,3.33 94.5,3.34 94.0,3.61 93.5,3.29 93.0,3.53 92.5,3.48 92.0,3.32 91.5,3.31 91.0,3.61 90.5,3.56 90.0,3.62 89.5,3.52 89.0,3.60 88.5,3.26 88.0,3.29 87.5,3.59 87.0,3.53 86.5,3.52 86.0,3.38 85.5,3.47 85.0,3.33 84.5,3.44 84.0,3.55 83.5,3.48 83.0,3.44 82.5,3.59 82.0,3.53 81.5,3.49 81.0,3.50 80.5,3.57 80.0,3.57 79.5,3.44 79.0,3.33 78.5,3.51 78.0,3.61 77.5,3.31 77.0,3.48 76.5,3.26 76.0,3.59 75.5,3.27 75.0,3.48 74.5,3.40 74.0,3.33 73.5,3.49 73.0,3.52 72.5,3.42 72.0,3.33 71.5,3.40 71.0,3.40 70.5,3.52 70.0,3.31 69.5,3.38 69.0,3.27 68.5,3.52 68.0,3.55 67.5,3.42 67.0,3.37 66.5,3.52 66.0,3.50 65.5,3.49 65.0,3.28 64.5,3.43 64.0,3.44 63.5,3.47 63.0,3.43 62.5,3.45 62.0,3.44 61.5,3.36 61.0,3.62 60.5,3.28 60.0,3.30 59.5,3.36 59.0,3.36 58.5,3.26 58.0,3.41 57.5,3.33 57.0,3.57 56.5,3.56 56.0,3.50 55.5,3.32 55.0,3.33 54.5,3.41 54.0,3.58 53.5,3.58 53.0,3.34 52.5,3.57 52.0,3.41 51.5,3.29 51.0,3.29 50.5,3.41 50.0,3.33 49.5,3.29 49.0,3.44 48.5,3.60 48.0,3.50 47.5,3.32 47.0,3.26 46.5,3.26 46.0,3.42 45.5,3.52 45.0,3.42 44.5,3.26 44.0,3.40 43.5,3.31 43.0,3.29 42.5,3.59 42.0,3.45 41.5,3.25 41.0,3.32 40.5,3.35 40.0,3.49 39.5,3.31 39.0,3.54 38.5,3.60 38.0,3.51 37.5,3.29 37.0,3.59 36.5,3.48 36.0,3.25 35.5,3.30 35.0,3.28 34.5,3.29 34.0,3.34 33.5,3.56 33.0,3.50 32.5,3.54 32.0,3.61 31.5,3.44 31.0,3.37 30.5,3.40 30.0,3.50 29.5,3.45 29.0,3.39 28.5,3.40 28.0,3.34 27.5,3.30 27.0,3.26 26.5,3.44 26.0,3.48 25.5,3.42 25.0,3.55 24.5,3.43 24.0,3.59 23.5,3.43 23.0,3.57 22.5,3.25 22.0,3.52 21.5,3.51 21.0,3.27 20.5,3.42 20.0,3.36 19.5,3.31 19.0,3.34 18.5,3.45 18.0,3.55 17.5,3.56 17.0,3.62 16.5,3.27 16.0,3.36 15.5,3.61 15.0,3.49 14.5,3.41 14.0,3.38 13.5,3.55 13.0,3.35 12.5,3.37 12.0,3.33 11.5,3.36 11.0,3.49 10.5,3.42 10.0,3.26 9.5,3.50 9.0,3.55 8.5,3.59 8.0,3.35 7.5,3.61 7.0,3.55 6.5,3.37 6.0,3.53 5.5,3.30 5.0,3.38 4.5,3.36 4.0,3.25 3.5,3.49 3.0,3.35 2.5,3.50 2.0,3.40 1.5,3.42 1.0,3.41 0.5,3.43 0.0,3.39"/></g></svg>
<div class="a" style="left:209.5px;top:398.8px;width:126.88px;height:31.45px;background:linear-gradient(#90aad0,#809cc4 35%,#7090b8);border:1px solid #18202c;border-radius:2.5px;box-shadow:inset 1px 1px 0 rgba(255,255,255,.25);"></div>
<div class="t" style="left:212.3px;top:400.40px;font-size:6px;color:#2e3c54;transform:scaleX(.88);transform-origin:0 0">shabwey_lead_intro_bass2_f_sharp_140 <span style="font-size:5px">&#9901;</span></div>
<svg class="a" style="left:210.5px;top:415.7px;" width="124.88" height="5" viewBox="0 0 124.88 5"><g fill="#323f54"><polygon points="0.0,1.55 0.5,1.45 1.0,1.39 1.5,1.64 2.0,1.46 2.5,1.49 3.0,1.50 3.5,1.71 4.0,1.74 4.5,1.61 5.0,1.47 5.5,1.66 6.0,1.56 6.5,1.63 7.0,1.43 7.5,1.40 8.0,1.60 8.5,1.38 9.0,1.73 9.5,1.45 10.0,1.42 10.5,1.69 11.0,1.49 11.5,1.54 12.0,1.39 12.5,1.67 13.0,1.55 13.5,1.42 14.0,1.51 14.5,1.63 15.0,1.72 15.5,1.40 16.0,1.57 16.5,1.38 17.0,1.70 17.5,1.45 18.0,1.44 18.5,1.41 19.0,1.74 19.5,1.61 20.0,1.73 20.5,1.47 21.0,1.62 21.5,1.39 22.0,1.61 22.5,1.46 23.0,1.42 23.5,1.66 24.0,1.54 24.5,1.39 25.0,1.55 25.5,1.62 26.0,1.65 26.5,1.46 27.0,1.68 27.5,1.52 28.0,1.54 28.5,1.54 29.0,1.70 29.5,1.50 30.0,1.41 30.5,1.63 31.0,1.63 31.5,1.41 32.0,1.53 32.5,1.65 33.0,1.75 33.5,1.47 34.0,1.62 34.5,1.57 35.0,1.65 35.5,1.51 36.0,1.48 36.5,1.63 37.0,1.72 37.5,1.38 38.0,1.41 38.5,1.74 39.0,1.54 39.5,1.49 40.0,1.60 40.5,1.48 41.0,1.39 41.5,1.53 42.0,1.60 42.5,1.68 43.0,1.66 43.5,1.69 44.0,1.71 44.5,1.67 45.0,1.43 45.5,1.55 46.0,1.45 46.5,1.40 47.0,1.45 47.5,1.73 48.0,1.40 48.5,1.72 49.0,1.46 49.5,1.44 50.0,1.50 50.5,1.60 51.0,1.72 51.5,1.72 52.0,1.51 52.5,1.66 53.0,1.55 53.5,1.65 54.0,1.69 54.5,1.64 55.0,1.48 55.5,1.57 56.0,1.60 56.5,1.57 57.0,1.54 57.5,1.56 58.0,1.58 58.5,1.39 59.0,1.47 59.5,1.66 60.0,1.63 60.5,1.68 61.0,1.61 61.5,1.74 62.0,1.47 62.5,1.54 63.0,1.59 63.5,1.41 64.0,1.63 64.5,1.53 65.0,1.40 65.5,1.54 66.0,1.52 66.5,1.61 67.0,1.38 67.5,1.47 68.0,1.64 68.5,1.62 69.0,1.53 69.5,1.56 70.0,1.55 70.5,1.68 71.0,1.53 71.5,1.49 72.0,1.46 72.5,1.58 73.0,1.58 73.5,1.56 74.0,1.55 74.5,1.57 75.0,1.75 75.5,1.65 76.0,1.38 76.5,1.44 77.0,1.57 77.5,1.47 78.0,1.67 78.5,1.65 79.0,1.56 79.5,1.49 80.0,1.74 80.5,1.57 81.0,1.41 81.5,1.52 82.0,1.38 82.5,1.71 83.0,1.41 83.5,1.44 84.0,1.74 84.5,1.55 85.0,1.47 85.5,1.67 86.0,1.51 86.5,1.43 87.0,1.45 87.5,1.59 88.0,1.73 88.5,1.55 89.0,1.68 89.5,1.55 90.0,1.65 90.5,1.62 91.0,1.55 91.5,1.44 92.0,1.38 92.5,1.60 93.0,1.75 93.5,1.47 94.0,1.62 94.5,1.47 95.0,1.44 95.5,1.74 96.0,1.48 96.5,1.64 97.0,1.63 97.5,1.62 98.0,1.55 98.5,1.66 99.0,1.56 99.5,1.64 100.0,1.70 100.5,1.66 101.0,1.49 101.5,1.63 102.0,1.67 102.5,1.61 103.0,1.67 103.5,1.38 104.0,1.45 104.5,1.69 105.0,1.64 105.5,1.59 106.0,1.55 106.5,1.60 107.0,1.55 107.5,1.46 108.0,1.69 108.5,1.54 109.0,1.69 109.5,1.55 110.0,1.63 110.5,1.45 111.0,1.42 111.5,1.39 112.0,1.60 112.5,1.52 113.0,1.69 113.5,1.48 114.0,1.46 114.5,1.59 115.0,1.63 115.5,1.47 116.0,1.47 116.5,1.45 117.0,1.64 117.5,1.66 118.0,1.66 118.5,1.68 119.0,1.75 119.5,1.70 120.0,1.57 120.5,1.59 121.0,1.42 121.5,1.61 122.0,1.69 122.5,1.40 123.0,1.72 123.5,1.62 124.0,1.46 124.5,1.63 124.5,3.37 124.0,3.54 123.5,3.38 123.0,3.28 122.5,3.60 122.0,3.31 121.5,3.39 121.0,3.58 120.5,3.41 120.0,3.43 119.5,3.30 119.0,3.25 118.5,3.32 118.0,3.34 117.5,3.34 117.0,3.36 116.5,3.55 116.0,3.53 115.5,3.53 115.0,3.37 114.5,3.41 114.0,3.54 113.5,3.52 113.0,3.31 112.5,3.48 112.0,3.40 111.5,3.61 111.0,3.58 110.5,3.55 110.0,3.37 109.5,3.45 109.0,3.31 108.5,3.46 108.0,3.31 107.5,3.54 107.0,3.45 106.5,3.40 106.0,3.45 105.5,3.41 105.0,3.36 104.5,3.31 104.0,3.55 103.5,3.62 103.0,3.33 102.5,3.39 102.0,3.33 101.5,3.37 101.0,3.51 100.5,3.34 100.0,3.30 99.5,3.36 99.0,3.44 98.5,3.34 98.0,3.45 97.5,3.38 97.0,3.37 96.5,3.36 96.0,3.52 95.5,3.26 95.0,3.56 94.5,3.53 94.0,3.38 93.5,3.53 93.0,3.25 92.5,3.40 92.0,3.62 91.5,3.56 91.0,3.45 90.5,3.38 90.0,3.35 89.5,3.45 89.0,3.32 88.5,3.45 88.0,3.27 87.5,3.41 87.0,3.55 86.5,3.57 86.0,3.49 85.5,3.33 85.0,3.53 84.5,3.45 84.0,3.26 83.5,3.56 83.0,3.59 82.5,3.29 82.0,3.62 81.5,3.48 81.0,3.59 80.5,3.43 80.0,3.26 79.5,3.51 79.0,3.44 78.5,3.35 78.0,3.33 77.5,3.53 77.0,3.43 76.5,3.56 76.0,3.62 75.5,3.35 75.0,3.25 74.5,3.43 74.0,3.45 73.5,3.44 73.0,3.42 72.5,3.42 72.0,3.54 71.5,3.51 71.0,3.47 70.5,3.32 70.0,3.45 69.5,3.44 69.0,3.47 68.5,3.38 68.0,3.36 67.5,3.53 67.0,3.62 66.5,3.39 66.0,3.48 65.5,3.46 65.0,3.60 64.5,3.47 64.0,3.37 63.5,3.59 63.0,3.41 62.5,3.46 62.0,3.53 61.5,3.26 61.0,3.39 60.5,3.32 60.0,3.37 59.5,3.34 59.0,3.53 58.5,3.61 58.0,3.42 57.5,3.44 57.0,3.46 56.5,3.43 56.0,3.40 55.5,3.43 55.0,3.52 54.5,3.36 54.0,3.31 53.5,3.35 53.0,3.45 52.5,3.34 52.0,3.49 51.5,3.28 51.0,3.28 50.5,3.40 50.0,3.50 49.5,3.56 49.0,3.54 48.5,3.28 48.0,3.60 47.5,3.27 47.0,3.55 46.5,3.60 46.0,3.55 45.5,3.45 45.0,3.57 44.5,3.33 44.0,3.29 43.5,3.31 43.0,3.34 42.5,3.32 42.0,3.40 41.5,3.47 41.0,3.61 40.5,3.52 40.0,3.40 39.5,3.51 39.0,3.46 38.5,3.26 38.0,3.59 37.5,3.62 37.0,3.28 36.5,3.37 36.0,3.52 35.5,3.49 35.0,3.35 34.5,3.43 34.0,3.38 33.5,3.53 33.0,3.25 32.5,3.35 32.0,3.47 31.5,3.59 31.0,3.37 30.5,3.37 30.0,3.59 29.5,3.50 29.0,3.30 28.5,3.46 28.0,3.46 27.5,3.48 27.0,3.32 26.5,3.54 26.0,3.35 25.5,3.38 25.0,3.45 24.5,3.61 24.0,3.46 23.5,3.34 23.0,3.58 22.5,3.54 22.0,3.39 21.5,3.61 21.0,3.38 20.5,3.53 20.0,3.27 19.5,3.39 19.0,3.26 18.5,3.59 18.0,3.56 17.5,3.55 17.0,3.30 16.5,3.62 16.0,3.43 15.5,3.60 15.0,3.28 14.5,3.37 14.0,3.49 13.5,3.58 13.0,3.45 12.5,3.33 12.0,3.61 11.5,3.46 11.0,3.51 10.5,3.31 10.0,3.58 9.5,3.55 9.0,3.27 8.5,3.62 8.0,3.40 7.5,3.60 7.0,3.57 6.5,3.37 6.0,3.44 5.5,3.34 5.0,3.53 4.5,3.39 4.0,3.26 3.5,3.29 3.0,3.50 2.5,3.51 2.0,3.54 1.5,3.36 1.0,3.61 0.5,3.55 0.0,3.45"/></g></svg>
<div class="a" style="left:336.38px;top:398.8px;width:126.38px;height:31.45px;background:linear-gradient(#90aad0,#809cc4 35%,#7090b8);border:1px solid #18202c;border-radius:2.5px;box-shadow:inset 1px 1px 0 rgba(255,255,255,.25);"></div>
<div class="t" style="left:339.18px;top:400.40px;font-size:6px;color:#2e3c54;transform:scaleX(.88);transform-origin:0 0">shabwey_lead_intro_bass2_f_sharp_140.1 <span style="font-size:5px">&#9901;</span></div>
<svg class="a" style="left:337.38px;top:415.7px;" width="124.38" height="5" viewBox="0 0 124.38 5"><g fill="#323f54"><polygon points="0.0,1.68 0.5,1.50 1.0,1.62 1.5,1.68 2.0,1.57 2.5,1.56 3.0,1.57 3.5,1.58 4.0,1.65 4.5,1.65 5.0,1.49 5.5,1.63 6.0,1.50 6.5,1.45 7.0,1.43 7.5,1.40 8.0,1.66 8.5,1.66 9.0,1.47 9.5,1.53 10.0,1.67 10.5,1.50 11.0,1.42 11.5,1.44 12.0,1.67 12.5,1.64 13.0,1.75 13.5,1.38 14.0,1.67 14.5,1.48 15.0,1.55 15.5,1.53 16.0,1.55 16.5,1.44 17.0,1.53 17.5,1.64 18.0,1.71 18.5,1.57 19.0,1.40 19.5,1.70 20.0,1.49 20.5,1.51 21.0,1.69 21.5,1.67 22.0,1.49 22.5,1.59 23.0,1.60 23.5,1.57 24.0,1.71 24.5,1.49 25.0,1.53 25.5,1.55 26.0,1.62 26.5,1.45 27.0,1.44 27.5,1.55 28.0,1.72 28.5,1.69 29.0,1.69 29.5,1.72 30.0,1.51 30.5,1.55 31.0,1.67 31.5,1.41 32.0,1.51 32.5,1.45 33.0,1.44 33.5,1.49 34.0,1.55 34.5,1.38 35.0,1.70 35.5,1.49 36.0,1.42 36.5,1.57 37.0,1.44 37.5,1.68 38.0,1.59 38.5,1.65 39.0,1.60 39.5,1.49 40.0,1.70 40.5,1.62 41.0,1.43 41.5,1.64 42.0,1.70 42.5,1.38 43.0,1.55 43.5,1.74 44.0,1.54 44.5,1.70 45.0,1.69 45.5,1.47 46.0,1.51 46.5,1.59 47.0,1.56 47.5,1.54 48.0,1.58 48.5,1.71 49.0,1.46 49.5,1.46 50.0,1.59 50.5,1.60 51.0,1.52 51.5,1.57 52.0,1.59 52.5,1.42 53.0,1.41 53.5,1.69 54.0,1.69 54.5,1.46 55.0,1.39 55.5,1.48 56.0,1.64 56.5,1.73 57.0,1.44 57.5,1.40 58.0,1.47 58.5,1.47 59.0,1.39 59.5,1.55 60.0,1.40 60.5,1.65 61.0,1.72 61.5,1.44 62.0,1.49 62.5,1.45 63.0,1.70 63.5,1.64 64.0,1.53 64.5,1.73 65.0,1.63 65.5,1.52 66.0,1.40 66.5,1.48 67.0,1.60 67.5,1.60 68.0,1.56 68.5,1.47 69.0,1.38 69.5,1.75 70.0,1.40 70.5,1.45 71.0,1.73 71.5,1.65 72.0,1.65 72.5,1.67 73.0,1.69 73.5,1.70 74.0,1.50 74.5,1.59 75.0,1.71 75.5,1.43 76.0,1.44 76.5,1.65 77.0,1.44 77.5,1.46 78.0,1.55 78.5,1.72 79.0,1.48 79.5,1.42 80.0,1.42 80.5,1.39 81.0,1.69 81.5,1.38 82.0,1.71 82.5,1.61 83.0,1.55 83.5,1.51 84.0,1.55 84.5,1.41 85.0,1.46 85.5,1.43 86.0,1.50 86.5,1.58 87.0,1.74 87.5,1.51 88.0,1.40 88.5,1.68 89.0,1.38 89.5,1.74 90.0,1.60 90.5,1.47 91.0,1.48 91.5,1.53 92.0,1.64 92.5,1.66 93.0,1.70 93.5,1.51 94.0,1.74 94.5,1.70 95.0,1.48 95.5,1.58 96.0,1.74 96.5,1.59 97.0,1.40 97.5,1.56 98.0,1.65 98.5,1.70 99.0,1.56 99.5,1.66 100.0,1.65 100.5,1.73 101.0,1.52 101.5,1.45 102.0,1.56 102.5,1.52 103.0,1.64 103.5,1.38 104.0,1.64 104.5,1.41 105.0,1.74 105.5,1.50 106.0,1.42 106.5,1.54 107.0,1.67 107.5,1.69 108.0,1.38 108.5,1.38 109.0,1.66 109.5,1.60 110.0,1.44 110.5,1.42 111.0,1.74 111.5,1.55 112.0,1.66 112.5,1.72 113.0,1.49 113.5,1.57 114.0,1.67 114.5,1.47 115.0,1.63 115.5,1.65 116.0,1.64 116.5,1.68 117.0,1.43 117.5,1.63 118.0,1.40 118.5,1.49 119.0,1.55 119.5,1.41 120.0,1.61 120.5,1.74 121.0,1.50 121.5,1.73 122.0,1.40 122.5,1.38 123.0,1.60 123.5,1.72 124.0,1.39 124.0,3.61 123.5,3.28 123.0,3.40 122.5,3.62 122.0,3.60 121.5,3.27 121.0,3.50 120.5,3.26 120.0,3.39 119.5,3.59 119.0,3.45 118.5,3.51 118.0,3.60 117.5,3.37 117.0,3.57 116.5,3.32 116.0,3.36 115.5,3.35 115.0,3.37 114.5,3.53 114.0,3.33 113.5,3.43 113.0,3.51 112.5,3.28 112.0,3.34 111.5,3.45 111.0,3.26 110.5,3.58 110.0,3.56 109.5,3.40 109.0,3.34 108.5,3.62 108.0,3.62 107.5,3.31 107.0,3.33 106.5,3.46 106.0,3.58 105.5,3.50 105.0,3.26 104.5,3.59 104.0,3.36 103.5,3.62 103.0,3.36 102.5,3.48 102.0,3.44 101.5,3.55 101.0,3.48 100.5,3.27 100.0,3.35 99.5,3.34 99.0,3.44 98.5,3.30 98.0,3.35 97.5,3.44 97.0,3.60 96.5,3.41 96.0,3.26 95.5,3.42 95.0,3.52 94.5,3.30 94.0,3.26 93.5,3.49 93.0,3.30 92.5,3.34 92.0,3.36 91.5,3.47 91.0,3.52 90.5,3.53 90.0,3.40 89.5,3.26 89.0,3.62 88.5,3.32 88.0,3.60 87.5,3.49 87.0,3.26 86.5,3.42 86.0,3.50 85.5,3.57 85.0,3.54 84.5,3.59 84.0,3.45 83.5,3.49 83.0,3.45 82.5,3.39 82.0,3.29 81.5,3.62 81.0,3.31 80.5,3.61 80.0,3.58 79.5,3.58 79.0,3.52 78.5,3.28 78.0,3.45 77.5,3.54 77.0,3.56 76.5,3.35 76.0,3.56 75.5,3.57 75.0,3.29 74.5,3.41 74.0,3.50 73.5,3.30 73.0,3.31 72.5,3.33 72.0,3.35 71.5,3.35 71.0,3.27 70.5,3.55 70.0,3.60 69.5,3.25 69.0,3.62 68.5,3.53 68.0,3.44 67.5,3.40 67.0,3.40 66.5,3.52 66.0,3.60 65.5,3.48 65.0,3.37 64.5,3.27 64.0,3.47 63.5,3.36 63.0,3.30 62.5,3.55 62.0,3.51 61.5,3.56 61.0,3.28 60.5,3.35 60.0,3.60 59.5,3.45 59.0,3.61 58.5,3.53 58.0,3.53 57.5,3.60 57.0,3.56 56.5,3.27 56.0,3.36 55.5,3.52 55.0,3.61 54.5,3.54 54.0,3.31 53.5,3.31 53.0,3.59 52.5,3.58 52.0,3.41 51.5,3.43 51.0,3.48 50.5,3.40 50.0,3.41 49.5,3.54 49.0,3.54 48.5,3.29 48.0,3.42 47.5,3.46 47.0,3.44 46.5,3.41 46.0,3.49 45.5,3.53 45.0,3.31 44.5,3.30 44.0,3.46 43.5,3.26 43.0,3.45 42.5,3.62 42.0,3.30 41.5,3.36 41.0,3.57 40.5,3.38 40.0,3.30 39.5,3.51 39.0,3.40 38.5,3.35 38.0,3.41 37.5,3.32 37.0,3.56 36.5,3.43 36.0,3.58 35.5,3.51 35.0,3.30 34.5,3.62 34.0,3.45 33.5,3.51 33.0,3.56 32.5,3.55 32.0,3.49 31.5,3.59 31.0,3.33 30.5,3.45 30.0,3.49 29.5,3.28 29.0,3.31 28.5,3.31 28.0,3.28 27.5,3.45 27.0,3.56 26.5,3.55 26.0,3.38 25.5,3.45 25.0,3.47 24.5,3.51 24.0,3.29 23.5,3.43 23.0,3.40 22.5,3.41 22.0,3.51 21.5,3.33 21.0,3.31 20.5,3.49 20.0,3.51 19.5,3.30 19.0,3.60 18.5,3.43 18.0,3.29 17.5,3.36 17.0,3.47 16.5,3.56 16.0,3.45 15.5,3.47 15.0,3.45 14.5,3.52 14.0,3.33 13.5,3.62 13.0,3.25 12.5,3.36 12.0,3.33 11.5,3.56 11.0,3.58 10.5,3.50 10.0,3.33 9.5,3.47 9.0,3.53 8.5,3.34 8.0,3.34 7.5,3.60 7.0,3.57 6.5,3.55 6.0,3.50 5.5,3.37 5.0,3.51 4.5,3.35 4.0,3.35 3.5,3.42 3.0,3.43 2.5,3.44 2.0,3.43 1.5,3.32 1.0,3.38 0.5,3.50 0.0,3.32"/></g></svg>
<div class="a" style="left:716.52px;top:398.8px;width:126.88px;height:31.45px;background:linear-gradient(#90aad0,#809cc4 35%,#7090b8);border:1px solid #18202c;border-radius:2.5px;box-shadow:inset 1px 1px 0 rgba(255,255,255,.25);"></div>
<div class="t" style="left:719.3199999999999px;top:400.40px;font-size:6px;color:#2e3c54;transform:scaleX(.88);transform-origin:0 0">shabwey_lead_intro_bass2_f_sharp_140.2 <span style="font-size:5px">&#9901;</span></div>
<svg class="a" style="left:717.52px;top:415.7px;" width="124.88" height="5" viewBox="0 0 124.88 5"><g fill="#323f54"><polygon points="0.0,1.50 0.5,1.46 1.0,1.55 1.5,1.56 2.0,1.60 2.5,1.38 3.0,1.64 3.5,1.69 4.0,1.65 4.5,1.65 5.0,1.63 5.5,1.65 6.0,1.71 6.5,1.63 7.0,1.63 7.5,1.54 8.0,1.67 8.5,1.72 9.0,1.67 9.5,1.55 10.0,1.60 10.5,1.47 11.0,1.45 11.5,1.59 12.0,1.71 12.5,1.48 13.0,1.47 13.5,1.60 14.0,1.50 14.5,1.64 15.0,1.41 15.5,1.44 16.0,1.45 16.5,1.39 17.0,1.66 17.5,1.55 18.0,1.48 18.5,1.45 19.0,1.60 19.5,1.70 20.0,1.52 20.5,1.71 21.0,1.49 21.5,1.75 22.0,1.58 22.5,1.57 23.0,1.71 23.5,1.57 24.0,1.56 24.5,1.61 25.0,1.41 25.5,1.43 26.0,1.42 26.5,1.66 27.0,1.74 27.5,1.61 28.0,1.71 28.5,1.49 29.0,1.65 29.5,1.70 30.0,1.64 30.5,1.60 31.0,1.47 31.5,1.58 32.0,1.64 32.5,1.50 33.0,1.73 33.5,1.67 34.0,1.49 34.5,1.47 35.0,1.71 35.5,1.73 36.0,1.56 36.5,1.50 37.0,1.74 37.5,1.59 38.0,1.65 38.5,1.72 39.0,1.69 39.5,1.64 40.0,1.57 40.5,1.71 41.0,1.52 41.5,1.42 42.0,1.49 42.5,1.72 43.0,1.51 43.5,1.51 44.0,1.75 44.5,1.61 45.0,1.51 45.5,1.39 46.0,1.40 46.5,1.54 47.0,1.53 47.5,1.39 48.0,1.67 48.5,1.56 49.0,1.73 49.5,1.46 50.0,1.50 50.5,1.67 51.0,1.68 51.5,1.55 52.0,1.47 52.5,1.70 53.0,1.63 53.5,1.56 54.0,1.65 54.5,1.42 55.0,1.48 55.5,1.39 56.0,1.51 56.5,1.49 57.0,1.64 57.5,1.56 58.0,1.59 58.5,1.57 59.0,1.73 59.5,1.43 60.0,1.69 60.5,1.58 61.0,1.40 61.5,1.56 62.0,1.42 62.5,1.65 63.0,1.57 63.5,1.61 64.0,1.63 64.5,1.61 65.0,1.58 65.5,1.43 66.0,1.39 66.5,1.71 67.0,1.50 67.5,1.55 68.0,1.60 68.5,1.73 69.0,1.61 69.5,1.63 70.0,1.61 70.5,1.53 71.0,1.61 71.5,1.64 72.0,1.65 72.5,1.38 73.0,1.60 73.5,1.39 74.0,1.69 74.5,1.50 75.0,1.54 75.5,1.48 76.0,1.56 76.5,1.42 77.0,1.53 77.5,1.73 78.0,1.49 78.5,1.52 79.0,1.66 79.5,1.48 80.0,1.44 80.5,1.65 81.0,1.69 81.5,1.64 82.0,1.53 82.5,1.58 83.0,1.72 83.5,1.58 84.0,1.54 84.5,1.53 85.0,1.62 85.5,1.46 86.0,1.50 86.5,1.65 87.0,1.62 87.5,1.40 88.0,1.67 88.5,1.58 89.0,1.64 89.5,1.53 90.0,1.45 90.5,1.70 91.0,1.68 91.5,1.73 92.0,1.70 92.5,1.55 93.0,1.57 93.5,1.40 94.0,1.58 94.5,1.55 95.0,1.74 95.5,1.67 96.0,1.63 96.5,1.66 97.0,1.45 97.5,1.59 98.0,1.70 98.5,1.55 99.0,1.69 99.5,1.68 100.0,1.52 100.5,1.72 101.0,1.47 101.5,1.59 102.0,1.73 102.5,1.50 103.0,1.39 103.5,1.47 104.0,1.43 104.5,1.40 105.0,1.65 105.5,1.57 106.0,1.47 106.5,1.60 107.0,1.39 107.5,1.59 108.0,1.74 108.5,1.71 109.0,1.59 109.5,1.74 110.0,1.52 110.5,1.38 111.0,1.40 111.5,1.38 112.0,1.66 112.5,1.68 113.0,1.72 113.5,1.40 114.0,1.74 114.5,1.72 115.0,1.50 115.5,1.39 116.0,1.55 116.5,1.73 117.0,1.74 117.5,1.44 118.0,1.49 118.5,1.63 119.0,1.38 119.5,1.64 120.0,1.69 120.5,1.39 121.0,1.73 121.5,1.61 122.0,1.68 122.5,1.51 123.0,1.57 123.5,1.66 124.0,1.51 124.5,1.71 124.5,3.29 124.0,3.49 123.5,3.34 123.0,3.43 122.5,3.49 122.0,3.32 121.5,3.39 121.0,3.27 120.5,3.61 120.0,3.31 119.5,3.36 119.0,3.62 118.5,3.37 118.0,3.51 117.5,3.56 117.0,3.26 116.5,3.27 116.0,3.45 115.5,3.61 115.0,3.50 114.5,3.28 114.0,3.26 113.5,3.60 113.0,3.28 112.5,3.32 112.0,3.34 111.5,3.62 111.0,3.60 110.5,3.62 110.0,3.48 109.5,3.26 109.0,3.41 108.5,3.29 108.0,3.26 107.5,3.41 107.0,3.61 106.5,3.40 106.0,3.53 105.5,3.43 105.0,3.35 104.5,3.60 104.0,3.57 103.5,3.53 103.0,3.61 102.5,3.50 102.0,3.27 101.5,3.41 101.0,3.53 100.5,3.28 100.0,3.48 99.5,3.32 99.0,3.31 98.5,3.45 98.0,3.30 97.5,3.41 97.0,3.55 96.5,3.34 96.0,3.37 95.5,3.33 95.0,3.26 94.5,3.45 94.0,3.42 93.5,3.60 93.0,3.43 92.5,3.45 92.0,3.30 91.5,3.27 91.0,3.32 90.5,3.30 90.0,3.55 89.5,3.47 89.0,3.36 88.5,3.42 88.0,3.33 87.5,3.60 87.0,3.38 86.5,3.35 86.0,3.50 85.5,3.54 85.0,3.38 84.5,3.47 84.0,3.46 83.5,3.42 83.0,3.28 82.5,3.42 82.0,3.47 81.5,3.36 81.0,3.31 80.5,3.35 80.0,3.56 79.5,3.52 79.0,3.34 78.5,3.48 78.0,3.51 77.5,3.27 77.0,3.47 76.5,3.58 76.0,3.44 75.5,3.52 75.0,3.46 74.5,3.50 74.0,3.31 73.5,3.61 73.0,3.40 72.5,3.62 72.0,3.35 71.5,3.36 71.0,3.39 70.5,3.47 70.0,3.39 69.5,3.37 69.0,3.39 68.5,3.27 68.0,3.40 67.5,3.45 67.0,3.50 66.5,3.29 66.0,3.61 65.5,3.57 65.0,3.42 64.5,3.39 64.0,3.37 63.5,3.39 63.0,3.43 62.5,3.35 62.0,3.58 61.5,3.44 61.0,3.60 60.5,3.42 60.0,3.31 59.5,3.57 59.0,3.27 58.5,3.43 58.0,3.41 57.5,3.44 57.0,3.36 56.5,3.51 56.0,3.49 55.5,3.61 55.0,3.52 54.5,3.58 54.0,3.35 53.5,3.44 53.0,3.37 52.5,3.30 52.0,3.53 51.5,3.45 51.0,3.32 50.5,3.33 50.0,3.50 49.5,3.54 49.0,3.27 48.5,3.44 48.0,3.33 47.5,3.61 47.0,3.47 46.5,3.46 46.0,3.60 45.5,3.61 45.0,3.49 44.5,3.39 44.0,3.25 43.5,3.49 43.0,3.49 42.5,3.28 42.0,3.51 41.5,3.58 41.0,3.48 40.5,3.29 40.0,3.43 39.5,3.36 39.0,3.31 38.5,3.28 38.0,3.35 37.5,3.41 37.0,3.26 36.5,3.50 36.0,3.44 35.5,3.27 35.0,3.29 34.5,3.53 34.0,3.51 33.5,3.33 33.0,3.27 32.5,3.50 32.0,3.36 31.5,3.42 31.0,3.53 30.5,3.40 30.0,3.36 29.5,3.30 29.0,3.35 28.5,3.51 28.0,3.29 27.5,3.39 27.0,3.26 26.5,3.34 26.0,3.58 25.5,3.57 25.0,3.59 24.5,3.39 24.0,3.44 23.5,3.43 23.0,3.29 22.5,3.43 22.0,3.42 21.5,3.25 21.0,3.51 20.5,3.29 20.0,3.48 19.5,3.30 19.0,3.40 18.5,3.55 18.0,3.52 17.5,3.45 17.0,3.34 16.5,3.61 16.0,3.55 15.5,3.56 15.0,3.59 14.5,3.36 14.0,3.50 13.5,3.40 13.0,3.53 12.5,3.52 12.0,3.29 11.5,3.41 11.0,3.55 10.5,3.53 10.0,3.40 9.5,3.45 9.0,3.33 8.5,3.28 8.0,3.33 7.5,3.46 7.0,3.37 6.5,3.37 6.0,3.29 5.5,3.35 5.0,3.37 4.5,3.35 4.0,3.35 3.5,3.31 3.0,3.36 2.5,3.62 2.0,3.40 1.5,3.44 1.0,3.45 0.5,3.54 0.0,3.50"/></g></svg>
<div class="a" style="left:843.4px;top:398.8px;width:126.88px;height:31.45px;background:linear-gradient(#90aad0,#809cc4 35%,#7090b8);border:1px solid #18202c;border-radius:2.5px;box-shadow:inset 1px 1px 0 rgba(255,255,255,.25);"></div>
<div class="t" style="left:846.1999999999999px;top:400.40px;font-size:6px;color:#2e3c54;transform:scaleX(.88);transform-origin:0 0">shabwey_lead_intro_bass3_f_sharp_140.3 <span style="font-size:5px">&#9901;</span></div>
<svg class="a" style="left:844.4px;top:415.7px;" width="124.88" height="5" viewBox="0 0 124.88 5"><g fill="#323f54"><polygon points="0.0,1.41 0.5,1.49 1.0,1.46 1.5,1.41 2.0,1.65 2.5,1.51 3.0,1.41 3.5,1.42 4.0,1.54 4.5,1.69 5.0,1.60 5.5,1.38 6.0,1.71 6.5,1.63 7.0,1.39 7.5,1.58 8.0,1.67 8.5,1.63 9.0,1.41 9.5,1.62 10.0,1.59 10.5,1.51 11.0,1.45 11.5,1.57 12.0,1.72 12.5,1.54 13.0,1.74 13.5,1.71 14.0,1.68 14.5,1.49 15.0,1.64 15.5,1.49 16.0,1.69 16.5,1.71 17.0,1.74 17.5,1.49 18.0,1.43 18.5,1.67 19.0,1.66 19.5,1.75 20.0,1.51 20.5,1.64 21.0,1.70 21.5,1.51 22.0,1.53 22.5,1.58 23.0,1.69 23.5,1.51 24.0,1.54 24.5,1.59 25.0,1.69 25.5,1.40 26.0,1.43 26.5,1.49 27.0,1.38 27.5,1.53 28.0,1.62 28.5,1.71 29.0,1.52 29.5,1.56 30.0,1.59 30.5,1.38 31.0,1.44 31.5,1.71 32.0,1.42 32.5,1.75 33.0,1.51 33.5,1.63 34.0,1.48 34.5,1.39 35.0,1.55 35.5,1.46 36.0,1.73 36.5,1.50 37.0,1.71 37.5,1.58 38.0,1.62 38.5,1.72 39.0,1.47 39.5,1.72 40.0,1.65 40.5,1.72 41.0,1.50 41.5,1.64 42.0,1.73 42.5,1.74 43.0,1.67 43.5,1.56 44.0,1.75 44.5,1.74 45.0,1.50 45.5,1.55 46.0,1.70 46.5,1.63 47.0,1.70 47.5,1.65 48.0,1.60 48.5,1.67 49.0,1.68 49.5,1.67 50.0,1.64 50.5,1.54 51.0,1.42 51.5,1.51 52.0,1.58 52.5,1.75 53.0,1.68 53.5,1.51 54.0,1.60 54.5,1.43 55.0,1.41 55.5,1.64 56.0,1.61 56.5,1.64 57.0,1.50 57.5,1.71 58.0,1.65 58.5,1.42 59.0,1.61 59.5,1.39 60.0,1.60 60.5,1.44 61.0,1.58 61.5,1.71 62.0,1.53 62.5,1.67 63.0,1.41 63.5,1.49 64.0,1.55 64.5,1.40 65.0,1.54 65.5,1.39 66.0,1.48 66.5,1.68 67.0,1.64 67.5,1.43 68.0,1.71 68.5,1.38 69.0,1.73 69.5,1.47 70.0,1.52 70.5,1.60 71.0,1.52 71.5,1.53 72.0,1.62 72.5,1.64 73.0,1.73 73.5,1.50 74.0,1.42 74.5,1.61 75.0,1.43 75.5,1.60 76.0,1.65 76.5,1.45 77.0,1.40 77.5,1.72 78.0,1.42 78.5,1.63 79.0,1.46 79.5,1.64 80.0,1.38 80.5,1.62 81.0,1.67 81.5,1.73 82.0,1.70 82.5,1.72 83.0,1.44 83.5,1.74 84.0,1.71 84.5,1.66 85.0,1.70 85.5,1.46 86.0,1.75 86.5,1.49 87.0,1.62 87.5,1.70 88.0,1.66 88.5,1.55 89.0,1.66 89.5,1.60 90.0,1.60 90.5,1.55 91.0,1.49 91.5,1.64 92.0,1.52 92.5,1.48 93.0,1.64 93.5,1.46 94.0,1.72 94.5,1.56 95.0,1.62 95.5,1.70 96.0,1.50 96.5,1.43 97.0,1.57 97.5,1.62 98.0,1.41 98.5,1.38 99.0,1.51 99.5,1.54 100.0,1.51 100.5,1.49 101.0,1.49 101.5,1.55 102.0,1.47 102.5,1.47 103.0,1.51 103.5,1.55 104.0,1.61 104.5,1.67 105.0,1.56 105.5,1.63 106.0,1.57 106.5,1.68 107.0,1.41 107.5,1.70 108.0,1.42 108.5,1.54 109.0,1.41 109.5,1.42 110.0,1.69 110.5,1.65 111.0,1.38 111.5,1.50 112.0,1.72 112.5,1.65 113.0,1.71 113.5,1.64 114.0,1.72 114.5,1.74 115.0,1.73 115.5,1.57 116.0,1.48 116.5,1.56 117.0,1.50 117.5,1.50 118.0,1.70 118.5,1.49 119.0,1.56 119.5,1.59 120.0,1.39 120.5,1.58 121.0,1.49 121.5,1.46 122.0,1.57 122.5,1.69 123.0,1.68 123.5,1.64 124.0,1.68 124.5,1.60 124.5,3.40 124.0,3.32 123.5,3.36 123.0,3.32 122.5,3.31 122.0,3.43 121.5,3.54 121.0,3.51 120.5,3.42 120.0,3.61 119.5,3.41 119.0,3.44 118.5,3.51 118.0,3.30 117.5,3.50 117.0,3.50 116.5,3.44 116.0,3.52 115.5,3.43 115.0,3.27 114.5,3.26 114.0,3.28 113.5,3.36 113.0,3.29 112.5,3.35 112.0,3.28 111.5,3.50 111.0,3.62 110.5,3.35 110.0,3.31 109.5,3.58 109.0,3.59 108.5,3.46 108.0,3.58 107.5,3.30 107.0,3.59 106.5,3.32 106.0,3.43 105.5,3.37 105.0,3.44 104.5,3.33 104.0,3.39 103.5,3.45 103.0,3.49 102.5,3.53 102.0,3.53 101.5,3.45 101.0,3.51 100.5,3.51 100.0,3.49 99.5,3.46 99.0,3.49 98.5,3.62 98.0,3.59 97.5,3.38 97.0,3.43 96.5,3.57 96.0,3.50 95.5,3.30 95.0,3.38 94.5,3.44 94.0,3.28 93.5,3.54 93.0,3.36 92.5,3.52 92.0,3.48 91.5,3.36 91.0,3.51 90.5,3.45 90.0,3.40 89.5,3.40 89.0,3.34 88.5,3.45 88.0,3.34 87.5,3.30 87.0,3.38 86.5,3.51 86.0,3.25 85.5,3.54 85.0,3.30 84.5,3.34 84.0,3.29 83.5,3.26 83.0,3.56 82.5,3.28 82.0,3.30 81.5,3.27 81.0,3.33 80.5,3.38 80.0,3.62 79.5,3.36 79.0,3.54 78.5,3.37 78.0,3.58 77.5,3.28 77.0,3.60 76.5,3.55 76.0,3.35 75.5,3.40 75.0,3.57 74.5,3.39 74.0,3.58 73.5,3.50 73.0,3.27 72.5,3.36 72.0,3.38 71.5,3.47 71.0,3.48 70.5,3.40 70.0,3.48 69.5,3.53 69.0,3.27 68.5,3.62 68.0,3.29 67.5,3.57 67.0,3.36 66.5,3.32 66.0,3.52 65.5,3.61 65.0,3.46 64.5,3.60 64.0,3.45 63.5,3.51 63.0,3.59 62.5,3.33 62.0,3.47 61.5,3.29 61.0,3.42 60.5,3.56 60.0,3.40 59.5,3.61 59.0,3.39 58.5,3.58 58.0,3.35 57.5,3.29 57.0,3.50 56.5,3.36 56.0,3.39 55.5,3.36 55.0,3.59 54.5,3.57 54.0,3.40 53.5,3.49 53.0,3.32 52.5,3.25 52.0,3.42 51.5,3.49 51.0,3.58 50.5,3.46 50.0,3.36 49.5,3.33 49.0,3.32 48.5,3.33 48.0,3.40 47.5,3.35 47.0,3.30 46.5,3.37 46.0,3.30 45.5,3.45 45.0,3.50 44.5,3.26 44.0,3.25 43.5,3.44 43.0,3.33 42.5,3.26 42.0,3.27 41.5,3.36 41.0,3.50 40.5,3.28 40.0,3.35 39.5,3.28 39.0,3.53 38.5,3.28 38.0,3.38 37.5,3.42 37.0,3.29 36.5,3.50 36.0,3.27 35.5,3.54 35.0,3.45 34.5,3.61 34.0,3.52 33.5,3.37 33.0,3.49 32.5,3.25 32.0,3.58 31.5,3.29 31.0,3.56 30.5,3.62 30.0,3.41 29.5,3.44 29.0,3.48 28.5,3.29 28.0,3.38 27.5,3.47 27.0,3.62 26.5,3.51 26.0,3.57 25.5,3.60 25.0,3.31 24.5,3.41 24.0,3.46 23.5,3.49 23.0,3.31 22.5,3.42 22.0,3.47 21.5,3.49 21.0,3.30 20.5,3.36 20.0,3.49 19.5,3.25 19.0,3.34 18.5,3.33 18.0,3.57 17.5,3.51 17.0,3.26 16.5,3.29 16.0,3.31 15.5,3.51 15.0,3.36 14.5,3.51 14.0,3.32 13.5,3.29 13.0,3.26 12.5,3.46 12.0,3.28 11.5,3.43 11.0,3.55 10.5,3.49 10.0,3.41 9.5,3.38 9.0,3.59 8.5,3.37 8.0,3.33 7.5,3.42 7.0,3.61 6.5,3.37 6.0,3.29 5.5,3.62 5.0,3.40 4.5,3.31 4.0,3.46 3.5,3.58 3.0,3.59 2.5,3.49 2.0,3.35 1.5,3.59 1.0,3.54 0.5,3.51 0.0,3.59"/></g></svg>
<div class="a" style="left:461.2px;top:76px;width:1.1px;height:497px;background:#c4ccd6;"></div>
<svg class="a" style="left:458.5px;top:75px;" width="6" height="5" viewBox="0 0 6 5"><path d="M.5 .5h5L3 4z" fill="#eee"/></svg>
<svg class="a" style="left:584.5px;top:412.5px;" width="11" height="11" viewBox="0 0 11 11"><path d="M5.5 1.2v8.6M1.2 5.5h8.6" stroke="#2a2a2a" stroke-width="2.4"/><path d="M5.5 1.8v7.4M1.8 5.5h7.4" stroke="#d8d8d8" stroke-width="1.3"/></svg>
<div class="a" style="left:989px;top:65px;width:7px;height:508px;background:linear-gradient(90deg,#e6e6e6,#fafafa);"></div>
<svg class="a" style="left:989.5px;top:69px;" width="6" height="14" viewBox="0 0 6 14"><path d="M2 1v6" stroke="#333" stroke-width=".7"/><circle cx="1.8" cy="7.3" r="1.2" fill="#333"/><path d="M2 1l2 1.5" stroke="#333" stroke-width=".8"/><path d="M1 12l2 2 2-2z" fill="#333"/></svg>
<div class="a" style="left:989px;top:542px;width:7px;height:31px;background:linear-gradient(90deg,#dadada,#f4f4f4);border-top:1px solid #bbb;"></div>
<div class="a" style="left:992px;top:552px;width:1px;height:18px;background:#888"></div>
<div class="a" style="left:990.5px;top:557.5px;width:4px;height:3px;background:#eee;border:1px solid #666;border-radius:1px;"></div>
<div class="a" style="left:89px;top:573px;width:906px;height:8px;background:linear-gradient(#e0e0e0,#cfcfcf);border-top:1px solid #b0b0b0;"></div>
<div class="a" style="left:206.5px;top:573.5px;width:153.5px;height:7px;background:linear-gradient(#9a9ea6,#8a8e96 60%,#a4a8ae);border:1px solid #5a5e66;border-radius:4px;"></div>
<div class="a" style="left:210px;top:576.5px;width:146px;height:1px;background:#c8ccd2;opacity:.6"></div>
<div class="a" style="left:919px;top:573.5px;width:70px;height:7px;background:linear-gradient(#e8e8e8,#cfcfcf);"></div>
<div class="a" style="left:922.5px;top:574px;width:0.8px;height:6.5px;background:#aaa"></div>
<div class="a" style="left:938.5px;top:574px;width:0.8px;height:6.5px;background:#aaa"></div>
<div class="a" style="left:956.5px;top:574px;width:0.8px;height:6.5px;background:#aaa"></div>
<svg class="a" style="left:924px;top:574px;" width="30" height="7" viewBox="0 0 30 7"><path d="M5 1.5v4l-2.5-2z" fill="#333"/><path d="M13 1.5v4l2.5-2z" fill="#333"/><path d="M20 3.5h8" stroke="#444" stroke-width="1"/><circle cx="24" cy="3.5" r="1.8" fill="#555"/></svg>
<svg class="a" style="left:958px;top:574px;" width="30" height="7" viewBox="0 0 30 7"><path d="M2 3.5h26" stroke="#888" stroke-width="1" stroke-dasharray="1 1"/><rect x="13" y="1" width="3" height="5" fill="#eee" stroke="#666" stroke-width=".6" rx="1"/></svg>
<div class="a" style="left:89px;top:581px;width:906px;height:11px;background:linear-gradient(#f6f6f6,#dcdcdc);border-top:1px solid #c0c0c0;border-radius:0 0 4px 4px;"></div>
<div class="t" style="left:9.099999999999994px;width:200px;text-align:center;top:582.72px;font-size:6px;color:#222;font-weight:bold;transform-origin:50% 50%;transform:scaleX(0.82);">Mixer</div>
<div class="a" style="left:129.2px;top:582px;width:0.8px;height:9.5px;background:#c2c2c2;"></div>
<div class="t" style="left:50.349999999999994px;width:200px;text-align:center;top:582.72px;font-size:6px;color:#222;font-weight:bold;transform-origin:50% 50%;transform:scaleX(0.82);">Sample Editor</div>
<div class="a" style="left:171.5px;top:582px;width:0.8px;height:9.5px;background:#c2c2c2;"></div>
<div class="t" style="left:92.44999999999999px;width:200px;text-align:center;top:582.72px;font-size:6px;color:#222;font-weight:bold;transform-origin:50% 50%;transform:scaleX(0.82);">Piano Roll</div>
<div class="a" style="left:213.4px;top:582px;width:0.8px;height:9.5px;background:#c2c2c2;"></div>
<div class="t" style="left:133.9px;width:200px;text-align:center;top:582.72px;font-size:6px;color:#222;font-weight:bold;transform-origin:50% 50%;transform:scaleX(0.82);">Score</div>
<div class="a" style="left:254.4px;top:582px;width:0.8px;height:9.5px;background:#c2c2c2;"></div>
<div class="t" style="left:175.7px;width:200px;text-align:center;top:582.72px;font-size:6px;color:#222;font-weight:bold;transform-origin:50% 50%;transform:scaleX(0.82);">Hyper Editor</div>
<div class="a" style="left:297px;top:582px;width:0.8px;height:9.5px;background:#c2c2c2;"></div>
<div class="a" style="left:4px;top:594.5px;width:992px;height:24.5px;background:linear-gradient(#efefef,#d6d6d6 45%,#c4c4c4);border:1px solid #a0a0a0;border-radius:3px;"></div>
<div class="a" style="left:212.5px;top:598.8px;width:132px;height:16.4px;background:linear-gradient(#b4b4b4,#cacaca);border-radius:8px;"></div>
<svg class="a" style="left:212.6px;top:599px;" width="16" height="16" viewBox="0 0 16 16"><defs><linearGradient id="tbg" x1="0" y1="0" x2="0" y2="1"><stop offset="0" stop-color="#f8f8f8"/><stop offset="1" stop-color="#c4c4c4"/></linearGradient><linearGradient id="tbg2" x1="0" y1="0" x2="0" y2="1"><stop offset="0" stop-color="#c8d0da"/><stop offset="1" stop-color="#98a4b2"/></linearGradient></defs><circle cx="8" cy="8" r="6.6" fill="url(#tbg)" stroke="#7a7a7a" stroke-width=".9"/><g transform="translate(8 8)"><path d="M-2.5 -2.5v5M2.5 -2.5v5l-4-2.5z" fill="#555" stroke="#555" stroke-width=".5"/></g></svg>
<svg class="a" style="left:229.29999999999998px;top:599px;" width="16" height="16" viewBox="0 0 16 16"><defs><linearGradient id="tbg" x1="0" y1="0" x2="0" y2="1"><stop offset="0" stop-color="#f8f8f8"/><stop offset="1" stop-color="#c4c4c4"/></linearGradient><linearGradient id="tbg2" x1="0" y1="0" x2="0" y2="1"><stop offset="0" stop-color="#c8d0da"/><stop offset="1" stop-color="#98a4b2"/></linearGradient></defs><circle cx="8" cy="8" r="6.6" fill="url(#tbg)" stroke="#7a7a7a" stroke-width=".9"/><g transform="translate(8 8)"><rect x="-2.5" y="-2.5" width="5" height="5" fill="none" stroke="#666" stroke-width=".6"/><path d="M-1.2 -1.8v3.6l2.6-1.8z" fill="#444"/></g></svg>
<svg class="a" style="left:246.0px;top:599px;" width="16" height="16" viewBox="0 0 16 16"><defs><linearGradient id="tbg" x1="0" y1="0" x2="0" y2="1"><stop offset="0" stop-color="#f8f8f8"/><stop offset="1" stop-color="#c4c4c4"/></linearGradient><linearGradient id="tbg2" x1="0" y1="0" x2="0" y2="1"><stop offset="0" stop-color="#c8d0da"/><stop offset="1" stop-color="#98a4b2"/></linearGradient></defs><circle cx="8" cy="8" r="6.6" fill="url(#tbg)" stroke="#7a7a7a" stroke-width=".9"/><g transform="translate(8 8)"><path d="M-.2 -2.3v4.6l-3-2.3zM3 -2.3v4.6l-3-2.3z" fill="#444"/></g></svg>
<svg class="a" style="left:262.7px;top:599px;" width="16" height="16" viewBox="0 0 16 16"><defs><linearGradient id="tbg" x1="0" y1="0" x2="0" y2="1"><stop offset="0" stop-color="#f8f8f8"/><stop offset="1" stop-color="#c4c4c4"/></linearGradient><linearGradient id="tbg2" x1="0" y1="0" x2="0" y2="1"><stop offset="0" stop-color="#c8d0da"/><stop offset="1" stop-color="#98a4b2"/></linearGradient></defs><circle cx="8" cy="8" r="6.6" fill="url(#tbg)" stroke="#7a7a7a" stroke-width=".9"/><g transform="translate(8 8)"><path d="M.2 -2.3v4.6l3-2.3zM-3 -2.3v4.6l3-2.3z" fill="#444"/></g></svg>
<svg class="a" style="left:279.4px;top:599px;" width="16" height="16" viewBox="0 0 16 16"><defs><linearGradient id="tbg" x1="0" y1="0" x2="0" y2="1"><stop offset="0" stop-color="#f8f8f8"/><stop offset="1" stop-color="#c4c4c4"/></linearGradient><linearGradient id="tbg2" x1="0" y1="0" x2="0" y2="1"><stop offset="0" stop-color="#c8d0da"/><stop offset="1" stop-color="#98a4b2"/></linearGradient></defs><circle cx="8" cy="8" r="6.6" fill="url(#tbg2)" stroke="#7a7a7a" stroke-width=".9"/><g transform="translate(8 8)"><rect x="-2" y="-2" width="4" height="4" fill="#333"/></g></svg>
<svg class="a" style="left:296.1px;top:599px;" width="16" height="16" viewBox="0 0 16 16"><defs><linearGradient id="tbg" x1="0" y1="0" x2="0" y2="1"><stop offset="0" stop-color="#f8f8f8"/><stop offset="1" stop-color="#c4c4c4"/></linearGradient><linearGradient id="tbg2" x1="0" y1="0" x2="0" y2="1"><stop offset="0" stop-color="#c8d0da"/><stop offset="1" stop-color="#98a4b2"/></linearGradient></defs><circle cx="8" cy="8" r="6.6" fill="url(#tbg)" stroke="#7a7a7a" stroke-width=".9"/><g transform="translate(8 8)"><path d="M-1.5 -2.5v5l4-2.5z" fill="#444"/></g></svg>
<svg class="a" style="left:312.79999999999995px;top:599px;" width="16" height="16" viewBox="0 0 16 16"><defs><linearGradient id="tbg" x1="0" y1="0" x2="0" y2="1"><stop offset="0" stop-color="#f8f8f8"/><stop offset="1" stop-color="#c4c4c4"/></linearGradient><linearGradient id="tbg2" x1="0" y1="0" x2="0" y2="1"><stop offset="0" stop-color="#c8d0da"/><stop offset="1" stop-color="#98a4b2"/></linearGradient></defs><circle cx="8" cy="8" r="6.6" fill="url(#tbg)" stroke="#7a7a7a" stroke-width=".9"/><g transform="translate(8 8)"><rect x="-2.2" y="-2.5" width="1.6" height="5" fill="#444"/><rect x=".6" y="-2.5" width="1.6" height="5" fill="#444"/></g></svg>
<svg class="a" style="left:329.5px;top:599px;" width="16" height="16" viewBox="0 0 16 16"><defs><linearGradient id="tbg" x1="0" y1="0" x2="0" y2="1"><stop offset="0" stop-color="#f8f8f8"/><stop offset="1" stop-color="#c4c4c4"/></linearGradient><linearGradient id="tbg2" x1="0" y1="0" x2="0" y2="1"><stop offset="0" stop-color="#c8d0da"/><stop offset="1" stop-color="#98a4b2"/></linearGradient></defs><circle cx="8" cy="8" r="6.6" fill="url(#tbg)" stroke="#7a7a7a" stroke-width=".9"/><g transform="translate(8 8)"><circle cx="0" cy="0" r="2" fill="#444"/></g></svg>
<div class="a" style="left:357.5px;top:597.5px;width:285.5px;height:19px;background:linear-gradient(#1e1e1e,#2e2e2e);border:1px solid #555;border-radius:2px;"></div>
<div class="a" style="left:423.5px;top:598.5px;width:0.8px;height:17px;background:#3c3c3c;"></div>
<div class="a" style="left:523px;top:598.5px;width:0.8px;height:17px;background:#3c3c3c;"></div>
<div class="a" style="left:548px;top:598.5px;width:0.8px;height:17px;background:#3c3c3c;"></div>
<div class="a" style="left:592px;top:598.5px;width:0.8px;height:17px;background:#3c3c3c;"></div>
<div class="a" style="left:620px;top:598.5px;width:0.8px;height:17px;background:#3c3c3c;"></div>
<div class="t" style="left:361px;top:600.29px;font-size:6.9px;color:#d4d4d4;font-weight:normal;transform-origin:0 50%;">01 : 00 : 13 : 16.05</div>
<div class="t" style="right:584px;top:608.09px;font-size:6.9px;color:#d4d4d4;font-weight:normal;text-align:right;transform-origin:100% 50%;">8&nbsp;&nbsp;&nbsp;&nbsp;4&nbsp;&nbsp;&nbsp;&nbsp;4&nbsp;&nbsp;&nbsp;&nbsp;81</div>
<div class="t" style="right:555.5px;top:600.29px;font-size:6.9px;color:#d4d4d4;font-weight:normal;text-align:right;transform-origin:100% 50%;">1</div>
<div class="t" style="right:545px;top:600.29px;font-size:6.9px;color:#d4d4d4;font-weight:normal;text-align:right;transform-origin:100% 50%;">1</div>
<div class="t" style="right:534px;top:600.29px;font-size:6.9px;color:#d4d4d4;font-weight:normal;text-align:right;transform-origin:100% 50%;">1</div>
<div class="t" style="right:518.5px;top:600.29px;font-size:6.9px;color:#d4d4d4;font-weight:normal;text-align:right;transform-origin:100% 50%;">1</div>
<div class="t" style="right:555.5px;top:608.09px;font-size:6.9px;color:#d4d4d4;font-weight:normal;text-align:right;transform-origin:100% 50%;">25</div>
<div class="t" style="right:545px;top:608.09px;font-size:6.9px;color:#d4d4d4;font-weight:normal;text-align:right;transform-origin:100% 50%;">1</div>
<div class="t" style="right:534px;top:608.09px;font-size:6.9px;color:#d4d4d4;font-weight:normal;text-align:right;transform-origin:100% 50%;">1</div>
<div class="t" style="right:518.5px;top:608.09px;font-size:6.9px;color:#d4d4d4;font-weight:normal;text-align:right;transform-origin:100% 50%;">1</div>
<div class="t" style="right:480.5px;top:600.29px;font-size:6.9px;color:#d4d4d4;font-weight:normal;text-align:right;transform-origin:100% 50%;">140.0000</div>
<div class="t" style="right:480.5px;top:608.09px;font-size:6.9px;color:#d4d4d4;font-weight:normal;text-align:right;transform-origin:100% 50%;">130</div>
<div class="t" style="right:460.5px;top:600.29px;font-size:6.9px;color:#d4d4d4;font-weight:normal;text-align:right;transform-origin:100% 50%;">4/4</div>
<div class="t" style="right:460.5px;top:608.09px;font-size:6.9px;color:#d4d4d4;font-weight:normal;text-align:right;transform-origin:100% 50%;">/16</div>
<div class="t" style="left:556px;top:600.29px;font-size:6.9px;color:#d4d4d4;font-weight:normal;transform-origin:0 50%;">No In</div>
<div class="t" style="left:556px;top:608.09px;font-size:6.9px;color:#d4d4d4;font-weight:normal;transform-origin:0 50%;">No Out</div>
<div class="t" style="left:512px;width:200px;text-align:center;top:602.16px;font-size:3px;color:#bbb;font-weight:normal;transform-origin:50% 50%;">CPU</div>
<div class="t" style="left:512px;width:200px;text-align:center;top:609.96px;font-size:3px;color:#bbb;font-weight:normal;transform-origin:50% 50%;">HD</div>
<div class="a" style="left:621px;top:598.5px;width:21px;height:17px;background:#262626;"></div>
<div class="a" style="left:652.5px;top:598.8px;width:101px;height:16.4px;background:linear-gradient(#b4b4b4,#cacaca);border-radius:8px;"></div>
<svg class="a" style="left:653.0px;top:599px;" width="16" height="16" viewBox="0 0 16 16"><circle cx="8" cy="8" r="6.6" fill="url(#tbg)" stroke="#7a7a7a" stroke-width=".9"/><g transform="translate(8 8)"><path d="M-3 1.5a3 3 0 0 1 6 0" fill="none" stroke="#444" stroke-width="1.6"/></g></svg>
<svg class="a" style="left:669.8px;top:599px;" width="16" height="16" viewBox="0 0 16 16"><defs><radialGradient id="grn" cx=".5" cy=".4" r=".6"><stop offset="0" stop-color="#b8f0a8"/><stop offset="1" stop-color="#3cc040"/></radialGradient></defs><circle cx="8" cy="8" r="6.8" fill="url(#grn)" stroke="#5a9a5a" stroke-width=".8"/><g transform="translate(8 8)"><rect x="-2.6" y="-1.6" width="5.2" height="3.2" rx="1.4" fill="none" stroke="#1a4a1a" stroke-width="1"/></g></svg>
<svg class="a" style="left:686.6px;top:599px;" width="16" height="16" viewBox="0 0 16 16"><circle cx="8" cy="8" r="6.6" fill="url(#tbg)" stroke="#7a7a7a" stroke-width=".9"/><g transform="translate(8 8)"><path d="M-2.5 2.5h5M-1.5 1.5v-3l-1 1M1.5 1.5v-3l1 1" stroke="#444" stroke-width=".8" fill="none"/></g></svg>
<svg class="a" style="left:703.4px;top:599px;" width="16" height="16" viewBox="0 0 16 16"><circle cx="8" cy="8" r="6.6" fill="url(#tbg)" stroke="#7a7a7a" stroke-width=".9"/><g transform="translate(8 8)"><rect x="-2" y="-2.6" width="4" height="5.2" rx=".8" fill="#555"/></g></svg>
<svg class="a" style="left:720.2px;top:599px;" width="16" height="16" viewBox="0 0 16 16"><circle cx="8" cy="8" r="6.6" fill="url(#tbg)" stroke="#7a7a7a" stroke-width=".9"/><g transform="translate(8 8)"><rect x="-1.8" y="-2.6" width="3.6" height="5.2" fill="#444"/><rect x="-.8" y="-1.6" width="1.6" height="1.2" fill="#ddd"/></g></svg>
<svg class="a" style="left:737.0px;top:599px;" width="16" height="16" viewBox="0 0 16 16"><circle cx="8" cy="8" r="6.6" fill="url(#tbg)" stroke="#7a7a7a" stroke-width=".9"/><g transform="translate(8 8)"><path d="M0 -3l2.6 5.5h-5.2z" fill="#444"/></g></svg>
<svg class="a" style="left:923px;top:601px;" width="12" height="12" viewBox="0 0 12 12"><path d="M1.5 4.8h1.8l2.4-2v6.4l-2.4-2H1.5z" fill="#333"/></svg>
<div class="a" style="left:934px;top:606.5px;width:41px;height:0.9px;background:#6a6a6a;"></div>
<svg class="a" style="left:959px;top:603px;" width="8" height="8" viewBox="0 0 8 8"><defs><radialGradient id="vk" cx=".5" cy=".35" r=".6"><stop offset="0" stop-color="#fff"/><stop offset="1" stop-color="#c8c8c8"/></radialGradient></defs><circle cx="3.8" cy="3.9" r="2.9" fill="url(#vk)" stroke="#777" stroke-width=".7"/></svg>
<svg class="a" style="left:975px;top:601px;" width="13" height="12" viewBox="0 0 13 12"><path d="M1.5 4.8h1.8l2.4-2v6.4l-2.4-2H1.5z" fill="#333"/><path d="M7 4.2q.9 1.8 0 3.6M8.5 3.2q1.5 2.8 0 5.6" stroke="#333" stroke-width=".8" fill="none"/></svg>
<svg class="a" style="left:950px;top:9px;" width="50" height="50" viewBox="0 0 50 50"><defs><linearGradient id="mg" x1="0" y1="0" x2="0" y2="1"><stop offset="0" stop-color="#e4ecf2"/><stop offset=".25" stop-color="#c4d8e8"/><stop offset=".42" stop-color="#98bcd8"/><stop offset=".44" stop-color="#6a7a88"/><stop offset=".47" stop-color="#b8d8ec"/><stop offset=".62" stop-color="#c8e6f6"/><stop offset=".64" stop-color="#9aa8b0"/><stop offset=".67" stop-color="#dadada"/><stop offset="1" stop-color="#c4c4c4"/></linearGradient><clipPath id="mc"><circle cx="24.5" cy="23.5" r="21.5"/></clipPath></defs><circle cx="24.5" cy="23.5" r="23" fill="#666" opacity=".35"/><circle cx="24.5" cy="23.5" r="21.5" fill="url(#mg)"/><g clip-path="url(#mc)"><rect x="2" y="20.5" width="46" height="7.5" rx="3.7" fill="#d8f2fe" stroke="#8aa8bc" stroke-width=".5"/><path d="M9 33h31M11 36h27M13 38.5h23" stroke="#8a8a8a" stroke-width=".6"/><ellipse cx="24.5" cy="8" rx="2.6" ry="4" fill="#a8c2d6"/></g><circle cx="24.5" cy="23.5" r="21.5" fill="none" stroke="#8a8a8a" stroke-width="1.4"/><path d="M23.2 42.5l1.3 1.3 1.3-1.3z" fill="#444"/></svg>
<div class="t" style="left:874.5px;width:200px;text-align:center;top:30.79px;font-size:4.6px;color:#2a3a4a;font-weight:bold;transform-origin:50% 50%;">Esc</div>
</body></html>
